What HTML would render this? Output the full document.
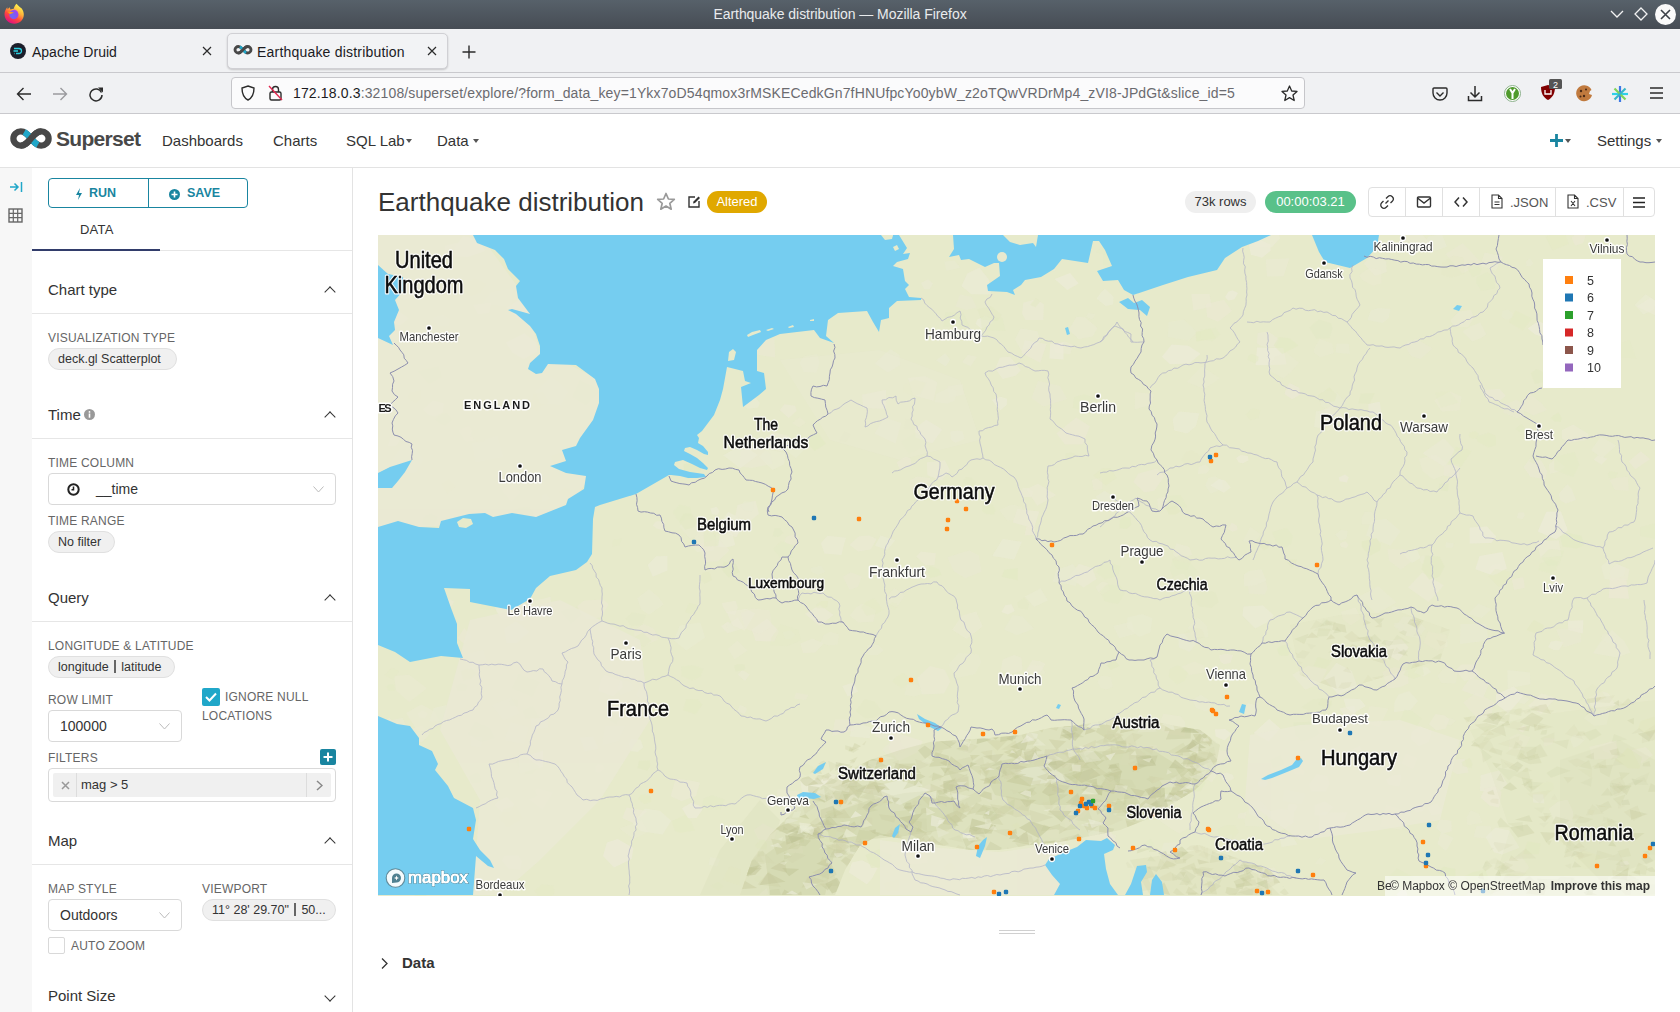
<!DOCTYPE html>
<html><head><meta charset="utf-8"><title>Earthquake distribution</title>
<style>
*{box-sizing:border-box;margin:0;padding:0}
html,body{width:1680px;height:1012px;overflow:hidden;background:#fff;font-family:"Liberation Sans",sans-serif;color:#333}
.abs{position:absolute}
#titlebar{position:absolute;left:0;top:0;width:1680px;height:29px;background:linear-gradient(#57616a,#464c54)}
#titlebar .t{position:absolute;left:0;width:1680px;top:6px;text-align:center;color:#e9ebed;font-size:14px;letter-spacing:-0.05px}
#tabbar{position:absolute;left:0;top:29px;width:1680px;height:44px;background:#f0f1f3;border-bottom:1px solid #c9c9cd}
#acttab{position:absolute;left:227px;top:4px;width:221px;height:36px;background:#f2f3f5;border:1px solid #d0d0d4;border-radius:5px;box-shadow:0 1px 2px rgba(0,0,0,0.18)}
.tabt{position:absolute;top:15px;font-size:14px;color:#1b1b1f;white-space:nowrap}
#navbar{position:absolute;left:0;top:73px;width:1680px;height:41px;background:#f0f1f3;border-bottom:1px solid #c9c9cd}
#urlbox{position:absolute;left:231px;top:4px;width:1074px;height:32px;background:#fbfbfc;border:1px solid #c6c6ca;border-radius:4px}
#urlbox .url{position:absolute;left:61px;top:7px;font-size:14px;color:#6b6b70;white-space:nowrap;letter-spacing:0.145px}
#header{position:absolute;left:0;top:114px;width:1680px;height:54px;background:#fff;border-bottom:1px solid #e3e3e3}
.logo-t{left:56px;top:13px;font-size:21px;font-weight:bold;color:#484848;letter-spacing:-0.7px}
.navi{top:18px;font-size:15px;color:#333}
.caret{width:0;height:0;border-left:3.5px solid transparent;border-right:3.5px solid transparent;border-top:4px solid #555}
#leftrail{position:absolute;left:0;top:168px;width:32px;height:844px;background:#f7f7f7}
#panel{position:absolute;left:32px;top:168px;width:321px;height:844px;background:#fff;border-right:1px solid #e3e3e3}
.btngrp{width:200px;height:30px;border:1px solid #1985a0;border-radius:4px;display:flex;overflow:hidden}
.bseg{position:relative;height:28px;color:#1985a0;font-size:12.5px;font-weight:bold}
.tabdata{font-size:13px;color:#333;letter-spacing:0.2px}
.sect{left:16px;font-size:15px;color:#333}
.chev{left:294px;width:10px;height:10px}
.chev.up{border-left:1.5px solid #333;border-top:1.5px solid #333;transform:rotate(45deg);width:8px;height:8px}
.chev.down{border-right:1.5px solid #333;border-bottom:1.5px solid #333;transform:rotate(45deg);width:8px;height:8px}
.hr{left:0;width:320px;height:1px;background:#e6e6e6}
.lbl{left:16px;font-size:12px;color:#666;letter-spacing:0.2px;white-space:nowrap}
.pill{height:22px;background:#f0f0f0;border:1px solid #e0e0e0;border-radius:11px;font-size:12.5px;color:#333;padding-left:9px;line-height:20px;white-space:nowrap}
.sel{background:#fff;border:1px solid #d9d9d9;border-radius:4px}
#main{position:absolute;left:353px;top:168px;width:1327px;height:844px;background:#fff}
.title{left:25px;top:19px;font-size:26px;color:#333}
.badge{height:22px;border-radius:11px;font-size:13px;text-align:center;line-height:22px}
.btns{height:30px;border:1px solid #e0e0e0;border-radius:4px;display:flex;background:#fff}
.btns .b{position:relative;height:28px;border-right:1px solid #e0e0e0;text-align:center;font-size:14px;color:#333}
#map{position:absolute;left:378px;top:235px;width:1277px;height:661px;overflow:hidden}

</style></head>
<body>
<div id="titlebar">
  <svg class="abs" style="left:0;top:0" width="29" height="29" viewBox="0 0 29 29">
    <defs>
      <linearGradient id="ffo" x1="0.8" y1="0.1" x2="0.3" y2="0.95"><stop offset="0" stop-color="#fff44f"/><stop offset="0.35" stop-color="#ffb23a"/><stop offset="0.65" stop-color="#ff4a3c"/><stop offset="1" stop-color="#e2127e"/></linearGradient>
      <radialGradient id="ffp" cx="0.35" cy="0.65" r="0.8"><stop offset="0" stop-color="#6b6cf5"/><stop offset="0.6" stop-color="#8b4ff0"/><stop offset="1" stop-color="#b040f0"/></radialGradient>
    </defs>
    <path d="M16.5,3.8 C18.5,6 20,7.5 21.5,8.2 C23,10 23.8,12.5 23.8,14.5 C23.8,19.8 19.5,23.8 14.3,23.8 C9,23.8 4.5,19.8 4.5,14.3 C4.5,11.5 5.6,9 7.3,7.2 L7.6,9.2 L9.6,7.3 L10.5,9.5 C11.5,9 12.8,8.8 13.8,8.8 C14.2,6.8 15.2,5 16.5,3.8Z" fill="url(#ffo)"/>
    <circle cx="13.9" cy="14.6" r="4.6" fill="url(#ffp)"/>
    <path d="M7.3,11.8 C9,11.5 12,12 14,12.5 C12.5,13.2 11,13.6 10,14.2 C9.2,13 8.2,12.2 7.3,11.8Z" fill="#ffa10f"/>
    <path d="M13.5,9.5 C15,9.5 16.5,10.2 17,11 L15.5,11.5Z" fill="#b040f0" opacity="0.7"/>
  </svg>
  <div class="t">Earthquake distribution — Mozilla Firefox</div>
  <svg class="abs" style="left:1610px;top:8px" width="14" height="12" viewBox="0 0 14 12"><path d="M1,3 L7,9 L13,3" fill="none" stroke="#f2f2f2" stroke-width="1.3"/></svg>
  <svg class="abs" style="left:1634px;top:7px" width="14" height="14" viewBox="0 0 14 14"><path d="M7,1 L13,7 L7,13 L1,7Z" fill="none" stroke="#f2f2f2" stroke-width="1.3"/></svg>
  <svg class="abs" style="left:1655px;top:4px" width="21" height="21" viewBox="0 0 21 21"><circle cx="10.5" cy="10.5" r="10.5" fill="#fafafa"/><path d="M6,6 L15,15 M15,6 L6,15" stroke="#3b4047" stroke-width="1.6"/></svg>
</div>
<div id="tabbar">
  <svg class="abs" style="left:10px;top:14px" width="16" height="16" viewBox="0 0 16 16"><circle cx="8" cy="8" r="8" fill="#1c1e2a"/><path d="M4,5.5 H9 A2.5,2.5 0 0 1 9,10.5 H6 M3.5,8 H8 M5,10.5 H4.5" fill="none" stroke="#2ccfe0" stroke-width="1.3"/></svg>
  <div class="tabt" style="left:32px">Apache Druid</div>
  <svg class="abs" style="left:202px;top:17px" width="10" height="10" viewBox="0 0 10 10"><path d="M1,1 L9,9 M9,1 L1,9" stroke="#2b2b2b" stroke-width="1.2"/></svg>
  <div id="acttab"></div>
  <svg class="abs" style="left:233px;top:15px" width="20" height="12" viewBox="9 128 44 22"><path d="M31,138.5 C27,134 25,131.3 20.8,131.3 C16.8,131.3 13.4,134.5 13.4,138.5 C13.4,142.5 16.8,145.7 20.8,145.7 C25,145.7 27,143 31,138.5 C35,134 37,131.3 41.2,131.3 C45.2,131.3 48.6,134.5 48.6,138.5 C48.6,142.5 45.2,145.7 41.2,145.7 C37,145.7 35,143 31,138.5Z" fill="none" stroke="#484848" stroke-width="6.3"/><path d="M24.2,131.9 C27,133.5 28.5,135.5 31,138.5 C33.5,141.5 35,143.5 37.8,145.1" fill="none" stroke="#20a7c9" stroke-width="6.3"/><path d="M20.8,145.7 C25,145.7 27,143 31,138.5 C35,134 37,131.3 41.2,131.3" fill="none" stroke="#484848" stroke-width="6.3"/></svg>
  <div class="tabt" style="left:257px;letter-spacing:0.2px">Earthquake distribution</div>
  <svg class="abs" style="left:427px;top:17px" width="10" height="10" viewBox="0 0 10 10"><path d="M1,1 L9,9 M9,1 L1,9" stroke="#2b2b2b" stroke-width="1.2"/></svg>
  <svg class="abs" style="left:462px;top:16px" width="14" height="14" viewBox="0 0 14 14"><path d="M7,0.5 V13.5 M0.5,7 H13.5" stroke="#2b2b2b" stroke-width="1.4"/></svg>
</div>
<div id="navbar">
  <svg class="abs" style="left:16px;top:14px" width="16" height="14" viewBox="0 0 16 14"><path d="M15,7 H1.5 M7.5,1 L1.5,7 L7.5,13" fill="none" stroke="#2b2b2b" stroke-width="1.4"/></svg>
  <svg class="abs" style="left:52px;top:14px" width="16" height="14" viewBox="0 0 16 14"><path d="M1,7 H14.5 M8.5,1 L14.5,7 L8.5,13" fill="none" stroke="#9a9a9e" stroke-width="1.4"/></svg>
  <svg class="abs" style="left:88px;top:13px" width="16" height="16" viewBox="0 0 16 16"><path d="M13.5,6.5 A6,6 0 1 0 14,9" fill="none" stroke="#2b2b2b" stroke-width="1.5"/><path d="M10,1.5 L15,1.5 L15,6.5Z" fill="#2b2b2b"/></svg>
  <div id="urlbox">
    <svg class="abs" style="left:9px;top:7px" width="14" height="16" viewBox="0 0 14 16"><path d="M7,1 L13,3 C13,9 11,13 7,15 C3,13 1,9 1,3Z" fill="none" stroke="#2b2b2b" stroke-width="1.4"/></svg>
    <svg class="abs" style="left:36px;top:7px" width="15" height="16" viewBox="0 0 15 16"><rect x="2" y="7" width="11" height="8" rx="1.5" fill="none" stroke="#2b2b2b" stroke-width="1.4"/><path d="M4.5,7 V4.5 A3,3 0 0 1 10.5,4.5 V7" fill="none" stroke="#2b2b2b" stroke-width="1.4"/><path d="M1,1 L14,15" stroke="#e22850" stroke-width="1.4"/></svg>
    <div class="url"><span style="color:#1b1b1f">172.18.0.3</span>:32108/superset/explore/?form_data_key=1Ykx7oD54qmox3rMSKECedkGn7fHNUfpcYo0ybW_z2oTQwVRDrMp4_zVI8-JPdGt&amp;slice_id=5</div>
    <svg class="abs" style="left:1049px;top:7px" width="17" height="17" viewBox="0 0 17 17"><path d="M8.5,1 L10.7,6 L16,6.4 L12,10 L13.2,15.5 L8.5,12.6 L3.8,15.5 L5,10 L1,6.4 L6.3,6Z" fill="none" stroke="#2b2b2b" stroke-width="1.3" stroke-linejoin="round"/></svg>
  </div>
  <svg class="abs" style="left:1432px;top:13px" width="16" height="16" viewBox="0 0 16 16"><path d="M2,2 H14 A1,1 0 0 1 15,3 V7 A7,7 0 0 1 1,7 V3 A1,1 0 0 1 2,2Z" fill="none" stroke="#2b2b2b" stroke-width="1.4"/><path d="M4.5,6.5 L8,10 L11.5,6.5" fill="none" stroke="#2b2b2b" stroke-width="1.4"/></svg>
  <svg class="abs" style="left:1467px;top:12px" width="16" height="17" viewBox="0 0 16 17"><path d="M8,1 V12 M3.5,7.5 L8,12 L12.5,7.5 M1.5,11 V15.5 H14.5 V11" fill="none" stroke="#2b2b2b" stroke-width="1.5"/></svg>
  <svg class="abs" style="left:1504px;top:12px" width="17" height="17" viewBox="0 0 17 17"><circle cx="8.5" cy="8.5" r="8" fill="#fff" stroke="#8bb08a" stroke-width="1"/><circle cx="8.5" cy="8.5" r="6.5" fill="#4f9a2c"/><path d="M6,4 L8.5,8 L11,4 M8.5,8 V14" stroke="#fff" stroke-width="2" fill="none"/></svg>
  <svg class="abs" style="left:1540px;top:6px" width="22" height="24" viewBox="0 0 22 24"><path d="M1,8 L8,6 L15,8 C15,15 12,19 8,21 C4,19 1,15 1,8Z" fill="#800000"/><path d="M5,11 V15 H11 V11" fill="none" stroke="#fff" stroke-width="1.3"/><rect x="9" y="0" width="13" height="10" rx="1.5" fill="#555"/><text x="15.5" y="8.5" font-size="9" fill="#fff" text-anchor="middle" font-family="Liberation Sans">2</text></svg>
  <svg class="abs" style="left:1576px;top:12px" width="17" height="17" viewBox="0 0 17 17"><path d="M15.5,5 A8,8 0 1 0 16,10 L13,9 L14,6Z" fill="#c07a3e"/><circle cx="5" cy="6" r="1.2" fill="#4a2a16"/><circle cx="8" cy="11" r="1.2" fill="#4a2a16"/><circle cx="4.5" cy="11.5" r="1" fill="#4a2a16"/><circle cx="10" cy="4.5" r="1" fill="#4a2a16"/></svg>
  <svg class="abs" style="left:1611px;top:12px" width="18" height="18" viewBox="0 0 18 18"><path d="M9,1 V17" stroke="#3d7ae6" stroke-width="2.2"/><path d="M1,9 H17" stroke="#2fd0e8" stroke-width="2.2"/><path d="M3.5,3.5 L14.5,14.5" stroke="#7fd45a" stroke-width="2.2"/><path d="M14.5,3.5 L3.5,14.5" stroke="#37b6c8" stroke-width="2.2"/></svg>
  <svg class="abs" style="left:1650px;top:14px" width="13" height="12" viewBox="0 0 13 12"><path d="M0,1 H13 M0,6 H13 M0,11 H13" stroke="#2b2b2b" stroke-width="1.4"/></svg>
</div>

<div id="header">
  <svg class="abs" style="left:0;top:0" width="60" height="54" viewBox="0 114 60 54">
    <path d="M31,138.5 C27,134 25,131.3 20.8,131.3 C16.8,131.3 13.4,134.5 13.4,138.5 C13.4,142.5 16.8,145.7 20.8,145.7 C25,145.7 27,143 31,138.5 C35,134 37,131.3 41.2,131.3 C45.2,131.3 48.6,134.5 48.6,138.5 C48.6,142.5 45.2,145.7 41.2,145.7 C37,145.7 35,143 31,138.5Z" fill="none" stroke="#484848" stroke-width="6.3"/>
    <path d="M24.2,131.9 C27,133.5 28.5,135.5 31,138.5 C33.5,141.5 35,143.5 37.8,145.1" fill="none" stroke="#20a7c9" stroke-width="6.3"/>
    <path d="M20.8,145.7 C25,145.7 27,143 31,138.5 C35,134 37,131.3 41.2,131.3" fill="none" stroke="#484848" stroke-width="6.3"/>
  </svg>
  <div class="abs logo-t">Superset</div>
  <div class="abs navi" style="left:162px">Dashboards</div>
  <div class="abs navi" style="left:273px">Charts</div>
  <div class="abs navi" style="left:346px">SQL Lab</div>
  <div class="abs caret" style="left:406px;top:25px"></div>
  <div class="abs navi" style="left:437px">Data</div>
  <div class="abs caret" style="left:473px;top:25px"></div>
  <svg class="abs" style="left:1550px;top:20px" width="13" height="13" viewBox="0 0 13 13"><path d="M6.5,0 V13 M0,6.5 H13" stroke="#1985a0" stroke-width="2.8"/></svg>
  <div class="abs caret" style="left:1565px;top:25px"></div>
  <div class="abs navi" style="left:1597px">Settings</div>
  <div class="abs caret" style="left:1656px;top:25px"></div>
</div>
<div id="leftrail">
  <svg class="abs" style="left:9px;top:13px" width="14" height="12" viewBox="0 0 14 12"><path d="M1,6 H9 M5.5,2.5 L9,6 L5.5,9.5 M12.5,1 V11" fill="none" stroke="#20a7c9" stroke-width="1.5"/></svg>
  <svg class="abs" style="left:8px;top:40px" width="15" height="15" viewBox="0 0 15 15"><rect x="1" y="1" width="13" height="13" fill="none" stroke="#666" stroke-width="1.4"/><path d="M5.3,1 V14 M9.7,1 V14 M1,5.3 H14 M1,9.7 H14" stroke="#666" stroke-width="1.2"/></svg>
</div>
<div id="panel">
  <div class="abs btngrp" style="left:16px;top:10px">
    <div class="bseg" style="width:100px">
      <svg style="position:absolute;left:26px;top:9px" width="8" height="12" viewBox="0 0 8 12"><path d="M5,0 L1,7 H4 L3,12 L7,5 H4Z" fill="#1985a0"/></svg>
      <span style="position:absolute;left:40px;top:7px">RUN</span>
    </div>
    <div class="bseg" style="width:100px;border-left:1px solid #1985a0">
      <svg style="position:absolute;left:20px;top:10px" width="11" height="11" viewBox="0 0 11 11"><circle cx="5.5" cy="5.5" r="5.5" fill="#1985a0"/><path d="M5.5,2.5 V8.5 M2.5,5.5 H8.5" stroke="#fff" stroke-width="1.6"/></svg>
      <span style="position:absolute;left:38px;top:7px">SAVE</span>
    </div>
  </div>
  <div class="abs" style="left:0;top:82px;width:320px;height:1px;background:#e6e6e6"></div>
  <div class="abs" style="left:0;top:81px;width:128px;height:2px;background:#323d6b"></div>
  <div class="abs tabdata" style="left:48px;top:54px">DATA</div>

  <div class="abs sect" style="top:113px">Chart type</div><div class="abs chev up" style="top:120px"></div>
  <div class="abs hr" style="top:145px"></div>
  <div class="abs lbl" style="top:163px">VISUALIZATION TYPE</div>
  <div class="abs pill" style="left:16px;top:180px;width:129px">deck.gl Scatterplot</div>

  <div class="abs sect" style="top:238px">Time</div>
  <svg class="abs" style="left:52px;top:241px" width="11" height="11" viewBox="0 0 11 11"><circle cx="5.5" cy="5.5" r="5.5" fill="#999"/><rect x="4.7" y="4.5" width="1.6" height="4.2" fill="#fff"/><circle cx="5.5" cy="2.9" r="0.9" fill="#fff"/></svg>
  <div class="abs chev up" style="top:245px"></div>
  <div class="abs hr" style="top:270px"></div>
  <div class="abs lbl" style="top:288px">TIME COLUMN</div>
  <div class="abs sel" style="left:16px;top:305px;width:288px;height:32px">
    <svg style="position:absolute;left:18px;top:9px" width="13" height="13" viewBox="0 0 13 13"><circle cx="6.5" cy="6.5" r="5.2" fill="none" stroke="#222" stroke-width="2"/><path d="M6.5,3.5 V6.8 H4.5" fill="none" stroke="#222" stroke-width="1.5"/></svg>
    <span style="position:absolute;left:47px;top:7px;font-size:14px;color:#333">__time</span>
    <svg style="position:absolute;right:11px;top:12px" width="11" height="7" viewBox="0 0 11 7"><path d="M0.5,0.5 L5.5,6 L10.5,0.5" fill="none" stroke="#bbb" stroke-width="1"/></svg>
  </div>
  <div class="abs lbl" style="top:346px">TIME RANGE</div>
  <div class="abs pill" style="left:16px;top:363px;width:67px">No filter</div>

  <div class="abs sect" style="top:421px">Query</div><div class="abs chev up" style="top:428px"></div>
  <div class="abs hr" style="top:453px"></div>
  <div class="abs lbl" style="top:471px">LONGITUDE &amp; LATITUDE</div>
  <div class="abs pill" style="left:16px;top:488px;width:127px">longitude <span style="display:inline-block;width:1.5px;height:13px;background:#666;vertical-align:-2px;margin:0 2px"></span> latitude</div>
  <div class="abs lbl" style="top:525px">ROW LIMIT</div>
  <div class="abs sel" style="left:16px;top:542px;width:134px;height:32px">
    <span style="position:absolute;left:11px;top:7px;font-size:14px;color:#333">100000</span>
    <svg style="position:absolute;right:11px;top:12px" width="11" height="7" viewBox="0 0 11 7"><path d="M0.5,0.5 L5.5,6 L10.5,0.5" fill="none" stroke="#bbb" stroke-width="1"/></svg>
  </div>
  <div class="abs" style="left:170px;top:520px;width:18px;height:18px;background:#20a7c9;border-radius:2px">
    <svg style="position:absolute;left:3px;top:4px" width="12" height="10" viewBox="0 0 12 10"><path d="M1,5 L4.5,8.5 L11,1.5" fill="none" stroke="#fff" stroke-width="2"/></svg>
  </div>
  <div class="abs lbl" style="left:193px;top:522px">IGNORE NULL</div>
  <div class="abs lbl" style="left:170px;top:541px">LOCATIONS</div>
  <div class="abs lbl" style="top:583px">FILTERS</div>
  <div class="abs" style="left:288px;top:581px;width:16px;height:16px;background:#1985a0;border-radius:2px">
    <svg style="position:absolute;left:3px;top:3px" width="10" height="10" viewBox="0 0 10 10"><path d="M5,0.5 V9.5 M0.5,5 H9.5" stroke="#fff" stroke-width="2"/></svg>
  </div>
  <div class="abs sel" style="left:16px;top:600px;width:288px;height:34px">
    <div style="position:absolute;left:4px;top:4px;width:278px;height:24px;background:#f0f0f0;border-radius:2px">
      <svg style="position:absolute;left:8px;top:8px" width="9" height="9" viewBox="0 0 9 9"><path d="M1,1 L8,8 M8,1 L1,8" stroke="#999" stroke-width="1.5"/></svg>
      <div style="position:absolute;left:23px;top:0;width:1px;height:24px;background:#ddd"></div>
      <span style="position:absolute;left:28px;top:4px;font-size:13px;color:#333">mag &gt; 5</span>
      <div style="position:absolute;left:253px;top:0;width:1px;height:24px;background:#ddd"></div>
      <svg style="position:absolute;left:263px;top:7px" width="7" height="11" viewBox="0 0 7 11"><path d="M1,1 L6,5.5 L1,10" fill="none" stroke="#888" stroke-width="1.5"/></svg>
    </div>
  </div>

  <div class="abs sect" style="top:664px">Map</div><div class="abs chev up" style="top:671px"></div>
  <div class="abs hr" style="top:696px"></div>
  <div class="abs lbl" style="top:714px">MAP STYLE</div>
  <div class="abs lbl" style="left:170px;top:714px">VIEWPORT</div>
  <div class="abs sel" style="left:16px;top:731px;width:134px;height:32px">
    <span style="position:absolute;left:11px;top:7px;font-size:14px;color:#333">Outdoors</span>
    <svg style="position:absolute;right:11px;top:12px" width="11" height="7" viewBox="0 0 11 7"><path d="M0.5,0.5 L5.5,6 L10.5,0.5" fill="none" stroke="#bbb" stroke-width="1"/></svg>
  </div>
  <div class="abs pill" style="left:170px;top:731px;width:134px">11° 28' 29.70" <span style="display:inline-block;width:1.5px;height:13px;background:#666;vertical-align:-2px;margin:0 2px"></span> 50...</div>
  <div class="abs" style="left:16px;top:769px;width:17px;height:17px;border:1px solid #d9d9d9;border-radius:2px;background:#fff"></div>
  <div class="abs lbl" style="left:39px;top:771px">AUTO ZOOM</div>
  <div class="abs sect" style="top:819px">Point Size</div><div class="abs chev down" style="top:824px"></div>
</div>
<div id="main">
  <div class="abs title">Earthquake distribution</div>
  <svg class="abs" style="left:303px;top:24px" width="20" height="19" viewBox="0 0 20 19"><path d="M10,1.5 L12.4,7 L18.3,7.4 L13.8,11.3 L15.2,17.2 L10,14 L4.8,17.2 L6.2,11.3 L1.7,7.4 L7.6,7Z" fill="none" stroke="#999" stroke-width="1.7" stroke-linejoin="round"/></svg>
  <svg class="abs" style="left:334px;top:27px" width="14" height="14" viewBox="0 0 14 14"><path d="M8,2 H2 V12 H12 V6" fill="none" stroke="#333" stroke-width="1.4"/><path d="M6,8.5 L6.5,6.5 L11.5,1.5 L13,3 L8,8Z" fill="#333"/></svg>
  <div class="abs badge" style="left:354px;top:23px;width:60px;background:#e0a800;color:#fff">Altered</div>
  <div class="abs badge" style="left:832px;top:23px;width:71px;background:#efefef;color:#333">73k rows</div>
  <div class="abs badge" style="left:912px;top:23px;width:91px;background:#59c189;color:#fff">00:00:03.21</div>
  <div class="abs btns" style="left:1015px;top:19px">
    <div class="b" style="width:37px"><svg width="16" height="16" viewBox="0 0 16 16" style="margin-top:6px"><path d="M6.5,9.5 L9.5,6.5 M7,4.5 L8.8,2.7 A2.5,2.5 0 0 1 13.3,7.2 L11.5,9 M9,11.5 L7.2,13.3 A2.5,2.5 0 0 1 2.7,8.8 L4.5,7" fill="none" stroke="#333" stroke-width="1.3"/></svg></div>
    <div class="b" style="width:37px"><svg width="16" height="14" viewBox="0 0 16 14" style="margin-top:7px"><rect x="1.5" y="2" width="13" height="10" rx="1" fill="none" stroke="#333" stroke-width="1.4"/><path d="M1.5,3 L8,8 L14.5,3" fill="none" stroke="#333" stroke-width="1.4"/></svg></div>
    <div class="b" style="width:37px"><svg width="14" height="12" viewBox="0 0 14 12" style="margin-top:8px"><path d="M5,1.5 L1,6 L5,10.5 M9,1.5 L13,6 L9,10.5" fill="none" stroke="#333" stroke-width="1.5"/></svg></div>
    <div class="b" style="width:76px"><svg width="12" height="15" viewBox="0 0 12 15" style="position:absolute;left:11px;top:6px"><path d="M1,1 H7.5 L11,4.5 V14 H1Z M7.5,1 V4.5 H11 M3.5,8 H8.5 M3.5,10.5 H8.5" fill="none" stroke="#333" stroke-width="1.1"/></svg><span style="position:absolute;left:30px;top:7px;font-size:13px;color:#555">.JSON</span></div>
    <div class="b" style="width:68px"><svg width="12" height="15" viewBox="0 0 12 15" style="position:absolute;left:11px;top:6px"><path d="M1,1 H7.5 L11,4.5 V14 H1Z M7.5,1 V4.5 H11 M4,7 L8,12 M8,7 L4,12" fill="none" stroke="#333" stroke-width="1.1"/></svg><span style="position:absolute;left:30px;top:7px;font-size:13px;color:#555">.CSV</span></div>
    <div class="b" style="width:30px;border-right:none"><svg width="12" height="11" viewBox="0 0 12 11" style="margin-top:9px"><path d="M0,1 H12 M0,5.5 H12 M0,10 H12" stroke="#222" stroke-width="1.6"/></svg></div>
  </div>
  <div class="abs" style="left:646px;top:762px;width:36px;height:1px;background:#d0d0d0"></div>
  <div class="abs" style="left:646px;top:765px;width:36px;height:1px;background:#d0d0d0"></div>
  <svg class="abs" style="left:27px;top:789px" width="9" height="13" viewBox="0 0 9 13"><path d="M2,1.5 L7,6.5 L2,11.5" fill="none" stroke="#333" stroke-width="1.3"/></svg>
  <div class="abs" style="left:49px;top:786px;font-size:15px;font-weight:bold;color:#333">Data</div>
</div>

<div id="map"><svg width="1277" height="661" viewBox="378 235 1277 661" style="display:block;font-family:'Liberation Sans',sans-serif">
<rect x="378" y="235" width="1277" height="661" fill="#e7eacb"/>
<defs><clipPath id="cpA"><polygon points="740,895 752,860 770,835 790,815 815,790 840,775 870,760 900,750 930,742 960,740 990,738 1020,735 1050,728 1080,725 1110,720 1140,718 1170,725 1200,730 1220,745 1215,770 1195,790 1170,805 1150,818 1120,830 1090,836 1060,842 1030,845 1000,850 970,850 940,845 910,840 880,835 860,845 845,870 835,895"/></clipPath><clipPath id="cpC"><polygon points="1450,720 1540,705 1655,690 1655,895 1470,895 1500,830 1480,770"/></clipPath><clipPath id="cpS"><polygon points="1290,625 1340,615 1400,612 1450,630 1440,660 1400,672 1340,690 1300,675"/></clipPath><clipPath id="cpD"><polygon points="1120,850 1200,845 1270,870 1290,895 1140,895"/></clipPath><clipPath id="cpJ"><polygon points="800,780 840,745 870,735 850,770 815,800"/></clipPath></defs><g><polygon points="1163.6,713.7 1180.8,716.6 1185.0,721.8 1184.8,736.2 1169.2,734.3 1157.2,728.6" fill="#ebe9d4" opacity="0.51"/><polygon points="1551.4,744.7 1543.8,746.6 1543.7,738.1 1555.6,738.6" fill="#ebe9d4" opacity="0.53"/><polygon points="647.3,810.9 633.6,823.2 622.4,817.9 626.4,807.4" fill="#ebe9d4" opacity="0.73"/><polygon points="1119.1,638.2 1113.3,626.1 1131.7,621.4 1134.8,634.1" fill="#e9ead2" opacity="0.54"/><polygon points="886.6,596.7 894.1,588.0 905.2,595.1 896.7,607.7 888.1,603.6" fill="#e9ead2" opacity="0.50"/><polygon points="976.2,611.5 982.6,626.2 966.8,639.0 952.2,629.8 962.1,615.6" fill="#ebe9d4" opacity="0.52"/><polygon points="1408.6,647.4 1398.7,660.7 1388.8,655.7 1385.2,641.3 1401.5,638.9" fill="#ecebd8" opacity="0.79"/><polygon points="1199.5,772.2 1185.0,770.1 1185.8,761.0 1199.2,757.9" fill="#ebe9d4" opacity="0.46"/><polygon points="1548.0,646.9 1550.8,641.7 1556.4,640.6 1563.5,642.6 1559.2,650.2 1553.9,650.1" fill="#ecebd8" opacity="0.60"/><polygon points="1040.6,588.2 1047.9,600.5 1034.1,607.1 1024.8,596.5" fill="#e9ead2" opacity="0.69"/><polygon points="1593.5,459.8 1598.1,454.9 1607.5,458.8 1601.5,464.7" fill="#ebe9d4" opacity="0.70"/><polygon points="1422.4,470.8 1418.8,458.8 1436.0,454.8 1449.4,465.2 1450.6,472.6 1433.0,479.4" fill="#e9ead2" opacity="0.61"/><polygon points="1569.7,442.4 1561.9,438.5 1561.8,430.3 1573.0,424.5 1588.5,433.9 1586.6,440.0" fill="#ecebd8" opacity="0.53"/><polygon points="607.1,365.3 604.1,362.1 609.5,358.9 616.0,362.6 612.1,367.0" fill="#e9ead2" opacity="0.55"/><polygon points="419.0,639.1 421.6,637.2 427.3,636.3 429.9,641.0 427.5,644.2 421.2,644.0" fill="#ecebd8" opacity="0.64"/><polygon points="823.1,828.5 821.0,823.9 828.7,822.4 829.8,828.2" fill="#ebe9d4" opacity="0.79"/><polygon points="851.9,862.4 861.9,860.3 877.6,868.0 872.0,878.4 866.9,884.2 848.8,872.4" fill="#ecebd8" opacity="0.71"/><polygon points="1434.3,250.9 1421.1,247.6 1428.5,236.6 1441.8,234.1 1447.0,246.8" fill="#e9ead2" opacity="0.76"/><polygon points="395.2,324.6 390.8,318.3 395.6,311.7 400.6,312.6 408.8,318.2 401.0,324.9" fill="#ecebd8" opacity="0.57"/><polygon points="1402.7,616.6 1414.9,617.3 1425.6,628.5 1418.6,638.0 1406.3,636.1 1395.1,627.6" fill="#e9ead2" opacity="0.71"/><polygon points="1551.1,325.7 1551.6,332.0 1546.2,338.1 1535.2,334.5 1527.6,328.4 1538.0,321.2" fill="#ecebd8" opacity="0.80"/><polygon points="1265.8,259.4 1289.3,258.3 1283.6,276.3 1266.9,276.4" fill="#ecebd8" opacity="0.43"/><polygon points="663.7,604.2 649.0,614.8 641.4,609.6 637.1,598.5 648.9,589.3 658.3,597.1" fill="#e9ead2" opacity="0.52"/><polygon points="1097.6,682.4 1100.6,675.7 1111.0,676.7 1113.0,687.0 1106.1,689.4 1100.4,687.4" fill="#ebe9d4" opacity="0.43"/><polygon points="1225.1,297.0 1228.3,291.7 1232.6,290.2 1238.0,293.1 1234.2,299.5 1228.1,300.6" fill="#ecebd8" opacity="0.79"/><polygon points="1222.4,780.0 1221.0,774.5 1226.8,772.5 1232.2,774.5 1234.2,778.2 1227.2,782.3" fill="#ecebd8" opacity="0.64"/><polygon points="1118.4,724.5 1107.3,733.6 1101.4,721.9 1111.7,717.3" fill="#e9ead2" opacity="0.77"/><polygon points="794.9,544.7 786.9,544.0 784.5,541.3 786.3,536.6 793.0,534.8 799.1,538.0" fill="#ebe9d4" opacity="0.53"/><polygon points="459.6,255.1 444.3,255.7 445.4,245.7 457.3,242.8" fill="#ecebd8" opacity="0.65"/><polygon points="1528.0,706.1 1541.4,693.2 1556.0,698.0 1541.3,713.7" fill="#ebe9d4" opacity="0.69"/><polygon points="716.4,546.8 716.1,534.3 722.6,533.6 732.3,532.9 735.2,545.1 726.5,547.4" fill="#ecebd8" opacity="0.60"/><polygon points="1375.1,276.1 1363.7,263.4 1372.1,255.3 1386.3,261.3 1386.6,271.9" fill="#e9ead2" opacity="0.79"/><polygon points="598.7,286.3 589.6,294.7 574.6,294.4 572.8,281.2 577.7,272.9 589.9,276.7" fill="#ebe9d4" opacity="0.59"/><polygon points="1381.3,412.9 1368.8,415.6 1368.3,403.9 1379.7,401.7" fill="#ecebd8" opacity="0.68"/><polygon points="1379.9,826.8 1386.0,804.6 1411.5,812.7 1401.6,829.7" fill="#e9ead2" opacity="0.66"/><polygon points="1606.6,724.8 1594.2,725.9 1583.7,718.2 1593.3,708.4 1610.3,709.6" fill="#ecebd8" opacity="0.41"/><polygon points="450.5,319.4 448.1,326.4 439.1,325.9 432.4,318.0 443.6,315.1" fill="#e9ead2" opacity="0.64"/><polygon points="1183.9,319.6 1197.2,332.6 1188.6,340.7 1167.7,337.1 1168.5,321.9" fill="#e9ead2" opacity="0.40"/><polygon points="552.9,792.6 542.5,810.0 528.6,799.1 536.9,788.3" fill="#e9ead2" opacity="0.61"/><polygon points="1359.8,746.0 1363.7,755.1 1352.0,760.0 1345.7,752.3" fill="#ecebd8" opacity="0.47"/><polygon points="511.0,697.7 520.1,713.0 503.5,720.5 492.0,705.3" fill="#e9ead2" opacity="0.63"/><polygon points="607.1,487.6 620.3,486.3 621.9,497.2 606.7,498.6" fill="#e9ead2" opacity="0.67"/><polygon points="1071.1,764.8 1067.0,767.9 1056.1,768.4 1052.5,759.8 1058.3,754.5 1067.4,754.3" fill="#ecebd8" opacity="0.43"/><polygon points="1336.5,662.8 1351.8,670.9 1357.4,686.5 1338.4,694.7 1324.0,678.5" fill="#ecebd8" opacity="0.67"/><polygon points="870.3,727.1 869.8,738.3 849.7,736.5 852.4,722.4" fill="#ecebd8" opacity="0.52"/><polygon points="1400.7,763.6 1393.0,766.0 1391.0,759.3 1399.0,758.1" fill="#ecebd8" opacity="0.57"/><polygon points="1059.0,837.4 1052.0,838.7 1044.5,834.6 1050.2,826.8 1057.9,828.9" fill="#e9ead2" opacity="0.53"/><polygon points="482.5,862.2 480.5,869.3 474.7,870.2 468.8,864.8 470.5,862.2 475.6,860.3" fill="#ecebd8" opacity="0.55"/><polygon points="1355.5,607.4 1361.1,618.6 1350.8,625.3 1343.0,619.7 1341.1,611.8" fill="#ebe9d4" opacity="0.47"/><polygon points="1504.2,894.0 1504.3,879.8 1528.0,879.9 1526.0,899.8" fill="#e9ead2" opacity="0.43"/><polygon points="1354.3,705.7 1356.0,712.9 1346.6,719.9 1339.5,708.3" fill="#ecebd8" opacity="0.63"/><polygon points="739.8,466.4 740.6,451.3 753.7,442.4 769.9,453.1 772.6,463.8 751.8,468.1" fill="#ebe9d4" opacity="0.54"/><polygon points="1414.7,226.4 1429.7,243.0 1422.1,251.0 1401.0,247.5 1399.8,233.8" fill="#ebe9d4" opacity="0.64"/><polygon points="1445.3,547.8 1446.1,541.9 1454.2,543.5 1452.8,547.7" fill="#e9ead2" opacity="0.57"/><polygon points="1507.6,783.9 1499.0,792.1 1479.9,790.9 1480.6,775.2 1499.1,770.3" fill="#ecebd8" opacity="0.59"/><polygon points="742.4,670.1 749.8,674.4 745.0,681.0 737.6,674.6" fill="#ebe9d4" opacity="0.64"/><polygon points="568.1,391.4 560.5,404.7 540.8,403.4 535.4,391.5 551.3,376.8 558.2,381.9" fill="#e9ead2" opacity="0.56"/><polygon points="777.1,830.6 773.2,841.7 758.4,839.2 753.7,830.1 763.0,823.6" fill="#ebe9d4" opacity="0.49"/><polygon points="1292.1,399.3 1284.4,394.0 1286.2,388.8 1289.5,383.0 1299.2,387.7 1300.6,394.5" fill="#ebe9d4" opacity="0.80"/><polygon points="751.9,338.3 774.5,339.2 775.2,357.4 751.6,353.8" fill="#ebe9d4" opacity="0.54"/><polygon points="1014.7,611.0 1007.9,614.6 1001.5,612.1 1005.3,605.3 1011.5,604.2" fill="#ecebd8" opacity="0.65"/><polygon points="867.6,645.1 878.0,644.7 883.8,650.5 877.1,655.3 867.6,655.2" fill="#e9ead2" opacity="0.60"/><polygon points="1480.3,266.1 1484.6,252.5 1503.0,256.7 1495.9,270.7" fill="#ecebd8" opacity="0.43"/><polygon points="978.8,654.4 981.2,662.6 974.8,674.3 957.6,677.9 948.3,664.9 958.6,653.1" fill="#e9ead2" opacity="0.49"/><polygon points="716.9,866.8 708.4,864.5 710.3,856.9 720.1,859.0" fill="#e9ead2" opacity="0.58"/><polygon points="1102.5,835.4 1109.6,833.3 1116.3,835.6 1113.9,841.6 1106.1,841.1" fill="#ebe9d4" opacity="0.54"/><polygon points="1524.6,417.4 1516.3,417.9 1503.1,412.5 1505.8,404.4 1516.5,399.6 1523.1,403.8" fill="#ebe9d4" opacity="0.44"/><polygon points="1470.7,810.3 1479.0,813.8 1482.6,822.7 1467.5,825.3 1466.4,817.7" fill="#ebe9d4" opacity="0.43"/><polygon points="927.6,863.1 911.8,864.3 905.6,861.9 905.8,851.7 915.1,844.3 927.2,852.8" fill="#ebe9d4" opacity="0.52"/><polygon points="963.0,776.1 961.0,780.0 954.2,781.4 953.2,779.0 955.3,773.5 959.2,773.4" fill="#e9ead2" opacity="0.65"/><polygon points="691.1,345.1 697.4,338.2 715.6,337.4 720.4,347.3 705.6,353.3" fill="#ecebd8" opacity="0.69"/><polygon points="690.6,544.7 698.3,531.7 712.0,531.6 716.0,539.3 713.7,550.5 697.0,552.1" fill="#e9ead2" opacity="0.77"/><polygon points="723.2,455.3 742.6,444.7 757.8,455.1 740.3,468.3" fill="#ecebd8" opacity="0.52"/><polygon points="1461.3,664.5 1473.6,664.6 1479.0,673.3 1473.7,678.5 1464.1,681.1 1455.7,670.1" fill="#ecebd8" opacity="0.49"/><polygon points="393.0,877.5 380.1,889.3 365.8,879.8 376.6,867.5" fill="#ecebd8" opacity="0.48"/><polygon points="663.1,286.8 666.6,269.5 689.5,269.2 691.6,282.6 683.9,294.4" fill="#ecebd8" opacity="0.57"/><polygon points="962.0,362.3 967.9,354.7 977.0,356.8 970.7,366.4" fill="#e9ead2" opacity="0.65"/><polygon points="1284.6,789.4 1305.5,793.8 1301.6,804.7 1282.5,800.7" fill="#ebe9d4" opacity="0.40"/><polygon points="915.5,437.8 915.0,428.7 926.1,419.8 942.2,429.6 932.3,443.3" fill="#ecebd8" opacity="0.68"/><polygon points="1489.7,682.6 1483.1,697.9 1461.2,690.2 1470.1,678.1" fill="#ebe9d4" opacity="0.63"/><polygon points="1297.7,806.3 1295.3,811.5 1289.6,812.0 1287.3,809.7 1288.7,803.7 1295.1,803.8" fill="#ebe9d4" opacity="0.78"/><polygon points="1422.6,453.2 1443.9,438.2 1457.5,452.4 1443.7,466.5" fill="#ebe9d4" opacity="0.64"/><polygon points="1072.9,344.4 1070.3,354.2 1055.3,352.4 1052.9,345.7 1064.2,341.3" fill="#ebe9d4" opacity="0.56"/><polygon points="777.5,789.3 798.7,791.2 802.3,806.3 793.0,812.1 775.1,803.4" fill="#ebe9d4" opacity="0.46"/><polygon points="727.0,530.4 731.7,528.8 736.2,528.4 739.3,531.6 736.5,537.2 729.3,534.9" fill="#ecebd8" opacity="0.58"/><polygon points="514.4,804.1 510.3,811.6 501.9,811.9 494.4,804.9 498.7,800.7 506.8,796.8" fill="#ebe9d4" opacity="0.66"/><polygon points="1171.0,504.8 1158.2,509.7 1157.0,499.0 1164.3,496.3" fill="#ebe9d4" opacity="0.42"/><polygon points="528.9,727.5 524.1,744.1 504.2,740.3 510.8,722.0" fill="#e9ead2" opacity="0.63"/><polygon points="887.3,550.1 874.9,545.8 880.6,535.4 895.4,540.2" fill="#ecebd8" opacity="0.56"/><polygon points="1474.2,889.5 1479.6,891.5 1478.3,896.9 1471.1,898.3 1465.1,896.5 1468.8,890.9" fill="#ebe9d4" opacity="0.41"/><polygon points="1427.7,667.5 1430.9,672.1 1423.6,676.4 1414.0,672.4 1418.4,666.7" fill="#ecebd8" opacity="0.51"/><polygon points="1050.3,259.2 1055.6,263.4 1055.0,271.5 1045.2,269.1 1043.9,263.7" fill="#e9ead2" opacity="0.63"/><polygon points="1559.5,471.6 1549.8,473.9 1548.9,464.7 1555.2,458.4 1565.3,467.1" fill="#e9ead2" opacity="0.70"/><polygon points="1583.6,388.6 1572.1,377.8 1582.1,370.0 1598.9,380.9" fill="#ebe9d4" opacity="0.40"/><polygon points="1254.8,246.5 1251.4,227.7 1263.8,225.5 1277.5,224.6 1280.0,238.4 1271.5,247.5" fill="#ecebd8" opacity="0.55"/><polygon points="1203.9,389.0 1186.9,381.9 1201.6,366.6 1220.2,378.2" fill="#e9ead2" opacity="0.50"/><polygon points="1150.3,632.4 1139.2,637.0 1126.9,627.5 1127.3,617.4 1142.4,614.1 1152.5,618.3" fill="#e9ead2" opacity="0.64"/><polygon points="816.5,372.8 803.9,371.9 799.6,362.8 804.0,356.3 817.1,354.1 819.5,362.6" fill="#e9ead2" opacity="0.45"/><polygon points="674.0,640.6 679.7,625.4 700.3,622.4 705.2,637.4 686.3,650.5" fill="#e9ead2" opacity="0.64"/><polygon points="630.9,739.0 640.7,739.7 643.4,747.6 637.5,751.9 631.1,751.2 628.8,744.2" fill="#ecebd8" opacity="0.57"/><polygon points="982.9,797.8 986.9,793.0 995.3,794.2 995.8,798.4 989.2,802.6" fill="#e9ead2" opacity="0.72"/><polygon points="1470.7,326.3 1480.2,322.5 1486.4,334.3 1481.5,337.7 1472.3,341.5 1462.5,331.5" fill="#e9ead2" opacity="0.65"/><polygon points="1463.1,702.5 1476.3,692.4 1494.3,702.1 1490.9,716.9 1476.8,718.1" fill="#ebe9d4" opacity="0.49"/><polygon points="1236.9,525.5 1237.6,530.0 1232.9,531.8 1227.8,529.1 1231.6,522.7" fill="#ebe9d4" opacity="0.71"/><polygon points="1653.8,309.7 1643.3,314.6 1634.6,305.1 1645.6,294.2 1656.5,301.4" fill="#ecebd8" opacity="0.42"/><polygon points="1523.5,512.3 1525.0,515.3 1522.2,519.3 1516.8,518.0 1518.4,512.6" fill="#e9ead2" opacity="0.75"/><polygon points="713.8,530.5 728.3,512.0 747.9,522.3 737.6,534.2" fill="#ecebd8" opacity="0.66"/><polygon points="1023.1,487.7 1028.0,488.3 1033.0,491.4 1031.7,497.0 1023.4,497.0 1019.0,492.9" fill="#ecebd8" opacity="0.49"/><polygon points="1007.0,398.8 1006.8,404.7 1000.5,410.3 995.9,405.2 992.0,400.0 1000.4,396.7" fill="#ecebd8" opacity="0.67"/><polygon points="1361.5,518.1 1364.9,511.7 1371.7,512.1 1377.0,517.3 1373.5,524.4 1361.9,524.5" fill="#e9ead2" opacity="0.50"/><polygon points="1030.5,665.3 1041.5,665.8 1045.3,673.2 1035.3,677.3 1024.7,672.2" fill="#e9ead2" opacity="0.47"/><polygon points="1297.6,844.5 1281.5,846.9 1279.6,836.7 1292.2,835.9" fill="#ecebd8" opacity="0.56"/><polygon points="1093.7,490.2 1091.7,479.9 1102.2,477.2 1102.3,489.1" fill="#ebe9d4" opacity="0.53"/><polygon points="482.7,576.3 471.5,558.9 495.7,547.6 508.1,568.2" fill="#e9ead2" opacity="0.65"/><polygon points="1140.2,765.2 1120.4,765.1 1119.5,748.1 1143.3,748.6" fill="#e9ead2" opacity="0.54"/><polygon points="917.0,678.0 929.8,666.0 944.6,669.6 950.4,681.5 944.1,693.4 922.1,694.6" fill="#ebe9d4" opacity="0.69"/><polygon points="784.2,404.2 795.0,405.7 796.7,410.9 788.6,417.9 779.9,410.2" fill="#ebe9d4" opacity="0.79"/><polygon points="1007.0,520.3 999.2,510.1 1011.9,504.5 1022.3,507.1 1018.8,520.4" fill="#e9ead2" opacity="0.43"/><polygon points="737.4,640.4 747.5,650.6 734.7,659.2 727.9,648.9" fill="#e9ead2" opacity="0.61"/><polygon points="643.5,623.9 654.0,628.5 658.4,639.6 643.9,646.0 634.2,641.8 634.4,630.2" fill="#ebe9d4" opacity="0.45"/><polygon points="411.8,728.5 422.1,725.8 430.3,733.6 421.8,742.5 413.6,739.8" fill="#e9ead2" opacity="0.70"/><polygon points="1248.9,245.1 1256.7,238.3 1270.3,244.4 1270.6,250.7 1262.0,257.7 1250.9,254.7" fill="#ecebd8" opacity="0.76"/><polygon points="1556.1,539.2 1537.7,531.6 1546.4,511.7 1561.0,511.4 1567.8,530.2" fill="#ecebd8" opacity="0.75"/><polygon points="790.0,326.4 778.2,324.1 782.5,309.9 798.9,313.4" fill="#e9ead2" opacity="0.75"/><polygon points="604.8,768.5 599.0,773.0 595.0,771.2 595.5,765.6 598.5,764.1 602.7,765.1" fill="#ebe9d4" opacity="0.45"/><polygon points="1353.4,713.2 1346.0,707.6 1343.5,698.6 1360.0,698.9 1365.8,706.1" fill="#ecebd8" opacity="0.67"/><polygon points="735.6,629.8 727.5,633.5 721.1,626.2 728.0,621.5" fill="#ebe9d4" opacity="0.79"/><polygon points="825.0,796.8 821.0,783.8 829.2,773.0 855.6,780.3 857.4,795.7 840.3,804.2" fill="#ecebd8" opacity="0.45"/><polygon points="547.4,717.6 548.2,727.4 531.4,730.2 530.5,718.4" fill="#ebe9d4" opacity="0.74"/><polygon points="1220.3,661.6 1219.3,655.2 1225.9,653.7 1233.1,654.9 1230.4,663.1 1223.8,664.2" fill="#ebe9d4" opacity="0.72"/><polygon points="981.5,571.8 965.2,578.2 953.5,571.1 947.3,557.2 969.1,550.3 978.8,555.6" fill="#ebe9d4" opacity="0.48"/><polygon points="1617.6,748.7 1613.0,754.8 1602.8,750.7 1602.3,745.0 1611.6,740.5 1615.4,743.2" fill="#ebe9d4" opacity="0.57"/><polygon points="1405.2,650.6 1399.4,656.0 1393.5,653.5 1398.7,647.5" fill="#ecebd8" opacity="0.51"/><polygon points="821.1,565.6 825.4,571.8 818.2,575.0 811.5,572.0 810.8,568.0" fill="#e9ead2" opacity="0.48"/><polygon points="947.6,797.2 939.5,795.7 928.8,786.3 942.8,776.7 954.2,787.4" fill="#e9ead2" opacity="0.50"/><polygon points="1171.6,344.4 1188.4,345.8 1200.6,353.7 1189.3,363.5 1170.0,364.3 1161.9,356.8" fill="#ecebd8" opacity="0.74"/><polygon points="1624.4,641.2 1630.4,652.5 1617.1,657.6 1592.9,653.3 1600.4,642.3 1612.0,630.0" fill="#e9ead2" opacity="0.77"/><polygon points="635.0,688.8 620.7,695.3 616.9,688.7 620.6,679.8 629.5,681.8" fill="#e9ead2" opacity="0.69"/><polygon points="925.3,565.3 916.3,556.4 920.8,551.6 935.9,553.2 934.5,565.0" fill="#ebe9d4" opacity="0.65"/><polygon points="859.0,536.2 869.2,535.4 876.6,538.9 870.7,549.6 858.1,551.5 849.5,544.8" fill="#ebe9d4" opacity="0.66"/><polygon points="934.8,789.6 931.8,795.2 924.7,794.7 921.9,788.1 929.2,784.0" fill="#ebe9d4" opacity="0.75"/><polygon points="388.0,445.8 390.6,438.1 396.0,436.8 399.6,441.3 395.5,445.9" fill="#ecebd8" opacity="0.68"/><polygon points="1017.4,508.9 1039.4,511.4 1034.0,528.5 1012.7,522.6" fill="#ebe9d4" opacity="0.74"/><polygon points="1037.2,505.7 1026.3,489.0 1038.1,483.7 1056.2,494.9" fill="#ebe9d4" opacity="0.61"/><polygon points="737.7,617.5 744.1,627.9 730.1,632.8 726.5,626.0" fill="#e9ead2" opacity="0.73"/><polygon points="630.8,338.8 621.6,329.9 630.1,317.8 644.6,315.0 647.4,327.4 645.8,333.3" fill="#ecebd8" opacity="0.50"/><polygon points="1187.7,628.0 1197.5,617.2 1207.2,625.9 1208.2,637.2 1192.6,636.7" fill="#e9ead2" opacity="0.49"/><polygon points="800.5,838.5 803.4,853.2 787.8,853.2 785.3,840.9" fill="#e9ead2" opacity="0.75"/><polygon points="1379.3,727.6 1363.8,721.5 1369.9,705.9 1388.4,708.5" fill="#ebe9d4" opacity="0.47"/><polygon points="1196.0,708.1 1192.1,699.9 1200.8,694.7 1208.5,699.7 1211.4,708.0 1205.6,711.2" fill="#e9ead2" opacity="0.62"/><polygon points="1262.7,820.6 1249.4,814.1 1247.7,802.6 1259.4,800.1 1269.9,811.0" fill="#ebe9d4" opacity="0.63"/><polygon points="444.7,842.2 434.4,832.2 444.5,820.7 460.0,821.5 463.1,836.8" fill="#ebe9d4" opacity="0.70"/><polygon points="412.9,283.0 416.4,294.4 404.6,300.0 393.1,292.1 400.9,276.4" fill="#ecebd8" opacity="0.77"/><polygon points="828.8,645.4 820.2,642.5 823.8,635.1 830.2,631.8 838.9,634.4 837.7,644.4" fill="#e9ead2" opacity="0.51"/><polygon points="778.9,631.1 774.2,641.5 755.7,641.1 751.7,629.8 766.9,618.7" fill="#ebe9d4" opacity="0.72"/><polygon points="1255.0,578.1 1265.5,579.6 1267.7,588.7 1264.7,594.8 1248.9,593.4 1247.6,582.6" fill="#ebe9d4" opacity="0.48"/><polygon points="562.8,336.5 555.7,321.7 576.6,314.7 583.2,333.9" fill="#ecebd8" opacity="0.61"/><polygon points="1092.2,568.1 1096.5,579.0 1083.6,587.5 1068.3,577.2 1079.0,563.8" fill="#ebe9d4" opacity="0.74"/><polygon points="1414.1,808.7 1416.3,803.9 1422.6,803.1 1425.4,807.2 1422.6,811.2 1415.5,813.1" fill="#ecebd8" opacity="0.48"/><polygon points="584.9,751.6 579.7,737.6 593.1,736.4 598.6,748.8" fill="#ebe9d4" opacity="0.79"/><polygon points="960.3,729.6 970.4,731.7 971.0,735.8 967.3,740.9 958.2,739.0 957.4,733.7" fill="#e9ead2" opacity="0.66"/><polygon points="1582.8,633.4 1568.2,629.9 1567.8,620.7 1583.4,620.2" fill="#ecebd8" opacity="0.69"/><polygon points="529.1,606.3 523.4,621.0 500.6,618.6 494.4,607.3 512.6,593.9" fill="#ecebd8" opacity="0.77"/><polygon points="1105.8,305.9 1096.6,298.6 1101.4,292.0 1105.3,288.8 1113.5,296.8 1113.1,304.4" fill="#ecebd8" opacity="0.52"/><polygon points="468.3,670.4 468.3,653.8 483.1,649.9 487.1,663.7" fill="#e9ead2" opacity="0.79"/><polygon points="905.7,281.4 901.5,287.0 890.9,281.3 893.1,273.6 903.5,273.2" fill="#ecebd8" opacity="0.41"/><polygon points="962.3,745.9 969.1,744.4 974.1,745.1 970.2,752.3 964.8,752.7" fill="#ebe9d4" opacity="0.75"/><polygon points="640.9,698.5 635.6,694.9 639.8,687.3 645.1,689.5 649.0,697.0" fill="#e9ead2" opacity="0.52"/><polygon points="458.6,430.5 468.6,425.8 478.1,439.7 465.7,441.7" fill="#ebe9d4" opacity="0.62"/><polygon points="518.4,855.1 522.2,861.5 520.3,869.9 507.9,868.6 501.7,860.5 504.2,855.7" fill="#e9ead2" opacity="0.78"/><polygon points="821.0,543.2 827.3,535.7 846.0,537.7 843.7,545.8 841.4,555.1 824.4,553.6" fill="#ecebd8" opacity="0.55"/><polygon points="1530.0,393.8 1541.6,403.2 1547.0,410.1 1533.3,415.6 1519.8,408.6 1522.6,402.0" fill="#ebe9d4" opacity="0.49"/><polygon points="625.2,725.7 618.7,741.2 602.0,745.5 604.6,725.2" fill="#e9ead2" opacity="0.46"/><polygon points="500.8,251.1 508.7,248.8 515.5,257.0 502.9,259.2" fill="#e9ead2" opacity="0.58"/><polygon points="688.0,255.5 702.1,259.0 707.6,267.1 698.1,278.7 683.7,270.6" fill="#ecebd8" opacity="0.59"/><polygon points="886.5,721.1 897.6,728.6 895.5,734.9 881.2,739.1 874.9,736.2 878.4,724.9" fill="#e9ead2" opacity="0.70"/><polygon points="529.5,631.8 516.7,643.2 506.5,643.3 504.1,628.6 515.7,621.1" fill="#ecebd8" opacity="0.58"/><polygon points="1268.6,741.5 1253.7,733.1 1269.3,718.8 1280.2,728.4" fill="#ecebd8" opacity="0.76"/><polygon points="1492.9,564.7 1499.6,564.1 1502.1,570.6 1497.0,574.4 1490.7,572.7 1488.7,568.6" fill="#ebe9d4" opacity="0.60"/><polygon points="1386.1,779.2 1392.4,775.5 1400.9,774.5 1400.9,780.1 1399.1,786.4 1388.3,784.5" fill="#ecebd8" opacity="0.69"/><polygon points="454.5,601.4 445.8,615.8 427.4,608.5 437.2,593.8" fill="#ebe9d4" opacity="0.69"/><polygon points="1071.9,785.7 1060.5,791.7 1043.8,784.9 1047.6,771.3 1070.3,773.5" fill="#ecebd8" opacity="0.67"/><polygon points="1420.8,557.9 1412.0,563.0 1403.5,554.7 1415.9,547.7" fill="#ecebd8" opacity="0.47"/><polygon points="1608.6,560.0 1625.6,568.0 1624.2,575.7 1611.8,580.1 1604.7,578.9 1601.1,566.6" fill="#ecebd8" opacity="0.41"/><polygon points="1408.5,683.5 1400.1,687.2 1387.3,688.5 1382.3,671.8 1394.6,666.9 1407.8,670.5" fill="#ebe9d4" opacity="0.58"/><polygon points="1016.7,266.8 1017.5,244.0 1043.4,247.9 1041.4,268.8" fill="#e9ead2" opacity="0.75"/><polygon points="1401.3,890.1 1405.9,890.4 1407.5,895.6 1400.9,897.8 1396.3,894.8" fill="#ecebd8" opacity="0.79"/><polygon points="828.2,795.4 802.7,797.0 800.0,779.1 827.2,779.2" fill="#ecebd8" opacity="0.60"/><polygon points="641.5,820.6 648.2,832.1 633.4,839.0 619.6,828.5" fill="#ebe9d4" opacity="0.43"/><polygon points="1446.6,635.0 1447.7,646.7 1437.7,650.7 1423.5,642.9 1428.1,631.6" fill="#ebe9d4" opacity="0.41"/><polygon points="1394.5,702.0 1398.4,694.6 1409.1,691.1 1418.0,701.1 1410.6,710.1 1393.9,712.2" fill="#e9ead2" opacity="0.78"/><polygon points="1501.6,316.6 1502.4,311.0 1507.7,309.2 1512.4,313.2 1513.3,317.9 1505.7,320.1" fill="#e9ead2" opacity="0.48"/><polygon points="873.6,621.8 858.5,622.6 849.5,615.7 855.7,608.1 862.0,603.5 875.7,609.9" fill="#e9ead2" opacity="0.61"/><polygon points="1404.0,344.2 1416.0,338.6 1432.5,348.4 1420.4,358.9 1410.9,355.9" fill="#ebe9d4" opacity="0.48"/><polygon points="1616.6,740.6 1617.5,758.3 1592.2,760.0 1589.3,746.8" fill="#ebe9d4" opacity="0.61"/><polygon points="1286.6,364.6 1255.5,365.2 1257.0,347.4 1283.3,347.9" fill="#ecebd8" opacity="0.70"/><polygon points="872.3,263.5 860.4,253.5 875.0,246.3 885.2,255.0" fill="#ecebd8" opacity="0.73"/><polygon points="1553.9,819.9 1548.8,808.7 1558.2,801.5 1567.5,799.5 1573.2,811.5 1572.6,821.0" fill="#ecebd8" opacity="0.55"/><polygon points="1524.2,704.3 1518.2,702.6 1517.5,697.2 1521.8,695.0 1529.5,699.0" fill="#e9ead2" opacity="0.63"/><polygon points="1320.2,357.3 1313.3,352.1 1315.6,346.1 1319.8,338.7 1332.2,343.5 1333.8,353.0" fill="#e9ead2" opacity="0.43"/><polygon points="1067.3,290.0 1054.6,279.0 1070.1,273.0 1078.7,283.4" fill="#ecebd8" opacity="0.76"/><polygon points="1507.7,688.8 1507.3,670.0 1530.0,672.4 1530.4,684.2" fill="#ecebd8" opacity="0.41"/><polygon points="1206.2,473.5 1197.8,474.1 1198.7,467.0 1205.6,464.5 1210.0,469.2" fill="#ecebd8" opacity="0.45"/><polygon points="625.9,362.9 621.0,360.8 623.1,354.8 632.3,357.5" fill="#ecebd8" opacity="0.40"/><polygon points="425.2,718.5 419.3,717.4 417.5,713.6 422.4,710.0 428.0,713.1" fill="#ecebd8" opacity="0.46"/><polygon points="501.1,489.8 512.3,482.7 520.7,492.2 511.2,501.7" fill="#e9ead2" opacity="0.73"/><polygon points="979.3,267.6 988.5,278.9 991.3,294.5 971.3,294.3 961.5,285.9 967.3,273.4" fill="#ecebd8" opacity="0.64"/><polygon points="1446.0,666.1 1458.1,672.3 1455.6,683.7 1441.4,683.0 1437.2,675.7" fill="#e9ead2" opacity="0.50"/><polygon points="1492.3,838.7 1473.6,837.2 1476.6,825.9 1490.8,826.2" fill="#e9ead2" opacity="0.56"/><polygon points="401.2,594.2 392.2,596.8 384.8,591.4 388.0,587.8 398.1,587.5" fill="#ebe9d4" opacity="0.54"/><polygon points="1280.5,877.2 1266.5,883.9 1257.3,876.0 1265.4,867.9 1274.4,867.6" fill="#e9ead2" opacity="0.65"/><polygon points="1244.0,813.1 1254.9,805.2 1273.0,811.8 1264.4,826.7 1245.2,826.0" fill="#e9ead2" opacity="0.45"/><polygon points="537.3,351.4 523.6,359.2 512.5,352.7 505.8,342.6 524.5,333.2 536.1,342.7" fill="#ecebd8" opacity="0.70"/><polygon points="1081.3,753.9 1081.0,748.2 1081.5,745.2 1088.9,742.8 1093.9,747.6 1088.7,753.3" fill="#ecebd8" opacity="0.49"/><polygon points="1369.4,267.7 1381.2,270.1 1381.7,283.3 1373.6,285.8 1363.0,280.6 1358.9,275.2" fill="#ebe9d4" opacity="0.41"/><polygon points="1107.5,583.0 1109.9,589.5 1102.4,594.4 1098.2,591.7 1095.7,587.1 1102.4,581.6" fill="#ebe9d4" opacity="0.51"/><polygon points="922.8,740.9 917.2,752.6 898.7,761.2 888.4,748.2 894.5,732.2" fill="#ebe9d4" opacity="0.72"/><polygon points="1451.4,820.4 1451.8,831.3 1442.4,833.5 1436.1,828.0 1439.9,819.6" fill="#ecebd8" opacity="0.48"/><polygon points="1301.4,768.0 1305.1,772.3 1303.1,775.3 1294.8,774.0 1292.6,770.7 1296.1,766.0" fill="#e9ead2" opacity="0.77"/><polygon points="1167.8,587.2 1174.1,576.7 1183.0,573.3 1186.7,578.3 1190.3,585.9 1180.5,591.8" fill="#e9ead2" opacity="0.79"/><polygon points="518.0,767.6 525.8,767.3 524.7,774.4 517.9,772.7" fill="#e9ead2" opacity="0.75"/><polygon points="1046.6,343.9 1040.3,362.7 1021.4,353.1 1024.8,340.2" fill="#ebe9d4" opacity="0.76"/><polygon points="1337.2,392.7 1346.4,404.0 1333.0,409.0 1321.7,406.9 1318.7,397.1 1323.6,389.7" fill="#e9ead2" opacity="0.48"/><polygon points="481.0,747.6 470.8,745.8 470.0,735.7 482.8,737.5" fill="#e9ead2" opacity="0.60"/><polygon points="379.2,733.8 388.6,720.6 402.4,717.7 408.0,729.3 393.8,740.2" fill="#e9ead2" opacity="0.67"/><polygon points="1408.1,587.4 1422.2,572.5 1443.8,585.3 1428.7,602.1" fill="#ebe9d4" opacity="0.70"/><polygon points="1575.1,245.7 1571.5,237.4 1579.7,231.1 1586.0,234.6 1583.0,243.1" fill="#ebe9d4" opacity="0.71"/><polygon points="483.8,582.4 474.9,581.1 476.0,573.0 485.9,573.3 488.3,578.8" fill="#ebe9d4" opacity="0.48"/><polygon points="1314.7,805.0 1324.8,801.5 1333.2,806.9 1326.0,815.6 1314.4,815.6" fill="#ecebd8" opacity="0.67"/><polygon points="1176.6,543.3 1189.3,547.1 1192.4,554.8 1177.7,560.1 1172.8,553.5" fill="#ebe9d4" opacity="0.56"/><polygon points="1437.4,843.8 1441.1,831.7 1453.6,838.0 1446.0,851.1" fill="#e9ead2" opacity="0.73"/><polygon points="688.9,780.3 700.0,782.5 696.0,796.0 681.4,801.2 670.7,796.2 675.7,778.4" fill="#ebe9d4" opacity="0.61"/><polygon points="463.5,522.3 480.4,516.9 494.3,527.0 485.6,538.1 478.5,546.6 462.1,541.3" fill="#e9ead2" opacity="0.59"/><polygon points="1099.8,505.3 1095.8,496.6 1104.5,490.8 1116.9,498.7 1111.3,504.2" fill="#e9ead2" opacity="0.72"/><polygon points="1293.6,822.4 1280.6,831.6 1267.7,825.9 1267.5,811.6 1281.2,808.9 1294.2,811.0" fill="#e9ead2" opacity="0.79"/><polygon points="1079.7,816.3 1076.8,825.8 1065.0,827.2 1064.3,820.9 1074.2,810.9" fill="#e9ead2" opacity="0.56"/><polygon points="1421.5,555.6 1428.9,556.1 1433.4,559.8 1430.2,564.0 1424.6,564.9 1419.5,561.3" fill="#e9ead2" opacity="0.43"/><polygon points="1398.6,622.5 1403.4,624.1 1403.7,628.0 1400.9,629.1 1394.0,627.1 1394.2,623.0" fill="#e9ead2" opacity="0.71"/><polygon points="1475.3,569.3 1479.5,556.0 1502.3,551.9 1506.9,568.5 1493.0,575.6" fill="#ecebd8" opacity="0.75"/><polygon points="1330.4,408.3 1335.0,418.0 1322.9,428.4 1314.1,426.9 1315.9,411.4" fill="#ecebd8" opacity="0.46"/><polygon points="1023.3,302.8 1035.9,299.1 1043.8,304.3 1043.4,319.9 1025.5,320.1 1022.0,313.6" fill="#ebe9d4" opacity="0.70"/><polygon points="947.8,386.6 962.8,384.1 963.8,394.3 948.9,397.8" fill="#ebe9d4" opacity="0.51"/><polygon points="773.3,432.0 789.3,436.1 781.8,451.5 770.3,448.9 758.3,442.8" fill="#ebe9d4" opacity="0.70"/><polygon points="1134.7,409.3 1135.2,392.1 1153.9,394.2 1151.1,404.9" fill="#ebe9d4" opacity="0.47"/><polygon points="1451.1,718.1 1456.0,720.6 1450.6,725.7 1443.7,723.2 1445.8,718.3" fill="#e9ead2" opacity="0.50"/><polygon points="393.3,823.0 395.1,834.5 378.5,836.5 372.1,828.8 379.4,819.4" fill="#e9ead2" opacity="0.70"/><polygon points="1639.4,765.0 1631.8,750.1 1645.8,747.0 1653.2,755.1" fill="#ecebd8" opacity="0.58"/><polygon points="1215.0,476.2 1222.3,480.4 1222.8,488.5 1210.8,493.7 1205.4,485.7 1208.2,478.0" fill="#e9ead2" opacity="0.54"/><polygon points="1144.5,492.4 1133.2,481.9 1138.2,473.4 1157.1,468.4 1164.7,476.1 1154.2,490.8" fill="#ebe9d4" opacity="0.57"/><polygon points="569.1,303.4 566.7,315.0 558.0,316.8 558.6,305.7" fill="#ecebd8" opacity="0.77"/><polygon points="1263.0,779.9 1268.0,780.9 1267.4,785.4 1264.6,787.1 1258.3,786.6 1257.6,781.2" fill="#ebe9d4" opacity="0.76"/><polygon points="1075.8,586.3 1067.6,584.1 1052.6,581.8 1056.0,570.2 1072.9,564.1 1079.3,572.4" fill="#e9ead2" opacity="0.71"/><polygon points="799.8,416.9 805.9,422.7 799.1,427.3 791.9,423.2" fill="#ebe9d4" opacity="0.41"/><polygon points="1580.3,628.1 1581.2,641.9 1563.8,647.4 1555.9,628.9" fill="#ebe9d4" opacity="0.44"/><polygon points="1155.7,752.4 1150.2,751.3 1150.0,744.5 1156.8,745.2" fill="#ecebd8" opacity="0.49"/><polygon points="542.3,501.7 541.5,494.9 546.3,494.1 549.8,499.1" fill="#e9ead2" opacity="0.68"/><polygon points="1523.9,725.0 1527.1,727.8 1522.3,732.7 1517.0,728.9" fill="#ebe9d4" opacity="0.77"/><polygon points="1591.1,450.3 1600.9,436.5 1616.2,445.6 1602.4,458.1" fill="#e9ead2" opacity="0.77"/><polygon points="1147.5,283.6 1137.2,280.9 1139.6,266.7 1153.9,264.7 1159.9,273.8" fill="#ebe9d4" opacity="0.71"/><polygon points="1608.7,597.9 1609.9,578.1 1626.2,578.8 1629.1,598.7" fill="#ebe9d4" opacity="0.77"/><polygon points="1187.2,433.6 1174.3,430.4 1172.6,419.1 1178.7,411.5 1199.4,413.3 1195.8,426.2" fill="#ecebd8" opacity="0.52"/><polygon points="1513.1,890.7 1508.0,903.1 1491.1,898.2 1496.8,884.4" fill="#e9ead2" opacity="0.75"/><polygon points="643.2,408.1 648.5,392.2 668.9,394.8 664.0,410.2" fill="#ecebd8" opacity="0.76"/><polygon points="1536.3,541.2 1558.8,540.2 1561.5,556.0 1540.6,558.0" fill="#ebe9d4" opacity="0.70"/><polygon points="835.0,719.6 849.4,719.5 854.6,730.5 832.3,736.0" fill="#ebe9d4" opacity="0.58"/><polygon points="1348.6,544.9 1346.5,548.0 1341.2,547.1 1339.7,544.1 1341.8,542.2 1345.5,541.2" fill="#ebe9d4" opacity="0.65"/><polygon points="506.9,533.3 514.6,522.9 530.8,534.6 533.3,543.5 508.6,543.4" fill="#e9ead2" opacity="0.64"/><polygon points="1526.4,266.0 1526.0,261.4 1529.7,258.6 1533.8,263.3 1530.1,266.5" fill="#e9ead2" opacity="0.52"/><polygon points="1261.1,534.6 1253.0,543.9 1242.9,541.0 1250.3,526.4" fill="#e9ead2" opacity="0.50"/><polygon points="1256.4,713.0 1253.0,716.2 1246.2,714.9 1242.4,708.5 1247.9,703.3 1254.3,704.8" fill="#ecebd8" opacity="0.47"/><polygon points="1274.5,357.3 1286.4,352.2 1299.2,362.4 1290.7,372.3 1283.4,378.4 1267.3,369.6" fill="#e9ead2" opacity="0.46"/><polygon points="959.8,294.4 971.5,296.7 976.9,307.5 966.2,310.1 955.6,306.4" fill="#ebe9d4" opacity="0.48"/><polygon points="815.2,652.4 802.9,653.1 800.4,643.6 812.4,638.5 823.6,643.5" fill="#ebe9d4" opacity="0.60"/><polygon points="1459.5,463.6 1459.6,477.9 1443.6,475.7 1444.0,465.4" fill="#ebe9d4" opacity="0.63"/><polygon points="891.8,274.1 883.2,274.2 880.2,264.6 887.8,260.0 898.1,267.4" fill="#ebe9d4" opacity="0.50"/><polygon points="1347.1,719.2 1361.6,718.5 1366.5,722.0 1357.5,733.6 1345.1,736.2 1343.0,730.5" fill="#e9ead2" opacity="0.41"/><polygon points="808.4,694.9 805.8,699.9 794.2,698.6 795.9,692.5" fill="#ebe9d4" opacity="0.49"/><polygon points="722.0,603.0 735.6,600.8 737.8,607.5 734.8,614.9 726.7,613.0 723.0,607.1" fill="#ebe9d4" opacity="0.66"/><polygon points="1327.3,776.0 1330.0,783.6 1325.9,791.6 1311.2,791.4 1309.0,784.3 1316.6,773.9" fill="#ebe9d4" opacity="0.57"/><polygon points="1571.6,488.8 1576.2,500.0 1565.8,503.5 1560.4,500.5 1558.7,493.8 1567.2,484.3" fill="#e9ead2" opacity="0.79"/><polygon points="1209.4,758.5 1214.7,749.2 1229.5,751.7 1221.6,762.3" fill="#ebe9d4" opacity="0.45"/><polygon points="1376.8,613.5 1358.3,597.1 1378.2,586.3 1396.5,602.6" fill="#e9ead2" opacity="0.60"/><polygon points="737.5,504.8 755.6,500.7 759.0,513.9 750.7,520.4 735.0,516.7" fill="#ebe9d4" opacity="0.74"/><polygon points="652.7,525.4 655.6,521.6 663.2,520.8 665.3,524.1 663.0,530.4 656.6,528.6" fill="#ebe9d4" opacity="0.70"/><polygon points="533.4,297.6 537.6,309.7 533.5,317.0 519.9,319.7 506.3,307.8 523.1,297.3" fill="#ecebd8" opacity="0.72"/><polygon points="674.5,390.7 667.0,401.6 652.1,395.0 652.7,381.1 667.5,377.0" fill="#ecebd8" opacity="0.74"/><polygon points="463.0,236.0 478.0,239.6 485.0,250.9 468.3,257.0 453.5,256.7 455.9,245.5" fill="#ecebd8" opacity="0.73"/><polygon points="874.6,433.5 884.2,417.5 901.2,423.0 895.5,443.4" fill="#ecebd8" opacity="0.43"/><polygon points="922.7,497.2 910.7,492.3 909.4,480.8 917.1,476.4 929.9,478.1 933.1,489.1" fill="#ebe9d4" opacity="0.53"/><polygon points="1314.9,863.4 1320.1,857.3 1326.2,860.3 1321.8,865.1" fill="#e9ead2" opacity="0.49"/><polygon points="1469.6,543.6 1469.7,527.6 1486.9,526.6 1496.3,536.4 1491.3,543.0" fill="#ecebd8" opacity="0.79"/><polygon points="975.6,323.9 977.3,319.4 985.2,316.1 992.7,318.7 992.5,323.3 981.8,328.8" fill="#ecebd8" opacity="0.67"/><polygon points="553.0,242.3 557.7,246.4 555.4,250.6 547.6,248.1 547.4,244.1" fill="#ecebd8" opacity="0.64"/><polygon points="1341.9,827.8 1318.6,831.2 1319.5,812.5 1347.6,811.9" fill="#ecebd8" opacity="0.42"/><polygon points="755.2,613.3 744.7,630.8 732.7,625.5 726.5,612.0 746.4,608.7" fill="#ecebd8" opacity="0.49"/><polygon points="948.4,387.7 957.0,391.1 954.5,400.9 947.0,403.6 934.9,402.3 936.1,394.2" fill="#e9ead2" opacity="0.45"/><polygon points="667.4,556.1 667.4,570.5 652.8,576.8 647.7,564.9 656.1,556.2" fill="#ecebd8" opacity="0.66"/><polygon points="434.5,711.4 441.2,724.1 427.0,731.4 417.3,731.0 406.2,712.9 421.4,704.5" fill="#e9ead2" opacity="0.75"/><polygon points="409.0,674.8 426.9,688.2 409.3,702.1 396.1,690.6 394.0,675.7" fill="#ebe9d4" opacity="0.50"/><polygon points="425.8,783.3 433.2,782.5 439.5,789.7 434.8,794.7 424.2,795.4 421.8,788.8" fill="#ebe9d4" opacity="0.42"/><polygon points="1308.2,665.8 1327.3,669.6 1319.9,683.7 1305.3,689.8 1292.1,674.7" fill="#ecebd8" opacity="0.48"/><polygon points="1193.5,310.8 1191.3,294.0 1209.6,293.9 1211.7,306.5" fill="#ebe9d4" opacity="0.69"/><polygon points="550.8,596.8 551.0,614.9 526.9,618.8 525.9,602.8" fill="#ecebd8" opacity="0.49"/><polygon points="519.7,773.6 518.7,758.0 543.2,750.6 543.0,766.8" fill="#ecebd8" opacity="0.80"/><polygon points="1013.8,655.1 1021.4,657.5 1022.5,670.5 1011.3,673.9 1000.9,669.7 1002.7,659.6" fill="#ebe9d4" opacity="0.56"/><polygon points="1016.7,635.2 1003.7,629.5 1012.7,615.1 1022.3,616.3 1034.2,628.7" fill="#e9ead2" opacity="0.57"/><polygon points="606.9,842.5 617.6,838.9 633.5,848.1 631.6,859.1 614.0,867.5 603.0,856.1" fill="#ecebd8" opacity="0.73"/><polygon points="1509.3,830.6 1519.6,847.7 1502.2,854.5 1494.0,852.2 1485.7,836.9 1495.5,827.6" fill="#ecebd8" opacity="0.62"/><polygon points="1486.3,399.6 1484.7,389.7 1499.8,389.1 1505.8,395.9 1498.7,401.4" fill="#ebe9d4" opacity="0.73"/><polygon points="1451.4,770.7 1455.1,759.3 1464.4,758.7 1468.7,772.6 1457.2,774.2" fill="#ebe9d4" opacity="0.59"/><polygon points="1515.5,856.6 1522.2,856.5 1529.2,867.6 1524.0,873.7 1508.0,871.8 1503.1,862.3" fill="#e9ead2" opacity="0.65"/><polygon points="740.7,612.8 752.4,608.5 769.7,610.3 771.8,626.4 759.5,633.8 745.1,628.8" fill="#ebe9d4" opacity="0.45"/><polygon points="744.0,501.3 753.6,501.7 753.3,508.2 751.9,511.6 745.1,511.3 740.4,506.7" fill="#e9ead2" opacity="0.57"/><polygon points="1225.4,729.1 1231.3,733.8 1224.7,740.6 1215.7,736.4 1214.9,729.4" fill="#ecebd8" opacity="0.79"/><polygon points="890.6,757.2 881.8,750.0 897.1,735.2 905.7,750.0" fill="#ebe9d4" opacity="0.48"/><polygon points="547.8,519.7 547.5,527.9 534.5,531.4 527.7,528.1 525.6,516.0 533.3,513.8" fill="#ecebd8" opacity="0.74"/><polygon points="511.3,307.2 482.0,303.4 491.4,292.0 513.0,288.1" fill="#e9ead2" opacity="0.48"/><polygon points="1237.4,818.4 1238.5,813.6 1246.3,812.2 1244.9,818.7" fill="#ebe9d4" opacity="0.58"/><polygon points="610.8,242.6 599.6,240.1 600.2,234.7 603.1,228.4 613.4,230.9 614.4,236.9" fill="#ecebd8" opacity="0.48"/><polygon points="786.6,450.6 787.8,446.3 799.5,444.7 804.3,449.7 795.9,458.3" fill="#e9ead2" opacity="0.64"/><polygon points="1349.7,720.5 1355.0,721.2 1356.3,724.6 1352.5,728.4 1347.9,727.6 1345.8,724.5" fill="#e9ead2" opacity="0.46"/><polygon points="950.0,470.6 941.5,480.4 927.3,475.3 927.0,462.2 944.9,460.2" fill="#ebe9d4" opacity="0.75"/><polygon points="1614.9,490.0 1608.8,478.4 1627.9,476.7 1628.8,490.7" fill="#ebe9d4" opacity="0.53"/><polygon points="1486.2,624.0 1488.7,640.5 1459.9,644.1 1460.4,623.9" fill="#e9ead2" opacity="0.67"/><polygon points="1231.2,834.3 1234.7,841.0 1229.2,843.4 1221.5,840.9 1226.8,835.8" fill="#e9ead2" opacity="0.46"/><polygon points="1067.1,398.9 1043.4,406.6 1031.3,397.9 1038.1,380.7 1060.1,386.1" fill="#ebe9d4" opacity="0.48"/><polygon points="1230.8,487.5 1223.9,492.7 1210.4,485.4 1219.1,479.0 1225.2,480.4" fill="#ecebd8" opacity="0.62"/><polygon points="1050.2,343.4 1063.4,342.6 1063.6,359.6 1049.4,358.4" fill="#ecebd8" opacity="0.75"/><polygon points="1238.8,462.5 1236.0,458.1 1240.7,455.0 1247.9,456.0 1248.6,460.2 1243.0,463.2" fill="#ecebd8" opacity="0.71"/><polygon points="969.7,866.4 981.9,865.6 981.9,872.8 973.3,875.8" fill="#e9ead2" opacity="0.60"/><polygon points="1218.2,321.8 1207.2,317.2 1205.8,304.0 1223.8,299.8 1231.9,311.1" fill="#ebe9d4" opacity="0.62"/><polygon points="717.4,515.2 711.9,513.9 710.4,508.6 716.6,506.7 719.5,511.1" fill="#ecebd8" opacity="0.60"/><polygon points="833.7,614.9 819.2,625.7 804.9,613.8 819.9,605.1" fill="#ebe9d4" opacity="0.78"/><polygon points="1243.5,606.6 1262.9,605.4 1273.9,615.5 1266.7,622.5 1255.3,628.4 1242.4,615.8" fill="#ecebd8" opacity="0.62"/><polygon points="784.3,464.2 772.4,470.0 758.7,456.5 766.1,449.1 785.4,452.8" fill="#e9ead2" opacity="0.69"/><polygon points="1399.0,607.8 1398.5,613.9 1391.6,611.5 1392.4,606.0" fill="#e9ead2" opacity="0.67"/><polygon points="1575.0,823.2 1571.8,828.1 1561.3,831.5 1557.8,825.0 1564.9,817.8" fill="#e9ead2" opacity="0.72"/><polygon points="1068.8,330.0 1076.6,316.8 1084.9,317.3 1097.6,328.1 1092.6,336.6 1078.6,338.9" fill="#ebe9d4" opacity="0.52"/><polygon points="960.7,267.7 946.4,270.9 944.2,261.5 954.5,260.4" fill="#e9ead2" opacity="0.57"/><polygon points="1040.2,661.2 1045.5,663.8 1040.2,672.9 1031.0,673.1 1025.8,670.5 1032.4,660.0" fill="#ecebd8" opacity="0.43"/><polygon points="1350.1,353.9 1335.6,352.8 1336.4,343.8 1348.9,343.7" fill="#e9ead2" opacity="0.57"/><polygon points="1617.1,563.9 1629.5,569.3 1627.6,579.9 1610.6,580.9 1609.6,570.5" fill="#ebe9d4" opacity="0.65"/><polygon points="1614.3,643.5 1606.5,642.9 1601.0,638.7 1603.3,633.6 1610.5,634.0 1616.5,637.2" fill="#e9ead2" opacity="0.55"/><polygon points="1056.4,433.2 1076.2,417.5 1090.0,426.2 1082.7,444.6 1064.9,444.5" fill="#ebe9d4" opacity="0.57"/><polygon points="1439.9,814.2 1431.6,815.3 1427.4,807.4 1436.4,803.4 1441.8,809.3" fill="#ebe9d4" opacity="0.70"/><polygon points="1002.7,539.1 1021.9,541.8 1014.2,559.6 992.2,555.9" fill="#ecebd8" opacity="0.52"/><polygon points="1370.7,310.4 1378.2,307.9 1390.8,308.7 1388.5,318.5 1382.4,323.0 1367.4,319.9" fill="#e9ead2" opacity="0.63"/><polygon points="1628.8,461.5 1640.7,451.2 1650.1,459.2 1635.2,469.2" fill="#ebe9d4" opacity="0.76"/><polygon points="1530.7,476.9 1523.6,467.3 1530.1,458.4 1541.2,460.4 1547.2,471.3 1545.2,478.9" fill="#ebe9d4" opacity="0.68"/><polygon points="771.6,439.5 773.8,445.4 769.0,446.7 764.1,443.3 767.8,440.0" fill="#ecebd8" opacity="0.50"/><polygon points="1204.1,665.8 1204.8,672.6 1189.7,674.9 1181.8,666.8 1194.5,661.2" fill="#ebe9d4" opacity="0.41"/><polygon points="473.2,304.9 491.2,302.5 489.2,312.7 478.1,314.2" fill="#ecebd8" opacity="0.62"/><polygon points="1524.9,587.8 1514.2,590.0 1511.8,579.4 1523.3,577.1" fill="#ebe9d4" opacity="0.71"/><polygon points="1405.9,753.4 1417.5,758.0 1413.1,769.2 1401.5,763.4" fill="#ebe9d4" opacity="0.47"/><polygon points="1550.5,579.5 1559.5,577.1 1560.2,582.9 1554.9,586.1" fill="#ebe9d4" opacity="0.45"/><polygon points="1327.3,431.2 1318.1,412.0 1333.0,405.0 1347.0,421.1" fill="#ebe9d4" opacity="0.60"/><polygon points="1658.0,316.6 1636.6,306.5 1650.7,297.4 1662.8,306.4" fill="#ecebd8" opacity="0.54"/><polygon points="603.5,599.4 608.7,604.5 600.6,617.4 587.4,619.5 576.4,607.1 584.2,600.5" fill="#ebe9d4" opacity="0.62"/><polygon points="1588.9,697.3 1602.5,691.6 1608.2,693.0 1615.8,705.2 1602.3,710.7 1590.8,705.7" fill="#ebe9d4" opacity="0.60"/><polygon points="1339.6,481.3 1338.7,477.6 1345.1,474.4 1348.8,477.3 1346.8,482.6" fill="#ecebd8" opacity="0.73"/><polygon points="1501.6,792.1 1499.2,807.5 1489.4,805.5 1480.5,797.6 1484.7,788.9 1495.6,786.2" fill="#ebe9d4" opacity="0.77"/><polygon points="907.0,684.7 917.5,683.9 923.7,693.6 914.3,696.4 904.4,695.0" fill="#e9ead2" opacity="0.49"/><polygon points="858.0,586.8 849.8,590.1 842.9,576.7 850.8,572.2 861.9,576.4" fill="#ebe9d4" opacity="0.49"/><polygon points="1478.1,603.7 1491.5,609.0 1481.7,618.1 1468.0,614.0" fill="#e9ead2" opacity="0.58"/><polygon points="886.3,408.8 863.4,408.0 861.9,394.7 886.1,389.8" fill="#ebe9d4" opacity="0.74"/><polygon points="735.0,242.3 746.4,236.0 750.5,242.1 739.7,250.0" fill="#ecebd8" opacity="0.54"/><polygon points="1579.1,745.5 1573.4,748.0 1570.0,739.0 1573.7,734.8 1581.0,735.6 1585.1,739.6" fill="#ecebd8" opacity="0.42"/><polygon points="463.8,643.8 457.4,637.9 464.3,628.1 471.8,636.5" fill="#ebe9d4" opacity="0.57"/><polygon points="858.1,691.5 847.8,696.4 842.2,686.0 853.6,682.4" fill="#ecebd8" opacity="0.64"/><polygon points="1000.0,357.5 1010.1,356.8 1020.9,370.2 1015.4,375.8 1002.7,379.0 995.3,368.4" fill="#ecebd8" opacity="0.59"/><polygon points="405.7,519.0 406.7,545.7 386.0,545.9 384.9,526.3" fill="#ebe9d4" opacity="0.53"/><polygon points="905.0,456.9 910.4,458.0 911.6,465.7 899.7,468.7 896.6,462.2" fill="#ebe9d4" opacity="0.67"/><polygon points="691.1,802.8 699.8,805.7 702.9,809.0 696.6,817.9 688.0,818.2 682.0,808.2" fill="#ecebd8" opacity="0.75"/><polygon points="1086.0,316.7 1088.2,313.1 1095.4,314.2 1092.3,319.4" fill="#e9ead2" opacity="0.51"/><polygon points="1627.1,860.6 1629.9,864.2 1620.9,867.3 1619.4,862.4" fill="#ecebd8" opacity="0.70"/><polygon points="390.3,463.4 402.6,444.6 413.6,446.4 423.4,459.7 415.6,472.3 400.6,474.0" fill="#e9ead2" opacity="0.58"/><polygon points="925.0,376.3 937.2,382.3 933.4,400.8 912.9,394.9 908.1,378.1" fill="#ebe9d4" opacity="0.66"/><polygon points="703.9,561.9 699.6,543.8 718.1,538.9 729.5,550.2 717.9,561.6" fill="#ebe9d4" opacity="0.54"/><polygon points="935.9,360.3 945.3,353.2 950.2,359.8 945.8,366.6" fill="#e9ead2" opacity="0.72"/><polygon points="831.2,791.0 854.5,790.8 861.4,800.9 839.8,814.7 824.5,808.3" fill="#ebe9d4" opacity="0.44"/><polygon points="1461.6,396.5 1459.4,410.3 1441.9,411.5 1434.0,400.2 1449.7,391.5" fill="#ebe9d4" opacity="0.55"/><polygon points="472.1,443.2 497.3,436.1 503.2,456.9 475.7,462.2" fill="#e9ead2" opacity="0.68"/><polygon points="1428.7,741.9 1418.9,746.0 1410.9,739.0 1411.9,732.0 1420.1,726.3 1431.9,731.1" fill="#ecebd8" opacity="0.71"/><polygon points="1266.4,580.4 1255.4,585.2 1244.1,586.6 1243.9,574.4 1249.6,570.7 1261.4,569.3" fill="#e9ead2" opacity="0.77"/><polygon points="747.7,400.5 755.7,397.3 760.1,403.6 757.7,407.8 747.6,408.8 743.2,405.6" fill="#ecebd8" opacity="0.46"/><polygon points="1445.5,253.9 1462.7,243.3 1482.4,263.8 1462.2,273.4" fill="#ebe9d4" opacity="0.49"/><polygon points="1115.6,840.0 1103.4,849.5 1090.0,850.1 1086.5,837.7 1099.2,829.7 1109.8,829.1" fill="#ebe9d4" opacity="0.50"/><polygon points="1275.2,347.6 1261.3,346.3 1256.9,343.3 1257.6,333.1 1268.5,331.4 1279.3,339.3" fill="#ebe9d4" opacity="0.63"/><polygon points="1073.5,819.4 1061.0,814.6 1070.0,800.8 1082.1,801.1 1088.2,811.8 1083.6,817.5" fill="#ebe9d4" opacity="0.59"/><polygon points="707.8,533.9 689.8,538.3 679.3,527.1 685.9,516.0 701.2,517.4" fill="#e9ead2" opacity="0.46"/><polygon points="1513.7,686.6 1523.9,695.3 1516.2,704.4 1508.3,713.3 1496.0,704.0 1495.9,694.6" fill="#ecebd8" opacity="0.74"/><polygon points="1576.4,305.9 1575.1,301.6 1580.2,298.6 1584.2,299.3 1584.9,304.5 1581.8,306.7" fill="#ebe9d4" opacity="0.70"/><polygon points="1530.4,737.0 1524.0,750.1 1509.0,750.1 1509.7,737.2 1517.7,733.5" fill="#ebe9d4" opacity="0.55"/><polygon points="1159.9,820.7 1172.8,810.6 1187.7,811.0 1195.5,824.2 1179.3,833.4 1171.9,829.1" fill="#ebe9d4" opacity="0.47"/><polygon points="1040.9,341.0 1036.9,345.5 1021.3,350.8 1015.0,339.6 1020.5,328.5 1037.2,331.2" fill="#ecebd8" opacity="0.45"/><polygon points="1066.0,844.7 1059.3,844.0 1057.4,841.4 1059.5,838.0 1064.4,838.0 1066.4,841.4" fill="#ebe9d4" opacity="0.60"/><polygon points="1026.5,526.2 1034.8,526.6 1035.0,534.8 1024.5,535.6" fill="#ebe9d4" opacity="0.67"/><polygon points="1335.3,534.5 1341.1,529.8 1347.7,530.9 1346.5,538.5 1340.5,540.8" fill="#e9ead2" opacity="0.54"/><polygon points="659.9,810.8 671.1,820.7 662.7,834.4 641.2,831.3 632.8,823.8 645.0,808.6" fill="#ecebd8" opacity="0.56"/><polygon points="950.4,431.6 957.6,430.5 962.6,431.3 964.5,439.1 955.7,442.7 950.8,439.8" fill="#e9ead2" opacity="0.69"/><polygon points="1390.4,545.8 1381.9,542.2 1366.0,535.6 1371.1,520.3 1386.3,518.9 1400.6,531.2" fill="#e9ead2" opacity="0.67"/><polygon points="1178.8,245.0 1193.8,246.3 1199.7,253.6 1186.5,263.7 1176.7,263.7 1170.4,250.4" fill="#ecebd8" opacity="0.67"/><polygon points="432.8,400.4 444.0,403.3 442.8,412.6 434.9,416.6 428.1,414.8 423.1,409.6" fill="#ecebd8" opacity="0.52"/><polygon points="613.1,696.5 598.3,691.0 600.7,680.0 604.5,674.8 622.2,681.1 622.8,687.3" fill="#ecebd8" opacity="0.65"/><polygon points="1533.1,802.6 1532.8,794.2 1543.3,794.3 1544.4,803.6" fill="#ecebd8" opacity="0.72"/><polygon points="1159.0,857.3 1163.8,842.8 1176.1,842.2 1181.0,854.1 1179.0,859.5 1166.9,862.8" fill="#e9ead2" opacity="0.67"/><polygon points="899.6,355.1 900.2,365.1 887.9,372.4 874.8,363.5 890.3,349.0" fill="#e9ead2" opacity="0.71"/><polygon points="746.8,709.7 744.4,713.9 737.4,711.6 738.4,708.3 739.9,705.0 746.2,707.4" fill="#ecebd8" opacity="0.45"/><polygon points="446.7,705.1 446.3,720.9 428.9,721.7 433.8,707.9" fill="#e9ead2" opacity="0.76"/><polygon points="1411.4,561.4 1400.8,569.8 1389.2,560.8 1387.4,549.3 1405.9,549.4" fill="#ebe9d4" opacity="0.49"/><polygon points="790.6,639.4 785.0,638.5 782.8,632.3 791.1,630.6 795.1,634.7" fill="#e9ead2" opacity="0.62"/><polygon points="380.2,724.8 389.2,717.8 394.6,722.4 392.0,729.0" fill="#ebe9d4" opacity="0.69"/><polygon points="929.8,289.3 924.2,289.3 921.0,282.9 927.9,279.3 933.1,283.5" fill="#e9ead2" opacity="0.74"/><polygon points="1028.2,762.2 1034.4,751.4 1053.3,748.9 1062.1,756.9 1060.6,768.2 1047.7,771.5" fill="#e9ead2" opacity="0.62"/><polygon points="521.1,303.7 524.7,308.5 520.2,313.8 513.9,311.6 514.7,306.5" fill="#ecebd8" opacity="0.68"/><polygon points="1445.8,728.5 1436.7,730.6 1428.9,724.5 1435.3,713.9 1445.0,715.6 1449.4,719.4" fill="#ebe9d4" opacity="0.61"/><polygon points="1201.6,776.2 1211.9,769.8 1219.0,772.0 1211.8,782.5" fill="#ebe9d4" opacity="0.52"/><polygon points="705.2,352.5 712.3,353.1 713.5,361.0 702.0,358.6" fill="#ebe9d4" opacity="0.43"/><polygon points="1450.5,320.5 1458.9,311.4 1471.0,310.1 1473.8,317.3 1468.3,327.2 1453.8,326.4" fill="#ebe9d4" opacity="0.52"/><polygon points="1177.9,634.3 1193.9,632.0 1198.6,640.8 1189.7,651.9 1178.9,647.4" fill="#e9ead2" opacity="0.80"/></g><g><polygon points="976.6,482.0 973.5,485.5 966.5,484.8 962.5,481.9 965.9,477.0 971.1,477.8" fill="#e2e9c2" opacity="0.34"/><polygon points="1487.6,892.0 1485.4,889.2 1490.8,885.9 1493.9,886.9 1496.0,890.6 1491.3,893.7" fill="#e2e9c2" opacity="0.56"/><polygon points="447.3,494.3 440.9,484.3 448.6,479.0 456.6,486.3" fill="#e2e9c2" opacity="0.34"/><polygon points="1558.2,562.0 1556.5,569.9 1549.2,572.9 1538.4,570.3 1539.7,563.7 1550.6,559.3" fill="#e4eac5" opacity="0.52"/><polygon points="1125.0,252.6 1122.2,263.7 1103.4,265.8 1103.4,253.8 1111.3,245.3" fill="#e4eac5" opacity="0.44"/><polygon points="885.6,890.8 884.1,882.9 899.0,879.3 898.7,891.5" fill="#e2e9c2" opacity="0.31"/><polygon points="1376.6,762.9 1382.4,767.2 1381.3,774.6 1370.7,775.9 1367.8,772.5 1367.2,762.2" fill="#e2e9c2" opacity="0.32"/><polygon points="1613.3,346.0 1629.6,339.9 1636.1,358.4 1617.2,356.8" fill="#e4eac5" opacity="0.34"/><polygon points="479.7,608.7 484.7,593.4 500.4,599.3 495.8,610.2" fill="#e4eac5" opacity="0.40"/><polygon points="1558.5,412.6 1562.0,418.5 1560.6,422.1 1554.8,421.4 1550.6,418.3 1553.7,415.2" fill="#e2e9c2" opacity="0.47"/><polygon points="1120.0,520.8 1123.8,516.8 1130.5,517.5 1131.2,524.8 1126.7,529.0 1119.7,527.9" fill="#e2e9c2" opacity="0.50"/><polygon points="420.8,389.6 421.9,398.1 416.4,403.8 407.1,398.6 408.5,393.0" fill="#e2e9c2" opacity="0.33"/><polygon points="424.9,650.2 416.0,653.9 405.8,649.5 410.2,639.1 421.2,642.8" fill="#e4eac5" opacity="0.50"/><polygon points="969.9,326.7 943.6,326.4 945.3,312.3 963.1,312.5" fill="#e2e9c2" opacity="0.37"/><polygon points="704.7,583.8 699.2,578.7 703.0,572.4 709.4,571.8 712.1,579.7" fill="#e2e9c2" opacity="0.39"/><polygon points="1414.6,877.3 1404.4,886.9 1395.8,887.8 1388.0,877.4 1396.9,868.6" fill="#e4eac5" opacity="0.43"/><polygon points="470.3,436.2 471.8,431.0 479.3,428.3 486.1,430.9 484.4,441.6 478.4,443.1" fill="#e4eac5" opacity="0.36"/><polygon points="1065.7,459.4 1065.7,453.7 1070.2,452.8 1074.3,453.3 1074.0,457.9 1068.6,460.1" fill="#e2e9c2" opacity="0.34"/><polygon points="576.8,289.2 592.6,291.7 597.3,302.4 588.2,307.6 576.6,301.7" fill="#e2e9c2" opacity="0.47"/><polygon points="385.5,686.2 390.5,684.1 394.2,684.9 394.6,690.7 389.0,690.4" fill="#e4eac5" opacity="0.52"/><polygon points="445.0,426.0 440.3,424.0 434.7,419.5 441.8,413.7 446.9,412.8 452.4,419.7" fill="#e2e9c2" opacity="0.58"/><polygon points="1296.3,559.7 1295.9,564.2 1291.8,567.5 1287.2,562.4 1289.1,559.4" fill="#e2e9c2" opacity="0.53"/><polygon points="399.2,671.0 393.0,679.4 384.6,675.2 391.5,667.7" fill="#e4eac5" opacity="0.42"/><polygon points="480.8,776.0 480.6,782.6 471.6,783.6 468.7,775.9 477.9,772.0" fill="#e2e9c2" opacity="0.55"/><polygon points="413.3,897.2 418.6,891.7 425.8,893.2 426.3,897.3 417.7,899.5" fill="#e2e9c2" opacity="0.60"/><polygon points="1325.7,668.6 1313.5,665.7 1317.5,656.9 1331.9,660.7" fill="#e4eac5" opacity="0.58"/><polygon points="827.8,606.3 825.4,608.0 817.1,608.3 816.2,604.4 821.6,601.0 827.9,601.1" fill="#e2e9c2" opacity="0.32"/><polygon points="1102.5,561.1 1120.5,566.1 1117.9,575.7 1105.0,579.5 1096.5,572.1" fill="#e4eac5" opacity="0.52"/><polygon points="503.7,809.3 516.7,805.3 523.2,818.3 514.8,824.1 507.2,827.9 498.1,818.5" fill="#e4eac5" opacity="0.43"/><polygon points="885.2,866.8 871.2,867.9 865.5,855.2 878.6,849.2 892.7,855.1" fill="#e2e9c2" opacity="0.59"/><polygon points="467.0,585.2 464.5,578.8 474.0,575.6 481.8,579.9 480.2,585.5 474.3,587.8" fill="#e4eac5" opacity="0.55"/><polygon points="494.2,738.1 480.3,741.7 468.0,734.2 475.2,722.1 489.3,728.1" fill="#e4eac5" opacity="0.43"/><polygon points="1122.3,797.3 1133.4,803.5 1128.7,810.5 1115.7,808.4 1115.9,799.8" fill="#e4eac5" opacity="0.51"/><polygon points="793.7,545.8 792.7,557.6 781.9,560.1 773.0,548.7 781.5,541.2" fill="#e4eac5" opacity="0.44"/><polygon points="417.5,370.9 438.9,366.2 442.0,377.3 428.9,384.5" fill="#e2e9c2" opacity="0.55"/><polygon points="718.3,890.5 710.6,885.7 718.8,881.7 723.6,886.6" fill="#e4eac5" opacity="0.44"/><polygon points="891.2,289.1 899.1,292.9 894.2,299.4 886.1,293.1" fill="#e4eac5" opacity="0.34"/><polygon points="814.4,771.2 807.2,775.7 800.8,773.6 799.8,764.0 807.6,763.8 813.1,767.1" fill="#e2e9c2" opacity="0.39"/><polygon points="651.6,641.1 643.0,647.0 632.8,637.7 642.7,632.8" fill="#e4eac5" opacity="0.48"/><polygon points="982.1,510.9 983.2,504.6 992.0,503.9 995.6,509.3 994.1,514.5 986.1,513.9" fill="#e4eac5" opacity="0.58"/><polygon points="732.5,338.1 740.3,344.2 730.9,348.3 722.8,342.3" fill="#e2e9c2" opacity="0.39"/><polygon points="1479.2,434.3 1476.2,438.2 1472.0,439.1 1468.3,435.5 1470.2,432.6 1474.9,431.0" fill="#e4eac5" opacity="0.53"/><polygon points="713.1,268.5 712.8,279.9 702.2,277.9 700.4,269.5" fill="#e4eac5" opacity="0.51"/><polygon points="541.8,884.3 553.2,885.8 554.8,892.8 546.4,900.4 539.8,897.9 534.6,890.9" fill="#e4eac5" opacity="0.41"/><polygon points="619.1,545.4 612.5,546.3 612.7,539.9 621.8,538.4" fill="#e4eac5" opacity="0.37"/><polygon points="1191.2,791.7 1188.7,779.7 1199.3,774.2 1205.8,782.4 1200.6,790.9" fill="#e2e9c2" opacity="0.52"/><polygon points="619.8,716.1 616.6,724.4 604.0,716.5 608.7,710.3" fill="#e4eac5" opacity="0.33"/><polygon points="1155.3,845.8 1149.6,852.1 1142.0,844.9 1150.3,838.6" fill="#e4eac5" opacity="0.40"/><polygon points="1602.7,245.7 1596.3,249.4 1588.5,247.0 1595.6,240.9" fill="#e4eac5" opacity="0.57"/><polygon points="698.3,605.2 695.2,615.3 685.2,612.2 689.1,603.0" fill="#e4eac5" opacity="0.46"/><polygon points="606.6,281.5 598.3,271.2 612.6,264.0 622.0,270.9 616.6,284.8" fill="#e2e9c2" opacity="0.39"/><polygon points="1011.2,825.7 1017.0,822.6 1020.9,827.4 1017.4,829.4" fill="#e4eac5" opacity="0.53"/><polygon points="1462.8,766.1 1461.8,762.0 1469.5,757.9 1472.6,763.8 1471.4,768.3" fill="#e2e9c2" opacity="0.53"/><polygon points="1654.2,716.7 1660.4,727.7 1649.2,735.9 1637.9,729.3 1640.6,720.9" fill="#e2e9c2" opacity="0.49"/><polygon points="517.7,706.7 509.7,705.2 509.5,699.6 517.9,699.9" fill="#e2e9c2" opacity="0.37"/><polygon points="602.0,361.3 598.3,364.6 594.0,364.3 589.7,362.1 593.5,357.0 599.5,357.1" fill="#e2e9c2" opacity="0.49"/><polygon points="527.8,479.6 534.4,483.7 529.9,489.4 522.7,483.5" fill="#e4eac5" opacity="0.59"/><polygon points="1535.0,383.7 1530.8,373.5 1536.3,369.1 1546.4,373.7 1547.4,381.3" fill="#e2e9c2" opacity="0.44"/><polygon points="1017.7,568.1 1017.8,580.3 1001.4,576.8 1004.5,569.7" fill="#e2e9c2" opacity="0.55"/><polygon points="1030.1,304.9 1035.7,298.1 1040.2,301.5 1035.5,307.2" fill="#e2e9c2" opacity="0.45"/><polygon points="1191.9,559.9 1187.3,570.0 1176.1,568.8 1171.9,559.3 1181.4,554.6" fill="#e2e9c2" opacity="0.34"/><polygon points="1053.3,855.7 1055.4,859.9 1049.8,862.7 1045.0,862.9 1044.6,857.4 1048.5,854.6" fill="#e4eac5" opacity="0.37"/><polygon points="1119.9,665.8 1111.0,670.0 1106.8,665.2 1113.2,659.7" fill="#e2e9c2" opacity="0.59"/><polygon points="1540.4,793.0 1538.4,786.2 1546.9,781.5 1553.0,783.2 1553.4,789.9 1546.0,794.6" fill="#e4eac5" opacity="0.40"/><polygon points="1444.5,566.4 1439.2,576.7 1429.0,579.4 1421.7,569.0 1425.2,555.7 1439.5,556.6" fill="#e2e9c2" opacity="0.58"/><polygon points="723.4,253.7 729.3,251.0 736.3,254.9 737.0,259.8 731.9,267.9 720.0,261.0" fill="#e2e9c2" opacity="0.34"/><polygon points="681.3,666.6 693.7,665.0 703.5,668.9 700.4,677.1 692.0,680.5 681.5,676.1" fill="#e4eac5" opacity="0.43"/><polygon points="1192.3,627.8 1201.9,629.2 1204.8,636.6 1191.4,642.8 1183.9,633.3" fill="#e4eac5" opacity="0.31"/><polygon points="796.4,303.1 811.2,311.5 808.3,320.1 789.8,319.9 789.1,310.7" fill="#e2e9c2" opacity="0.40"/><polygon points="736.5,247.1 726.6,247.7 720.1,237.4 737.8,235.9" fill="#e2e9c2" opacity="0.49"/><polygon points="1606.0,697.9 1596.0,702.1 1579.9,699.9 1584.6,690.8 1593.0,684.0 1601.4,690.2" fill="#e4eac5" opacity="0.31"/><polygon points="690.4,507.3 692.5,519.2 678.4,521.0 672.7,512.3 679.5,504.6" fill="#e4eac5" opacity="0.43"/><polygon points="1422.1,665.1 1423.9,674.8 1413.7,678.9 1403.6,675.0 1408.8,664.0" fill="#e2e9c2" opacity="0.41"/><polygon points="581.0,614.4 571.2,623.5 560.9,611.3 577.5,606.5" fill="#e2e9c2" opacity="0.31"/><polygon points="1110.9,743.2 1126.8,743.1 1121.7,759.0 1106.0,760.0" fill="#e2e9c2" opacity="0.39"/><polygon points="1442.3,262.2 1453.2,255.8 1463.4,257.5 1464.5,273.7 1450.8,277.8 1441.4,274.3" fill="#e4eac5" opacity="0.31"/><polygon points="533.8,789.2 537.3,795.3 532.7,798.3 527.8,799.5 521.0,792.1 526.1,788.6" fill="#e4eac5" opacity="0.34"/><polygon points="1376.3,538.0 1380.9,544.4 1379.9,550.6 1370.1,555.8 1361.8,547.0 1361.8,541.6" fill="#e2e9c2" opacity="0.59"/><polygon points="1628.3,768.2 1615.5,760.2 1627.6,747.8 1641.8,757.0 1639.5,768.7" fill="#e2e9c2" opacity="0.47"/><polygon points="561.5,452.2 568.0,456.2 563.0,465.4 554.3,464.8 549.6,455.6" fill="#e4eac5" opacity="0.43"/><polygon points="1260.2,546.8 1259.9,541.2 1264.4,540.2 1269.5,542.8 1268.7,547.4 1264.1,550.3" fill="#e2e9c2" opacity="0.57"/><polygon points="694.7,830.4 679.9,832.9 675.1,830.8 671.5,821.2 685.2,814.8 691.5,822.2" fill="#e4eac5" opacity="0.56"/><polygon points="1104.9,601.2 1099.7,591.6 1106.3,584.8 1120.0,585.3 1125.0,593.7 1117.9,604.2" fill="#e4eac5" opacity="0.52"/><polygon points="1196.3,341.4 1195.6,332.1 1211.0,328.8 1215.9,338.3" fill="#e2e9c2" opacity="0.60"/><polygon points="777.5,250.6 766.7,253.4 761.5,246.0 763.7,242.0 772.9,237.4 778.8,240.4" fill="#e2e9c2" opacity="0.57"/><polygon points="1582.0,868.6 1573.1,857.3 1583.0,850.6 1600.1,855.4 1599.5,862.0 1587.7,868.8" fill="#e4eac5" opacity="0.46"/><polygon points="1116.7,478.1 1105.8,485.6 1093.2,475.6 1102.2,468.5 1110.4,468.1" fill="#e2e9c2" opacity="0.32"/><polygon points="1488.3,432.8 1495.8,435.8 1495.8,445.2 1488.1,447.5 1477.3,441.5 1476.4,436.8" fill="#e4eac5" opacity="0.51"/><polygon points="601.5,390.1 585.8,405.4 572.1,397.1 579.5,380.1" fill="#e2e9c2" opacity="0.51"/><polygon points="729.7,866.3 740.8,869.4 739.1,885.3 722.7,879.8" fill="#e4eac5" opacity="0.34"/><polygon points="631.7,626.3 625.4,618.7 632.3,612.3 646.0,615.1 642.1,624.8" fill="#e4eac5" opacity="0.36"/><polygon points="415.1,799.5 404.5,790.4 411.0,777.8 429.2,789.4" fill="#e2e9c2" opacity="0.51"/><polygon points="823.9,316.6 824.3,308.5 826.7,304.1 837.7,305.9 838.5,313.0 833.0,316.0" fill="#e4eac5" opacity="0.52"/><polygon points="780.8,624.2 798.4,629.9 801.2,640.4 786.5,646.2 769.9,644.9 771.6,637.6" fill="#e4eac5" opacity="0.37"/><polygon points="1273.7,345.5 1278.7,337.1 1289.5,338.2 1298.6,345.4 1282.2,353.9" fill="#e2e9c2" opacity="0.56"/><polygon points="1059.2,799.0 1047.0,807.4 1039.2,795.8 1043.1,785.7 1059.2,791.9" fill="#e4eac5" opacity="0.35"/><polygon points="697.4,699.0 702.5,704.5 695.5,714.5 682.9,709.9 686.2,699.2" fill="#e4eac5" opacity="0.51"/><polygon points="1577.1,548.5 1562.7,546.8 1560.0,536.7 1567.9,532.9 1581.5,535.8 1584.1,544.9" fill="#e2e9c2" opacity="0.55"/><polygon points="831.4,842.7 817.8,840.1 817.7,831.1 823.7,824.6 834.7,828.0 836.0,833.8" fill="#e2e9c2" opacity="0.58"/><polygon points="1156.9,793.5 1161.3,780.3 1179.7,784.4 1176.5,798.3" fill="#e2e9c2" opacity="0.50"/><polygon points="1404.5,709.7 1412.0,710.9 1421.6,718.6 1416.4,726.8 1407.5,730.4 1399.2,723.2" fill="#e2e9c2" opacity="0.37"/><polygon points="735.8,671.2 734.0,666.1 737.7,664.0 744.5,664.6 745.2,668.1 743.4,670.5" fill="#e2e9c2" opacity="0.44"/><polygon points="952.0,863.2 955.1,868.6 950.5,870.9 947.2,870.7 943.6,866.7 949.1,863.2" fill="#e4eac5" opacity="0.60"/><polygon points="1284.8,547.9 1276.1,541.9 1272.0,532.1 1286.9,528.0 1292.7,535.8 1291.7,543.6" fill="#e4eac5" opacity="0.47"/><polygon points="1488.5,576.5 1495.2,569.0 1511.5,572.1 1507.8,581.4 1498.7,586.7" fill="#e2e9c2" opacity="0.32"/><polygon points="814.6,450.9 804.5,440.9 817.4,432.0 826.0,443.8" fill="#e2e9c2" opacity="0.52"/><polygon points="698.5,476.0 688.0,478.6 684.3,472.4 683.5,464.0 695.5,462.9 701.9,466.5" fill="#e2e9c2" opacity="0.59"/><polygon points="565.6,487.2 572.5,490.6 568.1,497.1 563.2,496.7 558.8,491.9" fill="#e4eac5" opacity="0.58"/><polygon points="1526.3,429.2 1520.4,432.1 1515.2,429.0 1521.4,424.1" fill="#e2e9c2" opacity="0.38"/><polygon points="481.1,535.7 483.4,533.4 488.3,531.7 490.9,534.6 490.7,539.1 484.9,540.3" fill="#e2e9c2" opacity="0.56"/><polygon points="989.5,742.7 1001.6,733.9 1013.4,737.6 1018.2,748.9 1012.9,755.6 995.6,754.5" fill="#e2e9c2" opacity="0.32"/><polygon points="1184.8,680.8 1176.9,684.5 1168.7,676.7 1170.0,669.0 1177.8,665.1 1187.9,672.7" fill="#e4eac5" opacity="0.45"/><polygon points="436.7,488.7 443.9,495.9 438.5,501.7 429.6,495.4" fill="#e4eac5" opacity="0.35"/><polygon points="1535.3,633.3 1526.8,629.9 1531.2,623.4 1533.9,620.0 1543.6,624.9 1543.0,632.3" fill="#e2e9c2" opacity="0.57"/><polygon points="755.3,880.8 754.3,878.2 757.5,875.9 762.5,876.9 763.5,880.5 760.2,882.6" fill="#e2e9c2" opacity="0.40"/><polygon points="560.5,300.4 568.6,296.7 575.2,302.5 567.2,310.0" fill="#e2e9c2" opacity="0.42"/><polygon points="529.2,283.6 525.6,296.3 513.4,292.1 518.8,279.3" fill="#e4eac5" opacity="0.32"/><polygon points="733.9,319.7 731.7,314.6 733.5,311.6 738.7,312.8 739.5,319.9" fill="#e4eac5" opacity="0.48"/><polygon points="912.5,490.3 920.8,488.9 928.9,495.4 925.5,500.8 913.8,501.0" fill="#e2e9c2" opacity="0.38"/><polygon points="876.8,613.7 866.4,615.8 860.9,606.8 865.6,602.0 874.0,598.1 883.3,610.1" fill="#e4eac5" opacity="0.30"/><polygon points="913.4,395.5 903.1,392.2 903.3,384.9 914.8,379.5 926.4,382.7 920.6,394.3" fill="#e4eac5" opacity="0.34"/><polygon points="1089.4,872.9 1078.0,875.3 1076.3,861.9 1090.1,858.4" fill="#e4eac5" opacity="0.57"/><polygon points="1523.2,854.1 1527.4,841.3 1540.7,843.6 1538.7,854.2" fill="#e2e9c2" opacity="0.43"/><polygon points="1201.2,456.0 1198.5,464.0 1185.8,465.7 1181.2,459.6 1185.5,452.3 1191.7,450.3" fill="#e4eac5" opacity="0.31"/><polygon points="1312.7,721.8 1320.1,733.4 1311.5,738.8 1301.3,742.0 1294.8,734.5 1293.5,722.5" fill="#e2e9c2" opacity="0.40"/><polygon points="757.8,848.8 755.0,845.3 759.5,840.9 764.0,839.6 767.1,844.0 766.3,849.2" fill="#e2e9c2" opacity="0.42"/><polygon points="650.2,766.2 647.3,770.7 637.5,768.0 639.0,760.7 649.8,760.5" fill="#e2e9c2" opacity="0.58"/><polygon points="1001.7,315.0 997.4,320.9 981.4,319.5 977.2,309.3 991.4,306.3" fill="#e2e9c2" opacity="0.39"/><polygon points="752.0,316.4 749.3,305.9 760.5,301.1 766.1,303.2 770.0,312.3 760.6,320.3" fill="#e4eac5" opacity="0.47"/><polygon points="743.0,335.6 729.8,334.0 727.3,323.3 740.2,321.7" fill="#e4eac5" opacity="0.49"/><polygon points="1172.5,559.7 1191.0,563.4 1198.3,571.9 1186.3,582.9 1175.0,582.8 1170.0,569.6" fill="#e4eac5" opacity="0.44"/><polygon points="1169.9,791.1 1176.9,786.8 1180.8,788.7 1180.8,793.2 1178.4,795.1 1172.9,795.3" fill="#e2e9c2" opacity="0.59"/><polygon points="1017.0,603.1 1024.4,597.4 1029.0,604.3 1027.6,609.8 1018.8,608.1" fill="#e2e9c2" opacity="0.35"/><polygon points="718.8,308.0 701.9,300.5 716.1,287.6 730.5,295.4" fill="#e2e9c2" opacity="0.55"/><polygon points="1607.6,474.0 1610.7,471.2 1617.8,472.8 1615.9,478.0 1610.3,479.9" fill="#e4eac5" opacity="0.52"/><polygon points="611.4,486.2 616.4,487.6 622.5,494.9 617.8,500.4 607.3,500.4 606.0,490.8" fill="#e2e9c2" opacity="0.59"/><polygon points="539.3,682.1 532.4,696.7 512.4,688.3 518.6,674.1" fill="#e4eac5" opacity="0.53"/><polygon points="1567.5,842.5 1563.0,844.5 1558.9,841.2 1559.9,837.2 1568.0,837.6" fill="#e4eac5" opacity="0.44"/><polygon points="926.8,571.2 930.4,566.1 938.9,569.3 941.6,575.1 930.3,578.2" fill="#e2e9c2" opacity="0.55"/><polygon points="718.9,335.2 727.6,337.2 733.2,340.8 728.3,347.4 720.4,350.0 713.1,343.6" fill="#e2e9c2" opacity="0.52"/><polygon points="1455.3,868.9 1455.6,876.6 1447.1,881.0 1437.5,871.7 1443.4,866.7" fill="#e2e9c2" opacity="0.52"/><polygon points="1217.2,829.3 1225.2,825.5 1234.7,825.0 1238.9,832.1 1231.5,840.1 1221.7,841.0" fill="#e4eac5" opacity="0.41"/><polygon points="1096.1,252.0 1104.5,244.5 1116.5,249.4 1110.8,257.2" fill="#e4eac5" opacity="0.33"/><polygon points="1272.6,768.5 1270.2,760.0 1280.7,754.6 1284.5,764.5" fill="#e2e9c2" opacity="0.55"/><polygon points="1198.5,605.9 1192.5,595.9 1206.1,590.3 1215.6,592.5 1218.5,601.9 1211.6,608.0" fill="#e2e9c2" opacity="0.31"/><polygon points="1164.8,509.0 1168.8,496.0 1180.4,495.0 1187.3,507.1" fill="#e4eac5" opacity="0.59"/><polygon points="1427.8,782.6 1418.0,782.6 1418.8,768.5 1430.8,768.9 1434.4,778.9" fill="#e4eac5" opacity="0.31"/><polygon points="1547.9,565.7 1541.2,557.1 1548.5,549.5 1552.8,549.0 1564.0,551.1 1559.0,565.3" fill="#e2e9c2" opacity="0.37"/><polygon points="1529.2,461.6 1533.9,456.0 1539.0,459.5 1534.0,463.7" fill="#e2e9c2" opacity="0.41"/><polygon points="1166.2,508.5 1176.3,505.6 1180.7,511.4 1175.3,514.6 1169.0,514.5" fill="#e2e9c2" opacity="0.49"/><polygon points="465.4,690.9 457.7,691.1 456.1,686.0 460.6,683.2 467.5,685.5" fill="#e4eac5" opacity="0.49"/><polygon points="542.8,391.4 549.0,401.8 536.3,410.9 528.7,407.8 533.2,394.3" fill="#e4eac5" opacity="0.39"/><polygon points="631.7,375.5 636.7,379.1 639.6,392.5 629.3,395.4 617.1,388.5 617.3,381.7" fill="#e2e9c2" opacity="0.42"/><polygon points="895.6,677.6 903.1,673.1 910.8,679.2 908.3,683.5 901.3,688.4 892.3,681.4" fill="#e4eac5" opacity="0.39"/><polygon points="1654.0,523.5 1663.7,531.1 1654.2,538.6 1640.3,535.9 1640.4,527.3" fill="#e2e9c2" opacity="0.38"/><polygon points="1316.4,338.8 1309.0,327.6 1318.7,319.6 1331.2,323.6 1332.4,328.9 1329.4,338.3" fill="#e2e9c2" opacity="0.40"/><polygon points="1588.7,828.6 1589.0,836.4 1582.8,837.4 1580.1,831.9" fill="#e2e9c2" opacity="0.46"/><polygon points="712.0,795.2 724.7,799.4 720.2,809.5 702.0,809.7 703.3,798.7" fill="#e4eac5" opacity="0.47"/><polygon points="1564.5,231.6 1568.8,244.1 1552.4,250.4 1545.4,236.4" fill="#e2e9c2" opacity="0.32"/><polygon points="525.4,718.8 522.9,710.7 532.6,705.9 539.3,717.9" fill="#e4eac5" opacity="0.36"/><polygon points="1360.8,393.8 1374.8,393.1 1369.8,403.7 1358.4,403.2" fill="#e2e9c2" opacity="0.44"/><polygon points="1005.3,330.8 982.0,330.3 980.4,316.3 1002.6,318.0" fill="#e2e9c2" opacity="0.33"/><polygon points="1072.7,407.7 1074.2,397.2 1084.1,394.2 1099.0,399.7 1086.9,411.6" fill="#e4eac5" opacity="0.48"/><polygon points="785.5,310.4 787.5,303.8 797.1,304.2 796.7,311.4 789.0,313.9" fill="#e2e9c2" opacity="0.35"/><polygon points="735.6,564.1 739.6,572.2 728.3,577.4 721.8,569.4 723.8,561.8" fill="#e2e9c2" opacity="0.54"/><polygon points="1487.4,271.9 1494.5,278.1 1495.0,288.6 1481.3,291.0 1476.5,283.2 1476.5,277.6" fill="#e2e9c2" opacity="0.37"/><polygon points="905.3,418.4 915.4,419.0 915.8,430.1 903.5,429.5" fill="#e2e9c2" opacity="0.35"/><polygon points="1573.2,477.1 1554.3,469.9 1554.3,457.2 1574.4,452.0 1579.2,464.7" fill="#e4eac5" opacity="0.54"/><polygon points="480.7,292.5 470.0,297.1 463.1,291.3 467.3,283.5 474.8,278.2 486.9,283.8" fill="#e4eac5" opacity="0.46"/><polygon points="1250.7,420.2 1245.6,414.4 1252.5,408.1 1260.4,410.6 1258.5,418.1" fill="#e4eac5" opacity="0.41"/><polygon points="1329.4,387.6 1336.8,394.5 1334.4,401.6 1319.5,401.3 1318.1,395.2" fill="#e2e9c2" opacity="0.49"/><polygon points="1515.6,310.4 1532.2,318.7 1522.7,330.4 1509.1,322.2" fill="#e4eac5" opacity="0.56"/><polygon points="536.5,520.2 523.6,526.5 513.0,528.5 507.7,515.9 519.2,507.4 529.6,507.2" fill="#e2e9c2" opacity="0.50"/><polygon points="673.1,445.0 679.8,454.4 672.8,459.3 662.1,452.1" fill="#e4eac5" opacity="0.40"/><polygon points="650.7,796.5 651.4,802.1 644.1,804.1 638.0,798.5 641.7,793.9" fill="#e4eac5" opacity="0.53"/><polygon points="524.3,756.3 539.3,766.5 532.4,774.5 519.1,773.8 516.5,761.6" fill="#e2e9c2" opacity="0.40"/><polygon points="783.3,533.1 778.8,536.9 772.6,536.2 774.7,528.2 780.0,528.3" fill="#e2e9c2" opacity="0.40"/><polygon points="1480.1,274.4 1472.4,277.3 1469.4,272.1 1467.4,267.4 1473.1,264.2 1481.4,269.0" fill="#e4eac5" opacity="0.47"/><polygon points="1212.3,341.3 1201.1,339.1 1200.4,329.4 1215.6,327.8 1220.4,334.6" fill="#e4eac5" opacity="0.43"/><polygon points="1321.9,698.0 1332.0,700.9 1328.6,709.7 1318.0,704.3" fill="#e2e9c2" opacity="0.49"/><polygon points="855.8,710.8 864.7,699.3 874.4,701.4 883.8,712.9 873.4,717.4 865.0,718.4" fill="#e2e9c2" opacity="0.31"/><polygon points="1276.9,649.3 1280.6,645.5 1288.2,644.9 1291.3,649.1 1287.9,655.9 1279.5,655.5" fill="#e2e9c2" opacity="0.51"/><polygon points="976.1,237.3 968.3,245.3 957.0,237.5 966.6,230.0" fill="#e2e9c2" opacity="0.31"/><polygon points="815.1,825.1 807.4,827.8 797.3,821.9 797.8,817.6 813.5,813.5 817.4,820.7" fill="#e4eac5" opacity="0.37"/><polygon points="409.1,539.5 408.9,532.0 421.4,529.4 424.8,533.1 421.3,541.1 413.4,542.7" fill="#e2e9c2" opacity="0.58"/><polygon points="423.1,517.4 430.4,513.4 437.6,516.9 433.7,526.0 422.9,523.7" fill="#e4eac5" opacity="0.36"/><polygon points="1582.6,366.1 1589.2,372.5 1581.5,375.7 1576.4,370.3" fill="#e4eac5" opacity="0.52"/><polygon points="720.0,533.9 718.1,546.0 703.9,546.4 703.8,531.3" fill="#e4eac5" opacity="0.48"/><polygon points="698.3,520.7 693.6,527.6 685.1,529.7 679.0,521.7 683.3,513.7 690.8,513.2" fill="#e2e9c2" opacity="0.44"/><polygon points="1449.1,483.5 1447.9,491.3 1438.3,490.1 1439.3,483.7" fill="#e2e9c2" opacity="0.44"/><polygon points="471.4,667.7 476.0,673.7 471.0,679.1 463.2,680.6 460.9,671.1" fill="#e2e9c2" opacity="0.60"/><polygon points="891.7,602.4 896.3,603.6 898.1,607.0 894.2,610.3 889.1,606.1" fill="#e4eac5" opacity="0.35"/><polygon points="1258.0,360.8 1254.6,363.2 1247.5,359.6 1248.5,355.7 1251.5,353.8 1258.6,356.7" fill="#e2e9c2" opacity="0.46"/><polygon points="843.8,431.6 851.0,433.9 846.1,442.0 838.9,441.0" fill="#e2e9c2" opacity="0.40"/><polygon points="1471.5,451.0 1460.6,467.4 1448.6,462.5 1456.0,446.8" fill="#e4eac5" opacity="0.58"/><polygon points="908.6,454.4 900.8,441.6 915.6,432.3 928.4,444.2" fill="#e4eac5" opacity="0.40"/><polygon points="1458.5,402.4 1441.0,407.5 1435.0,392.6 1449.2,391.0" fill="#e4eac5" opacity="0.35"/><polygon points="1321.8,718.0 1309.4,711.8 1301.4,707.3 1312.4,699.5 1326.4,697.9 1332.6,704.3" fill="#e2e9c2" opacity="0.30"/><polygon points="1382.0,652.7 1382.2,656.8 1375.0,660.0 1369.2,657.3 1369.8,651.6 1374.7,647.5" fill="#e2e9c2" opacity="0.44"/><polygon points="1485.2,869.5 1488.7,878.4 1484.2,888.0 1472.8,885.2 1464.2,876.4 1472.6,872.2" fill="#e2e9c2" opacity="0.56"/></g><g fill="#ebe9d6" opacity="0.75">
<path d="M378,235 L480,235 L520,290 L540,350 L600,380 L595,470 L560,520 L450,525 L378,530 Z"/>
<path d="M470,620 L560,600 L640,640 L650,720 L600,800 L540,860 L500,895 L473,895 L480,800 L440,730 Z"/>
<path d="M880,840 L940,848 L1000,852 L1050,845 L1080,850 L1060,895 L880,895 Z"/>
<path d="M1250,735 L1300,725 L1400,720 L1460,740 L1440,820 L1380,830 L1300,840 L1245,800 Z"/>
<path d="M780,360 L880,350 L960,380 L980,440 L900,460 L830,440 Z" opacity="0.5"/>
</g>
<g fill="#d3d6ad" opacity="0.4">
<path d="M740,895 L752,860 L770,835 L790,815 L815,790 L840,775 L870,760 L900,750 L930,742 L960,740 L990,738 L1020,735 L1050,728 L1080,725 L1110,720 L1140,718 L1170,725 L1200,730 L1220,745 L1215,770 L1195,790 L1170,805 L1150,818 L1120,830 L1090,836 L1060,842 L1030,845 L1000,850 L970,850 L940,845 L910,840 L880,835 L860,845 L845,870 L835,895 Z"/>
<path d="M1130,860 L1200,850 L1260,875 L1280,895 L1150,895 Z" opacity="0.6"/>
<path d="M1290,625 L1340,615 L1400,612 L1450,630 L1440,660 L1400,672 L1340,690 L1300,675 Z" opacity="0.25"/>
<path d="M1470,730 L1540,715 L1655,700 L1655,895 L1490,895 L1510,830 L1490,770 Z" opacity="0.3"/>
<path d="M700,895 L720,850 L760,800 L780,820 L760,895 Z" opacity="0.5"/>
</g>
<g fill="#c9cda0" opacity="0.35">
<path d="M825,815 L870,800 L905,793 L940,790 L965,810 L955,828 L905,836 L860,840 L830,842 Z"/>
<path d="M980,765 L1030,755 L1090,752 L1150,748 L1185,770 L1150,795 L1090,805 L1040,805 L995,795 Z"/>
<path d="M765,855 L800,830 L835,850 L825,895 L770,895 Z"/>
<path d="M1560,760 L1620,740 L1655,760 L1655,860 L1600,880 L1560,840 Z" opacity="0.3"/>
</g>
<g fill="#fff" opacity="0.25">
<path d="M860,790 L900,780 L930,790 L900,805 Z"/>
<path d="M1010,770 L1050,765 L1070,780 L1030,785 Z"/>
</g>
<g clip-path="url(#cpA)"><polygon points="955.2,823.8 943.8,815.9 957.0,810.3 967.4,816.1" fill="#c6c99c" opacity="0.46"/><polygon points="929.1,805.7 920.8,797.5 932.3,793.3 940.5,801.2" fill="#cdd0a5" opacity="0.43"/><polygon points="1049.7,813.5 1041.4,803.1 1055.9,800.3" fill="#d3d5ae" opacity="0.26"/><polygon points="1012.4,741.4 1006.3,738.6 1014.1,734.4" fill="#bfc395" opacity="0.40"/><polygon points="1020.7,760.5 1003.6,752.0 1014.5,748.2" fill="#c6c99c" opacity="0.41"/><polygon points="972.2,842.5 967.5,839.0 975.5,836.2 981.9,840.4" fill="#d3d5ae" opacity="0.60"/><polygon points="749.4,763.1 737.4,750.5 755.9,744.3 759.6,752.2" fill="#c6c99c" opacity="0.32"/><polygon points="1039.9,724.5 1039.7,715.4 1051.5,719.2" fill="#cdd0a5" opacity="0.54"/><polygon points="848.8,751.9 862.5,746.5 867.5,754.2" fill="#d3d5ae" opacity="0.33"/><polygon points="1073.1,773.2 1074.8,757.9 1091.8,761.4" fill="#c6c99c" opacity="0.35"/><polygon points="1183.1,755.4 1175.6,755.3 1182.7,752.4" fill="#cdd0a5" opacity="0.56"/><polygon points="1205.8,842.9 1203.2,829.8 1217.9,832.3" fill="#c6c99c" opacity="0.42"/><polygon points="1100.6,775.3 1081.4,783.1 1071.8,775.2 1091.8,768.0" fill="#bfc395" opacity="0.57"/><polygon points="1148.7,798.1 1153.9,787.3 1164.6,787.9 1165.1,796.6" fill="#bfc395" opacity="0.50"/><polygon points="932.5,854.7 917.1,851.8 924.7,842.9 936.8,847.9" fill="#bfc395" opacity="0.34"/><polygon points="752.2,776.0 734.2,771.8 744.4,764.7" fill="#d3d5ae" opacity="0.32"/><polygon points="932.5,866.8 946.0,854.3 961.4,866.3" fill="#c6c99c" opacity="0.50"/><polygon points="1194.6,771.8 1189.7,765.9 1202.3,764.6" fill="#bfc395" opacity="0.36"/><polygon points="1132.4,772.0 1136.0,762.9 1147.8,765.6" fill="#c6c99c" opacity="0.52"/><polygon points="854.4,856.7 876.3,848.2 870.8,864.5" fill="#cdd0a5" opacity="0.54"/><polygon points="864.4,850.7 851.0,840.3 874.9,841.3" fill="#cdd0a5" opacity="0.39"/><polygon points="1114.9,879.4 1117.0,874.4 1124.9,876.3 1120.6,881.9" fill="#d3d5ae" opacity="0.41"/><polygon points="1044.1,755.5 1045.0,749.4 1059.0,749.2 1055.5,763.5" fill="#d3d5ae" opacity="0.57"/><polygon points="1151.9,782.6 1146.3,779.3 1151.4,776.4 1155.6,777.8" fill="#cdd0a5" opacity="0.41"/><polygon points="1212.2,881.1 1219.0,873.0 1229.7,876.2" fill="#d3d5ae" opacity="0.54"/><polygon points="1001.4,749.5 1015.5,740.4 1019.9,750.8" fill="#d3d5ae" opacity="0.45"/><polygon points="834.1,816.8 832.8,807.1 843.5,813.7" fill="#c6c99c" opacity="0.49"/><polygon points="763.5,815.0 772.4,808.1 776.0,819.7" fill="#bfc395" opacity="0.43"/><polygon points="793.9,794.1 789.9,794.4 789.6,790.0 795.7,789.6" fill="#c6c99c" opacity="0.42"/><polygon points="1012.8,873.7 1011.0,865.3 1024.9,864.8 1030.0,872.0" fill="#cdd0a5" opacity="0.44"/><polygon points="1156.5,831.7 1142.2,834.0 1143.4,820.7 1157.1,822.5" fill="#c6c99c" opacity="0.30"/><polygon points="862.7,848.3 850.5,850.7 855.0,843.3" fill="#d3d5ae" opacity="0.57"/><polygon points="1193.8,741.0 1200.1,733.2 1209.6,732.0 1212.4,744.4" fill="#bfc395" opacity="0.30"/><polygon points="820.0,756.1 832.6,746.7 839.8,755.4 829.3,762.2" fill="#bfc395" opacity="0.32"/><polygon points="924.1,832.3 915.5,831.4 918.3,827.0" fill="#c6c99c" opacity="0.36"/><polygon points="770.5,868.5 784.3,860.0 787.1,872.8" fill="#c6c99c" opacity="0.51"/><polygon points="1103.3,863.3 1112.5,857.1 1119.6,861.6 1117.1,867.0" fill="#c6c99c" opacity="0.56"/><polygon points="1218.8,879.5 1212.5,879.6 1210.9,876.1 1218.7,876.0" fill="#c6c99c" opacity="0.52"/><polygon points="1203.5,727.2 1209.4,714.7 1219.3,721.1" fill="#d3d5ae" opacity="0.57"/><polygon points="998.6,818.0 990.2,804.2 1013.8,807.3" fill="#cdd0a5" opacity="0.39"/><polygon points="1199.8,874.1 1198.6,864.5 1213.8,867.7" fill="#d3d5ae" opacity="0.45"/><polygon points="884.4,845.4 872.0,849.6 871.1,842.0" fill="#bfc395" opacity="0.27"/><polygon points="1210.1,885.5 1216.2,883.0 1220.7,886.9" fill="#bfc395" opacity="0.30"/><polygon points="1210.0,762.1 1197.0,768.4 1193.9,755.9" fill="#bfc395" opacity="0.41"/><polygon points="859.8,822.9 860.8,818.4 872.5,817.4 872.5,824.7" fill="#d3d5ae" opacity="0.35"/><polygon points="1039.1,850.4 1020.6,852.1 1038.4,838.1" fill="#c6c99c" opacity="0.47"/><polygon points="748.1,764.3 742.8,767.3 742.6,760.7" fill="#d3d5ae" opacity="0.42"/><polygon points="917.2,781.4 899.1,780.5 911.0,772.2" fill="#d3d5ae" opacity="0.39"/><polygon points="807.3,754.0 807.5,738.2 821.2,743.3" fill="#d3d5ae" opacity="0.28"/><polygon points="775.1,820.5 772.9,811.7 790.4,818.8" fill="#bfc395" opacity="0.50"/><polygon points="1077.4,772.2 1068.2,770.1 1070.3,763.5 1078.1,767.1" fill="#d3d5ae" opacity="0.41"/><polygon points="846.8,896.0 836.4,886.2 854.1,886.2" fill="#d3d5ae" opacity="0.53"/><polygon points="1005.2,870.2 992.9,871.0 1000.2,859.4" fill="#c6c99c" opacity="0.48"/><polygon points="1120.1,733.2 1122.2,724.4 1137.2,729.4" fill="#c6c99c" opacity="0.51"/><polygon points="1047.2,764.6 1045.2,758.0 1054.9,758.9 1057.2,765.3" fill="#c6c99c" opacity="0.50"/><polygon points="1168.4,797.7 1175.7,780.5 1192.0,791.6" fill="#c6c99c" opacity="0.53"/><polygon points="939.4,794.8 937.3,790.6 946.9,788.2 947.3,793.8" fill="#c6c99c" opacity="0.36"/><polygon points="801.5,887.8 808.8,875.7 825.6,880.9" fill="#cdd0a5" opacity="0.46"/><polygon points="957.7,811.7 966.9,802.2 971.6,812.6" fill="#d3d5ae" opacity="0.42"/><polygon points="926.5,890.9 925.6,879.5 941.9,890.6" fill="#d3d5ae" opacity="0.53"/><polygon points="757.7,884.5 768.9,871.2 781.0,887.0" fill="#cdd0a5" opacity="0.34"/><polygon points="1149.6,809.4 1161.8,804.8 1167.1,815.5" fill="#cdd0a5" opacity="0.54"/><polygon points="787.1,768.1 769.3,769.7 777.9,760.9" fill="#cdd0a5" opacity="0.40"/><polygon points="1190.6,738.5 1165.9,739.6 1169.6,730.5 1191.0,726.0" fill="#c6c99c" opacity="0.38"/><polygon points="1069.8,740.3 1060.5,734.9 1075.7,732.5" fill="#bfc395" opacity="0.52"/><polygon points="1141.4,870.6 1153.4,861.3 1159.8,871.4" fill="#c6c99c" opacity="0.34"/><polygon points="827.4,848.5 834.4,843.0 843.6,844.9 839.9,852.3" fill="#cdd0a5" opacity="0.31"/><polygon points="946.9,865.3 924.6,871.8 928.5,858.7" fill="#cdd0a5" opacity="0.48"/><polygon points="1112.2,868.9 1100.6,862.9 1112.9,860.1" fill="#c6c99c" opacity="0.34"/><polygon points="828.6,778.9 825.1,767.3 839.3,768.5" fill="#d3d5ae" opacity="0.44"/><polygon points="903.1,808.7 905.9,803.1 911.2,802.5 912.2,808.8" fill="#bfc395" opacity="0.45"/><polygon points="1076.3,784.5 1063.7,774.4 1083.4,769.3" fill="#c6c99c" opacity="0.45"/><polygon points="854.8,887.7 853.6,873.3 879.9,872.3 873.9,884.3" fill="#c6c99c" opacity="0.41"/><polygon points="918.5,858.0 941.9,850.5 940.9,865.8" fill="#c6c99c" opacity="0.31"/><polygon points="947.7,724.5 931.1,728.8 934.7,717.4" fill="#c6c99c" opacity="0.50"/><polygon points="1128.0,791.0 1108.6,793.2 1118.0,783.4" fill="#bfc395" opacity="0.54"/><polygon points="1149.8,796.1 1144.4,789.8 1154.4,786.2 1158.6,792.0" fill="#bfc395" opacity="0.46"/><polygon points="1108.6,774.5 1089.0,776.3 1098.4,767.4" fill="#cdd0a5" opacity="0.44"/><polygon points="1041.6,881.1 1058.9,876.9 1065.8,886.0 1052.6,892.9" fill="#c6c99c" opacity="0.28"/><polygon points="1109.4,742.1 1120.2,735.0 1126.7,744.4" fill="#bfc395" opacity="0.30"/><polygon points="1074.5,763.5 1064.7,754.6 1077.1,756.4" fill="#d3d5ae" opacity="0.55"/><polygon points="1066.6,732.4 1074.3,723.5 1077.6,730.8" fill="#c6c99c" opacity="0.48"/><polygon points="892.4,868.4 868.8,863.1 889.8,856.7" fill="#cdd0a5" opacity="0.55"/><polygon points="791.5,844.1 791.1,837.5 804.5,837.7 803.6,842.2" fill="#cdd0a5" opacity="0.48"/><polygon points="869.0,830.6 875.6,829.6 875.7,834.4" fill="#bfc395" opacity="0.53"/><polygon points="786.6,772.7 772.6,768.7 788.8,761.6" fill="#bfc395" opacity="0.25"/><polygon points="1164.4,731.2 1165.5,726.2 1172.8,730.8" fill="#cdd0a5" opacity="0.46"/><polygon points="1102.9,742.7 1104.8,734.7 1113.8,733.9 1117.6,741.0" fill="#c6c99c" opacity="0.32"/><polygon points="1201.0,729.6 1207.2,721.9 1212.1,730.1" fill="#c6c99c" opacity="0.28"/><polygon points="1169.5,821.0 1173.4,811.7 1184.8,823.1" fill="#d3d5ae" opacity="0.52"/><polygon points="985.8,838.5 968.6,830.2 982.0,827.6" fill="#d3d5ae" opacity="0.49"/><polygon points="1073.5,888.5 1072.8,884.4 1079.9,884.6 1079.8,890.0" fill="#bfc395" opacity="0.44"/><polygon points="955.1,890.9 955.4,881.1 973.2,877.6 982.2,889.4" fill="#d3d5ae" opacity="0.36"/><polygon points="1198.2,883.2 1191.4,885.9 1189.2,878.1 1199.2,878.5" fill="#bfc395" opacity="0.58"/><polygon points="845.0,788.0 838.2,785.0 845.1,782.3" fill="#d3d5ae" opacity="0.42"/><polygon points="975.9,831.8 969.4,828.5 974.3,826.2 980.6,827.9" fill="#bfc395" opacity="0.45"/><polygon points="1056.3,758.2 1049.2,760.3 1048.3,755.3 1051.9,753.2" fill="#c6c99c" opacity="0.55"/><polygon points="918.3,769.5 915.2,759.3 932.1,763.8" fill="#d3d5ae" opacity="0.39"/><polygon points="966.2,847.2 962.5,839.0 979.3,837.2" fill="#bfc395" opacity="0.30"/><polygon points="990.5,783.0 983.6,783.7 985.7,776.9 993.1,780.9" fill="#c6c99c" opacity="0.57"/><polygon points="832.3,842.6 844.4,833.3 849.2,843.6" fill="#bfc395" opacity="0.58"/><polygon points="871.4,843.3 878.9,839.2 882.1,844.3" fill="#bfc395" opacity="0.53"/><polygon points="972.3,769.3 953.5,760.9 972.7,756.3" fill="#d3d5ae" opacity="0.41"/><polygon points="898.0,765.3 892.3,762.4 899.0,760.0" fill="#d3d5ae" opacity="0.26"/><polygon points="1084.7,756.6 1079.7,760.5 1074.9,754.9 1081.3,754.2" fill="#cdd0a5" opacity="0.49"/><polygon points="878.5,804.8 869.4,810.3 861.9,807.6 870.8,800.8" fill="#bfc395" opacity="0.55"/><polygon points="1096.0,731.9 1099.9,723.2 1120.0,727.5 1110.3,740.7" fill="#cdd0a5" opacity="0.54"/><polygon points="815.4,833.4 810.3,823.5 825.0,826.9" fill="#cdd0a5" opacity="0.57"/><polygon points="1080.8,880.6 1085.5,864.9 1103.1,865.5 1102.5,880.4" fill="#d3d5ae" opacity="0.34"/><polygon points="978.4,864.0 977.4,853.6 992.5,858.5" fill="#cdd0a5" opacity="0.45"/><polygon points="935.2,847.7 943.0,837.6 948.9,844.3" fill="#cdd0a5" opacity="0.34"/><polygon points="869.9,767.5 861.9,763.6 863.8,758.1 884.8,761.0" fill="#c6c99c" opacity="0.39"/><polygon points="1188.7,869.1 1163.4,867.0 1173.3,856.7" fill="#cdd0a5" opacity="0.59"/><polygon points="917.3,845.6 926.1,832.9 934.1,844.8" fill="#cdd0a5" opacity="0.36"/><polygon points="748.1,820.9 744.3,815.7 754.0,817.9" fill="#c6c99c" opacity="0.56"/><polygon points="886.4,735.5 882.6,731.5 894.4,729.7" fill="#cdd0a5" opacity="0.44"/><polygon points="1048.3,827.4 1060.1,823.8 1059.5,830.1" fill="#cdd0a5" opacity="0.44"/><polygon points="1063.3,768.1 1058.1,764.1 1067.7,763.8" fill="#cdd0a5" opacity="0.53"/><polygon points="1080.9,790.1 1095.9,781.6 1102.2,794.9" fill="#c6c99c" opacity="0.45"/><polygon points="844.6,790.9 845.2,783.9 857.9,787.3" fill="#d3d5ae" opacity="0.37"/><polygon points="1096.9,762.1 1085.2,756.3 1095.1,750.4 1104.3,755.7" fill="#c6c99c" opacity="0.36"/><polygon points="992.4,889.5 999.1,882.9 1004.8,889.9" fill="#bfc395" opacity="0.39"/><polygon points="1072.2,753.1 1076.6,746.7 1086.9,750.6" fill="#c6c99c" opacity="0.32"/><polygon points="1024.1,882.5 1020.8,874.2 1042.8,868.7 1050.6,878.8" fill="#cdd0a5" opacity="0.38"/><polygon points="999.1,734.6 986.2,718.6 1009.9,720.1" fill="#d3d5ae" opacity="0.51"/><polygon points="892.1,859.6 879.0,849.1 905.3,843.4" fill="#cdd0a5" opacity="0.54"/><polygon points="1134.0,811.3 1111.4,813.4 1117.8,797.9" fill="#cdd0a5" opacity="0.42"/><polygon points="1201.2,762.8 1197.8,759.4 1208.6,758.3" fill="#c6c99c" opacity="0.53"/><polygon points="817.0,784.1 810.4,785.8 811.6,780.4" fill="#bfc395" opacity="0.57"/><polygon points="769.5,896.0 770.2,890.1 779.2,889.1 781.3,896.3" fill="#cdd0a5" opacity="0.49"/><polygon points="829.4,746.4 814.9,738.4 832.2,737.3" fill="#c6c99c" opacity="0.49"/><polygon points="1097.3,785.1 1085.1,781.1 1096.6,778.7" fill="#c6c99c" opacity="0.58"/><polygon points="906.7,848.1 904.1,839.7 911.9,842.0" fill="#bfc395" opacity="0.39"/><polygon points="1106.4,824.8 1091.0,827.6 1095.6,820.7" fill="#cdd0a5" opacity="0.26"/><polygon points="927.2,831.8 907.4,819.2 926.3,818.5" fill="#cdd0a5" opacity="0.28"/><polygon points="903.2,789.6 911.7,776.3 922.6,782.9" fill="#cdd0a5" opacity="0.41"/><polygon points="882.3,834.9 899.2,831.1 897.9,844.7" fill="#c6c99c" opacity="0.60"/><polygon points="1057.2,865.6 1042.5,859.7 1057.4,851.9 1069.7,855.9" fill="#d3d5ae" opacity="0.48"/><polygon points="1214.8,810.4 1192.4,795.3 1210.8,795.1" fill="#c6c99c" opacity="0.52"/><polygon points="792.6,894.4 779.3,898.9 784.5,889.5" fill="#bfc395" opacity="0.41"/><polygon points="1219.0,823.9 1210.6,823.5 1216.3,818.2" fill="#bfc395" opacity="0.47"/><polygon points="1197.6,847.5 1203.5,840.0 1208.4,845.0" fill="#c6c99c" opacity="0.39"/><polygon points="971.0,883.5 972.4,873.7 985.5,881.9" fill="#bfc395" opacity="0.32"/><polygon points="1211.5,817.6 1219.9,814.6 1220.4,820.0" fill="#bfc395" opacity="0.38"/><polygon points="1056.3,779.3 1046.7,778.9 1048.2,775.2 1055.4,775.0" fill="#bfc395" opacity="0.58"/><polygon points="989.7,816.2 974.9,814.3 983.4,804.4 998.5,808.2" fill="#c6c99c" opacity="0.36"/><polygon points="991.6,808.9 966.3,815.1 976.3,802.7" fill="#c6c99c" opacity="0.35"/><polygon points="1059.6,738.5 1063.0,725.8 1084.2,737.1" fill="#bfc395" opacity="0.27"/><polygon points="1032.1,824.0 1029.3,809.8 1053.2,817.2" fill="#d3d5ae" opacity="0.49"/><polygon points="1208.6,881.6 1212.4,876.4 1216.6,882.1" fill="#c6c99c" opacity="0.54"/><polygon points="1195.2,787.5 1192.3,773.9 1207.9,777.5 1210.0,785.6" fill="#c6c99c" opacity="0.30"/><polygon points="854.4,791.0 876.0,781.1 883.3,796.8" fill="#c6c99c" opacity="0.44"/><polygon points="1157.5,855.6 1143.9,858.6 1146.2,850.3" fill="#bfc395" opacity="0.38"/><polygon points="1028.3,811.3 1009.7,808.2 1005.9,796.0 1031.6,800.9" fill="#cdd0a5" opacity="0.50"/><polygon points="937.7,828.0 944.3,820.2 955.9,825.2 946.3,831.6" fill="#d3d5ae" opacity="0.45"/><polygon points="1000.2,776.7 1007.6,774.3 1009.8,779.4" fill="#d3d5ae" opacity="0.29"/><polygon points="1097.9,823.4 1107.0,811.0 1123.4,819.5 1105.7,827.2" fill="#d3d5ae" opacity="0.26"/><polygon points="1002.4,764.8 990.5,766.2 1001.3,759.9" fill="#bfc395" opacity="0.31"/><polygon points="1154.3,877.0 1141.8,867.2 1154.9,863.7 1165.2,869.9" fill="#cdd0a5" opacity="0.42"/><polygon points="1066.5,782.6 1062.8,775.4 1077.6,777.0" fill="#c6c99c" opacity="0.36"/><polygon points="757.0,888.1 730.3,890.1 738.8,877.4" fill="#cdd0a5" opacity="0.59"/><polygon points="1068.6,878.0 1055.4,867.2 1083.6,865.8" fill="#c6c99c" opacity="0.40"/><polygon points="975.0,739.3 965.5,732.0 973.2,727.4 984.8,733.5" fill="#cdd0a5" opacity="0.55"/><polygon points="1184.8,728.7 1181.4,720.9 1192.3,717.6 1194.5,724.1" fill="#d3d5ae" opacity="0.55"/><polygon points="1193.8,724.0 1197.6,718.9 1202.5,720.0 1200.1,724.8" fill="#bfc395" opacity="0.54"/><polygon points="944.2,776.6 931.6,781.1 933.1,772.7" fill="#cdd0a5" opacity="0.58"/><polygon points="938.4,757.3 931.4,752.8 943.3,750.2" fill="#d3d5ae" opacity="0.45"/><polygon points="749.5,776.7 745.3,772.1 748.8,769.2 755.1,772.5" fill="#bfc395" opacity="0.44"/><polygon points="810.5,838.5 802.8,838.3 806.7,833.8" fill="#d3d5ae" opacity="0.45"/><polygon points="1180.6,732.3 1191.3,718.8 1203.2,733.4" fill="#bfc395" opacity="0.59"/><polygon points="1196.2,780.3 1183.5,788.0 1170.6,776.1 1197.6,771.6" fill="#d3d5ae" opacity="0.38"/><polygon points="811.9,770.1 792.4,773.2 795.0,759.2" fill="#bfc395" opacity="0.52"/><polygon points="996.6,889.6 986.6,885.6 992.3,881.1" fill="#c6c99c" opacity="0.35"/><polygon points="1118.4,894.5 1116.2,883.1 1129.6,886.4" fill="#bfc395" opacity="0.44"/><polygon points="870.4,730.2 878.3,720.6 881.1,726.6" fill="#d3d5ae" opacity="0.26"/><polygon points="883.0,728.6 883.4,722.2 893.0,723.3" fill="#bfc395" opacity="0.40"/><polygon points="1016.3,773.6 1011.3,761.5 1021.3,751.9 1032.4,762.1" fill="#d3d5ae" opacity="0.33"/><polygon points="1025.2,750.8 1010.0,747.0 1029.1,737.1" fill="#bfc395" opacity="0.49"/><polygon points="1052.0,791.1 1053.7,783.7 1069.9,786.1 1063.7,793.5" fill="#c6c99c" opacity="0.35"/><polygon points="772.0,823.6 759.2,825.9 764.0,815.9" fill="#bfc395" opacity="0.30"/><polygon points="881.1,839.1 891.8,827.9 902.4,836.5 891.6,842.7" fill="#d3d5ae" opacity="0.53"/><polygon points="828.2,867.0 816.5,863.8 827.3,858.0" fill="#c6c99c" opacity="0.59"/><polygon points="821.5,768.4 807.4,761.6 820.8,761.5" fill="#c6c99c" opacity="0.40"/><polygon points="947.9,790.7 930.1,793.8 930.8,783.7" fill="#cdd0a5" opacity="0.42"/><polygon points="1218.8,761.1 1204.5,762.9 1209.6,751.3" fill="#c6c99c" opacity="0.37"/><polygon points="1178.0,880.7 1182.3,876.3 1194.4,877.0 1187.7,882.4" fill="#c6c99c" opacity="0.42"/><polygon points="1096.2,766.0 1090.4,758.9 1105.0,760.0" fill="#bfc395" opacity="0.33"/><polygon points="1196.6,859.6 1169.9,862.7 1178.8,846.9" fill="#d3d5ae" opacity="0.46"/><polygon points="944.9,721.9 934.8,720.6 942.3,715.7" fill="#d3d5ae" opacity="0.52"/><polygon points="1049.8,847.5 1039.3,842.1 1055.6,840.5" fill="#bfc395" opacity="0.49"/><polygon points="949.8,747.3 939.0,740.5 951.1,736.7 957.1,741.9" fill="#bfc395" opacity="0.39"/><polygon points="914.1,856.3 916.0,843.5 938.9,846.7" fill="#c6c99c" opacity="0.37"/><polygon points="748.2,874.9 736.6,865.4 755.0,859.4 761.7,866.8" fill="#bfc395" opacity="0.40"/><polygon points="837.0,729.7 836.9,714.7 857.6,719.7" fill="#bfc395" opacity="0.56"/><polygon points="772.6,762.5 768.6,756.8 776.9,753.0 784.6,760.2" fill="#d3d5ae" opacity="0.45"/><polygon points="928.8,870.7 917.3,865.2 933.5,861.2" fill="#c6c99c" opacity="0.42"/><polygon points="774.0,758.4 763.7,762.9 752.4,756.0 765.9,750.8" fill="#c6c99c" opacity="0.30"/><polygon points="1104.2,775.2 1121.7,770.6 1119.4,783.8" fill="#bfc395" opacity="0.48"/><polygon points="887.4,861.2 874.7,865.3 871.2,860.3 881.2,857.1" fill="#c6c99c" opacity="0.36"/><polygon points="1080.3,846.8 1059.2,838.9 1078.8,834.0" fill="#d3d5ae" opacity="0.47"/><polygon points="1145.1,826.7 1138.9,828.9 1135.4,823.1" fill="#d3d5ae" opacity="0.55"/><polygon points="844.5,850.4 827.7,845.8 848.2,838.1" fill="#d3d5ae" opacity="0.33"/><polygon points="839.1,827.1 847.7,824.6 850.8,831.6" fill="#bfc395" opacity="0.37"/><polygon points="1070.5,758.6 1080.8,747.1 1088.4,764.0" fill="#c6c99c" opacity="0.28"/><polygon points="761.6,787.0 746.8,776.1 772.0,777.1" fill="#cdd0a5" opacity="0.49"/><polygon points="894.8,803.9 891.5,797.2 899.9,797.9" fill="#bfc395" opacity="0.46"/><polygon points="873.5,745.8 853.2,735.9 870.7,730.3 879.6,738.5" fill="#bfc395" opacity="0.38"/><polygon points="858.7,797.6 872.2,790.1 875.3,800.5" fill="#cdd0a5" opacity="0.38"/><polygon points="1189.1,820.9 1173.3,817.2 1191.0,811.4" fill="#cdd0a5" opacity="0.28"/><polygon points="861.3,895.0 846.8,886.3 865.2,887.8" fill="#cdd0a5" opacity="0.53"/><polygon points="1073.8,850.7 1084.5,844.5 1091.4,855.0" fill="#cdd0a5" opacity="0.49"/><polygon points="845.9,803.7 836.9,802.8 842.2,790.5 850.7,793.5" fill="#cdd0a5" opacity="0.59"/><polygon points="1015.2,738.9 1000.1,741.9 1001.1,729.1 1018.4,731.2" fill="#bfc395" opacity="0.48"/><polygon points="1201.5,866.3 1213.1,854.6 1224.4,862.7" fill="#d3d5ae" opacity="0.39"/><polygon points="1065.1,790.9 1049.0,796.3 1041.9,792.3 1050.2,783.0" fill="#c6c99c" opacity="0.59"/><polygon points="1059.2,833.9 1059.6,825.3 1067.8,829.0" fill="#d3d5ae" opacity="0.59"/><polygon points="918.0,780.3 911.2,775.1 919.9,773.4 925.4,776.6" fill="#c6c99c" opacity="0.44"/><polygon points="1207.9,745.5 1191.4,741.8 1199.3,734.7" fill="#cdd0a5" opacity="0.35"/><polygon points="1034.6,879.7 1033.0,872.1 1040.0,877.5" fill="#c6c99c" opacity="0.33"/><polygon points="833.4,797.6 824.3,802.7 817.0,798.0 828.3,792.6" fill="#bfc395" opacity="0.36"/><polygon points="1200.9,722.1 1217.1,715.1 1217.5,728.5" fill="#bfc395" opacity="0.53"/><polygon points="1161.6,884.6 1160.6,877.6 1170.5,882.2" fill="#cdd0a5" opacity="0.47"/><polygon points="1152.0,783.7 1148.9,775.8 1164.4,778.6" fill="#d3d5ae" opacity="0.60"/><polygon points="1152.0,836.8 1128.4,837.6 1141.0,824.9" fill="#cdd0a5" opacity="0.36"/><polygon points="1024.6,755.0 1032.9,747.5 1035.9,755.4" fill="#d3d5ae" opacity="0.51"/><polygon points="786.5,844.7 785.2,835.2 805.5,837.8" fill="#bfc395" opacity="0.55"/><polygon points="1190.3,798.3 1180.7,791.3 1196.5,789.8" fill="#cdd0a5" opacity="0.29"/><polygon points="1018.7,841.0 1023.5,832.5 1031.8,836.3 1034.0,842.8" fill="#d3d5ae" opacity="0.49"/><polygon points="1010.3,871.9 1002.6,875.1 997.7,867.1 1004.4,865.8" fill="#d3d5ae" opacity="0.57"/><polygon points="920.7,839.4 908.0,833.6 915.1,827.3 927.1,832.4" fill="#c6c99c" opacity="0.40"/><polygon points="1159.1,804.2 1135.5,807.6 1154.7,793.9" fill="#d3d5ae" opacity="0.28"/><polygon points="1025.2,792.9 1031.1,788.2 1037.1,793.2 1033.2,795.6" fill="#cdd0a5" opacity="0.41"/><polygon points="1019.2,736.6 1009.1,737.9 1004.3,735.0 1015.4,732.4" fill="#cdd0a5" opacity="0.29"/><polygon points="1170.9,850.8 1153.0,854.4 1159.7,843.1" fill="#c6c99c" opacity="0.29"/><polygon points="746.0,833.8 757.4,827.6 765.2,836.4" fill="#c6c99c" opacity="0.40"/><polygon points="822.3,801.4 813.3,802.9 811.6,795.6" fill="#d3d5ae" opacity="0.34"/><polygon points="1001.3,777.2 1004.0,769.6 1009.6,774.8" fill="#c6c99c" opacity="0.33"/><polygon points="858.4,798.8 847.8,786.0 866.4,785.6" fill="#bfc395" opacity="0.39"/><polygon points="1056.2,788.6 1044.3,785.9 1049.4,780.2 1059.3,780.9" fill="#c6c99c" opacity="0.34"/><polygon points="878.0,737.3 898.3,726.5 900.6,742.0" fill="#d3d5ae" opacity="0.52"/><polygon points="969.7,737.6 974.2,731.8 979.4,735.0" fill="#d3d5ae" opacity="0.42"/><polygon points="743.6,795.3 742.5,789.9 747.8,789.2 751.5,795.1" fill="#d3d5ae" opacity="0.47"/><polygon points="1107.9,841.7 1100.3,841.1 1100.8,836.6 1109.6,838.7" fill="#d3d5ae" opacity="0.58"/><polygon points="1098.7,837.3 1099.4,825.8 1114.2,828.7 1110.3,838.1" fill="#bfc395" opacity="0.28"/><polygon points="805.3,727.6 810.5,722.2 813.2,730.0" fill="#c6c99c" opacity="0.55"/><polygon points="1134.2,717.9 1116.5,721.6 1124.8,712.3" fill="#cdd0a5" opacity="0.40"/><polygon points="760.8,734.4 753.9,727.7 765.8,722.4 767.1,728.8" fill="#bfc395" opacity="0.31"/><polygon points="1114.1,867.1 1092.9,863.2 1098.5,852.6" fill="#d3d5ae" opacity="0.28"/><polygon points="885.6,872.7 867.1,866.2 886.7,863.2" fill="#cdd0a5" opacity="0.30"/><polygon points="989.2,824.3 984.0,814.3 1000.9,814.1" fill="#cdd0a5" opacity="0.27"/><polygon points="1078.8,828.6 1062.4,831.1 1071.2,824.0" fill="#cdd0a5" opacity="0.38"/><polygon points="978.3,734.2 957.2,738.3 963.4,723.8" fill="#d3d5ae" opacity="0.59"/><polygon points="1202.0,750.8 1174.5,753.2 1193.1,741.3" fill="#bfc395" opacity="0.55"/><polygon points="988.4,729.5 977.7,726.3 987.0,722.8" fill="#d3d5ae" opacity="0.40"/><polygon points="985.8,858.7 975.0,856.3 983.0,851.3" fill="#bfc395" opacity="0.53"/><polygon points="782.9,830.0 783.7,826.2 788.2,829.7" fill="#bfc395" opacity="0.44"/><polygon points="811.3,794.6 815.3,787.0 828.2,790.3 820.0,798.3" fill="#d3d5ae" opacity="0.41"/><polygon points="984.6,822.7 995.9,814.1 1003.4,825.1" fill="#cdd0a5" opacity="0.38"/><polygon points="1206.2,748.1 1186.0,749.2 1192.6,739.3" fill="#bfc395" opacity="0.56"/><polygon points="1108.1,768.7 1110.3,764.9 1115.8,764.3 1118.5,768.1" fill="#bfc395" opacity="0.58"/><polygon points="797.6,801.0 796.0,792.7 805.8,795.8" fill="#c6c99c" opacity="0.58"/><polygon points="1178.7,868.6 1167.9,865.3 1176.2,859.9" fill="#cdd0a5" opacity="0.28"/><polygon points="849.9,846.2 835.5,856.9 836.2,840.1" fill="#d3d5ae" opacity="0.59"/><polygon points="1070.4,806.5 1075.8,794.9 1091.8,798.8 1096.4,807.5" fill="#cdd0a5" opacity="0.33"/><polygon points="1187.1,888.3 1189.2,879.6 1217.3,883.8 1208.3,890.1" fill="#bfc395" opacity="0.27"/><polygon points="1029.2,844.9 1011.9,841.4 1026.9,831.1" fill="#bfc395" opacity="0.41"/><polygon points="840.3,807.2 831.1,790.5 850.2,792.1" fill="#cdd0a5" opacity="0.49"/><polygon points="746.5,875.9 743.5,867.1 761.7,868.0 755.3,874.8" fill="#bfc395" opacity="0.46"/><polygon points="1114.7,886.3 1133.2,882.7 1131.1,894.7" fill="#c6c99c" opacity="0.25"/><polygon points="1129.4,838.9 1126.0,820.6 1147.9,826.7" fill="#d3d5ae" opacity="0.57"/><polygon points="777.9,820.3 764.5,821.0 766.9,814.7" fill="#c6c99c" opacity="0.37"/><polygon points="1216.1,756.5 1200.4,753.6 1213.9,746.7" fill="#d3d5ae" opacity="0.27"/><polygon points="898.7,770.3 898.8,763.7 914.7,763.5 921.0,773.2" fill="#cdd0a5" opacity="0.54"/><polygon points="794.8,800.2 784.8,792.8 795.5,789.5" fill="#d3d5ae" opacity="0.28"/><polygon points="810.7,799.0 820.8,793.7 828.2,797.5 824.4,802.0" fill="#c6c99c" opacity="0.43"/><polygon points="1071.7,766.8 1064.6,751.3 1078.2,756.1" fill="#d3d5ae" opacity="0.26"/><polygon points="1003.1,882.5 985.4,889.2 981.1,881.3 1000.8,874.7" fill="#d3d5ae" opacity="0.37"/><polygon points="1118.8,784.0 1107.5,785.4 1106.9,780.9" fill="#d3d5ae" opacity="0.47"/><polygon points="1201.7,773.2 1192.3,771.6 1200.5,765.0" fill="#d3d5ae" opacity="0.54"/><polygon points="995.7,739.8 989.9,735.7 998.9,733.2 999.5,736.5" fill="#bfc395" opacity="0.57"/><polygon points="1186.4,815.8 1176.8,814.8 1185.1,811.7" fill="#d3d5ae" opacity="0.27"/><polygon points="1201.8,764.1 1180.6,764.0 1195.0,750.4" fill="#cdd0a5" opacity="0.45"/><polygon points="1138.3,772.9 1127.6,763.5 1139.4,759.3" fill="#d3d5ae" opacity="0.33"/><polygon points="1206.7,812.6 1212.8,801.9 1223.7,804.8 1220.4,812.6" fill="#cdd0a5" opacity="0.60"/><polygon points="847.2,804.8 853.9,797.2 863.0,802.1" fill="#cdd0a5" opacity="0.45"/><polygon points="950.4,795.0 949.2,782.5 968.5,790.0" fill="#cdd0a5" opacity="0.36"/><polygon points="839.8,801.9 826.9,792.4 846.8,793.3" fill="#d3d5ae" opacity="0.36"/><polygon points="1005.7,901.5 991.9,893.9 1003.3,885.0 1018.5,897.3" fill="#bfc395" opacity="0.41"/><polygon points="945.3,735.4 946.0,723.1 964.8,725.2" fill="#c6c99c" opacity="0.30"/><polygon points="1130.2,835.5 1125.1,818.5 1150.0,823.5" fill="#c6c99c" opacity="0.32"/><polygon points="947.0,874.5 933.9,860.7 960.3,865.5" fill="#cdd0a5" opacity="0.26"/><polygon points="764.8,863.5 746.5,865.7 758.3,853.0" fill="#d3d5ae" opacity="0.34"/><polygon points="848.7,854.8 827.7,854.5 826.9,844.7 837.7,844.4" fill="#cdd0a5" opacity="0.33"/><polygon points="784.0,859.6 784.0,852.1 792.4,856.8" fill="#cdd0a5" opacity="0.47"/><polygon points="1014.9,779.3 1010.1,772.3 1026.3,774.6" fill="#c6c99c" opacity="0.40"/><polygon points="1146.6,819.6 1137.5,811.4 1148.0,808.5 1153.4,815.6" fill="#d3d5ae" opacity="0.26"/><polygon points="923.5,884.2 928.0,877.6 936.5,880.5 931.2,886.6" fill="#bfc395" opacity="0.41"/><polygon points="804.8,814.0 801.7,802.2 818.3,804.8" fill="#d3d5ae" opacity="0.36"/><polygon points="1097.4,814.8 1092.3,798.3 1118.0,803.2" fill="#c6c99c" opacity="0.29"/><polygon points="897.8,858.4 877.7,851.7 893.6,841.3" fill="#d3d5ae" opacity="0.28"/><polygon points="1055.8,842.0 1067.9,838.4 1069.7,844.9" fill="#cdd0a5" opacity="0.31"/><polygon points="984.0,895.5 989.8,892.1 993.2,897.9" fill="#d3d5ae" opacity="0.38"/><polygon points="867.2,860.0 876.3,851.7 888.6,859.5 879.2,863.6" fill="#c6c99c" opacity="0.57"/><polygon points="856.2,784.5 846.8,776.9 861.9,775.6" fill="#cdd0a5" opacity="0.33"/><polygon points="1211.9,819.4 1200.9,816.7 1204.3,811.1 1215.8,813.0" fill="#bfc395" opacity="0.45"/><polygon points="982.5,817.2 986.4,809.2 1003.8,816.1 988.4,822.4" fill="#bfc395" opacity="0.29"/><polygon points="958.1,892.8 960.6,882.9 969.3,890.1" fill="#c6c99c" opacity="0.49"/><polygon points="862.3,785.4 846.6,788.5 851.7,778.1" fill="#c6c99c" opacity="0.46"/><polygon points="774.5,779.1 756.5,780.2 762.6,769.8" fill="#bfc395" opacity="0.32"/><polygon points="1033.1,764.2 1042.7,753.1 1044.8,770.0" fill="#d3d5ae" opacity="0.30"/><polygon points="1071.2,901.3 1055.4,895.6 1059.2,887.2 1073.8,894.6" fill="#cdd0a5" opacity="0.31"/><polygon points="1007.5,776.6 995.6,768.2 1006.4,762.0 1027.1,767.3" fill="#bfc395" opacity="0.36"/><polygon points="985.5,783.2 992.7,775.9 1001.9,783.7" fill="#c6c99c" opacity="0.34"/><polygon points="1028.4,799.4 1017.6,792.6 1035.7,786.9" fill="#bfc395" opacity="0.28"/><polygon points="911.8,825.8 899.1,817.7 922.9,813.3" fill="#bfc395" opacity="0.48"/><polygon points="764.5,856.0 757.4,856.7 758.0,851.2 763.6,851.5" fill="#cdd0a5" opacity="0.35"/><polygon points="1114.1,810.0 1111.5,801.9 1126.2,800.1 1126.4,809.7" fill="#cdd0a5" opacity="0.45"/><polygon points="782.1,772.3 766.6,773.1 774.8,760.4" fill="#d3d5ae" opacity="0.41"/><polygon points="970.7,730.6 988.2,721.9 990.7,733.8" fill="#d3d5ae" opacity="0.36"/><polygon points="1139.5,799.6 1130.2,787.7 1145.2,790.9" fill="#c6c99c" opacity="0.53"/><polygon points="888.6,722.2 864.3,727.9 875.0,710.9" fill="#c6c99c" opacity="0.51"/><polygon points="841.7,784.7 846.2,769.1 860.6,777.9" fill="#bfc395" opacity="0.58"/><polygon points="1093.5,822.6 1075.0,820.0 1087.4,807.6" fill="#d3d5ae" opacity="0.41"/><polygon points="829.5,857.2 834.0,849.2 848.0,850.3 840.9,858.1" fill="#bfc395" opacity="0.26"/><polygon points="985.1,850.4 990.3,841.5 1002.0,847.9 996.5,853.0" fill="#bfc395" opacity="0.31"/><polygon points="1094.8,749.3 1081.8,746.3 1096.0,740.0" fill="#d3d5ae" opacity="0.50"/><polygon points="931.3,896.5 939.0,882.7 957.2,888.8" fill="#d3d5ae" opacity="0.39"/><polygon points="903.3,894.0 912.4,885.0 919.3,892.0" fill="#cdd0a5" opacity="0.39"/><polygon points="1202.9,800.4 1190.6,797.7 1202.7,795.2" fill="#d3d5ae" opacity="0.47"/><polygon points="1108.4,867.8 1109.0,859.0 1121.3,860.3 1123.5,868.4" fill="#cdd0a5" opacity="0.49"/><polygon points="1178.0,810.6 1177.8,798.2 1189.3,803.5" fill="#c6c99c" opacity="0.39"/><polygon points="1134.4,741.9 1132.4,733.0 1143.1,734.9" fill="#d3d5ae" opacity="0.46"/><polygon points="970.3,753.0 956.2,749.4 966.7,742.6 978.1,746.1" fill="#d3d5ae" opacity="0.37"/><polygon points="969.1,791.6 951.7,781.2 968.4,776.3" fill="#bfc395" opacity="0.28"/><polygon points="1164.0,801.7 1169.9,792.1 1180.3,800.9" fill="#bfc395" opacity="0.59"/><polygon points="1109.8,782.2 1102.9,775.6 1109.4,771.4 1120.5,777.1" fill="#c6c99c" opacity="0.43"/><polygon points="1062.5,732.0 1064.3,724.7 1085.3,728.8 1075.2,740.9" fill="#bfc395" opacity="0.48"/><polygon points="827.8,890.4 819.5,883.8 833.2,883.4" fill="#c6c99c" opacity="0.48"/><polygon points="860.9,891.9 852.2,882.9 865.1,883.6" fill="#c6c99c" opacity="0.51"/><polygon points="1038.6,743.6 1025.9,745.4 1021.6,735.0 1030.2,731.8" fill="#cdd0a5" opacity="0.34"/><polygon points="1103.8,872.3 1106.5,866.5 1113.2,873.5" fill="#cdd0a5" opacity="0.38"/><polygon points="845.2,800.4 843.0,794.3 853.3,793.6" fill="#bfc395" opacity="0.43"/><polygon points="1203.1,806.2 1200.6,794.7 1216.8,800.8" fill="#c6c99c" opacity="0.35"/><polygon points="953.4,882.1 961.6,875.6 970.8,879.9 965.8,890.0" fill="#c6c99c" opacity="0.36"/><polygon points="752.0,861.2 762.2,850.5 775.4,863.4" fill="#d3d5ae" opacity="0.41"/><polygon points="757.3,728.0 756.8,721.7 764.6,716.2 772.5,725.2" fill="#bfc395" opacity="0.45"/><polygon points="1068.6,774.9 1056.4,771.1 1056.6,761.2 1071.4,763.9" fill="#d3d5ae" opacity="0.38"/><polygon points="874.0,832.0 862.0,830.0 869.8,825.3" fill="#d3d5ae" opacity="0.36"/><polygon points="772.4,743.2 754.5,738.1 775.8,729.6" fill="#d3d5ae" opacity="0.42"/><polygon points="1056.6,730.8 1038.1,724.9 1040.4,715.7 1062.5,720.1" fill="#d3d5ae" opacity="0.52"/><polygon points="980.1,863.4 975.3,852.7 995.0,855.5" fill="#bfc395" opacity="0.52"/><polygon points="805.6,741.0 791.1,745.6 784.4,728.8 801.5,728.2" fill="#c6c99c" opacity="0.28"/><polygon points="1042.3,732.6 1033.7,726.7 1046.4,722.8" fill="#cdd0a5" opacity="0.42"/><polygon points="1113.6,794.1 1098.3,789.5 1106.2,777.5 1124.8,785.3" fill="#c6c99c" opacity="0.47"/><polygon points="820.1,826.9 827.6,819.9 832.6,828.4" fill="#cdd0a5" opacity="0.55"/><polygon points="1130.5,873.0 1120.7,873.3 1122.7,866.1 1131.1,866.8" fill="#bfc395" opacity="0.28"/><polygon points="1154.9,887.9 1160.0,884.7 1168.3,888.3 1161.3,890.3" fill="#bfc395" opacity="0.36"/><polygon points="1084.1,801.4 1096.0,798.0 1093.9,804.4" fill="#cdd0a5" opacity="0.53"/><polygon points="945.0,773.8 940.5,767.6 950.4,768.3" fill="#bfc395" opacity="0.44"/><polygon points="1193.1,774.8 1186.8,769.3 1197.5,767.6" fill="#bfc395" opacity="0.49"/><polygon points="954.4,738.1 971.1,733.5 970.0,743.0" fill="#bfc395" opacity="0.34"/><polygon points="1138.1,806.3 1154.1,792.0 1159.8,810.1" fill="#cdd0a5" opacity="0.50"/><polygon points="1036.3,877.2 1011.7,880.0 1015.1,866.1" fill="#cdd0a5" opacity="0.59"/><polygon points="774.7,828.4 787.3,822.7 797.8,828.9 787.0,834.0" fill="#bfc395" opacity="0.49"/><polygon points="1121.1,742.4 1132.6,732.8 1136.6,745.4" fill="#d3d5ae" opacity="0.30"/><polygon points="1166.2,812.4 1173.0,803.4 1186.4,809.3" fill="#cdd0a5" opacity="0.28"/><polygon points="905.6,840.6 889.8,845.0 890.3,829.2" fill="#cdd0a5" opacity="0.43"/><polygon points="1066.5,751.9 1075.7,745.9 1083.5,755.0" fill="#d3d5ae" opacity="0.48"/><polygon points="947.8,821.4 937.0,820.3 942.6,817.2" fill="#c6c99c" opacity="0.27"/><polygon points="1165.2,813.8 1170.1,804.5 1178.5,813.1" fill="#cdd0a5" opacity="0.37"/><polygon points="978.0,835.3 960.3,834.6 969.8,825.0" fill="#d3d5ae" opacity="0.29"/><polygon points="756.9,726.6 743.3,723.6 760.7,718.7" fill="#cdd0a5" opacity="0.26"/><polygon points="749.2,819.0 736.9,821.3 740.8,813.9" fill="#cdd0a5" opacity="0.25"/><polygon points="1013.5,794.0 1010.1,789.1 1019.7,791.6" fill="#d3d5ae" opacity="0.27"/><polygon points="1200.5,828.2 1192.0,812.9 1211.8,819.7" fill="#c6c99c" opacity="0.46"/><polygon points="747.5,761.8 754.5,745.3 769.8,747.6 764.4,759.9" fill="#c6c99c" opacity="0.39"/><polygon points="1152.1,754.2 1141.5,748.3 1153.3,746.1" fill="#d3d5ae" opacity="0.52"/><polygon points="1149.7,878.1 1156.2,869.8 1168.3,874.7 1160.2,882.1" fill="#c6c99c" opacity="0.53"/><polygon points="866.0,900.5 862.9,889.8 875.2,894.0" fill="#bfc395" opacity="0.49"/><polygon points="913.8,785.6 914.2,780.7 922.4,780.5 920.2,787.2" fill="#c6c99c" opacity="0.29"/><polygon points="952.0,791.1 939.2,786.0 955.9,777.4" fill="#cdd0a5" opacity="0.55"/><polygon points="1222.1,847.3 1200.0,850.2 1200.3,839.9" fill="#c6c99c" opacity="0.44"/><polygon points="903.7,890.6 888.7,884.4 906.5,881.1" fill="#d3d5ae" opacity="0.57"/><polygon points="777.9,764.4 751.2,759.4 769.1,753.7" fill="#d3d5ae" opacity="0.49"/><polygon points="865.5,850.5 851.6,847.4 860.8,838.5" fill="#d3d5ae" opacity="0.54"/><polygon points="1017.9,896.3 1003.1,901.9 991.3,887.5 1009.5,886.5" fill="#bfc395" opacity="0.58"/><polygon points="1056.2,829.2 1040.9,831.3 1043.9,824.4" fill="#c6c99c" opacity="0.32"/><polygon points="792.2,790.6 776.3,782.5 789.1,774.4 797.2,783.6" fill="#d3d5ae" opacity="0.26"/><polygon points="986.5,892.1 983.2,883.1 1000.9,881.3 995.5,890.6" fill="#bfc395" opacity="0.29"/><polygon points="977.0,901.3 968.8,891.7 993.9,886.5 990.9,895.7" fill="#bfc395" opacity="0.28"/><polygon points="999.4,725.4 994.8,726.8 994.0,722.7 1002.2,720.7" fill="#d3d5ae" opacity="0.28"/><polygon points="1004.1,778.7 1004.4,774.6 1013.4,774.9 1013.4,777.5" fill="#d3d5ae" opacity="0.42"/><polygon points="1185.6,854.5 1184.9,849.5 1195.8,850.9" fill="#cdd0a5" opacity="0.33"/><polygon points="1042.0,859.3 1059.3,851.1 1061.8,862.1" fill="#bfc395" opacity="0.51"/><polygon points="1127.0,813.3 1135.9,801.7 1146.0,813.0" fill="#d3d5ae" opacity="0.31"/><polygon points="824.8,838.0 808.2,839.6 814.4,828.0" fill="#c6c99c" opacity="0.41"/><polygon points="950.9,765.3 929.2,766.8 935.5,752.3 948.5,755.7" fill="#c6c99c" opacity="0.45"/><polygon points="972.5,867.3 963.8,861.4 974.8,858.4" fill="#c6c99c" opacity="0.55"/><polygon points="850.2,851.5 849.7,844.7 859.9,845.3 863.4,853.7" fill="#bfc395" opacity="0.54"/><polygon points="1070.4,755.2 1059.2,753.3 1067.1,748.7" fill="#cdd0a5" opacity="0.55"/><polygon points="831.3,818.2 844.2,809.2 850.6,818.1" fill="#cdd0a5" opacity="0.55"/><polygon points="991.3,739.7 976.6,744.0 977.4,736.5" fill="#bfc395" opacity="0.54"/><polygon points="1190.9,807.2 1181.0,810.9 1181.9,801.6" fill="#d3d5ae" opacity="0.43"/><polygon points="797.4,849.3 788.0,848.7 792.5,843.9 800.7,845.7" fill="#cdd0a5" opacity="0.48"/><polygon points="1026.6,890.2 1012.1,886.4 1019.3,879.7 1029.6,883.4" fill="#bfc395" opacity="0.46"/><polygon points="986.5,774.7 979.8,767.2 990.2,767.2" fill="#cdd0a5" opacity="0.52"/><polygon points="1160.2,811.0 1141.4,807.1 1159.7,800.6" fill="#bfc395" opacity="0.27"/><polygon points="1106.1,738.4 1107.8,730.6 1122.1,735.2" fill="#d3d5ae" opacity="0.47"/><polygon points="1053.4,855.9 1044.4,853.3 1050.0,846.9 1059.8,851.6" fill="#bfc395" opacity="0.37"/><polygon points="827.5,831.7 817.9,823.1 827.8,819.5 834.5,825.4" fill="#bfc395" opacity="0.28"/><polygon points="948.0,839.0 959.5,835.3 963.2,842.3" fill="#d3d5ae" opacity="0.31"/><polygon points="976.6,868.9 953.9,867.4 964.7,856.3" fill="#d3d5ae" opacity="0.33"/><polygon points="1128.9,831.2 1136.6,824.5 1151.1,833.9" fill="#bfc395" opacity="0.32"/><polygon points="748.5,876.7 741.3,872.7 748.6,869.5" fill="#c6c99c" opacity="0.38"/><polygon points="1135.0,883.1 1133.3,877.5 1139.5,876.5 1143.7,881.6" fill="#c6c99c" opacity="0.58"/><polygon points="752.8,770.2 742.6,763.6 763.5,763.1" fill="#d3d5ae" opacity="0.52"/><polygon points="948.3,847.9 931.2,849.1 933.3,838.2" fill="#d3d5ae" opacity="0.58"/><polygon points="1176.2,794.9 1177.7,790.4 1185.5,793.4" fill="#c6c99c" opacity="0.52"/><polygon points="1208.4,768.8 1205.2,761.8 1216.9,761.0" fill="#cdd0a5" opacity="0.36"/><polygon points="745.3,741.3 744.1,735.0 755.4,734.3 754.8,739.6" fill="#bfc395" opacity="0.49"/><polygon points="1007.0,755.8 1022.7,748.2 1020.0,759.7" fill="#c6c99c" opacity="0.56"/><polygon points="761.0,725.3 764.6,714.8 782.7,718.5 773.7,729.4" fill="#d3d5ae" opacity="0.52"/><polygon points="978.3,771.1 985.7,768.3 989.9,771.0 986.0,777.2" fill="#cdd0a5" opacity="0.34"/><polygon points="1167.6,821.0 1156.5,813.4 1172.0,809.9" fill="#d3d5ae" opacity="0.52"/><polygon points="866.7,844.4 855.3,841.7 859.1,829.8 880.1,832.6" fill="#c6c99c" opacity="0.33"/><polygon points="1125.4,752.7 1128.7,746.8 1134.5,751.1" fill="#c6c99c" opacity="0.45"/><polygon points="1147.3,807.7 1164.4,793.6 1169.3,810.7" fill="#bfc395" opacity="0.43"/><polygon points="1066.5,762.8 1054.3,770.5 1046.2,763.1 1053.3,758.2" fill="#bfc395" opacity="0.56"/><polygon points="1117.1,748.3 1115.3,741.6 1126.2,740.6 1126.6,749.1" fill="#c6c99c" opacity="0.50"/><polygon points="738.4,887.0 735.2,880.3 747.4,882.6" fill="#d3d5ae" opacity="0.39"/><polygon points="805.7,837.9 812.0,828.2 822.0,833.2" fill="#cdd0a5" opacity="0.57"/><polygon points="899.4,826.1 901.9,823.2 908.4,825.8 907.1,830.1" fill="#bfc395" opacity="0.51"/><polygon points="1101.9,795.5 1085.8,791.2 1085.6,783.6 1102.9,786.0" fill="#bfc395" opacity="0.59"/><polygon points="765.3,838.7 753.9,834.5 764.4,826.5 779.3,827.8" fill="#c6c99c" opacity="0.34"/><polygon points="1115.1,785.2 1101.7,780.7 1113.5,774.2" fill="#d3d5ae" opacity="0.40"/><polygon points="846.8,865.1 840.5,860.8 845.3,856.5 853.8,861.7" fill="#cdd0a5" opacity="0.43"/><polygon points="1110.8,807.3 1105.9,802.9 1111.6,800.6 1116.4,803.6" fill="#d3d5ae" opacity="0.50"/><polygon points="1180.3,853.7 1169.2,862.1 1151.7,857.3 1175.7,844.5" fill="#cdd0a5" opacity="0.43"/><polygon points="807.4,834.2 788.0,831.6 797.9,825.9" fill="#bfc395" opacity="0.55"/><polygon points="928.4,777.2 934.3,772.3 941.9,775.5 940.7,780.6" fill="#d3d5ae" opacity="0.29"/><polygon points="872.9,808.2 857.0,810.2 858.8,801.7" fill="#d3d5ae" opacity="0.47"/><polygon points="1104.0,876.0 1091.4,879.2 1090.1,868.0 1103.5,867.4" fill="#d3d5ae" opacity="0.38"/><polygon points="814.9,835.6 808.2,829.5 818.3,826.8 823.2,833.1" fill="#bfc395" opacity="0.41"/><polygon points="1195.6,781.8 1186.5,770.7 1195.9,768.0 1207.1,777.9" fill="#c6c99c" opacity="0.28"/><polygon points="895.6,779.2 890.2,776.6 897.8,774.0" fill="#bfc395" opacity="0.41"/><polygon points="907.8,807.3 914.1,799.7 921.4,805.1" fill="#d3d5ae" opacity="0.45"/><polygon points="1120.8,881.2 1114.9,880.9 1117.6,877.2" fill="#d3d5ae" opacity="0.50"/><polygon points="1168.4,807.1 1161.6,810.9 1161.3,804.9" fill="#d3d5ae" opacity="0.42"/><polygon points="1127.4,753.1 1111.4,755.1 1110.3,744.1" fill="#cdd0a5" opacity="0.50"/><polygon points="1156.5,892.5 1157.8,885.8 1176.1,883.7 1171.0,898.2" fill="#cdd0a5" opacity="0.35"/><polygon points="1192.0,757.2 1167.6,752.1 1183.3,742.7" fill="#cdd0a5" opacity="0.30"/><polygon points="1065.9,802.8 1077.9,792.9 1082.7,807.2" fill="#c6c99c" opacity="0.46"/><polygon points="956.9,798.8 936.9,805.3 938.0,795.4" fill="#cdd0a5" opacity="0.56"/><polygon points="1093.0,790.0 1100.8,785.2 1103.5,790.9" fill="#cdd0a5" opacity="0.26"/><polygon points="836.8,874.4 828.1,879.3 812.2,872.6 830.8,862.6" fill="#c6c99c" opacity="0.27"/><polygon points="920.7,813.4 921.4,808.8 926.9,807.8 931.3,812.5" fill="#c6c99c" opacity="0.39"/><polygon points="755.2,778.9 761.0,768.3 769.5,775.4" fill="#bfc395" opacity="0.30"/><polygon points="1019.1,827.8 1030.4,821.3 1050.5,827.6 1038.5,837.9" fill="#bfc395" opacity="0.48"/><polygon points="762.4,791.0 749.7,790.0 753.1,786.1 763.4,787.8" fill="#bfc395" opacity="0.49"/><polygon points="793.2,754.5 780.3,747.4 801.9,747.5" fill="#d3d5ae" opacity="0.55"/><polygon points="1154.8,890.7 1142.0,892.8 1138.1,887.0 1150.9,885.7" fill="#c6c99c" opacity="0.38"/><polygon points="958.8,826.0 936.9,823.2 948.2,814.3" fill="#c6c99c" opacity="0.43"/><polygon points="1183.1,796.8 1184.2,790.5 1193.0,793.6" fill="#bfc395" opacity="0.37"/><polygon points="856.6,728.6 839.9,724.2 856.7,717.8" fill="#c6c99c" opacity="0.26"/><polygon points="885.1,867.3 870.0,871.7 873.3,863.2 879.4,861.1" fill="#c6c99c" opacity="0.59"/><polygon points="805.7,835.9 791.7,843.2 787.6,835.3 797.1,831.0" fill="#bfc395" opacity="0.48"/><polygon points="1040.3,896.0 1040.3,883.7 1059.8,893.9" fill="#cdd0a5" opacity="0.41"/><polygon points="845.7,724.8 833.0,719.0 846.4,718.8" fill="#cdd0a5" opacity="0.31"/><polygon points="955.2,810.1 962.9,801.9 966.0,808.6" fill="#cdd0a5" opacity="0.37"/><polygon points="815.6,784.2 803.6,776.0 819.0,774.4" fill="#d3d5ae" opacity="0.57"/><polygon points="1092.8,871.9 1084.2,867.1 1096.2,865.1" fill="#bfc395" opacity="0.56"/><polygon points="857.7,827.7 848.4,825.8 854.3,821.3" fill="#bfc395" opacity="0.34"/><polygon points="879.9,806.4 863.0,797.5 875.2,788.4 894.4,796.4" fill="#d3d5ae" opacity="0.39"/><polygon points="832.0,872.7 821.9,878.2 822.0,868.0" fill="#cdd0a5" opacity="0.30"/><polygon points="1212.9,802.1 1198.6,804.7 1207.1,793.5" fill="#cdd0a5" opacity="0.27"/><polygon points="1188.1,795.8 1176.9,800.5 1169.1,793.5 1182.4,790.6" fill="#c6c99c" opacity="0.60"/><polygon points="819.8,862.9 822.5,856.6 827.0,865.1" fill="#cdd0a5" opacity="0.51"/><polygon points="980.8,775.5 969.1,766.5 981.6,765.5" fill="#cdd0a5" opacity="0.34"/><polygon points="908.8,811.5 903.3,807.0 916.1,804.4" fill="#bfc395" opacity="0.36"/><polygon points="1134.4,809.0 1128.0,810.9 1127.0,806.3 1132.2,803.6" fill="#cdd0a5" opacity="0.58"/><polygon points="1183.6,788.8 1175.9,784.8 1183.2,776.1 1194.2,782.2" fill="#c6c99c" opacity="0.38"/><polygon points="1101.6,788.1 1106.8,780.9 1115.9,783.2 1118.0,789.6" fill="#d3d5ae" opacity="0.36"/><polygon points="894.1,822.6 881.4,819.2 879.3,814.2 895.7,816.2" fill="#c6c99c" opacity="0.25"/><polygon points="1187.7,834.3 1182.4,818.4 1204.3,824.2" fill="#cdd0a5" opacity="0.37"/><polygon points="921.3,831.4 907.0,824.3 911.4,819.2 921.7,821.9" fill="#c6c99c" opacity="0.34"/><polygon points="847.3,866.9 841.4,860.4 851.2,853.1 862.5,863.0" fill="#cdd0a5" opacity="0.36"/><polygon points="748.9,782.3 735.8,783.1 738.0,776.9" fill="#bfc395" opacity="0.39"/><polygon points="1068.7,770.9 1079.7,758.1 1092.0,769.9" fill="#cdd0a5" opacity="0.57"/><polygon points="930.5,834.4 924.7,835.5 923.2,832.2 933.2,831.1" fill="#cdd0a5" opacity="0.38"/><polygon points="756.8,795.4 741.0,796.1 752.5,789.5" fill="#bfc395" opacity="0.40"/><polygon points="1221.4,874.3 1213.3,870.2 1217.0,868.8 1223.8,869.3" fill="#d3d5ae" opacity="0.49"/><polygon points="1061.6,822.1 1048.5,810.7 1071.5,811.1" fill="#bfc395" opacity="0.47"/><polygon points="1026.2,807.5 1020.3,799.2 1036.3,800.0" fill="#c6c99c" opacity="0.54"/><polygon points="1084.3,761.5 1076.0,762.2 1079.1,759.1" fill="#bfc395" opacity="0.38"/><polygon points="969.7,767.6 970.7,762.3 977.2,763.5" fill="#bfc395" opacity="0.59"/><polygon points="1011.6,864.5 1017.1,852.5 1031.7,861.1" fill="#c6c99c" opacity="0.42"/><polygon points="891.4,855.7 882.0,858.8 876.9,853.3 884.4,848.1" fill="#c6c99c" opacity="0.33"/><polygon points="1009.0,839.1 1013.1,831.1 1019.5,838.4" fill="#bfc395" opacity="0.43"/><polygon points="969.1,770.6 943.6,776.1 950.9,756.3" fill="#c6c99c" opacity="0.44"/><polygon points="865.9,769.5 867.3,762.2 879.0,767.8" fill="#cdd0a5" opacity="0.49"/><polygon points="775.1,767.4 769.0,767.2 767.8,764.3 775.2,763.7" fill="#bfc395" opacity="0.44"/><polygon points="1081.7,768.0 1090.1,757.2 1100.1,769.1" fill="#c6c99c" opacity="0.43"/><polygon points="1187.7,791.6 1200.6,785.0 1200.3,793.8" fill="#c6c99c" opacity="0.32"/><polygon points="886.6,765.8 866.6,769.2 864.5,753.7" fill="#c6c99c" opacity="0.35"/><polygon points="1006.2,781.6 1017.4,774.7 1033.4,777.9 1030.4,786.5" fill="#c6c99c" opacity="0.56"/><polygon points="792.3,750.8 773.2,748.8 788.2,738.8" fill="#c6c99c" opacity="0.37"/><polygon points="845.9,757.5 855.8,742.5 865.3,751.2" fill="#bfc395" opacity="0.56"/><polygon points="1200.8,834.0 1207.9,829.9 1212.0,835.1" fill="#bfc395" opacity="0.57"/><polygon points="1111.8,771.2 1108.4,764.8 1118.9,763.1 1119.8,769.9" fill="#bfc395" opacity="0.30"/><polygon points="1030.8,815.0 1015.5,817.3 1007.2,813.2 1025.8,804.0" fill="#d3d5ae" opacity="0.51"/><polygon points="968.3,834.7 971.9,818.4 996.0,825.5 991.2,833.3" fill="#bfc395" opacity="0.52"/><polygon points="1094.4,742.2 1105.7,737.7 1110.7,747.0" fill="#d3d5ae" opacity="0.47"/><polygon points="1069.6,821.9 1066.6,815.6 1079.7,815.1" fill="#c6c99c" opacity="0.38"/><polygon points="1064.5,870.1 1057.4,863.8 1068.9,864.2" fill="#bfc395" opacity="0.45"/><polygon points="1138.6,767.1 1135.4,755.2 1150.3,755.3 1156.2,765.4" fill="#bfc395" opacity="0.56"/><polygon points="1146.7,754.7 1129.0,759.7 1128.7,742.6" fill="#d3d5ae" opacity="0.51"/><polygon points="760.5,826.6 749.5,828.3 752.9,821.0 761.4,820.4" fill="#d3d5ae" opacity="0.28"/><polygon points="1199.5,763.0 1182.9,765.7 1183.6,758.7" fill="#bfc395" opacity="0.28"/><polygon points="1165.2,853.1 1176.0,846.1 1181.0,852.7" fill="#bfc395" opacity="0.26"/><polygon points="792.1,863.1 786.5,858.5 795.4,852.8 805.8,855.2" fill="#d3d5ae" opacity="0.47"/><polygon points="1118.6,786.7 1117.8,778.7 1131.9,780.1 1136.1,787.8" fill="#cdd0a5" opacity="0.26"/><polygon points="820.9,818.2 820.6,809.7 833.6,805.4 836.8,817.8" fill="#bfc395" opacity="0.33"/><polygon points="763.4,826.2 759.3,820.5 769.8,818.8 771.4,824.2" fill="#d3d5ae" opacity="0.54"/><polygon points="854.9,878.8 845.4,873.2 854.1,867.2 867.8,873.2" fill="#cdd0a5" opacity="0.26"/><polygon points="1021.0,895.2 1008.5,903.9 998.3,897.3 1015.5,889.1" fill="#d3d5ae" opacity="0.56"/><polygon points="844.9,786.7 846.6,782.2 850.4,784.7" fill="#d3d5ae" opacity="0.50"/><polygon points="1209.3,836.1 1210.2,823.6 1228.8,831.1" fill="#cdd0a5" opacity="0.45"/><polygon points="811.1,740.9 800.5,735.7 814.2,727.1 820.1,733.3" fill="#bfc395" opacity="0.28"/><polygon points="1143.8,760.4 1131.3,763.5 1136.9,757.3" fill="#d3d5ae" opacity="0.26"/><polygon points="1111.2,864.2 1109.4,850.9 1124.2,855.3" fill="#cdd0a5" opacity="0.56"/><polygon points="1218.8,879.6 1209.9,875.8 1212.3,870.9 1221.7,872.7" fill="#c6c99c" opacity="0.59"/><polygon points="755.7,830.4 729.2,821.0 746.9,812.6" fill="#cdd0a5" opacity="0.44"/><polygon points="954.1,783.4 947.1,769.8 965.7,775.5" fill="#cdd0a5" opacity="0.49"/><polygon points="996.9,818.5 997.9,809.6 1006.8,814.8" fill="#d3d5ae" opacity="0.47"/><polygon points="891.7,856.3 879.6,859.7 886.3,849.7" fill="#d3d5ae" opacity="0.40"/><polygon points="818.1,725.4 825.5,720.8 835.4,729.4" fill="#d3d5ae" opacity="0.31"/><polygon points="867.0,864.7 871.3,858.1 878.4,864.4" fill="#bfc395" opacity="0.42"/><polygon points="902.0,740.0 908.9,733.2 914.9,743.0" fill="#d3d5ae" opacity="0.56"/><polygon points="750.7,874.9 739.0,869.9 759.7,865.1" fill="#bfc395" opacity="0.44"/><polygon points="997.6,750.5 985.3,739.8 1007.1,740.7" fill="#cdd0a5" opacity="0.39"/><polygon points="1055.9,853.7 1041.2,854.5 1045.5,839.9 1057.3,842.7" fill="#d3d5ae" opacity="0.31"/><polygon points="914.6,890.4 902.2,890.6 904.6,884.8 911.8,882.8" fill="#d3d5ae" opacity="0.52"/><polygon points="1041.2,770.0 1047.9,766.6 1052.0,771.0" fill="#c6c99c" opacity="0.58"/><polygon points="1046.4,781.0 1036.5,776.8 1048.8,772.8" fill="#c6c99c" opacity="0.35"/><polygon points="803.6,792.1 800.5,779.2 820.5,785.6" fill="#cdd0a5" opacity="0.31"/><polygon points="739.6,868.0 739.0,862.1 742.8,861.5 745.9,866.7" fill="#cdd0a5" opacity="0.37"/><polygon points="755.4,743.0 740.2,745.2 754.9,733.9" fill="#cdd0a5" opacity="0.56"/><polygon points="838.1,824.9 814.7,824.9 829.6,816.0" fill="#bfc395" opacity="0.39"/><polygon points="1177.0,892.5 1177.6,883.7 1187.9,887.0" fill="#cdd0a5" opacity="0.32"/><polygon points="1221.9,824.8 1204.5,821.0 1212.6,813.0" fill="#bfc395" opacity="0.59"/><polygon points="1039.3,785.8 1025.6,782.0 1041.1,780.0" fill="#d3d5ae" opacity="0.45"/><polygon points="1087.9,892.9 1080.2,890.4 1085.9,888.2" fill="#d3d5ae" opacity="0.51"/><polygon points="920.9,897.9 908.0,889.9 924.3,888.1" fill="#c6c99c" opacity="0.46"/><polygon points="878.4,847.4 876.1,832.3 889.3,835.7" fill="#bfc395" opacity="0.32"/><polygon points="839.9,885.9 816.0,886.3 833.7,875.0" fill="#d3d5ae" opacity="0.50"/><polygon points="1134.5,821.7 1121.7,810.3 1145.9,809.3" fill="#bfc395" opacity="0.30"/><polygon points="979.6,892.6 990.5,886.5 998.0,894.5" fill="#cdd0a5" opacity="0.29"/><polygon points="1210.0,746.5 1202.3,739.2 1212.1,739.8" fill="#cdd0a5" opacity="0.59"/><polygon points="1065.4,816.2 1047.0,814.4 1058.1,805.6" fill="#d3d5ae" opacity="0.47"/><polygon points="989.1,725.1 996.3,713.7 1007.7,724.6" fill="#bfc395" opacity="0.55"/><polygon points="1030.1,751.5 1035.2,746.1 1042.1,750.9" fill="#c6c99c" opacity="0.40"/><polygon points="1095.0,806.8 1099.9,803.1 1109.2,806.8" fill="#c6c99c" opacity="0.44"/><polygon points="1059.7,874.9 1064.6,868.6 1074.5,871.7 1067.6,876.8" fill="#bfc395" opacity="0.54"/><polygon points="979.4,795.9 984.1,791.2 991.4,792.9 991.9,800.3" fill="#c6c99c" opacity="0.58"/><polygon points="1095.9,891.6 1092.7,883.7 1108.0,885.2" fill="#c6c99c" opacity="0.57"/><polygon points="1037.4,758.0 1025.7,761.7 1023.8,752.2 1036.1,749.4" fill="#c6c99c" opacity="0.59"/><polygon points="912.4,842.5 924.3,837.2 925.6,845.2" fill="#c6c99c" opacity="0.27"/><polygon points="1177.7,815.3 1176.9,805.8 1185.3,809.0" fill="#cdd0a5" opacity="0.47"/><polygon points="782.3,730.1 787.5,723.2 800.5,734.3" fill="#cdd0a5" opacity="0.30"/><polygon points="936.1,722.7 928.6,714.4 948.9,714.7" fill="#d3d5ae" opacity="0.58"/><polygon points="943.6,793.6 943.3,781.3 955.0,779.4 961.7,788.6" fill="#bfc395" opacity="0.50"/><polygon points="798.8,845.5 800.0,838.6 810.9,840.6 805.6,846.2" fill="#c6c99c" opacity="0.45"/><polygon points="991.6,759.8 980.6,751.9 992.3,750.0" fill="#d3d5ae" opacity="0.50"/><polygon points="1183.3,883.4 1181.8,876.6 1190.5,878.6" fill="#bfc395" opacity="0.25"/><polygon points="789.1,876.2 782.2,868.1 799.2,869.1" fill="#bfc395" opacity="0.47"/><polygon points="873.2,727.1 866.8,721.3 876.1,719.9 883.0,723.8" fill="#c6c99c" opacity="0.28"/><polygon points="946.1,885.5 928.1,881.5 947.3,877.2" fill="#cdd0a5" opacity="0.35"/><polygon points="1029.3,887.6 1036.6,875.5 1045.2,886.6" fill="#d3d5ae" opacity="0.45"/><polygon points="805.6,827.0 817.9,816.4 824.1,833.1" fill="#d3d5ae" opacity="0.32"/><polygon points="844.3,730.2 852.9,721.8 860.2,730.9" fill="#bfc395" opacity="0.51"/><polygon points="881.6,769.1 880.1,764.6 887.2,766.0" fill="#d3d5ae" opacity="0.30"/><polygon points="964.4,855.0 966.0,846.7 981.4,852.2" fill="#bfc395" opacity="0.34"/><polygon points="995.4,784.0 979.5,779.7 997.5,775.4" fill="#c6c99c" opacity="0.42"/><polygon points="850.9,834.2 836.6,831.1 842.6,820.4 858.2,827.3" fill="#d3d5ae" opacity="0.50"/><polygon points="759.2,885.2 767.8,872.5 785.5,881.7" fill="#bfc395" opacity="0.41"/><polygon points="1046.2,874.5 1044.8,869.0 1056.3,867.9 1058.7,877.2" fill="#cdd0a5" opacity="0.41"/><polygon points="1221.7,795.7 1214.4,791.8 1215.8,786.5 1225.1,787.7" fill="#c6c99c" opacity="0.48"/><polygon points="1028.7,755.9 1023.5,752.3 1027.2,748.7 1035.6,750.1" fill="#d3d5ae" opacity="0.55"/><polygon points="780.7,824.4 761.4,813.5 780.3,809.3" fill="#cdd0a5" opacity="0.37"/><polygon points="1199.0,732.3 1180.5,730.5 1186.4,722.9 1199.5,725.9" fill="#bfc395" opacity="0.34"/><polygon points="1174.0,862.4 1171.5,857.4 1179.7,856.7 1180.3,861.1" fill="#c6c99c" opacity="0.29"/><polygon points="1006.2,734.5 987.2,738.2 984.1,724.7" fill="#bfc395" opacity="0.51"/><polygon points="786.1,783.0 768.2,781.5 775.4,774.0" fill="#d3d5ae" opacity="0.33"/><polygon points="1006.5,779.9 1006.6,767.7 1022.2,771.2" fill="#d3d5ae" opacity="0.51"/><polygon points="946.8,806.7 940.2,803.0 946.1,798.6" fill="#d3d5ae" opacity="0.60"/><polygon points="1048.4,775.2 1040.5,768.7 1054.0,768.3" fill="#d3d5ae" opacity="0.29"/><polygon points="850.1,881.5 853.2,874.5 864.1,878.4 862.0,883.3" fill="#c6c99c" opacity="0.56"/><polygon points="1123.3,804.8 1124.9,792.9 1137.2,798.3 1140.2,803.5" fill="#c6c99c" opacity="0.36"/><polygon points="819.2,839.7 805.5,833.3 823.4,831.7" fill="#bfc395" opacity="0.47"/><polygon points="1194.8,762.5 1183.8,758.9 1197.3,753.7" fill="#bfc395" opacity="0.60"/><polygon points="1217.8,736.2 1196.7,732.0 1207.5,721.4" fill="#bfc395" opacity="0.46"/><polygon points="1192.2,783.1 1183.0,783.7 1182.5,779.1 1190.4,777.0" fill="#cdd0a5" opacity="0.32"/><polygon points="799.0,816.7 805.5,814.2 809.4,818.9" fill="#c6c99c" opacity="0.54"/><polygon points="1184.7,875.7 1175.4,873.9 1179.5,865.2 1190.4,867.7" fill="#d3d5ae" opacity="0.45"/><polygon points="1154.8,764.6 1139.3,756.6 1157.6,755.6" fill="#bfc395" opacity="0.35"/><polygon points="992.0,833.9 980.1,831.6 983.1,827.0 992.4,826.2" fill="#d3d5ae" opacity="0.44"/><polygon points="845.3,762.9 834.7,761.4 833.6,750.8 845.0,753.5" fill="#cdd0a5" opacity="0.31"/><polygon points="763.6,749.8 775.9,743.4 782.6,745.4 775.1,752.9" fill="#cdd0a5" opacity="0.40"/><polygon points="996.0,762.8 982.9,756.0 1004.0,753.8" fill="#bfc395" opacity="0.36"/><polygon points="913.9,884.1 925.8,875.2 930.0,884.3" fill="#d3d5ae" opacity="0.53"/><polygon points="1068.1,897.0 1062.6,890.9 1072.0,887.0 1073.1,892.2" fill="#c6c99c" opacity="0.46"/><polygon points="957.4,863.2 949.5,866.5 946.4,862.1 953.6,858.7" fill="#d3d5ae" opacity="0.39"/><polygon points="1215.9,754.0 1196.0,765.3 1195.1,749.7" fill="#cdd0a5" opacity="0.42"/><polygon points="1097.3,899.3 1075.5,897.7 1095.9,887.0" fill="#bfc395" opacity="0.31"/><polygon points="859.4,797.3 830.4,787.3 855.9,781.9" fill="#cdd0a5" opacity="0.29"/><polygon points="1198.8,744.2 1192.9,734.2 1209.8,733.7" fill="#c6c99c" opacity="0.50"/><polygon points="1071.0,725.8 1072.8,719.7 1085.1,721.7 1082.2,726.6" fill="#bfc395" opacity="0.43"/><polygon points="776.8,854.7 771.1,838.7 800.8,844.2" fill="#c6c99c" opacity="0.34"/><polygon points="862.7,808.0 865.0,803.8 877.8,810.2 867.5,812.4" fill="#cdd0a5" opacity="0.47"/><polygon points="1006.7,855.5 1007.2,847.7 1026.3,849.8 1023.8,856.6" fill="#d3d5ae" opacity="0.32"/><polygon points="1185.9,768.6 1169.0,768.1 1175.1,759.6" fill="#bfc395" opacity="0.55"/><polygon points="1017.0,834.1 1010.5,832.0 1016.1,828.4" fill="#c6c99c" opacity="0.47"/><polygon points="835.1,792.9 818.5,800.1 822.0,783.5" fill="#c6c99c" opacity="0.36"/><polygon points="1093.9,782.4 1075.3,786.8 1077.0,777.0" fill="#cdd0a5" opacity="0.33"/><polygon points="967.7,786.3 947.7,784.0 967.3,773.7" fill="#d3d5ae" opacity="0.56"/><polygon points="864.4,792.4 866.4,784.0 877.5,790.2" fill="#d3d5ae" opacity="0.53"/><polygon points="861.0,729.1 852.4,732.5 844.3,727.3 854.1,720.5" fill="#d3d5ae" opacity="0.29"/><polygon points="1165.3,808.7 1178.4,800.7 1190.5,809.7 1180.4,813.7" fill="#bfc395" opacity="0.51"/><polygon points="759.9,833.3 744.9,833.4 752.4,822.6" fill="#c6c99c" opacity="0.51"/><polygon points="767.6,806.1 760.8,806.4 766.0,802.1" fill="#cdd0a5" opacity="0.34"/><polygon points="926.0,892.2 923.5,885.8 932.7,886.4" fill="#d3d5ae" opacity="0.54"/><polygon points="1017.2,866.2 1028.5,859.1 1036.2,869.1" fill="#bfc395" opacity="0.40"/><polygon points="779.5,728.5 781.8,713.7 799.3,721.2" fill="#d3d5ae" opacity="0.45"/><polygon points="993.0,862.9 1004.1,855.1 1010.4,868.3" fill="#d3d5ae" opacity="0.55"/><polygon points="1063.8,897.8 1059.0,888.9 1070.1,890.4" fill="#bfc395" opacity="0.58"/><polygon points="779.7,831.9 774.9,820.8 803.2,825.5" fill="#cdd0a5" opacity="0.39"/><polygon points="1114.7,756.4 1106.0,760.4 1102.0,752.4 1111.3,747.6" fill="#cdd0a5" opacity="0.42"/><polygon points="1013.7,728.8 1005.7,723.6 1015.1,722.2" fill="#bfc395" opacity="0.49"/><polygon points="832.1,893.6 825.3,883.7 837.0,877.8 843.9,888.9" fill="#bfc395" opacity="0.52"/><polygon points="1181.5,777.5 1174.9,767.5 1191.7,768.6" fill="#c6c99c" opacity="0.49"/><polygon points="1157.9,824.8 1161.8,818.0 1167.3,822.9" fill="#c6c99c" opacity="0.54"/><polygon points="970.0,764.6 982.7,756.4 984.6,765.4" fill="#d3d5ae" opacity="0.36"/><polygon points="1115.5,860.3 1096.8,865.4 1100.7,851.8" fill="#bfc395" opacity="0.53"/><polygon points="763.5,810.4 761.8,801.8 773.4,800.0 771.9,809.7" fill="#bfc395" opacity="0.43"/><polygon points="1161.4,860.5 1154.0,860.3 1155.5,855.9 1162.8,856.4" fill="#c6c99c" opacity="0.46"/><polygon points="822.4,776.0 811.3,778.6 815.0,769.4" fill="#c6c99c" opacity="0.30"/><polygon points="1206.2,892.3 1212.0,881.1 1223.0,889.5" fill="#d3d5ae" opacity="0.35"/><polygon points="949.8,802.3 951.7,796.4 956.8,798.7" fill="#c6c99c" opacity="0.56"/><polygon points="807.6,799.0 796.3,789.6 815.1,791.3" fill="#bfc395" opacity="0.52"/><polygon points="1096.3,731.0 1084.8,734.8 1087.2,726.8" fill="#c6c99c" opacity="0.55"/><polygon points="985.3,834.1 981.9,826.8 993.4,828.5" fill="#c6c99c" opacity="0.52"/><polygon points="929.9,752.9 937.6,738.5 952.1,747.8" fill="#cdd0a5" opacity="0.44"/><polygon points="954.1,816.9 952.3,800.8 975.2,807.9" fill="#cdd0a5" opacity="0.39"/><polygon points="1193.6,840.9 1191.5,836.3 1200.6,835.0 1200.9,843.0" fill="#d3d5ae" opacity="0.43"/><polygon points="1203.8,765.3 1185.8,766.7 1192.4,753.3 1206.2,758.9" fill="#bfc395" opacity="0.27"/><polygon points="848.6,794.3 850.2,786.2 862.9,794.2" fill="#cdd0a5" opacity="0.59"/><polygon points="1102.9,839.4 1103.9,833.3 1112.6,835.3 1113.3,839.7" fill="#c6c99c" opacity="0.46"/><polygon points="878.1,793.0 874.1,785.3 885.7,787.1" fill="#bfc395" opacity="0.58"/><polygon points="1078.6,763.3 1064.6,762.7 1076.1,755.5" fill="#bfc395" opacity="0.52"/><polygon points="909.3,880.4 901.7,877.2 908.3,874.5" fill="#bfc395" opacity="0.48"/><polygon points="1185.5,800.8 1173.3,791.6 1187.0,791.2" fill="#d3d5ae" opacity="0.43"/><polygon points="968.2,750.8 956.3,748.7 968.2,743.6" fill="#bfc395" opacity="0.25"/><polygon points="954.5,849.8 958.2,845.2 964.2,847.4 961.5,850.3" fill="#d3d5ae" opacity="0.28"/><polygon points="850.8,849.0 870.8,838.3 878.4,847.8 867.5,855.0" fill="#cdd0a5" opacity="0.59"/><polygon points="1056.7,749.9 1048.6,739.3 1066.1,741.3" fill="#cdd0a5" opacity="0.52"/><polygon points="1086.6,839.9 1070.1,839.0 1077.9,833.4" fill="#c6c99c" opacity="0.28"/><polygon points="1117.8,739.4 1112.7,736.2 1117.7,732.6 1123.5,735.1" fill="#cdd0a5" opacity="0.31"/><polygon points="882.5,803.0 886.3,798.4 892.9,803.1" fill="#cdd0a5" opacity="0.39"/><polygon points="963.3,809.5 958.6,800.4 979.4,790.4 981.5,801.0" fill="#cdd0a5" opacity="0.28"/><polygon points="1019.9,848.5 1015.3,843.2 1028.7,843.0" fill="#cdd0a5" opacity="0.32"/><polygon points="838.4,812.8 830.7,816.8 825.6,812.2 834.5,808.9" fill="#cdd0a5" opacity="0.58"/><polygon points="1088.7,833.5 1083.0,824.1 1100.5,824.0" fill="#cdd0a5" opacity="0.50"/><polygon points="972.3,760.4 970.0,754.9 979.9,754.9" fill="#c6c99c" opacity="0.41"/><polygon points="1155.5,854.7 1133.6,855.0 1143.1,844.4" fill="#d3d5ae" opacity="0.44"/><polygon points="1013.2,814.7 992.1,812.4 1014.8,798.9" fill="#cdd0a5" opacity="0.41"/><polygon points="1161.9,798.2 1149.4,798.4 1147.2,790.0 1160.0,786.8" fill="#c6c99c" opacity="0.38"/><polygon points="925.5,842.5 932.1,835.6 939.1,842.8" fill="#c6c99c" opacity="0.27"/><polygon points="1206.4,874.8 1201.8,867.2 1212.9,869.2" fill="#cdd0a5" opacity="0.32"/><polygon points="848.4,777.5 852.0,772.0 862.0,778.4" fill="#c6c99c" opacity="0.57"/><polygon points="1129.4,816.0 1115.6,816.2 1120.1,808.0 1132.0,809.7" fill="#d3d5ae" opacity="0.37"/><polygon points="904.2,860.0 893.9,847.6 907.8,847.7 917.3,856.2" fill="#cdd0a5" opacity="0.42"/><polygon points="993.4,770.0 981.1,765.4 988.2,761.7" fill="#d3d5ae" opacity="0.32"/><polygon points="910.2,723.4 916.2,719.2 920.8,723.2" fill="#d3d5ae" opacity="0.37"/><polygon points="865.9,788.8 869.7,781.3 883.5,783.4 889.9,790.1" fill="#c6c99c" opacity="0.41"/><polygon points="1007.3,836.7 992.1,830.3 1009.3,828.9" fill="#d3d5ae" opacity="0.38"/><polygon points="1210.1,835.8 1212.4,828.4 1223.9,825.1 1224.0,835.0" fill="#bfc395" opacity="0.34"/><polygon points="856.9,746.4 842.8,744.1 856.9,737.2" fill="#cdd0a5" opacity="0.57"/><polygon points="1138.4,886.8 1141.1,877.8 1153.6,881.7" fill="#bfc395" opacity="0.36"/><polygon points="798.1,728.8 796.7,724.2 805.6,723.7 808.2,728.3" fill="#c6c99c" opacity="0.26"/><polygon points="963.3,821.5 954.4,822.4 949.2,818.4 955.7,814.3" fill="#c6c99c" opacity="0.42"/><polygon points="1081.2,756.3 1073.5,750.6 1084.9,751.4" fill="#cdd0a5" opacity="0.35"/><polygon points="939.4,763.1 947.5,759.2 946.6,766.0" fill="#bfc395" opacity="0.38"/><polygon points="904.1,782.0 891.0,775.5 895.9,762.9 911.3,767.0" fill="#c6c99c" opacity="0.44"/><polygon points="792.7,897.3 801.2,891.2 802.4,898.7" fill="#c6c99c" opacity="0.48"/><polygon points="1050.7,805.5 1048.5,794.0 1068.5,794.5" fill="#c6c99c" opacity="0.36"/><polygon points="1197.1,869.4 1190.5,872.1 1190.0,862.7" fill="#d3d5ae" opacity="0.49"/><polygon points="1095.0,799.8 1081.9,802.3 1085.6,794.3" fill="#d3d5ae" opacity="0.59"/><polygon points="1203.7,722.8 1197.7,718.0 1202.3,715.8 1206.8,718.2" fill="#d3d5ae" opacity="0.53"/><polygon points="1116.0,777.5 1107.7,774.3 1118.5,767.6 1122.5,772.1" fill="#c6c99c" opacity="0.42"/><polygon points="925.1,758.8 918.0,750.5 924.8,745.5 934.0,752.3" fill="#c6c99c" opacity="0.44"/></g><g clip-path="url(#cpA)"><polygon points="757.9,745.6 746.4,736.3 768.1,740.0" fill="#eceed8" opacity="0.36"/><polygon points="1091.7,827.9 1088.2,818.8 1105.1,823.4" fill="#f0f0e2" opacity="0.50"/><polygon points="972.9,838.3 962.9,837.6 962.4,833.0 970.6,832.6" fill="#f0f0e2" opacity="0.59"/><polygon points="1047.5,811.6 1043.3,810.3 1051.0,808.8" fill="#eceed8" opacity="0.57"/><polygon points="1080.2,751.0 1079.4,745.8 1085.3,747.6" fill="#eceed8" opacity="0.59"/><polygon points="826.1,801.4 810.7,794.1 824.0,788.5" fill="#e6e8cf" opacity="0.54"/><polygon points="1049.2,885.1 1029.4,882.9 1033.8,875.2" fill="#f0f0e2" opacity="0.35"/><polygon points="1030.2,763.8 1012.2,762.1 1019.8,755.8" fill="#f0f0e2" opacity="0.47"/><polygon points="1088.6,826.8 1080.4,825.1 1088.0,822.8" fill="#f0f0e2" opacity="0.40"/><polygon points="1060.0,893.7 1062.4,888.6 1068.5,894.8" fill="#eceed8" opacity="0.51"/><polygon points="1162.7,811.7 1153.1,807.2 1165.0,806.5" fill="#f0f0e2" opacity="0.50"/><polygon points="1033.1,869.6 1026.6,868.9 1031.2,865.6" fill="#f0f0e2" opacity="0.36"/><polygon points="951.7,742.2 956.4,736.9 960.0,738.8 960.0,743.1" fill="#e6e8cf" opacity="0.35"/><polygon points="874.6,769.5 867.9,765.4 868.9,760.6 877.3,760.5" fill="#eceed8" opacity="0.38"/><polygon points="1185.2,893.3 1189.0,883.5 1202.3,889.1" fill="#e6e8cf" opacity="0.40"/><polygon points="806.3,889.5 802.4,882.3 817.4,884.1" fill="#eceed8" opacity="0.50"/><polygon points="1170.2,778.8 1175.9,776.4 1176.4,780.3" fill="#e6e8cf" opacity="0.31"/><polygon points="964.9,894.2 956.0,885.1 969.4,881.8" fill="#e6e8cf" opacity="0.32"/><polygon points="1152.3,891.3 1158.5,886.5 1160.3,891.6" fill="#f0f0e2" opacity="0.35"/><polygon points="764.5,783.7 757.5,782.9 768.2,777.7" fill="#f0f0e2" opacity="0.31"/><polygon points="1010.0,752.4 1012.0,749.9 1016.2,753.5" fill="#f0f0e2" opacity="0.44"/><polygon points="1217.2,728.0 1207.0,730.3 1212.3,722.0" fill="#f0f0e2" opacity="0.35"/><polygon points="1216.2,893.9 1207.8,890.5 1217.9,889.6" fill="#f0f0e2" opacity="0.59"/><polygon points="833.1,862.2 826.2,863.2 825.9,860.8 829.1,858.9" fill="#e6e8cf" opacity="0.38"/><polygon points="880.1,725.7 882.8,719.1 892.4,721.5" fill="#eceed8" opacity="0.35"/><polygon points="1151.7,875.7 1160.4,869.3 1165.2,875.1" fill="#eceed8" opacity="0.52"/><polygon points="888.4,848.6 901.3,842.2 906.7,852.1" fill="#f0f0e2" opacity="0.48"/><polygon points="768.6,894.7 758.6,895.1 766.7,887.7" fill="#e6e8cf" opacity="0.33"/><polygon points="1202.6,781.1 1189.6,777.1 1207.1,770.1" fill="#e6e8cf" opacity="0.51"/><polygon points="842.2,837.9 846.4,828.6 857.3,836.1" fill="#eceed8" opacity="0.60"/><polygon points="892.8,738.1 898.3,735.0 901.6,739.7" fill="#eceed8" opacity="0.45"/><polygon points="1068.6,893.7 1066.0,898.7 1056.1,893.2 1062.2,890.9" fill="#e6e8cf" opacity="0.53"/><polygon points="756.2,804.1 755.8,797.2 767.6,803.8" fill="#eceed8" opacity="0.39"/><polygon points="814.6,791.7 821.6,783.4 836.1,789.0 830.8,796.4" fill="#e6e8cf" opacity="0.37"/><polygon points="1120.0,850.8 1115.8,839.7 1125.6,842.6" fill="#e6e8cf" opacity="0.43"/><polygon points="993.3,858.6 980.5,858.5 985.0,848.6" fill="#e6e8cf" opacity="0.47"/><polygon points="784.6,865.2 779.0,862.7 787.7,861.6" fill="#e6e8cf" opacity="0.49"/><polygon points="910.4,734.0 903.4,734.1 905.7,728.7" fill="#eceed8" opacity="0.42"/><polygon points="866.7,850.3 876.8,843.1 880.7,850.6" fill="#e6e8cf" opacity="0.34"/><polygon points="1098.2,794.3 1081.2,794.2 1090.9,783.7" fill="#eceed8" opacity="0.60"/><polygon points="757.0,727.9 760.7,722.1 766.1,727.4" fill="#f0f0e2" opacity="0.50"/><polygon points="1213.8,878.3 1204.7,884.9 1196.4,875.1 1210.5,870.2" fill="#f0f0e2" opacity="0.34"/><polygon points="1067.0,890.0 1071.7,887.3 1077.2,890.9" fill="#e6e8cf" opacity="0.59"/><polygon points="858.2,755.0 842.2,754.8 852.7,749.7" fill="#eceed8" opacity="0.58"/><polygon points="874.2,862.3 864.0,862.4 865.1,856.5 873.9,855.0" fill="#eceed8" opacity="0.31"/><polygon points="1100.4,728.3 1086.2,727.0 1096.2,719.2" fill="#eceed8" opacity="0.55"/><polygon points="988.7,829.5 973.8,826.5 991.8,822.8" fill="#eceed8" opacity="0.60"/><polygon points="1210.0,741.2 1203.4,741.7 1203.4,738.2 1207.9,738.3" fill="#eceed8" opacity="0.43"/><polygon points="1136.9,732.8 1147.2,719.1 1156.9,731.4" fill="#e6e8cf" opacity="0.39"/><polygon points="958.8,877.5 966.9,873.2 964.5,879.6" fill="#e6e8cf" opacity="0.41"/><polygon points="1206.6,740.2 1199.6,742.1 1202.0,736.8" fill="#eceed8" opacity="0.33"/><polygon points="921.1,761.8 927.2,757.5 934.3,761.4 928.6,764.6" fill="#e6e8cf" opacity="0.37"/><polygon points="1050.9,784.3 1050.9,780.9 1056.8,777.2 1059.3,780.8" fill="#e6e8cf" opacity="0.55"/><polygon points="952.7,892.3 943.3,891.1 948.4,884.6" fill="#eceed8" opacity="0.52"/><polygon points="1181.9,841.5 1173.5,839.7 1171.1,833.9 1187.5,832.9" fill="#f0f0e2" opacity="0.54"/><polygon points="971.3,741.4 968.7,746.9 960.5,742.6 966.6,739.0" fill="#eceed8" opacity="0.44"/><polygon points="974.8,880.4 963.2,888.8 957.4,883.1 967.2,877.3" fill="#f0f0e2" opacity="0.39"/><polygon points="780.3,791.0 765.6,796.3 767.9,787.4" fill="#e6e8cf" opacity="0.54"/><polygon points="1072.5,771.1 1071.6,764.3 1080.8,765.0 1080.4,771.8" fill="#eceed8" opacity="0.52"/><polygon points="1071.8,733.5 1061.1,727.4 1072.7,726.2" fill="#e6e8cf" opacity="0.58"/><polygon points="1030.8,797.2 1019.9,793.5 1025.3,790.3 1031.1,791.4" fill="#f0f0e2" opacity="0.49"/><polygon points="915.6,813.7 913.1,815.6 908.7,812.1 912.5,809.9" fill="#eceed8" opacity="0.47"/><polygon points="1217.9,896.2 1204.6,895.0 1209.5,885.8" fill="#e6e8cf" opacity="0.59"/><polygon points="1024.2,875.0 1012.9,869.3 1018.3,863.0 1027.4,866.9" fill="#eceed8" opacity="0.49"/><polygon points="984.8,824.2 985.1,818.8 990.2,818.8 991.7,823.0" fill="#e6e8cf" opacity="0.47"/><polygon points="1136.7,755.6 1130.8,754.7 1135.2,750.4" fill="#eceed8" opacity="0.48"/><polygon points="1047.3,765.2 1044.2,758.0 1053.0,759.8" fill="#f0f0e2" opacity="0.52"/><polygon points="781.4,841.2 778.1,838.7 783.2,837.1" fill="#eceed8" opacity="0.42"/><polygon points="1164.4,787.4 1159.6,780.2 1172.5,779.7 1175.9,787.2" fill="#e6e8cf" opacity="0.46"/><polygon points="750.7,774.8 741.7,769.3 744.2,762.2 755.4,767.2" fill="#eceed8" opacity="0.36"/><polygon points="940.6,808.2 928.8,806.7 929.8,800.2" fill="#f0f0e2" opacity="0.47"/><polygon points="801.0,833.0 799.3,822.6 811.2,823.9" fill="#eceed8" opacity="0.60"/><polygon points="1188.1,792.5 1182.7,794.1 1183.4,790.8" fill="#f0f0e2" opacity="0.38"/><polygon points="911.5,881.1 904.1,879.9 912.6,876.1" fill="#eceed8" opacity="0.33"/><polygon points="852.2,854.6 845.1,850.4 854.8,845.6 861.0,849.5" fill="#e6e8cf" opacity="0.36"/><polygon points="1154.6,812.3 1147.2,809.1 1155.2,806.0" fill="#eceed8" opacity="0.44"/><polygon points="1096.3,724.3 1099.2,719.8 1106.2,721.0 1106.0,724.9" fill="#e6e8cf" opacity="0.58"/><polygon points="1030.6,888.2 1021.3,885.4 1030.4,880.8" fill="#eceed8" opacity="0.41"/><polygon points="1037.0,738.3 1026.5,741.1 1026.3,731.7 1037.9,733.9" fill="#f0f0e2" opacity="0.38"/><polygon points="745.6,736.6 740.1,733.4 747.2,732.3" fill="#eceed8" opacity="0.52"/><polygon points="882.5,760.4 881.8,755.3 895.0,758.2" fill="#eceed8" opacity="0.35"/><polygon points="935.9,798.7 918.9,795.5 936.7,790.5" fill="#eceed8" opacity="0.54"/><polygon points="748.7,757.6 740.2,757.4 739.4,752.9 747.0,752.0" fill="#e6e8cf" opacity="0.34"/><polygon points="784.3,824.4 787.1,817.4 798.5,820.6" fill="#e6e8cf" opacity="0.53"/><polygon points="1131.0,884.3 1140.3,880.1 1140.3,888.1" fill="#e6e8cf" opacity="0.37"/><polygon points="912.7,852.2 912.2,848.0 919.0,849.7" fill="#f0f0e2" opacity="0.48"/><polygon points="1008.0,888.6 1003.4,881.8 1016.3,880.8" fill="#f0f0e2" opacity="0.58"/><polygon points="1070.2,873.9 1071.1,866.1 1077.7,870.2" fill="#e6e8cf" opacity="0.49"/><polygon points="937.3,824.3 939.3,819.8 944.6,820.2 942.4,824.0" fill="#eceed8" opacity="0.55"/><polygon points="853.9,861.1 856.0,859.4 861.5,860.7 858.9,864.2" fill="#f0f0e2" opacity="0.47"/><polygon points="797.9,812.7 790.5,803.9 805.3,806.1" fill="#e6e8cf" opacity="0.32"/><polygon points="802.3,764.4 800.4,759.1 816.5,760.3" fill="#f0f0e2" opacity="0.34"/><polygon points="968.9,840.9 966.1,836.2 974.4,834.9 977.2,839.9" fill="#f0f0e2" opacity="0.43"/><polygon points="1031.3,760.0 1034.8,752.0 1039.0,758.4" fill="#f0f0e2" opacity="0.53"/><polygon points="1131.4,721.8 1138.4,717.4 1144.0,721.2" fill="#e6e8cf" opacity="0.56"/><polygon points="1176.7,804.0 1169.0,798.6 1175.3,794.5 1183.2,798.9" fill="#f0f0e2" opacity="0.38"/><polygon points="855.7,747.8 854.8,741.1 863.7,740.4" fill="#eceed8" opacity="0.43"/><polygon points="797.0,834.4 800.5,825.1 817.5,827.4" fill="#eceed8" opacity="0.41"/><polygon points="844.0,855.0 836.9,857.8 833.7,853.4 841.0,853.1" fill="#f0f0e2" opacity="0.44"/><polygon points="1110.2,760.6 1105.5,755.6 1115.7,752.4" fill="#f0f0e2" opacity="0.55"/><polygon points="1125.9,791.5 1113.5,791.8 1115.7,785.1 1127.8,785.7" fill="#f0f0e2" opacity="0.35"/><polygon points="790.5,805.6 791.3,802.4 795.4,805.1" fill="#f0f0e2" opacity="0.47"/><polygon points="798.6,894.6 785.4,894.2 792.0,890.4" fill="#f0f0e2" opacity="0.51"/><polygon points="1020.5,743.6 1026.8,734.9 1035.2,740.2" fill="#f0f0e2" opacity="0.50"/><polygon points="1128.7,849.7 1130.8,840.9 1145.5,845.3" fill="#e6e8cf" opacity="0.57"/><polygon points="1179.3,790.8 1191.6,780.2 1192.8,787.7" fill="#f0f0e2" opacity="0.47"/><polygon points="1201.8,735.0 1192.2,727.8 1200.7,721.1 1214.2,725.3" fill="#eceed8" opacity="0.45"/><polygon points="1027.0,720.9 1018.6,726.2 1010.7,721.3 1021.6,715.9" fill="#f0f0e2" opacity="0.42"/><polygon points="1152.4,836.5 1148.7,824.3 1162.4,828.9" fill="#f0f0e2" opacity="0.39"/><polygon points="1150.3,810.6 1139.8,808.6 1145.8,803.1 1156.1,806.9" fill="#eceed8" opacity="0.43"/><polygon points="938.4,837.7 935.7,826.5 949.6,832.7" fill="#e6e8cf" opacity="0.56"/><polygon points="860.4,889.5 848.6,888.3 853.3,882.1" fill="#e6e8cf" opacity="0.53"/><polygon points="1128.1,839.3 1132.7,836.0 1138.1,840.8" fill="#e6e8cf" opacity="0.54"/><polygon points="868.1,738.6 856.1,734.6 862.2,730.3 874.5,735.1" fill="#f0f0e2" opacity="0.47"/><polygon points="1217.1,743.7 1210.1,738.0 1221.6,734.4 1226.1,741.3" fill="#f0f0e2" opacity="0.40"/><polygon points="1224.5,827.9 1216.5,830.3 1218.5,824.0" fill="#e6e8cf" opacity="0.56"/><polygon points="791.9,817.7 794.2,812.1 801.1,811.2 799.2,817.6" fill="#eceed8" opacity="0.38"/><polygon points="849.1,732.5 854.4,725.9 863.1,727.8 863.8,734.5" fill="#eceed8" opacity="0.50"/><polygon points="1212.5,728.1 1205.7,722.4 1211.5,719.8 1218.8,723.7" fill="#e6e8cf" opacity="0.56"/><polygon points="846.7,767.6 835.4,755.3 858.7,758.1" fill="#eceed8" opacity="0.49"/><polygon points="1068.9,847.1 1064.4,844.6 1072.9,839.5 1076.9,844.6" fill="#eceed8" opacity="0.46"/><polygon points="1207.3,839.2 1225.2,832.0 1222.7,841.3" fill="#f0f0e2" opacity="0.56"/><polygon points="944.6,870.6 953.7,867.3 958.4,870.5 951.4,876.0" fill="#e6e8cf" opacity="0.37"/><polygon points="928.7,877.2 920.1,875.2 923.6,869.1 932.4,871.9" fill="#f0f0e2" opacity="0.31"/><polygon points="918.9,873.2 914.6,876.2 910.4,872.8 916.4,871.6" fill="#e6e8cf" opacity="0.32"/><polygon points="1167.2,721.0 1144.6,720.6 1158.3,710.7" fill="#eceed8" opacity="0.57"/><polygon points="1113.4,843.9 1116.4,836.9 1124.9,843.5" fill="#f0f0e2" opacity="0.46"/><polygon points="1068.8,757.8 1066.9,748.0 1079.0,754.0" fill="#eceed8" opacity="0.49"/><polygon points="1032.8,745.8 1037.8,738.4 1046.0,745.6" fill="#eceed8" opacity="0.45"/><polygon points="1064.9,866.6 1064.0,859.4 1075.0,859.0 1076.4,866.8" fill="#eceed8" opacity="0.48"/><polygon points="892.7,811.4 885.6,805.7 900.1,800.0 906.1,810.2" fill="#e6e8cf" opacity="0.32"/><polygon points="995.0,769.6 984.9,770.6 989.2,767.4" fill="#f0f0e2" opacity="0.50"/><polygon points="1132.2,850.8 1126.0,838.6 1145.3,845.7" fill="#f0f0e2" opacity="0.33"/><polygon points="1217.8,868.1 1207.9,874.3 1199.8,868.0 1209.9,862.7" fill="#f0f0e2" opacity="0.45"/><polygon points="1146.5,845.4 1151.3,841.8 1153.9,845.9" fill="#f0f0e2" opacity="0.56"/><polygon points="1084.7,885.1 1074.0,885.9 1078.1,879.5" fill="#eceed8" opacity="0.46"/><polygon points="1073.9,864.3 1064.0,864.3 1070.9,858.7" fill="#e6e8cf" opacity="0.38"/><polygon points="1137.4,861.9 1138.8,857.6 1143.5,859.7" fill="#e6e8cf" opacity="0.35"/><polygon points="783.2,854.8 788.0,852.4 791.4,856.1" fill="#e6e8cf" opacity="0.58"/><polygon points="852.4,804.5 850.4,800.3 859.0,802.1" fill="#eceed8" opacity="0.53"/><polygon points="1085.1,762.7 1078.4,752.7 1093.1,750.8 1101.5,760.6" fill="#e6e8cf" opacity="0.50"/><polygon points="818.5,849.5 824.6,844.0 826.8,847.6" fill="#e6e8cf" opacity="0.54"/><polygon points="1118.9,860.5 1127.2,857.0 1128.0,863.9" fill="#f0f0e2" opacity="0.39"/><polygon points="1102.1,809.5 1095.9,802.4 1107.1,801.5" fill="#e6e8cf" opacity="0.43"/><polygon points="1202.4,892.5 1203.8,886.5 1211.2,888.8 1205.9,892.9" fill="#f0f0e2" opacity="0.53"/><polygon points="1090.2,843.2 1087.6,829.7 1108.2,833.3" fill="#e6e8cf" opacity="0.58"/><polygon points="743.0,792.0 733.4,782.8 744.5,779.1 754.9,787.9" fill="#eceed8" opacity="0.54"/><polygon points="757.4,743.7 759.6,737.9 771.1,737.5 770.0,745.2" fill="#e6e8cf" opacity="0.37"/><polygon points="1171.9,772.5 1166.4,774.7 1167.6,768.9" fill="#e6e8cf" opacity="0.56"/><polygon points="989.0,815.0 984.2,813.2 989.7,810.2" fill="#f0f0e2" opacity="0.57"/><polygon points="847.6,826.2 839.4,822.4 850.3,821.0" fill="#eceed8" opacity="0.58"/><polygon points="960.9,787.1 956.5,782.4 967.4,781.6" fill="#e6e8cf" opacity="0.53"/><polygon points="937.5,827.0 930.7,825.4 931.5,815.1 945.4,819.4" fill="#f0f0e2" opacity="0.53"/><polygon points="743.9,833.8 747.8,829.3 753.1,834.8" fill="#e6e8cf" opacity="0.45"/><polygon points="1024.6,855.0 1010.9,851.8 1023.6,846.6" fill="#e6e8cf" opacity="0.38"/><polygon points="1067.4,851.3 1059.8,850.6 1062.8,845.9" fill="#e6e8cf" opacity="0.59"/><polygon points="887.4,856.3 889.3,850.6 897.4,853.7" fill="#e6e8cf" opacity="0.44"/><polygon points="915.0,786.0 918.7,781.1 922.8,786.2" fill="#eceed8" opacity="0.55"/><polygon points="814.0,760.7 814.6,757.3 820.6,760.0" fill="#eceed8" opacity="0.40"/><polygon points="926.5,815.6 925.9,807.3 935.3,812.8" fill="#eceed8" opacity="0.54"/><polygon points="754.4,816.8 739.9,817.1 739.4,811.0" fill="#eceed8" opacity="0.57"/><polygon points="1198.3,753.7 1189.1,749.8 1198.8,743.8" fill="#eceed8" opacity="0.53"/><polygon points="812.3,835.6 802.2,828.9 811.8,825.8 814.4,829.2" fill="#eceed8" opacity="0.51"/><polygon points="850.3,818.3 855.3,810.9 862.0,815.8" fill="#f0f0e2" opacity="0.58"/><polygon points="997.2,830.0 988.7,829.6 993.6,825.3" fill="#e6e8cf" opacity="0.56"/><polygon points="1197.3,770.7 1192.4,764.9 1210.6,759.3 1216.2,769.6" fill="#e6e8cf" opacity="0.58"/><polygon points="756.0,794.2 751.7,788.0 766.6,788.5 763.8,796.3" fill="#e6e8cf" opacity="0.51"/><polygon points="782.5,847.9 770.0,845.9 778.1,842.8" fill="#f0f0e2" opacity="0.42"/><polygon points="1186.7,889.1 1173.9,893.3 1179.6,881.3" fill="#eceed8" opacity="0.53"/><polygon points="767.0,733.6 755.4,727.1 771.0,725.3" fill="#f0f0e2" opacity="0.34"/><polygon points="955.4,803.2 950.9,792.4 970.8,796.5" fill="#eceed8" opacity="0.34"/><polygon points="1011.4,726.5 1005.6,723.6 1013.7,722.8" fill="#eceed8" opacity="0.35"/><polygon points="1149.3,762.6 1142.1,759.6 1152.0,757.8" fill="#eceed8" opacity="0.53"/><polygon points="872.5,825.6 862.1,827.9 866.1,819.6" fill="#eceed8" opacity="0.48"/><polygon points="1161.5,724.3 1171.6,719.6 1174.8,730.7" fill="#eceed8" opacity="0.46"/><polygon points="1170.9,800.0 1164.6,799.3 1164.7,794.1 1172.9,795.0" fill="#f0f0e2" opacity="0.31"/><polygon points="782.9,797.7 774.2,798.0 781.5,793.8" fill="#e6e8cf" opacity="0.45"/><polygon points="819.3,774.8 806.6,780.1 805.9,770.8" fill="#f0f0e2" opacity="0.41"/><polygon points="1194.6,783.8 1198.6,781.2 1206.0,782.5 1202.7,788.6" fill="#e6e8cf" opacity="0.50"/><polygon points="1045.4,762.9 1050.8,752.4 1063.1,759.8" fill="#e6e8cf" opacity="0.48"/></g><g clip-path="url(#cpC)"><polygon points="1499.9,716.4 1493.1,721.4 1486.7,715.4 1498.4,711.9" fill="#bfc395" opacity="0.25"/><polygon points="1570.7,770.8 1550.9,777.8 1546.5,772.9 1557.0,766.6" fill="#bfc395" opacity="0.14"/><polygon points="1502.6,768.8 1500.5,758.5 1515.5,764.6" fill="#d3d5ae" opacity="0.17"/><polygon points="1563.4,844.9 1562.2,839.8 1570.3,839.7 1571.0,845.9" fill="#d3d5ae" opacity="0.18"/><polygon points="1617.3,821.5 1608.3,825.2 1606.5,817.3" fill="#bfc395" opacity="0.12"/><polygon points="1514.2,775.6 1527.4,767.4 1531.3,782.4" fill="#cdd0a5" opacity="0.20"/><polygon points="1586.8,762.6 1576.2,767.0 1567.8,760.8 1577.3,758.6" fill="#cdd0a5" opacity="0.17"/><polygon points="1523.5,831.7 1507.7,823.5 1522.5,822.1" fill="#bfc395" opacity="0.12"/><polygon points="1626.5,866.3 1615.7,864.7 1621.3,859.4" fill="#c6c99c" opacity="0.24"/><polygon points="1649.9,855.2 1643.5,851.7 1648.8,850.4" fill="#cdd0a5" opacity="0.27"/><polygon points="1615.9,871.2 1616.9,865.3 1629.4,864.3 1629.3,870.5" fill="#c6c99c" opacity="0.16"/><polygon points="1514.9,819.7 1529.2,815.3 1532.5,821.9" fill="#bfc395" opacity="0.23"/><polygon points="1445.6,699.6 1458.4,690.9 1462.2,701.7" fill="#bfc395" opacity="0.12"/><polygon points="1484.4,788.0 1472.0,788.9 1473.8,780.7 1481.1,780.7" fill="#d3d5ae" opacity="0.12"/><polygon points="1608.4,889.6 1615.1,880.5 1627.1,887.9" fill="#cdd0a5" opacity="0.23"/><polygon points="1543.9,827.5 1539.0,823.4 1548.7,822.3" fill="#d3d5ae" opacity="0.14"/><polygon points="1517.5,715.2 1513.2,711.8 1518.8,707.7 1524.8,710.9" fill="#cdd0a5" opacity="0.15"/><polygon points="1614.3,788.9 1610.7,780.9 1620.8,776.7 1625.6,784.8" fill="#c6c99c" opacity="0.11"/><polygon points="1656.6,872.0 1650.0,871.7 1645.4,869.0 1652.3,867.0" fill="#bfc395" opacity="0.20"/><polygon points="1561.4,826.7 1552.0,823.3 1555.7,816.6 1569.7,820.2" fill="#bfc395" opacity="0.22"/><polygon points="1531.0,712.4 1525.0,713.7 1523.4,710.5 1529.5,708.8" fill="#cdd0a5" opacity="0.12"/><polygon points="1575.3,856.6 1581.1,852.2 1584.5,855.2 1582.3,858.3" fill="#cdd0a5" opacity="0.14"/><polygon points="1633.7,724.4 1627.1,720.4 1633.9,717.9" fill="#bfc395" opacity="0.22"/><polygon points="1626.6,795.1 1616.4,786.7 1631.7,784.5" fill="#c6c99c" opacity="0.26"/><polygon points="1644.2,895.3 1643.4,885.3 1659.5,883.9 1657.6,893.3" fill="#d3d5ae" opacity="0.15"/><polygon points="1482.0,715.2 1483.6,709.3 1493.7,711.3 1490.2,715.7" fill="#cdd0a5" opacity="0.25"/><polygon points="1475.7,887.0 1476.1,882.7 1483.9,883.9" fill="#cdd0a5" opacity="0.21"/><polygon points="1580.3,782.7 1592.2,777.4 1590.9,786.5" fill="#d3d5ae" opacity="0.24"/><polygon points="1519.4,722.3 1532.0,712.5 1543.5,718.2 1534.8,727.4" fill="#c6c99c" opacity="0.29"/><polygon points="1610.5,796.5 1609.9,782.4 1631.9,786.5" fill="#bfc395" opacity="0.15"/><polygon points="1486.6,717.9 1487.7,708.6 1505.5,719.5" fill="#bfc395" opacity="0.15"/><polygon points="1543.0,889.8 1537.1,878.7 1559.6,879.7" fill="#bfc395" opacity="0.17"/><polygon points="1639.1,879.8 1628.1,885.5 1616.7,882.3 1625.9,873.3" fill="#d3d5ae" opacity="0.14"/><polygon points="1568.3,886.5 1551.3,885.0 1560.9,876.8 1574.8,877.7" fill="#bfc395" opacity="0.14"/><polygon points="1530.6,709.6 1545.2,702.3 1550.9,713.9" fill="#c6c99c" opacity="0.27"/><polygon points="1546.2,842.2 1540.2,831.9 1558.8,833.0" fill="#c6c99c" opacity="0.29"/><polygon points="1619.1,705.9 1613.3,703.2 1618.8,699.9" fill="#bfc395" opacity="0.26"/><polygon points="1589.1,831.7 1579.0,831.3 1587.1,827.7" fill="#d3d5ae" opacity="0.27"/><polygon points="1554.2,742.4 1544.0,742.6 1540.5,738.2 1554.2,732.4" fill="#cdd0a5" opacity="0.17"/><polygon points="1611.7,742.1 1614.1,733.9 1627.6,739.4" fill="#bfc395" opacity="0.10"/><polygon points="1466.9,877.1 1454.7,881.2 1452.8,873.7 1459.9,871.6" fill="#bfc395" opacity="0.30"/><polygon points="1620.3,805.9 1612.9,798.7 1625.6,794.4" fill="#cdd0a5" opacity="0.25"/><polygon points="1519.5,883.7 1529.3,876.1 1538.8,885.2" fill="#bfc395" opacity="0.18"/><polygon points="1473.0,877.9 1469.6,872.1 1478.2,870.4" fill="#bfc395" opacity="0.23"/><polygon points="1607.5,767.3 1593.6,769.0 1597.6,762.6" fill="#cdd0a5" opacity="0.21"/><polygon points="1484.5,854.2 1477.0,846.4 1494.1,847.9" fill="#d3d5ae" opacity="0.21"/><polygon points="1464.6,837.9 1470.9,833.3 1477.1,841.0 1469.9,842.7" fill="#cdd0a5" opacity="0.19"/><polygon points="1590.6,900.2 1583.7,892.4 1594.3,886.7" fill="#bfc395" opacity="0.26"/><polygon points="1489.6,865.7 1482.6,867.8 1476.7,864.7 1484.4,860.7" fill="#d3d5ae" opacity="0.15"/><polygon points="1532.4,789.1 1521.7,784.5 1532.3,779.2" fill="#cdd0a5" opacity="0.28"/><polygon points="1585.7,735.6 1575.7,736.1 1578.9,731.6 1584.4,731.4" fill="#d3d5ae" opacity="0.28"/><polygon points="1474.6,805.5 1461.0,804.1 1466.7,796.3" fill="#cdd0a5" opacity="0.20"/><polygon points="1520.1,878.1 1505.4,877.5 1510.2,870.1 1526.8,872.9" fill="#cdd0a5" opacity="0.11"/><polygon points="1522.4,758.2 1505.7,753.7 1513.0,747.6 1525.1,751.2" fill="#cdd0a5" opacity="0.11"/><polygon points="1506.2,736.4 1491.0,730.4 1503.3,723.7" fill="#cdd0a5" opacity="0.29"/><polygon points="1466.9,788.0 1471.6,781.2 1479.8,781.8 1479.3,787.8" fill="#cdd0a5" opacity="0.12"/><polygon points="1616.4,846.4 1608.3,845.8 1611.8,840.6" fill="#bfc395" opacity="0.29"/><polygon points="1468.4,721.7 1458.9,714.5 1460.3,704.9 1474.2,712.5" fill="#cdd0a5" opacity="0.22"/><polygon points="1551.0,799.6 1554.4,793.9 1557.7,799.9" fill="#d3d5ae" opacity="0.11"/><polygon points="1570.7,857.4 1574.1,850.9 1582.1,852.6" fill="#bfc395" opacity="0.18"/><polygon points="1650.4,766.6 1642.6,766.2 1643.3,763.2 1649.4,761.1" fill="#c6c99c" opacity="0.22"/><polygon points="1526.0,893.3 1531.6,887.4 1546.1,888.7 1543.8,895.7" fill="#cdd0a5" opacity="0.29"/><polygon points="1585.5,838.2 1572.7,835.9 1583.4,833.3" fill="#cdd0a5" opacity="0.22"/><polygon points="1648.3,785.1 1626.5,784.5 1644.2,777.1" fill="#d3d5ae" opacity="0.24"/><polygon points="1585.6,815.6 1592.2,804.5 1603.8,813.4" fill="#c6c99c" opacity="0.11"/><polygon points="1493.3,827.3 1500.7,817.5 1510.2,827.3" fill="#c6c99c" opacity="0.23"/><polygon points="1522.0,772.0 1525.9,767.3 1532.5,771.1" fill="#c6c99c" opacity="0.14"/><polygon points="1630.1,804.8 1621.9,805.1 1621.6,800.4 1628.2,799.5" fill="#bfc395" opacity="0.21"/><polygon points="1519.1,730.6 1504.3,726.4 1514.0,721.0 1523.2,723.8" fill="#d3d5ae" opacity="0.12"/><polygon points="1482.3,721.4 1494.9,712.9 1502.2,717.2 1497.5,724.8" fill="#bfc395" opacity="0.26"/><polygon points="1583.8,739.7 1565.1,734.0 1574.1,724.3" fill="#c6c99c" opacity="0.11"/><polygon points="1578.9,859.4 1575.9,851.7 1592.4,854.7" fill="#d3d5ae" opacity="0.28"/><polygon points="1629.8,899.2 1616.6,885.6 1631.4,885.5" fill="#d3d5ae" opacity="0.26"/><polygon points="1566.8,748.7 1552.7,741.8 1569.0,739.4" fill="#cdd0a5" opacity="0.23"/><polygon points="1579.5,848.0 1564.4,853.5 1567.8,839.7" fill="#bfc395" opacity="0.14"/><polygon points="1508.8,780.6 1496.2,767.2 1518.6,771.8" fill="#bfc395" opacity="0.10"/><polygon points="1457.9,891.1 1453.3,889.7 1460.3,886.6 1463.2,889.6" fill="#bfc395" opacity="0.18"/><polygon points="1607.3,882.1 1597.7,879.0 1608.2,877.8" fill="#cdd0a5" opacity="0.14"/><polygon points="1531.5,791.0 1525.8,781.2 1543.3,782.7" fill="#bfc395" opacity="0.14"/><polygon points="1480.2,735.3 1487.5,729.0 1494.3,734.8" fill="#c6c99c" opacity="0.15"/><polygon points="1606.4,768.4 1591.4,767.1 1605.6,759.5" fill="#c6c99c" opacity="0.15"/><polygon points="1563.7,857.4 1567.3,848.5 1575.9,854.9" fill="#c6c99c" opacity="0.18"/><polygon points="1502.7,872.1 1494.1,868.9 1497.3,859.8 1510.0,867.3" fill="#d3d5ae" opacity="0.22"/><polygon points="1524.4,787.1 1521.5,777.3 1532.0,779.2" fill="#bfc395" opacity="0.19"/><polygon points="1480.5,746.6 1470.9,745.9 1474.8,741.7" fill="#bfc395" opacity="0.27"/><polygon points="1517.6,759.6 1521.0,752.6 1529.0,758.7" fill="#c6c99c" opacity="0.24"/><polygon points="1621.0,857.4 1617.6,851.3 1628.4,848.1 1631.0,856.0" fill="#cdd0a5" opacity="0.22"/><polygon points="1620.2,705.4 1628.2,698.2 1634.0,704.3" fill="#d3d5ae" opacity="0.29"/><polygon points="1509.0,723.1 1489.7,718.7 1509.7,714.3" fill="#c6c99c" opacity="0.17"/><polygon points="1482.1,742.0 1490.4,729.4 1501.3,735.0" fill="#c6c99c" opacity="0.13"/><polygon points="1521.4,746.3 1515.8,744.4 1520.0,740.0 1522.9,741.7" fill="#d3d5ae" opacity="0.16"/><polygon points="1528.6,731.2 1515.5,729.0 1530.2,725.6" fill="#bfc395" opacity="0.25"/><polygon points="1620.0,755.6 1611.7,754.8 1609.6,750.4 1618.0,748.3" fill="#c6c99c" opacity="0.26"/><polygon points="1581.1,852.6 1577.8,847.3 1587.6,849.0" fill="#d3d5ae" opacity="0.14"/><polygon points="1497.0,726.0 1485.1,731.9 1474.7,724.7 1486.4,722.9" fill="#cdd0a5" opacity="0.25"/><polygon points="1517.4,748.7 1497.8,744.1 1519.7,735.7" fill="#cdd0a5" opacity="0.11"/><polygon points="1498.9,720.4 1494.7,711.4 1506.9,712.4" fill="#cdd0a5" opacity="0.25"/><polygon points="1661.0,735.5 1652.4,740.4 1644.6,731.6 1656.0,724.1" fill="#cdd0a5" opacity="0.11"/><polygon points="1631.1,734.0 1639.1,727.9 1643.8,731.8" fill="#c6c99c" opacity="0.12"/><polygon points="1598.1,701.9 1586.5,703.4 1587.4,695.8 1602.3,695.8" fill="#c6c99c" opacity="0.24"/><polygon points="1472.5,800.7 1466.3,798.0 1468.1,793.8 1472.6,794.4" fill="#c6c99c" opacity="0.25"/><polygon points="1492.4,866.0 1485.5,871.2 1476.7,862.2 1487.2,860.6" fill="#c6c99c" opacity="0.17"/><polygon points="1488.0,803.9 1473.6,803.0 1482.5,797.2" fill="#c6c99c" opacity="0.18"/><polygon points="1596.1,701.6 1591.7,689.7 1604.9,687.5 1606.2,697.3" fill="#c6c99c" opacity="0.15"/><polygon points="1611.9,807.7 1598.4,806.3 1608.2,801.0" fill="#c6c99c" opacity="0.21"/><polygon points="1621.4,780.1 1619.1,772.2 1629.8,772.9" fill="#c6c99c" opacity="0.19"/><polygon points="1552.8,888.6 1536.8,891.4 1539.6,881.6" fill="#cdd0a5" opacity="0.29"/><polygon points="1515.3,871.2 1498.1,874.6 1502.5,864.3" fill="#cdd0a5" opacity="0.23"/><polygon points="1473.4,746.0 1489.7,739.7 1497.1,753.4" fill="#cdd0a5" opacity="0.14"/><polygon points="1600.3,772.5 1599.1,765.5 1612.9,764.8 1609.3,777.2" fill="#c6c99c" opacity="0.21"/><polygon points="1605.6,839.0 1599.1,843.9 1598.8,836.4" fill="#cdd0a5" opacity="0.14"/><polygon points="1496.2,767.9 1492.1,762.6 1501.4,764.3" fill="#bfc395" opacity="0.23"/><polygon points="1618.3,808.9 1617.4,801.6 1625.2,806.1" fill="#d3d5ae" opacity="0.16"/><polygon points="1466.4,722.5 1461.7,713.6 1473.9,714.2 1477.4,720.1" fill="#c6c99c" opacity="0.13"/><polygon points="1589.9,740.8 1583.0,733.2 1595.8,728.8 1601.7,734.8" fill="#c6c99c" opacity="0.17"/><polygon points="1597.0,895.1 1585.3,897.6 1588.4,890.6" fill="#c6c99c" opacity="0.28"/><polygon points="1460.6,875.2 1446.9,877.1 1449.6,865.8" fill="#c6c99c" opacity="0.27"/><polygon points="1615.1,856.1 1595.2,860.1 1597.3,850.3" fill="#c6c99c" opacity="0.15"/><polygon points="1609.6,702.9 1598.2,702.2 1601.4,694.1 1614.8,694.9" fill="#d3d5ae" opacity="0.16"/><polygon points="1571.0,869.3 1564.5,865.4 1571.2,863.6" fill="#c6c99c" opacity="0.10"/><polygon points="1522.3,706.0 1518.0,701.9 1528.3,703.2" fill="#bfc395" opacity="0.18"/><polygon points="1633.4,873.3 1638.6,862.8 1647.6,866.7 1645.7,874.7" fill="#cdd0a5" opacity="0.24"/><polygon points="1549.3,845.2 1545.3,841.5 1551.8,840.5" fill="#cdd0a5" opacity="0.26"/><polygon points="1476.3,802.3 1483.7,798.2 1489.7,808.1" fill="#d3d5ae" opacity="0.18"/><polygon points="1546.3,820.0 1543.2,812.8 1550.5,813.6" fill="#bfc395" opacity="0.13"/><polygon points="1468.0,816.1 1475.3,812.1 1476.5,818.8" fill="#d3d5ae" opacity="0.20"/><polygon points="1602.7,821.3 1603.5,816.4 1613.7,822.1" fill="#cdd0a5" opacity="0.12"/><polygon points="1618.9,793.4 1609.2,785.5 1626.2,786.1" fill="#c6c99c" opacity="0.21"/><polygon points="1517.3,772.0 1509.0,767.4 1517.6,761.6 1523.1,765.6" fill="#bfc395" opacity="0.26"/><polygon points="1449.6,892.3 1445.5,884.6 1456.0,882.7 1463.7,888.3" fill="#c6c99c" opacity="0.28"/><polygon points="1592.2,815.7 1587.6,813.4 1587.9,809.1 1594.7,810.7" fill="#cdd0a5" opacity="0.13"/><polygon points="1457.7,786.1 1463.9,778.0 1473.0,785.2" fill="#d3d5ae" opacity="0.21"/><polygon points="1541.6,812.9 1534.0,807.7 1544.6,807.5" fill="#d3d5ae" opacity="0.15"/><polygon points="1459.2,832.5 1457.3,825.9 1466.8,828.0" fill="#c6c99c" opacity="0.13"/><polygon points="1591.8,778.6 1578.1,768.9 1592.1,769.6" fill="#cdd0a5" opacity="0.11"/><polygon points="1482.6,897.0 1487.7,887.1 1500.4,890.6" fill="#c6c99c" opacity="0.11"/><polygon points="1608.2,834.9 1597.5,826.7 1611.8,819.0 1620.8,829.3" fill="#cdd0a5" opacity="0.15"/><polygon points="1610.8,759.7 1618.3,750.9 1625.8,755.7" fill="#cdd0a5" opacity="0.12"/><polygon points="1582.2,837.5 1567.1,830.8 1583.7,827.7" fill="#cdd0a5" opacity="0.21"/><polygon points="1545.1,822.0 1538.5,816.8 1551.3,815.4" fill="#c6c99c" opacity="0.27"/><polygon points="1626.2,705.3 1611.6,709.1 1618.5,700.9" fill="#d3d5ae" opacity="0.16"/><polygon points="1508.8,860.8 1511.1,855.3 1518.8,860.9" fill="#c6c99c" opacity="0.20"/><polygon points="1547.5,755.9 1528.3,760.7 1526.4,752.5 1540.4,743.9" fill="#cdd0a5" opacity="0.28"/><polygon points="1456.8,868.2 1461.7,862.5 1469.8,868.6" fill="#d3d5ae" opacity="0.29"/><polygon points="1448.0,760.0 1466.9,753.5 1467.8,764.6" fill="#d3d5ae" opacity="0.24"/><polygon points="1530.7,793.1 1524.4,786.8 1540.0,785.2" fill="#bfc395" opacity="0.12"/><polygon points="1485.0,834.3 1468.9,827.4 1487.0,821.2" fill="#c6c99c" opacity="0.11"/><polygon points="1581.4,866.9 1571.9,867.5 1574.7,861.3" fill="#c6c99c" opacity="0.24"/><polygon points="1595.7,710.9 1586.4,714.4 1590.0,706.8" fill="#d3d5ae" opacity="0.30"/><polygon points="1504.3,782.1 1496.4,780.1 1500.5,773.1" fill="#c6c99c" opacity="0.21"/><polygon points="1511.6,697.1 1519.5,693.3 1518.2,700.0" fill="#bfc395" opacity="0.30"/><polygon points="1557.3,700.0 1546.0,697.1 1553.5,687.0 1569.7,695.5" fill="#c6c99c" opacity="0.22"/><polygon points="1511.3,884.8 1503.1,880.4 1505.9,873.2 1521.4,876.3" fill="#d3d5ae" opacity="0.20"/><polygon points="1570.5,696.2 1574.7,690.6 1579.0,693.1" fill="#c6c99c" opacity="0.22"/><polygon points="1530.0,764.2 1518.6,759.4 1537.7,753.7 1541.7,763.0" fill="#bfc395" opacity="0.19"/><polygon points="1475.7,876.3 1456.5,872.3 1472.1,867.4" fill="#c6c99c" opacity="0.15"/><polygon points="1506.3,870.0 1496.7,867.8 1505.5,862.3 1513.2,865.1" fill="#c6c99c" opacity="0.15"/><polygon points="1481.9,749.8 1471.1,742.0 1481.2,735.6 1490.3,739.1" fill="#d3d5ae" opacity="0.22"/><polygon points="1498.5,852.0 1492.2,841.8 1513.7,844.8" fill="#cdd0a5" opacity="0.17"/><polygon points="1649.5,854.6 1650.6,847.5 1658.2,848.7 1655.5,854.5" fill="#d3d5ae" opacity="0.15"/><polygon points="1585.4,822.8 1574.6,822.8 1579.9,816.4 1593.3,819.0" fill="#cdd0a5" opacity="0.23"/><polygon points="1492.5,690.3 1509.4,684.5 1516.6,693.3 1507.1,699.8" fill="#c6c99c" opacity="0.29"/><polygon points="1512.8,859.1 1525.8,848.4 1536.1,858.3" fill="#bfc395" opacity="0.11"/><polygon points="1534.8,757.6 1516.2,758.8 1521.4,746.7 1536.7,746.8" fill="#cdd0a5" opacity="0.23"/><polygon points="1484.0,848.8 1472.2,849.9 1476.1,841.0" fill="#c6c99c" opacity="0.27"/><polygon points="1572.0,818.7 1575.2,814.2 1584.6,817.8" fill="#d3d5ae" opacity="0.23"/><polygon points="1523.4,747.9 1513.1,748.4 1515.7,741.1" fill="#bfc395" opacity="0.14"/><polygon points="1537.4,730.5 1538.9,722.8 1553.4,726.9" fill="#d3d5ae" opacity="0.27"/><polygon points="1476.0,892.4 1471.7,887.1 1477.2,884.5 1483.6,891.1" fill="#cdd0a5" opacity="0.11"/><polygon points="1488.8,751.6 1491.8,747.6 1502.4,750.8 1501.4,755.4" fill="#cdd0a5" opacity="0.27"/><polygon points="1550.4,713.2 1544.8,708.9 1554.1,710.6" fill="#d3d5ae" opacity="0.23"/><polygon points="1612.5,766.1 1615.7,757.9 1623.7,764.2" fill="#c6c99c" opacity="0.12"/><polygon points="1448.1,828.8 1438.6,817.9 1460.0,819.3" fill="#cdd0a5" opacity="0.18"/><polygon points="1510.8,770.5 1503.8,762.1 1522.6,768.2" fill="#d3d5ae" opacity="0.17"/><polygon points="1539.7,709.5 1526.9,712.0 1534.4,704.0" fill="#bfc395" opacity="0.12"/><polygon points="1633.6,841.6 1619.9,833.3 1644.5,833.1" fill="#c6c99c" opacity="0.30"/><polygon points="1539.7,803.2 1526.7,793.4 1550.9,790.3" fill="#cdd0a5" opacity="0.11"/><polygon points="1517.2,788.6 1511.2,790.7 1502.9,787.7 1510.0,782.2" fill="#bfc395" opacity="0.29"/><polygon points="1498.5,804.1 1488.1,802.0 1492.9,798.4 1498.4,799.1" fill="#d3d5ae" opacity="0.21"/><polygon points="1440.7,868.1 1456.3,864.7 1460.4,872.5" fill="#cdd0a5" opacity="0.29"/><polygon points="1486.6,711.4 1482.7,704.4 1490.6,703.3 1492.7,708.6" fill="#c6c99c" opacity="0.12"/><polygon points="1510.2,725.0 1500.1,726.5 1507.7,720.5" fill="#c6c99c" opacity="0.29"/><polygon points="1464.5,823.3 1464.9,813.9 1472.6,820.6" fill="#bfc395" opacity="0.20"/><polygon points="1484.2,879.7 1474.6,876.8 1482.6,872.6" fill="#cdd0a5" opacity="0.26"/><polygon points="1501.0,876.3 1495.1,875.3 1499.2,869.0" fill="#bfc395" opacity="0.29"/><polygon points="1624.8,874.7 1613.2,878.0 1612.3,869.4" fill="#cdd0a5" opacity="0.19"/><polygon points="1605.9,859.7 1618.9,852.7 1624.0,861.3" fill="#c6c99c" opacity="0.12"/><polygon points="1627.3,838.8 1617.2,830.2 1635.0,829.4" fill="#bfc395" opacity="0.26"/><polygon points="1594.1,759.7 1585.2,756.9 1593.8,752.6" fill="#cdd0a5" opacity="0.27"/><polygon points="1570.0,833.4 1558.7,829.1 1569.3,825.7" fill="#bfc395" opacity="0.19"/><polygon points="1483.1,762.6 1481.3,748.6 1492.3,757.0" fill="#cdd0a5" opacity="0.21"/><polygon points="1636.2,877.9 1626.8,881.6 1629.3,874.5" fill="#cdd0a5" opacity="0.20"/><polygon points="1585.0,847.4 1573.5,847.7 1579.2,842.0" fill="#bfc395" opacity="0.16"/><polygon points="1633.8,820.7 1623.8,812.0 1637.4,805.5 1641.9,815.9" fill="#c6c99c" opacity="0.16"/><polygon points="1484.3,793.6 1493.1,789.8 1494.6,795.1" fill="#bfc395" opacity="0.24"/><polygon points="1646.1,864.2 1641.3,858.6 1647.2,854.8 1653.7,861.0" fill="#bfc395" opacity="0.21"/><polygon points="1546.2,734.5 1540.4,734.4 1542.0,730.4 1547.3,729.8" fill="#c6c99c" opacity="0.21"/><polygon points="1592.1,769.6 1578.9,766.5 1588.9,759.9" fill="#cdd0a5" opacity="0.26"/><polygon points="1635.1,785.4 1631.4,778.5 1643.1,780.7" fill="#bfc395" opacity="0.21"/><polygon points="1601.0,795.5 1607.6,787.8 1612.6,795.2" fill="#cdd0a5" opacity="0.28"/><polygon points="1649.1,741.5 1637.8,733.8 1656.7,729.2" fill="#bfc395" opacity="0.28"/><polygon points="1648.1,791.9 1650.8,783.2 1665.5,791.2" fill="#c6c99c" opacity="0.21"/><polygon points="1641.6,882.8 1622.9,888.4 1626.9,879.2" fill="#d3d5ae" opacity="0.26"/><polygon points="1601.6,812.7 1595.8,804.4 1609.7,807.8" fill="#c6c99c" opacity="0.18"/><polygon points="1627.2,880.3 1610.9,878.5 1628.5,867.6" fill="#bfc395" opacity="0.30"/><polygon points="1455.0,761.1 1447.9,758.9 1447.4,752.9 1460.9,753.4" fill="#d3d5ae" opacity="0.25"/><polygon points="1521.3,715.9 1501.1,711.9 1508.0,704.2 1521.7,703.5" fill="#d3d5ae" opacity="0.22"/><polygon points="1627.8,791.5 1614.6,796.4 1612.2,786.3 1619.9,782.0" fill="#d3d5ae" opacity="0.18"/><polygon points="1645.9,782.4 1635.6,778.6 1649.4,772.4" fill="#cdd0a5" opacity="0.12"/><polygon points="1504.6,864.1 1483.5,863.4 1495.1,857.8" fill="#d3d5ae" opacity="0.11"/><polygon points="1631.2,820.1 1629.9,809.5 1647.5,814.1" fill="#bfc395" opacity="0.27"/><polygon points="1640.1,875.4 1631.4,872.0 1639.8,869.9" fill="#c6c99c" opacity="0.26"/><polygon points="1472.8,715.0 1473.9,706.4 1487.8,708.9" fill="#d3d5ae" opacity="0.13"/><polygon points="1583.3,885.1 1569.8,887.2 1571.7,878.0" fill="#cdd0a5" opacity="0.21"/><polygon points="1534.8,731.0 1533.8,724.2 1546.8,726.6" fill="#c6c99c" opacity="0.25"/><polygon points="1464.1,777.2 1449.4,777.8 1455.0,771.6" fill="#bfc395" opacity="0.18"/><polygon points="1567.9,783.3 1563.5,776.9 1573.8,777.5" fill="#c6c99c" opacity="0.16"/><polygon points="1534.6,832.9 1518.0,837.4 1509.9,827.3 1527.2,824.5" fill="#bfc395" opacity="0.27"/><polygon points="1476.7,700.0 1468.5,701.2 1471.4,693.2" fill="#cdd0a5" opacity="0.28"/><polygon points="1641.8,743.3 1642.5,733.6 1656.7,730.8 1655.6,739.8" fill="#cdd0a5" opacity="0.16"/></g><g clip-path="url(#cpS)"><polygon points="1440.4,632.9 1441.8,626.4 1453.1,629.1" fill="#cdd0a5" opacity="0.12"/><polygon points="1419.6,668.9 1410.9,668.9 1413.0,664.1 1419.4,663.3" fill="#cdd0a5" opacity="0.22"/><polygon points="1316.4,636.4 1318.8,628.2 1330.8,629.1 1327.5,635.9" fill="#cdd0a5" opacity="0.22"/><polygon points="1452.9,621.1 1443.3,626.9 1444.5,618.0" fill="#cdd0a5" opacity="0.14"/><polygon points="1387.2,695.1 1376.5,688.4 1391.6,683.9" fill="#bfc395" opacity="0.11"/><polygon points="1380.5,680.2 1371.6,677.7 1383.5,675.4" fill="#c6c99c" opacity="0.13"/><polygon points="1346.5,632.8 1332.2,629.8 1333.7,622.5 1345.1,624.9" fill="#bfc395" opacity="0.23"/><polygon points="1354.7,651.1 1347.4,649.6 1352.2,644.2 1361.1,647.4" fill="#c6c99c" opacity="0.28"/><polygon points="1361.2,685.7 1368.0,674.7 1376.8,685.1" fill="#d3d5ae" opacity="0.17"/><polygon points="1389.8,645.1 1397.1,635.0 1410.0,643.1" fill="#cdd0a5" opacity="0.18"/><polygon points="1393.3,680.6 1402.0,675.7 1412.1,682.8" fill="#c6c99c" opacity="0.13"/><polygon points="1397.4,652.8 1403.9,648.9 1408.1,656.5" fill="#cdd0a5" opacity="0.21"/><polygon points="1379.2,624.5 1372.5,618.4 1384.2,618.5" fill="#bfc395" opacity="0.21"/><polygon points="1422.6,679.5 1420.5,673.4 1428.7,677.9" fill="#bfc395" opacity="0.11"/><polygon points="1351.5,673.2 1342.9,670.9 1347.5,666.9" fill="#c6c99c" opacity="0.15"/><polygon points="1371.1,622.7 1363.4,625.6 1364.4,619.3" fill="#bfc395" opacity="0.24"/><polygon points="1443.5,678.7 1447.8,670.7 1455.6,680.5" fill="#c6c99c" opacity="0.12"/><polygon points="1333.0,633.5 1336.9,626.7 1341.4,632.0" fill="#bfc395" opacity="0.18"/><polygon points="1435.2,690.1 1430.4,683.5 1437.4,683.2" fill="#bfc395" opacity="0.16"/><polygon points="1294.4,667.5 1289.6,659.0 1302.6,662.4" fill="#cdd0a5" opacity="0.10"/><polygon points="1433.5,667.4 1415.8,670.5 1413.7,659.4" fill="#d3d5ae" opacity="0.23"/><polygon points="1285.6,656.5 1290.6,648.3 1298.4,654.3" fill="#d3d5ae" opacity="0.27"/><polygon points="1306.4,638.0 1311.9,632.2 1318.5,637.4" fill="#c6c99c" opacity="0.27"/><polygon points="1372.2,642.2 1356.3,637.9 1368.3,636.2" fill="#bfc395" opacity="0.28"/><polygon points="1362.4,640.4 1351.5,642.2 1344.0,636.7 1351.8,631.1" fill="#d3d5ae" opacity="0.28"/><polygon points="1407.4,623.6 1410.7,619.0 1421.3,621.3 1416.6,628.1" fill="#bfc395" opacity="0.27"/><polygon points="1381.2,643.4 1384.2,639.9 1393.4,641.6 1389.4,646.6" fill="#c6c99c" opacity="0.22"/><polygon points="1397.8,653.1 1403.6,650.2 1408.1,650.8 1404.1,655.7" fill="#bfc395" opacity="0.18"/><polygon points="1411.7,620.9 1413.5,613.5 1420.1,615.7 1423.1,620.8" fill="#c6c99c" opacity="0.24"/><polygon points="1413.3,636.0 1417.4,630.2 1421.7,635.6" fill="#d3d5ae" opacity="0.11"/><polygon points="1335.3,638.3 1326.2,639.7 1331.0,633.9" fill="#c6c99c" opacity="0.27"/><polygon points="1369.2,659.1 1376.4,651.3 1386.4,654.5 1385.1,663.9" fill="#c6c99c" opacity="0.18"/><polygon points="1395.6,681.8 1386.6,677.2 1401.7,673.7 1406.9,680.4" fill="#c6c99c" opacity="0.16"/><polygon points="1351.0,656.8 1340.7,658.6 1343.6,651.3" fill="#bfc395" opacity="0.25"/><polygon points="1382.1,681.5 1376.4,683.9 1374.4,678.9 1382.5,677.4" fill="#bfc395" opacity="0.11"/><polygon points="1374.6,627.0 1381.7,622.7 1381.7,627.2" fill="#bfc395" opacity="0.16"/><polygon points="1370.5,645.5 1378.3,642.1 1380.0,649.6" fill="#cdd0a5" opacity="0.16"/><polygon points="1373.0,642.4 1365.3,641.5 1366.2,635.6 1372.3,636.8" fill="#cdd0a5" opacity="0.26"/><polygon points="1305.5,676.5 1296.6,676.6 1302.1,671.8" fill="#d3d5ae" opacity="0.13"/><polygon points="1440.5,646.4 1436.2,639.6 1446.8,642.3" fill="#cdd0a5" opacity="0.12"/><polygon points="1431.9,658.6 1440.8,653.3 1451.2,660.4" fill="#cdd0a5" opacity="0.26"/><polygon points="1403.4,653.6 1392.5,654.3 1396.7,647.3" fill="#cdd0a5" opacity="0.12"/><polygon points="1390.0,660.0 1379.2,652.0 1394.4,648.5" fill="#bfc395" opacity="0.20"/><polygon points="1338.3,687.8 1341.8,682.8 1351.8,682.1 1348.1,689.7" fill="#d3d5ae" opacity="0.23"/><polygon points="1336.7,689.1 1318.0,683.0 1334.3,676.1" fill="#c6c99c" opacity="0.20"/><polygon points="1446.2,680.6 1435.3,680.2 1446.5,675.9" fill="#cdd0a5" opacity="0.26"/><polygon points="1304.2,644.0 1294.4,638.9 1308.7,633.7" fill="#cdd0a5" opacity="0.25"/><polygon points="1304.5,658.4 1294.6,657.4 1302.2,650.3 1309.9,651.9" fill="#c6c99c" opacity="0.11"/><polygon points="1377.6,687.6 1367.0,690.7 1371.3,683.7" fill="#cdd0a5" opacity="0.13"/><polygon points="1441.0,668.6 1444.4,664.7 1447.1,670.5" fill="#cdd0a5" opacity="0.17"/><polygon points="1417.2,629.8 1410.5,623.6 1424.3,619.9" fill="#cdd0a5" opacity="0.22"/><polygon points="1310.2,629.6 1316.0,620.2 1324.5,625.1" fill="#cdd0a5" opacity="0.14"/><polygon points="1405.1,635.7 1399.0,632.6 1403.1,630.2 1406.9,631.8" fill="#bfc395" opacity="0.17"/><polygon points="1364.7,643.1 1374.7,633.9 1382.1,641.3" fill="#bfc395" opacity="0.18"/><polygon points="1319.3,626.8 1326.8,619.3 1332.8,624.4" fill="#bfc395" opacity="0.15"/><polygon points="1311.0,649.4 1306.6,643.3 1316.2,645.4" fill="#d3d5ae" opacity="0.11"/><polygon points="1303.1,684.6 1302.5,674.1 1312.7,682.7" fill="#c6c99c" opacity="0.22"/><polygon points="1313.8,631.0 1323.5,619.3 1332.4,621.2 1331.9,631.1" fill="#d3d5ae" opacity="0.13"/><polygon points="1328.1,653.0 1336.4,643.4 1341.0,650.5" fill="#d3d5ae" opacity="0.24"/><polygon points="1325.1,624.6 1325.6,621.1 1336.2,622.0 1333.5,626.0" fill="#d3d5ae" opacity="0.27"/></g><g clip-path="url(#cpD)"><polygon points="1295.1,863.0 1284.5,863.2 1282.5,853.4 1293.7,853.5" fill="#cdd0a5" opacity="0.33"/><polygon points="1254.1,856.7 1251.8,852.2 1261.3,852.9" fill="#bfc395" opacity="0.33"/><polygon points="1221.0,885.9 1211.1,893.3 1207.4,886.1 1216.2,882.8" fill="#bfc395" opacity="0.22"/><polygon points="1183.7,877.0 1179.8,872.2 1185.9,872.0" fill="#c6c99c" opacity="0.36"/><polygon points="1254.3,897.2 1237.9,892.3 1246.2,886.9 1258.4,893.1" fill="#d3d5ae" opacity="0.33"/><polygon points="1180.7,897.6 1173.0,892.5 1176.6,887.9 1184.7,895.2" fill="#c6c99c" opacity="0.21"/><polygon points="1183.3,862.2 1181.7,851.6 1194.1,855.3" fill="#bfc395" opacity="0.17"/><polygon points="1236.8,875.7 1231.8,862.9 1246.1,869.2" fill="#bfc395" opacity="0.20"/><polygon points="1268.9,881.6 1257.7,887.5 1257.1,877.5" fill="#c6c99c" opacity="0.19"/><polygon points="1254.1,892.2 1258.3,888.1 1262.3,888.1 1261.4,893.4" fill="#c6c99c" opacity="0.21"/><polygon points="1268.5,860.8 1257.7,866.1 1253.6,855.7 1262.9,851.1" fill="#bfc395" opacity="0.25"/><polygon points="1164.5,866.8 1160.3,854.9 1178.7,854.4 1174.2,867.5" fill="#cdd0a5" opacity="0.19"/><polygon points="1266.8,888.5 1255.0,892.6 1247.3,889.4 1262.3,884.8" fill="#d3d5ae" opacity="0.21"/><polygon points="1202.9,893.7 1214.8,883.8 1217.0,894.3" fill="#cdd0a5" opacity="0.33"/><polygon points="1196.9,870.1 1178.7,869.2 1194.1,862.7" fill="#cdd0a5" opacity="0.33"/><polygon points="1207.7,859.3 1198.3,854.9 1208.3,846.1" fill="#d3d5ae" opacity="0.17"/><polygon points="1199.1,864.5 1197.3,859.3 1209.6,862.2" fill="#c6c99c" opacity="0.37"/><polygon points="1246.9,874.9 1242.6,861.7 1259.3,865.8" fill="#bfc395" opacity="0.26"/><polygon points="1268.7,889.4 1255.8,883.3 1266.8,879.5" fill="#bfc395" opacity="0.37"/><polygon points="1238.2,867.4 1234.2,857.5 1249.7,854.7 1249.8,863.1" fill="#d3d5ae" opacity="0.16"/><polygon points="1177.1,864.9 1159.3,870.3 1166.7,860.2" fill="#c6c99c" opacity="0.30"/><polygon points="1132.8,867.7 1118.0,867.9 1127.9,861.8" fill="#d3d5ae" opacity="0.19"/><polygon points="1269.5,879.3 1250.5,866.9 1267.2,862.7" fill="#d3d5ae" opacity="0.23"/><polygon points="1183.4,878.9 1172.5,880.7 1172.0,873.0" fill="#c6c99c" opacity="0.17"/><polygon points="1294.3,885.5 1282.7,887.1 1287.4,880.7" fill="#bfc395" opacity="0.22"/><polygon points="1190.1,889.4 1195.6,883.0 1197.1,888.0" fill="#cdd0a5" opacity="0.21"/><polygon points="1168.8,858.4 1158.1,853.5 1165.9,851.0" fill="#c6c99c" opacity="0.33"/><polygon points="1195.9,853.2 1192.5,846.9 1206.0,842.2 1204.5,850.3" fill="#d3d5ae" opacity="0.21"/><polygon points="1263.2,852.2 1254.8,846.4 1262.6,843.0" fill="#c6c99c" opacity="0.22"/><polygon points="1156.6,872.0 1144.5,866.5 1161.1,866.4" fill="#bfc395" opacity="0.20"/><polygon points="1244.6,874.3 1240.7,864.9 1256.5,865.1" fill="#bfc395" opacity="0.17"/><polygon points="1178.0,859.8 1170.9,850.2 1189.2,852.2" fill="#c6c99c" opacity="0.28"/><polygon points="1192.4,870.6 1201.5,866.9 1213.5,868.4 1202.6,877.0" fill="#cdd0a5" opacity="0.22"/><polygon points="1156.0,861.6 1147.2,861.0 1150.7,855.5" fill="#cdd0a5" opacity="0.20"/><polygon points="1261.3,873.0 1251.3,864.8 1265.4,861.0" fill="#cdd0a5" opacity="0.28"/><polygon points="1179.9,857.9 1171.7,852.6 1181.9,846.6 1188.1,852.3" fill="#bfc395" opacity="0.34"/><polygon points="1246.4,883.3 1241.2,878.2 1249.3,875.1 1251.7,881.1" fill="#d3d5ae" opacity="0.35"/><polygon points="1261.8,878.2 1265.6,867.1 1278.3,875.5" fill="#c6c99c" opacity="0.38"/><polygon points="1274.0,883.4 1273.0,875.0 1281.1,874.6 1285.9,882.2" fill="#c6c99c" opacity="0.37"/><polygon points="1265.5,890.1 1263.7,877.2 1283.3,880.3" fill="#d3d5ae" opacity="0.32"/><polygon points="1268.9,877.3 1283.3,868.2 1287.1,878.8" fill="#bfc395" opacity="0.24"/><polygon points="1293.3,890.9 1284.9,895.6 1279.7,892.2 1284.2,888.5" fill="#cdd0a5" opacity="0.25"/><polygon points="1156.6,868.8 1160.4,858.4 1169.7,869.1" fill="#d3d5ae" opacity="0.36"/><polygon points="1193.8,897.1 1188.7,898.0 1187.7,892.5 1197.2,892.8" fill="#bfc395" opacity="0.30"/><polygon points="1155.1,876.7 1138.4,880.7 1136.7,870.9 1149.9,866.6" fill="#bfc395" opacity="0.21"/><polygon points="1242.5,889.3 1236.1,888.4 1235.4,884.6 1244.7,882.8" fill="#c6c99c" opacity="0.35"/><polygon points="1257.0,885.3 1243.2,886.0 1243.5,879.4 1255.2,879.7" fill="#d3d5ae" opacity="0.37"/><polygon points="1186.3,886.1 1183.0,881.3 1191.8,881.5" fill="#cdd0a5" opacity="0.20"/><polygon points="1188.3,883.3 1174.4,877.5 1183.2,868.6 1196.0,876.2" fill="#d3d5ae" opacity="0.40"/><polygon points="1179.1,885.1 1186.3,874.1 1192.6,884.6" fill="#cdd0a5" opacity="0.21"/><polygon points="1209.7,863.0 1212.2,850.9 1231.0,859.3" fill="#d3d5ae" opacity="0.38"/><polygon points="1199.8,894.8 1185.7,893.3 1188.6,886.4" fill="#cdd0a5" opacity="0.37"/><polygon points="1219.4,884.8 1209.7,875.6 1223.2,875.4" fill="#c6c99c" opacity="0.17"/><polygon points="1259.2,869.4 1253.2,864.6 1264.5,861.9 1265.2,866.9" fill="#c6c99c" opacity="0.23"/><polygon points="1162.7,891.1 1154.1,888.4 1162.6,886.0" fill="#c6c99c" opacity="0.34"/><polygon points="1202.3,885.3 1210.6,881.1 1214.6,885.4" fill="#cdd0a5" opacity="0.37"/><polygon points="1142.1,891.0 1140.5,881.8 1147.6,877.5 1152.9,889.4" fill="#d3d5ae" opacity="0.25"/><polygon points="1237.1,887.6 1233.6,881.3 1243.0,877.2 1252.9,885.2" fill="#bfc395" opacity="0.27"/><polygon points="1239.9,857.7 1229.5,859.6 1227.6,853.3 1237.5,852.2" fill="#cdd0a5" opacity="0.36"/><polygon points="1289.8,864.7 1276.8,857.2 1290.0,849.8" fill="#cdd0a5" opacity="0.17"/><polygon points="1136.9,853.6 1139.6,839.2 1153.7,847.7" fill="#c6c99c" opacity="0.24"/><polygon points="1165.7,881.0 1158.0,878.2 1170.6,871.7 1177.6,879.8" fill="#d3d5ae" opacity="0.28"/><polygon points="1211.0,878.0 1197.0,875.5 1194.6,868.3 1209.5,869.8" fill="#d3d5ae" opacity="0.30"/><polygon points="1243.2,881.5 1237.8,876.0 1249.8,872.0 1254.3,877.3" fill="#bfc395" opacity="0.29"/><polygon points="1268.7,877.4 1261.2,877.3 1259.8,874.3 1270.6,873.2" fill="#cdd0a5" opacity="0.39"/><polygon points="1225.5,893.1 1226.7,887.0 1239.9,889.3 1233.8,897.1" fill="#c6c99c" opacity="0.28"/><polygon points="1281.0,881.9 1284.1,877.4 1293.2,879.4 1292.2,884.5" fill="#cdd0a5" opacity="0.38"/><polygon points="1194.4,874.3 1190.6,866.3 1207.8,872.5" fill="#cdd0a5" opacity="0.29"/><polygon points="1246.6,870.1 1238.5,867.5 1242.3,862.9 1249.4,865.6" fill="#bfc395" opacity="0.21"/><polygon points="1185.7,849.5 1197.0,840.2 1199.0,851.1" fill="#d3d5ae" opacity="0.25"/><polygon points="1272.5,897.2 1262.7,897.1 1263.3,891.6 1271.5,889.8" fill="#d3d5ae" opacity="0.39"/><polygon points="1155.1,891.8 1164.2,882.3 1170.2,894.9" fill="#c6c99c" opacity="0.39"/><polygon points="1231.8,856.9 1216.2,859.2 1224.6,849.3" fill="#d3d5ae" opacity="0.25"/><polygon points="1231.7,894.0 1253.5,888.4 1252.4,897.4" fill="#cdd0a5" opacity="0.30"/><polygon points="1155.6,852.0 1148.8,851.7 1152.0,847.0 1158.6,849.2" fill="#cdd0a5" opacity="0.20"/><polygon points="1185.9,862.9 1176.2,864.1 1173.5,859.3 1186.3,858.9" fill="#cdd0a5" opacity="0.30"/><polygon points="1208.6,886.4 1206.7,880.8 1213.2,882.1" fill="#d3d5ae" opacity="0.24"/><polygon points="1130.7,889.6 1117.5,876.2 1138.0,879.2" fill="#d3d5ae" opacity="0.19"/><polygon points="1224.7,847.0 1240.8,844.9 1240.9,853.7" fill="#cdd0a5" opacity="0.35"/><polygon points="1206.1,857.3 1200.2,846.0 1218.7,851.0" fill="#cdd0a5" opacity="0.15"/></g><g clip-path="url(#cpJ)"><polygon points="856.3,766.5 864.3,757.9 868.3,768.5" fill="#c6c99c" opacity="0.24"/><polygon points="824.6,784.6 830.9,777.9 842.5,782.7" fill="#c6c99c" opacity="0.31"/><polygon points="850.5,751.8 854.6,743.1 860.9,746.2" fill="#c6c99c" opacity="0.34"/><polygon points="845.2,749.3 845.2,745.3 859.2,749.1 853.3,752.7" fill="#cdd0a5" opacity="0.30"/><polygon points="830.1,743.0 822.5,746.5 813.5,743.3 824.3,739.0" fill="#c6c99c" opacity="0.36"/><polygon points="827.8,778.7 820.9,776.4 828.4,772.7 831.6,775.6" fill="#c6c99c" opacity="0.29"/><polygon points="814.6,750.8 821.9,744.0 826.0,751.2" fill="#cdd0a5" opacity="0.24"/><polygon points="828.1,793.2 823.3,786.0 835.9,785.5 835.2,790.2" fill="#d3d5ae" opacity="0.22"/><polygon points="834.0,798.1 834.4,791.2 840.8,796.3" fill="#c6c99c" opacity="0.25"/><polygon points="822.2,766.3 817.7,763.1 823.8,760.6 826.6,763.5" fill="#cdd0a5" opacity="0.25"/><polygon points="848.1,793.5 854.8,787.4 864.4,794.3" fill="#cdd0a5" opacity="0.36"/><polygon points="815.7,751.3 824.5,744.8 828.1,750.9 825.1,756.3" fill="#c6c99c" opacity="0.26"/><polygon points="806.3,786.2 795.5,779.9 808.4,776.2 818.3,783.4" fill="#c6c99c" opacity="0.40"/><polygon points="814.9,778.5 818.0,775.0 824.8,775.0 820.6,781.6" fill="#d3d5ae" opacity="0.39"/><polygon points="797.9,792.1 804.0,787.5 806.8,792.9" fill="#bfc395" opacity="0.39"/><polygon points="810.4,772.2 818.2,765.9 822.1,774.1" fill="#bfc395" opacity="0.25"/><polygon points="823.4,780.9 821.5,776.9 828.7,775.3 829.6,779.4" fill="#d3d5ae" opacity="0.32"/><polygon points="848.3,767.0 854.6,765.0 857.8,770.4" fill="#bfc395" opacity="0.35"/><polygon points="803.8,738.6 816.7,734.7 816.3,741.2" fill="#c6c99c" opacity="0.26"/><polygon points="853.0,800.9 847.7,798.0 850.9,794.4 857.7,794.7" fill="#bfc395" opacity="0.36"/><polygon points="815.9,793.6 808.0,792.7 808.2,785.6 819.4,787.3" fill="#bfc395" opacity="0.31"/><polygon points="821.8,748.3 824.1,745.2 828.4,746.6" fill="#d3d5ae" opacity="0.28"/><polygon points="814.5,758.1 804.6,755.5 813.8,749.8" fill="#cdd0a5" opacity="0.31"/><polygon points="852.4,739.9 849.1,734.1 866.7,734.9" fill="#d3d5ae" opacity="0.22"/><polygon points="849.0,760.7 859.4,755.9 858.6,763.2" fill="#c6c99c" opacity="0.26"/><polygon points="853.6,794.2 854.1,789.5 861.1,791.9" fill="#c6c99c" opacity="0.38"/><polygon points="837.2,738.8 828.3,740.6 830.2,735.3" fill="#cdd0a5" opacity="0.36"/><polygon points="847.7,795.4 840.0,796.2 842.3,791.1" fill="#d3d5ae" opacity="0.25"/><polygon points="830.3,772.0 828.1,760.7 837.5,765.1" fill="#d3d5ae" opacity="0.29"/><polygon points="818.2,799.2 819.0,796.5 823.6,796.3 824.3,800.2" fill="#cdd0a5" opacity="0.28"/><polygon points="809.7,742.2 809.2,735.3 818.6,736.1" fill="#bfc395" opacity="0.32"/><polygon points="801.9,763.4 800.0,758.6 809.4,754.5 815.6,765.5" fill="#cdd0a5" opacity="0.20"/><polygon points="859.4,763.4 849.7,763.3 852.3,759.7" fill="#d3d5ae" opacity="0.35"/><polygon points="848.6,751.5 849.9,746.9 853.7,750.0" fill="#c6c99c" opacity="0.35"/><polygon points="835.8,766.5 839.4,762.8 845.4,766.2" fill="#c6c99c" opacity="0.28"/><polygon points="835.2,770.7 835.9,762.1 851.2,765.1" fill="#bfc395" opacity="0.26"/><polygon points="823.7,784.2 807.7,785.1 817.7,777.5" fill="#bfc395" opacity="0.33"/><polygon points="866.6,746.3 862.2,744.5 865.9,740.9 870.0,744.0" fill="#d3d5ae" opacity="0.32"/><polygon points="847.6,790.4 844.7,786.3 854.7,786.5" fill="#d3d5ae" opacity="0.29"/><polygon points="835.0,777.7 839.4,771.5 847.3,774.0" fill="#cdd0a5" opacity="0.20"/></g>
<path fill="#75cdf0" d="M473,235 L885,235 L891,239 L893,235 L899,235 L907,248 L903,254 L910,253 L908,259 L897,262 L893,266 L903,269 L905,281 L909,285 L905,289 L909,297 L921,298 L921,300 L897,301 L889,308 L889,318 L881,320 L879,332 L873,322 L867,311 L838,313 L828,320 L826,336 L834,343 L820,338 L814,330 L780,334 L766,340 L757,350 L757,371 L764,373 L766,389 L759,395 L743,407 L741,387 L751,383 L745,381 L743,371 L735,369 L727,367 L723,389 L720,400 L714,415 L702,431 L697,435 L699,438 L698,443 L703,446 L708,452 L708,455 L704,454 L697,450 L690,447 L685,448 L684,451 L690,454 L697,458 L703,463 L708,468 L707,470 L700,468 L692,464 L683,460 L675,462 L674,465 L679,469 L690,472 L697,473 L704,474 L706,477 L697,478 L688,478 L680,476 L671,475 L669,475 L636,494 L600,505 L595,507 L593,519 L592,554 L587,562 L576,570 L550,576 L536,588 L530,599 L511,610 L470,602 L470,589 L444,588 L451,608 L457,624 L457,643 L463,658 L441,656 L410,662 L395,652 L378,645 L378,527 L398,521 L419,527 L439,528 L441,521 L469,514 L485,513 L493,517 L512,513 L536,517 L566,505 L568,499 L584,489 L586,476 L566,473 L550,466 L566,461 L562,450 L576,446 L580,438 L593,420 L599,403 L599,389 L595,379 L576,365 L548,364 L542,373 L536,374 L528,369 L530,363 L540,354 L540,346 L536,334 L530,326 L516,314 L508,310 L512,309 L530,314 L518,298 L516,286 L520,281 L508,269 L504,259 L495,250 L477,243 Z"/>
<path fill="#75cdf0" d="M378,265 L388,274 L403,277 L404,290 L395,300 L399,310 L394,322 L395,330 L389,336 L393,345 L378,338 Z"/>
<path fill="#75cdf0" d="M378,473 L390,467 L412,460 L405,472 L398,481 L392,488 L378,488 Z"/>
<path fill="#75cdf0" d="M378,716 L397,724 L410,726 L419,738 L419,745 L432,751 L438,764 L435,770 L448,786 L454,798 L473,808 L476,820 L473,839 L480,850 L490,860 L494,868 L488,866 L476,856 L473,895 L378,895 Z"/>
<path fill="#75cdf0" d="M953,235 L1003,235 L1010,242 L1020,245 L1033,243 L1036,247 L1038,235 L1271,235 L1258,241 L1242,247 L1225,258 L1217,270 L1188,277 L1163,285 L1133,295 L1124,290 L1118,280 L1103,281 L1097,271 L1112,266 L1105,250 L1099,241 L1093,241 L1088,263 L1062,259 L1054,269 L1041,277 L1025,280 L1021,285 L1013,290 L1015,295 L1007,292 L988,291 L987,285 L1000,276 L999,263 L994,263 L985,267 L969,259 L961,260 L959,255 L949,257 L954,249 Z"/>
<path fill="#e8e9cf" d="M997,257 a5,5 0 1,0 10,0 a5,5 0 1,0 -10,0 Z"/>
<path fill="#75cdf0" d="M1312,235 L1319,252 L1325,262 L1350,268 L1367,258 L1377,247 L1379,235 Z"/>
<path fill="#75cdf0" d="M1119,302 L1128,298 L1134,303 L1142,300 L1150,307 L1147,316 L1140,310 L1128,309 Z"/>
<path fill="#75cdf0" d="M1054,895 L1060,884 L1052,875 L1045,865 L1049,859 L1067,851 L1077,847 L1086,840 L1101,841 L1107,838 L1115,845 L1113,850 L1104,854 L1106,869 L1110,884 L1118,895 Z"/>
<path fill="#75cdf0" d="M1125,895 L1131,884 L1137,866 L1146,865 L1147,872 L1141,882 L1143,895 Z"/>
<path fill="#75cdf0" d="M1150,895 L1152,880 L1156,874 L1162,882 L1164,895 Z"/>
<path fill="#75cdf0" d="M917,714 L925,719 L935,723 L942,728 L938,731 L928,726 L919,719 Z"/>
<path fill="#75cdf0" d="M797,795 L803,792 L815,793 L821,797 L814,799 L804,798 L798,800 Z"/>
<path fill="#75cdf0" d="M813,773 L818,766 L826,762 L823,769 L815,774 Z"/>
<path fill="#75cdf0" d="M976,856 L978,846 L983,840 L987,837 L985,846 L980,858 Z"/>
<path fill="#75cdf0" d="M892,836 L895,828 L900,824 L898,833 L894,838 Z"/>
<path fill="#75cdf0" d="M1056,708 L1058,704 L1061,705 L1059,709 Z"/>
<path fill="#75cdf0" d="M1261,779 L1268,775 L1281,770 L1292,765 L1296,760 L1301,758 L1303,761 L1299,767 L1287,772 L1272,778 L1265,780 Z"/>
<path fill="#75cdf0" d="M1239,712 L1242,704 L1246,705 L1244,714 Z"/>
<path fill="#75cdf0" d="M1453,309 L1457,305 L1462,306 L1459,311 Z"/>
<path fill="#75cdf0" d="M1065,328 L1068,327 L1070,334 L1067,335 Z"/>
<path fill="#e7eacb" d="M728,361 L729,352 L733,349 L736,352 L734,360 Z"/>
<path fill="#e7eacb" d="M747,335 L752,332 L760,330 L761,332 L753,335 L748,337 Z"/>
<path fill="#e7eacb" d="M766,330 L772,328 L774,329 L768,331 Z"/>
<path fill="#e7eacb" d="M788,327 L793,325 L794,327 L789,328 Z"/>
<path fill="#e7eacb" d="M810,320 L814,319 L814,321 L810,321 Z"/>
<path fill="#e7eacb" d="M457,522 L463,518 L471,519 L473,524 L466,528 L459,527 Z"/>
<path fill="#e7eacb" d="M881,235 L893,235 L892,239 L885,240 Z"/>
<path fill="#e7eacb" d="M893,247 L897,245 L899,249 L895,251 Z"/>

<g fill="none" stroke="#a9abc6" stroke-width="0.8" stroke-linejoin="round" opacity="0.85">
<path d="M460.0,659.0 L463.3,659.7 L466.5,660.4 L469.4,662.3 L472.9,662.3 L475.8,664.1 L479.0,665.0 L482.2,664.8 L485.4,664.2 L488.6,665.0 L491.8,664.2 L495.0,664.9 L498.2,664.2 L501.4,664.3 L504.6,664.9 L507.8,665.6 L511.0,665.0 L513.7,662.9 L517.0,662.0 L519.9,664.1 L521.8,667.2 L523.9,670.1 L527.0,672.0 L530.2,671.5 L533.4,670.6 L536.8,671.0 L539.6,668.8 L543.0,669.0 L544.3,671.8 L546.9,673.6 L548.9,675.8 L550.8,678.2 L552.0,681.0 L555.4,681.7 L558.5,683.5 L562.0,684.0 L562.3,680.7 L563.9,677.8 L564.8,674.6 L565.2,671.4 L566.4,668.3 L566.4,664.9 L568.0,662.0 L565.3,659.4 L563.6,656.3 L562.0,653.0 L565.3,651.9 L568.3,650.1 L571.5,648.5 L574.9,647.5 L578.0,646.0 L579.9,643.1 L581.7,640.1 L584.4,637.8 L586.3,634.9 L587.6,631.6 L590.0,629.0"/>
<path d="M479.0,665.0 L479.2,668.2 L479.6,671.4 L479.2,674.7 L479.8,677.8 L480.9,681.0 L479.9,684.3 L481.8,687.3 L481.5,690.6 L481.2,693.8 L482.0,697.0 L480.7,700.0 L478.4,702.2 L477.3,705.3 L474.6,707.2 L473.0,710.0 L469.9,710.8 L467.1,712.3 L464.0,713.1 L461.4,715.2 L458.2,715.8 L455.4,717.2 L452.5,718.5 L449.6,719.9 L446.5,720.5 L443.5,721.6 L440.9,723.6 L437.8,724.5 L435.0,726.0 L432.9,728.5 L429.6,729.3 L427.0,731.2 L424.1,732.5 L422.0,735.0"/>
<path d="M562.0,684.0 L560.9,687.2 L561.4,690.6 L560.7,693.8 L559.7,697.0 L560.3,700.4 L559.1,703.5 L559.1,706.8 L558.0,710.0 L556.0,712.3 L553.6,714.2 L550.4,714.9 L548.6,717.7 L546.0,719.3 L543.4,720.8 L540.5,721.9 L538.9,724.8 L536.0,726.0 L535.1,729.1 L533.9,732.2 L532.3,735.1 L531.5,738.3 L530.4,741.4 L530.4,744.8 L529.1,747.8 L528.2,751.0 L527.0,754.0 L523.7,754.2 L520.5,754.9 L517.7,757.2 L514.6,758.0 L511.4,758.8 L508.3,759.6 L505.0,760.0 L501.8,760.8 L498.6,761.4 L495.5,762.8 L492.4,764.1 L489.0,764.0 L490.0,767.1 L490.9,770.1 L491.3,773.3 L491.5,776.6 L492.8,779.5 L493.9,782.6 L494.5,785.7 L495.2,788.8 L497.1,791.6 L496.5,795.1 L498.0,798.0 L494.6,798.9 L491.3,800.2 L488.2,801.7 L485.3,803.8 L482.0,805.0 L479.1,806.7 L476.0,808.0"/>
<path d="M527.0,754.0 L530.4,755.4 L532.9,758.2 L536.0,760.0 L539.3,759.9 L542.5,760.6 L545.6,761.5 L548.8,762.1 L551.9,763.1 L555.0,764.0 L557.5,766.1 L559.4,768.6 L561.0,771.4 L562.9,773.9 L564.4,776.8 L566.7,779.0 L567.3,782.5 L569.5,784.8 L572.0,786.9 L573.7,789.6 L575.4,792.3 L577.0,795.0 L580.2,797.3 L583.0,800.0 L586.7,799.3 L590.3,800.6 L594.0,800.0 L597.3,800.4 L600.4,799.0 L603.5,798.6 L606.6,797.4 L609.8,797.0 L613.1,797.0 L616.2,796.4 L619.5,796.9 L622.6,795.3 L625.7,794.6 L629.0,795.0 L631.9,793.5 L633.9,790.9 L635.8,788.3 L638.7,786.7 L640.5,783.9 L643.5,782.5 L646.5,781.1 L648.8,778.8 L651.0,776.5 L652.9,773.8 L655.4,771.9 L658.0,770.0 L657.0,767.1 L657.7,763.9 L656.9,761.0 L656.9,757.9 L655.7,755.0 L655.1,752.1 L655.8,748.9 L655.7,745.9 L655.0,742.9 L654.5,739.9 L654.2,736.9 L653.6,733.9 L652.3,731.1 L652.4,728.0 L652.0,725.0 L651.2,722.0 L650.0,719.2 L649.5,716.2 L649.3,713.1 L648.7,710.1 L648.9,706.9 L648.8,703.8 L647.3,701.0 L647.6,697.9 L647.1,694.8 L646.5,691.8 L644.9,689.0 L644.1,686.1 L644.0,683.0"/>
<path d="M590.0,629.0 L592.7,626.6 L595.7,624.5 L598.7,622.6 L602.0,621.0 L604.9,622.0 L607.8,623.2 L610.8,623.9 L614.0,624.1 L616.9,625.1 L619.9,626.2 L623.2,625.7 L625.9,627.5 L628.8,628.7 L631.9,629.2 L634.9,629.9 L638.0,630.2 L641.1,630.5 L643.9,632.3 L647.1,632.3 L649.9,633.9 L652.8,635.0 L656.0,634.7 L659.0,635.5 L661.8,637.2 L664.9,637.6 L668.0,638.0 L669.4,641.2 L670.3,644.5 L671.1,647.8 L670.6,651.5 L671.6,654.8 L673.0,658.0 L672.6,661.6 L670.4,664.6 L669.2,668.0 L668.7,671.5 L668.0,675.0 L665.1,676.3 L662.0,676.9 L659.2,678.6 L656.3,679.8 L652.7,679.2 L649.9,680.7 L647.0,682.0 L644.0,683.0 L641.0,681.3 L637.5,681.1 L634.4,679.4 L631.0,679.0 L628.1,677.4 L624.6,677.5 L621.5,676.4 L618.4,675.4 L615.2,674.4 L612.3,672.9 L609.0,672.4 L606.0,671.0 L603.9,668.3 L601.5,665.7 L600.6,662.1 L597.8,659.8 L595.9,656.9 L594.0,654.0 L593.6,650.9 L593.7,647.6 L592.4,644.6 L592.7,641.4 L591.5,638.4 L591.1,635.2 L590.5,632.1 L590.0,629.0"/>
<path d="M590.0,563.0 L592.1,565.4 L592.8,568.5 L594.5,571.1 L596.1,573.7 L596.2,577.1 L598.5,579.4 L599.4,582.4 L600.3,585.4 L602.0,588.0 L601.9,591.0 L602.3,594.0 L602.0,597.0 L601.9,600.0 L601.5,603.0 L602.7,606.0 L601.9,609.0 L602.5,612.0 L602.4,615.0 L601.5,618.0 L602.0,621.0"/>
<path d="M700.0,575.0 L700.0,578.2 L699.9,581.4 L699.5,584.7 L699.3,587.9 L700.1,591.1 L699.8,594.3 L700.0,597.6 L700.0,600.8 L700.0,604.0 L698.1,606.4 L696.8,609.3 L695.1,611.8 L693.6,614.5 L691.2,616.7 L690.0,619.5 L688.1,622.0 L686.4,624.5 L685.8,627.8 L683.8,630.1 L681.6,632.3 L680.1,635.1 L679.0,638.0 L675.3,638.7 L671.7,638.7 L668.0,638.0"/>
<path d="M668.0,675.0 L670.8,676.6 L673.8,677.8 L676.4,679.7 L679.3,681.2 L681.4,683.8 L684.0,685.7 L687.0,687.0 L689.8,688.5 L693.2,688.0 L695.9,689.8 L698.9,690.6 L702.2,690.5 L704.8,692.6 L707.8,693.5 L711.1,693.1 L713.8,695.1 L717.0,695.0 L720.0,696.0 L722.3,698.2 L724.1,701.1 L726.6,703.1 L729.8,704.4 L731.8,707.0 L734.0,709.4 L736.5,711.3 L739.0,713.4 L741.0,716.0 L744.2,716.3 L747.2,717.6 L750.5,717.0 L753.5,718.6 L756.6,719.0 L759.9,718.9 L762.9,720.1 L766.0,721.0 L768.9,719.8 L771.7,718.2 L774.1,716.0 L777.7,716.1 L780.4,714.4 L783.4,713.3 L785.5,710.4 L788.5,709.3 L791.1,707.5 L794.6,707.3 L797.0,705.0 L800.0,704.0"/>
<path d="M658.0,770.0 L660.8,771.3 L662.9,773.5 L664.8,776.0 L667.3,777.7 L670.0,779.0 L673.5,779.4 L676.9,780.0 L680.0,782.1 L683.6,782.3 L687.0,783.0 L687.7,786.2 L689.7,789.0 L690.8,792.1 L690.7,795.6 L692.1,798.6 L693.7,801.5 L693.2,805.1 L695.0,808.0 L698.1,807.9 L701.2,807.9 L704.2,806.3 L707.4,807.4 L710.3,805.7 L713.5,806.8 L716.5,805.8 L719.6,805.3 L722.7,805.3 L725.8,805.7 L728.8,804.2 L731.9,803.6 L735.0,804.0 L737.4,802.2 L739.5,800.0 L741.8,798.0 L744.2,796.3 L747.0,795.0 L750.3,794.8 L753.4,795.7 L756.4,796.5 L759.6,797.2 L762.5,798.6 L765.8,798.4 L768.9,799.4 L772.0,800.0"/>
<path d="M629.0,795.0 L630.4,797.7 L630.9,800.7 L632.2,803.5 L632.6,806.5 L633.8,809.3 L633.4,812.5 L634.5,815.3 L635.9,818.1 L636.2,821.1 L637.0,824.0 L635.4,826.7 L636.1,830.0 L634.0,832.5 L633.9,835.6 L633.0,838.5 L631.6,841.2 L631.6,844.4 L630.6,847.2 L629.5,850.0 L629.0,853.0 L628.1,856.0 L629.3,859.0 L628.4,862.0 L628.6,865.0 L628.8,868.0 L629.2,871.0 L629.3,874.0 L629.8,877.0 L629.7,880.0 L629.8,883.0 L628.6,886.0 L629.4,889.0 L629.6,892.0 L629.0,895.0"/>
<path d="M921.0,298.0 L923.7,299.8 L924.7,303.0 L926.8,305.3 L929.2,307.4 L931.8,309.2 L933.9,311.5 L936.0,313.8 L937.9,316.4 L940.4,318.3 L942.0,321.0 L945.0,319.2 L947.8,317.3 L951.4,316.7 L954.4,315.1 L957.0,312.7 L960.0,311.0 L961.0,314.4 L960.2,318.1 L961.8,321.5 L962.0,325.0 L964.8,326.3 L967.9,327.4 L970.2,329.5 L972.9,331.2 L975.6,332.9 L978.6,334.0 L981.0,336.0 L984.2,336.5 L987.6,336.1 L990.8,337.1 L994.0,338.0 L996.9,339.8 L998.8,342.5 L1001.6,344.4 L1003.9,346.7 L1005.9,349.4 L1008.0,352.0 L1011.5,353.1 L1014.4,355.1 L1017.7,356.5 L1021.0,358.0 L1023.6,355.8 L1025.7,353.2 L1028.0,350.8 L1030.5,348.5 L1032.1,345.4 L1034.3,342.8 L1037.4,341.1 L1039.0,338.0 L1042.4,338.4 L1045.2,340.4 L1048.4,341.2 L1051.9,341.2 L1054.7,343.6 L1058.0,344.0 L1061.2,345.3 L1064.5,345.4 L1067.8,346.1 L1071.0,346.8 L1074.5,346.2 L1077.7,347.5 L1081.0,348.0 L1084.2,347.0 L1087.5,346.6 L1090.7,345.5 L1093.8,344.6 L1096.9,343.1 L1100.0,342.0 L1102.7,340.2 L1104.5,337.7 L1106.7,335.4 L1108.2,332.5 L1110.1,330.0 L1112.4,327.8 L1115.0,326.0 L1118.3,327.4 L1121.7,328.6 L1124.3,331.3 L1127.8,332.5 L1131.0,334.0 L1130.8,338.0 L1131.0,342.0 L1134.2,342.2 L1137.5,342.3 L1140.8,342.0 L1144.0,342.0"/>
<path d="M992.0,294.0 L990.3,297.3 L986.9,299.0 L985.0,302.0 L986.4,305.2 L988.6,308.0 L990.3,311.0 L992.0,314.1 L994.0,317.0 L992.9,319.9 L990.2,321.8 L989.1,324.8 L987.0,327.0 L985.6,330.4 L983.4,333.2 L981.0,336.0"/>
<path d="M828.0,414.0 L831.1,412.6 L833.5,410.0 L836.8,409.1 L839.9,407.7 L842.4,405.2 L845.1,403.3 L848.1,401.7 L851.0,400.0 L854.1,401.9 L857.2,403.6 L860.5,405.0 L863.7,406.6 L867.0,408.0 L867.4,411.2 L867.0,414.4 L866.4,417.5 L865.2,420.6 L865.7,423.9 L865.0,427.0 L867.9,425.9 L870.4,423.7 L873.3,422.5 L876.3,421.6 L879.5,421.0 L882.4,419.8 L885.3,418.5 L888.0,417.0 L886.6,414.3 L886.0,411.3 L884.9,408.5 L883.9,405.7 L882.4,403.1 L882.0,400.0 L885.7,399.7 L888.9,397.5 L892.7,397.8 L896.0,396.0 L896.2,400.2 L898.0,404.0 L900.5,402.2 L903.6,401.9 L906.7,401.5 L909.6,400.8 L912.1,398.9 L915.0,398.0 L914.8,401.1 L914.4,404.1 L912.5,406.8 L913.2,410.1 L912.0,413.0 L912.2,416.1 L911.0,419.0 L912.7,421.5 L913.8,424.5 L916.8,426.1 L917.5,429.3 L919.7,431.5 L920.9,434.4 L923.0,436.7 L925.0,439.0 L925.9,442.3 L925.1,445.9 L926.2,449.2 L927.4,452.5 L927.0,456.0 L930.6,456.7 L933.5,459.0 L936.8,460.4 L940.0,462.0 L940.0,465.0 L939.8,468.1 L939.1,471.0 L938.7,474.0 L938.0,477.0 L942.3,475.5 L946.0,473.0 L949.5,474.3 L952.0,477.0 L954.7,475.2 L957.2,473.2 L958.7,470.1 L962.0,469.1 L964.1,466.7 L966.7,464.8 L968.4,461.8 L971.0,460.0 L974.0,459.3 L977.0,458.8 L980.1,459.4 L983.0,458.0 L982.7,455.0 L981.9,452.0 L981.5,449.0 L980.8,446.1 L980.0,443.1 L979.6,440.1 L980.5,436.9 L979.1,434.1 L979.0,431.0 L982.4,430.7 L985.2,428.6 L988.4,427.6 L991.7,427.0 L994.7,425.5 L998.0,425.0 L997.6,421.9 L998.4,418.7 L998.1,415.7 L997.8,412.6 L997.2,409.5 L997.5,406.4 L997.4,403.2 L996.5,400.2 L996.6,397.1 L996.0,394.0 L993.7,391.4 L993.2,387.8 L991.2,385.0 L990.1,381.8 L988.4,378.9 L986.2,376.2 L985.0,373.0 L988.4,370.9 L992.6,371.1 L996.0,369.0 L999.1,367.5 L1002.6,367.2 L1005.8,366.2 L1009.1,365.2 L1012.5,365.1 L1015.9,364.7 L1019.0,363.0 L1022.4,364.2 L1025.3,366.5 L1028.8,367.5 L1031.8,369.5 L1035.0,371.0 L1038.2,370.8 L1041.5,370.4 L1044.8,370.4 L1048.0,371.0 L1048.8,374.2 L1047.8,377.6 L1048.9,380.9 L1049.6,384.1 L1048.7,387.5 L1048.8,390.8 L1050.0,394.0 L1050.1,397.1 L1050.6,400.2 L1050.6,403.4 L1050.7,406.5 L1050.3,409.6 L1050.7,412.8 L1050.5,415.9 L1050.0,419.0 L1052.6,420.7 L1054.5,423.1 L1056.4,425.5 L1058.8,427.3 L1061.5,428.9 L1063.8,430.9 L1066.0,433.0 L1069.2,434.0 L1072.4,434.8 L1075.6,435.7 L1078.9,436.2 L1082.0,437.6 L1085.0,439.0 L1085.0,442.6 L1087.3,445.6 L1087.4,449.2 L1088.0,452.7 L1089.0,456.0 L1085.5,455.3 L1082.0,456.5 L1078.5,456.4 L1075.0,456.0 L1072.2,457.5 L1069.1,458.4 L1066.0,459.4 L1062.7,459.7 L1059.8,461.0 L1056.8,462.0 L1054.3,464.6 L1051.3,465.7 L1048.0,466.0 L1047.6,469.1 L1047.3,472.2 L1048.0,475.3 L1047.8,478.4 L1048.9,481.5 L1048.2,484.5 L1047.2,487.6 L1047.4,490.7 L1047.4,493.8 L1047.1,496.9 L1048.0,500.0 L1047.5,503.1 L1046.8,506.2 L1045.8,509.2 L1044.3,512.0 L1043.1,514.9 L1041.7,517.8 L1041.2,520.9 L1040.4,523.9 L1039.2,526.9 L1038.8,530.0 L1037.8,533.0 L1037.7,536.2 L1036.0,539.0"/>
<path d="M983.0,458.0 L985.8,459.8 L989.2,460.2 L992.0,462.0 L994.3,464.5 L997.4,466.0 L1000.4,467.3 L1003.4,468.9 L1006.0,471.0 L1008.4,473.5 L1011.0,475.4 L1014.0,477.0 L1016.0,479.9 L1017.5,483.1 L1018.2,486.6 L1019.5,489.9 L1021.0,493.0 L1022.1,495.8 L1023.3,498.6 L1023.6,501.7 L1025.6,504.2 L1026.0,507.3 L1026.7,510.2 L1026.8,513.4 L1028.3,516.1 L1028.8,519.1 L1030.4,521.7 L1031.8,524.5 L1032.7,527.4 L1032.4,530.6 L1033.8,533.4 L1035.4,536.0 L1036.0,539.0"/>
<path d="M892.0,473.0 L894.5,471.0 L897.7,470.7 L900.6,469.8 L903.3,468.2 L906.0,466.8 L909.0,466.0 L912.1,464.6 L915.4,463.3 L917.8,460.6 L920.6,458.6 L923.9,457.4 L927.0,456.0"/>
<path d="M1100.0,473.0 L1103.2,472.2 L1106.6,472.1 L1109.6,470.6 L1113.1,471.0 L1116.3,470.3 L1119.5,469.3 L1122.6,468.1 L1126.0,468.0 L1129.3,468.2 L1132.2,466.4 L1135.5,466.7 L1138.4,465.0 L1141.5,464.4 L1144.8,464.7 L1147.8,463.3 L1151.0,463.0 L1154.4,462.2 L1157.0,460.0"/>
<path d="M1100.0,527.0 L1102.4,525.1 L1104.4,522.7 L1106.9,520.8 L1109.5,519.2 L1112.2,517.6 L1114.9,516.0 L1116.4,513.0 L1119.1,511.4 L1121.3,509.2 L1124.5,508.3 L1126.0,505.2 L1128.3,503.2 L1130.7,501.3 L1133.5,499.8 L1136.0,498.0 L1138.2,500.2 L1140.8,501.8 L1143.6,503.2 L1145.9,505.2 L1149.0,506.0 L1152.0,508.4 L1155.8,509.1 L1159.0,511.0"/>
<path d="M889.0,599.0 L891.6,597.0 L895.1,596.8 L897.9,595.1 L900.2,592.5 L903.6,592.0 L906.2,590.1 L909.1,588.7 L912.0,587.2 L915.0,586.0 L918.0,584.8 L921.1,584.0 L924.4,583.9 L927.5,583.5 L930.9,583.9 L933.7,581.9 L937.0,582.0 L938.8,584.7 L942.1,585.9 L944.3,588.2 L946.1,590.9 L948.5,593.1 L951.3,594.7 L954.2,596.3 L956.0,599.0 L956.7,602.0 L957.6,605.0 L957.3,608.2 L959.2,610.9 L959.6,613.9 L960.0,617.0 L961.0,620.1 L963.9,622.0 L964.9,625.1 L965.8,628.1 L967.4,630.8 L970.1,632.9 L971.0,636.0 L971.8,639.4 L971.8,642.8 L970.2,646.2 L971.4,649.6 L971.0,653.0 L968.5,655.2 L966.2,657.5 L964.8,660.7 L962.8,663.3 L959.7,665.0 L958.1,667.9 L956.5,670.8 L954.0,673.0 L954.4,676.5 L955.9,679.7 L956.8,683.1 L958.1,686.4 L958.0,690.0 L957.5,693.1 L957.3,696.3 L957.8,699.4 L957.2,702.6 L958.9,705.7 L958.5,708.9 L958.0,712.0 L955.4,713.8 L952.3,714.9 L949.7,716.7 L947.7,719.4 L945.0,721.0 L943.4,724.2 L941.0,727.0"/>
<path d="M876.0,636.0 L877.5,633.2 L879.2,630.5 L881.5,628.1 L882.0,624.7 L884.6,622.5 L886.1,619.7 L887.9,617.0 L889.0,614.0 L889.0,610.7 L888.2,607.6 L887.2,604.4 L886.7,601.3 L886.3,598.0 L886.5,594.7 L884.8,591.7 L884.5,588.5 L884.9,585.1 L884.0,582.0 L883.3,578.9 L882.6,575.8 L882.3,572.6 L883.0,569.4 L882.3,566.3 L883.1,563.1 L882.0,560.0 L883.7,557.4 L884.8,554.6 L884.6,551.3 L885.3,548.3 L886.3,545.5 L888.0,542.9 L889.0,540.0 L890.9,537.3 L892.1,534.2 L893.3,531.2 L895.2,528.5 L897.0,525.8 L898.7,523.0 L900.0,520.0 L902.3,518.0 L904.5,515.9 L906.2,513.4 L907.5,510.5 L910.5,509.1 L911.7,506.2 L914.1,504.2 L915.8,501.7 L918.3,499.9 L919.6,497.0 L921.7,494.8 L923.7,492.5 L925.5,490.2 L928.5,488.8 L930.1,486.1 L931.8,483.6 L933.9,481.4 L936.7,479.9 L938.0,477.0"/>
<path d="M797.0,601.0 L798.7,598.3 L799.9,595.4 L802.0,593.0 L805.0,593.6 L808.0,593.3 L811.0,593.9 L814.0,592.3 L817.0,593.0 L820.0,593.6 L823.0,593.0 L825.3,595.2 L827.9,597.0 L831.4,597.3 L833.9,599.4 L836.7,600.8 L839.0,603.0 L839.9,605.9 L838.8,609.1 L839.9,612.0 L839.6,615.1 L840.9,618.0 L841.0,621.0 L843.0,623.0"/>
<path d="M1243.0,248.0 L1242.6,251.2 L1243.6,254.3 L1244.2,257.4 L1243.6,260.6 L1243.5,263.7 L1245.3,266.7 L1244.7,269.9 L1244.9,273.1 L1245.9,276.2 L1245.9,279.3 L1246.6,282.4 L1246.7,285.6 L1246.9,288.7 L1246.6,291.9 L1247.0,295.0 L1246.1,298.3 L1246.2,301.8 L1245.9,305.2 L1244.6,308.4 L1243.4,311.6 L1243.0,315.0 L1241.2,317.6 L1238.9,319.6 L1236.9,321.9 L1234.0,323.3 L1232.1,325.8 L1230.0,328.0 L1232.6,330.3 L1234.6,333.2 L1236.2,336.3 L1237.9,339.3 L1240.0,342.0 L1237.4,344.1 L1235.6,347.1 L1233.1,349.3 L1230.0,350.9 L1228.0,353.5 L1225.7,356.0 L1223.0,358.0 L1219.9,359.1 L1216.4,358.8 L1213.5,360.7 L1210.2,361.1 L1207.0,362.0 L1204.0,362.6 L1201.0,362.9 L1197.9,362.5 L1194.9,362.6 L1192.0,364.1 L1189.1,364.8 L1185.9,364.2 L1183.0,365.0 L1180.3,366.7 L1177.6,368.3 L1174.1,368.1 L1171.6,370.1 L1168.4,370.7 L1165.8,372.7 L1162.6,373.1 L1160.0,375.0 L1158.1,377.6 L1156.5,380.6 L1154.7,383.3 L1151.9,385.3 L1150.0,388.0"/>
<path d="M1247.0,322.0 L1250.3,322.3 L1253.6,322.7 L1256.9,321.3 L1260.1,322.2 L1263.4,321.8 L1266.7,322.0 L1270.0,322.0 L1272.5,319.7 L1275.5,318.2 L1278.6,316.8 L1281.9,315.7 L1284.0,312.6 L1287.2,311.5 L1290.4,310.2 L1293.0,308.0 L1296.0,309.2 L1299.2,308.2 L1302.4,308.4 L1305.3,310.2 L1308.4,310.7 L1311.5,310.2 L1314.7,309.7 L1317.6,311.7 L1320.8,311.1 L1323.8,312.4 L1327.0,312.0 L1329.8,313.6 L1332.5,315.4 L1335.8,315.7 L1338.2,318.2 L1341.5,318.7 L1344.2,320.4 L1347.0,322.0 L1349.4,320.0 L1351.2,317.5 L1352.1,314.4 L1354.0,312.0 L1356.1,309.7 L1358.2,307.4 L1360.0,305.0 L1358.7,302.1 L1357.1,299.2 L1356.2,296.2 L1355.9,292.9 L1355.1,289.8 L1352.6,287.3 L1352.3,284.0 L1351.5,280.8 L1350.0,278.0 L1349.9,274.6 L1352.1,271.6 L1351.6,268.1 L1353.0,265.0"/>
<path d="M1347.0,322.0 L1348.9,324.4 L1350.9,326.7 L1352.8,329.1 L1355.3,331.0 L1357.1,333.4 L1358.9,335.9 L1361.1,338.0 L1362.8,340.6 L1365.1,342.6 L1367.0,345.0 L1370.0,345.2 L1373.1,344.7 L1376.0,346.0 L1379.0,346.1 L1382.0,345.9 L1385.0,347.1 L1388.0,347.4 L1391.0,347.1 L1394.1,346.9 L1397.0,347.7 L1400.0,348.0 L1402.7,346.2 L1405.6,345.0 L1408.8,344.4 L1411.5,342.6 L1414.7,342.0 L1417.7,341.0 L1420.3,339.0 L1423.6,338.8 L1426.2,336.7 L1429.6,336.6 L1432.5,335.5 L1435.3,333.9 L1437.9,332.0 L1441.2,331.5 L1444.0,330.1 L1447.4,329.9 L1450.0,328.0 L1452.5,326.1 L1455.8,325.9 L1458.6,324.8 L1461.2,323.0 L1464.0,321.8 L1466.3,319.5 L1469.6,319.4 L1472.0,317.3 L1475.1,316.7 L1477.8,315.3 L1480.0,312.8 L1483.0,312.0 L1485.3,309.6 L1487.4,307.1 L1488.0,303.5 L1490.3,301.2 L1492.8,298.9 L1493.8,295.6 L1496.8,293.7 L1497.8,290.4 L1500.0,288.0 L1499.1,284.9 L1496.6,282.6 L1495.7,279.4 L1495.0,276.2 L1492.4,273.9 L1491.0,271.0 L1490.0,268.0 L1493.3,266.0 L1496.5,263.7 L1500.0,262.0"/>
<path d="M1267.0,332.0 L1268.0,335.0 L1268.0,338.1 L1268.3,341.2 L1267.1,344.3 L1267.7,347.4 L1267.6,350.5 L1269.1,353.5 L1268.2,356.6 L1269.6,359.6 L1269.1,362.7 L1269.1,365.8 L1269.8,368.8 L1269.1,372.0 L1270.0,375.0 L1272.4,376.9 L1274.8,378.8 L1276.9,381.1 L1280.1,381.9 L1281.6,385.0 L1284.4,386.3 L1287.0,388.0 L1290.1,388.8 L1292.8,390.5 L1296.1,390.6 L1298.7,392.8 L1302.0,393.1 L1305.1,393.8 L1307.8,395.5 L1311.0,395.9 L1314.2,396.4 L1317.0,398.0 L1319.7,399.7 L1323.1,399.8 L1325.4,402.3 L1328.7,402.6 L1331.3,404.5 L1333.9,406.3 L1337.1,406.9 L1340.0,408.0 L1342.2,405.6 L1343.7,402.6 L1345.3,399.7 L1347.3,397.1 L1350.0,395.0 L1350.2,391.8 L1351.8,389.1 L1352.2,386.0 L1353.1,383.0 L1354.6,380.2 L1354.0,376.8 L1355.0,373.9 L1356.5,371.1 L1357.0,368.0 L1358.1,364.7 L1360.0,361.8 L1362.4,359.3 L1363.8,356.2 L1366.1,353.6 L1367.7,350.6 L1370.0,348.0"/>
<path d="M1450.0,328.0 L1450.5,331.4 L1451.0,334.8 L1452.3,338.1 L1452.2,341.6 L1453.0,345.0 L1455.0,347.3 L1457.5,349.2 L1458.4,352.4 L1461.3,353.9 L1463.5,356.1 L1465.5,358.3 L1466.8,361.3 L1468.5,363.8 L1470.6,366.0 L1473.0,368.0 L1474.6,370.6 L1476.2,373.2 L1478.0,375.7 L1478.4,378.9 L1479.9,381.6 L1481.6,384.1 L1482.6,387.0 L1484.3,389.6 L1484.9,392.7 L1487.0,395.0 L1489.5,396.9 L1492.7,397.7 L1494.8,400.3 L1498.3,400.5 L1500.6,402.8 L1503.4,404.1 L1506.3,405.4 L1509.2,406.7 L1511.3,409.3 L1514.7,409.7 L1517.0,412.0"/>
<path d="M1514.0,412.0 L1510.9,410.7 L1508.0,408.8 L1504.4,408.8 L1501.3,407.5 L1498.4,405.6 L1495.3,404.5 L1492.2,403.0 L1489.0,402.0 L1488.0,398.9 L1485.5,396.6 L1484.2,393.7 L1482.7,390.8 L1480.8,388.2 L1480.0,385.0"/>
<path d="M1460.0,434.0 L1459.7,437.3 L1460.3,440.5 L1460.8,443.6 L1462.5,446.7 L1462.0,450.0 L1458.9,451.8 L1456.2,454.2 L1453.8,456.8 L1451.0,459.0 L1451.6,462.3 L1453.1,465.4 L1454.5,468.5 L1455.7,471.6 L1456.0,475.0 L1456.8,478.1 L1457.5,481.2 L1457.3,484.5 L1456.9,487.7 L1457.3,490.9 L1457.4,494.1 L1458.0,497.2 L1459.1,500.3 L1458.9,503.5 L1459.4,506.7 L1459.2,509.9 L1460.0,513.0 L1458.0,515.3 L1456.3,517.8 L1453.8,519.7 L1451.4,521.6 L1450.4,524.8 L1447.5,526.3 L1446.7,529.6 L1444.3,531.6 L1442.4,533.9 L1439.7,535.6 L1437.4,537.6 L1435.7,540.1 L1434.2,542.9 L1432.0,545.0 L1428.9,545.2 L1426.3,546.9 L1423.4,547.9 L1420.2,547.6 L1417.4,548.9 L1414.5,549.6 L1411.6,550.4 L1408.5,550.7 L1405.8,552.4 L1402.7,552.6 L1400.0,554.0"/>
<path d="M1460.0,513.0 L1463.2,514.1 L1466.4,515.1 L1469.8,515.1 L1473.0,516.0 L1474.1,518.9 L1475.9,521.6 L1477.8,524.1 L1479.5,526.8 L1480.3,529.9 L1482.7,532.1 L1482.9,535.6 L1485.0,538.0 L1488.1,537.9 L1491.1,538.2 L1494.1,538.8 L1496.9,540.8 L1500.0,540.2 L1503.1,540.4 L1506.1,540.7 L1509.1,541.2 L1511.9,542.8 L1515.0,543.2 L1517.9,543.8 L1520.9,544.4 L1524.1,543.7 L1527.0,545.0 L1530.1,544.2 L1532.9,542.8 L1536.2,542.5 L1539.0,541.0"/>
<path d="M1432.0,545.0 L1431.4,548.1 L1431.3,551.2 L1432.8,554.3 L1431.3,557.4 L1431.3,560.5 L1431.2,563.6 L1432.7,566.7 L1432.5,569.8 L1432.7,572.9 L1432.0,576.0 L1433.6,578.9 L1432.9,582.4 L1433.7,585.5 L1434.8,588.6 L1435.2,591.8 L1436.3,594.8 L1437.6,597.8 L1438.0,601.0"/>
<path d="M1340.0,408.0 L1343.1,407.6 L1346.1,408.0 L1348.9,409.6 L1352.1,408.9 L1355.0,409.5 L1358.0,410.0 L1361.1,409.7 L1364.1,410.5 L1367.0,410.9 L1370.0,412.0 L1373.0,412.0 L1375.6,413.8 L1378.2,415.7 L1380.0,418.7 L1383.0,420.0 L1385.1,422.5 L1387.9,424.2 L1391.0,425.3 L1393.0,428.0 L1394.7,430.6 L1396.2,433.3 L1397.2,436.2 L1399.5,438.5 L1400.5,441.5 L1402.3,444.0 L1404.3,446.4 L1404.9,449.7 L1407.0,452.0 L1406.8,455.1 L1404.7,457.6 L1404.9,460.8 L1404.4,463.8 L1403.1,466.5 L1401.3,469.1 L1400.1,471.9 L1400.0,475.0 L1403.0,476.1 L1404.9,478.7 L1407.3,480.6 L1409.4,482.9 L1412.5,483.8 L1414.6,486.1 L1417.0,488.0 L1420.4,488.4 L1423.5,489.9 L1427.1,489.6 L1430.2,491.5 L1433.7,491.0 L1437.0,492.0 L1438.7,489.5 L1441.4,487.9 L1443.3,485.5 L1444.9,482.8 L1447.6,481.3 L1449.0,478.4 L1452.0,477.1 L1454.0,474.8 L1456.2,472.7 L1458.1,470.3 L1460.0,468.0"/>
<path d="M1340.0,408.0 L1338.0,410.5 L1335.8,412.8 L1333.6,415.1 L1330.8,416.9 L1329.7,420.2 L1327.0,422.0 L1324.7,424.3 L1324.4,427.8 L1322.4,430.3 L1320.7,432.9 L1318.1,435.0 L1317.0,438.0 L1316.5,441.0 L1316.2,444.0 L1314.8,446.9 L1315.5,450.1 L1314.6,453.0 L1313.9,456.0 L1313.0,458.9 L1313.0,462.0 L1310.6,464.2 L1308.8,466.8 L1307.2,469.7 L1305.2,472.2 L1303.5,474.9 L1300.5,476.6 L1298.8,479.3 L1297.0,482.0 L1293.4,483.6 L1290.6,486.5 L1287.0,488.0 L1285.8,485.2 L1285.2,482.0 L1283.8,479.3 L1281.9,476.7 L1281.4,473.6 L1281.0,470.4 L1278.8,467.9 L1277.6,465.1 L1277.0,462.0 L1274.0,461.3 L1271.4,459.7 L1268.6,458.4 L1265.4,458.6 L1262.5,457.6 L1259.7,456.4 L1257.0,455.0 L1253.9,454.4 L1251.0,453.2 L1247.8,453.0 L1244.9,451.8 L1241.8,451.2 L1239.2,448.9 L1236.1,448.5 L1233.0,448.0 L1229.5,447.7 L1226.6,445.2 L1223.0,445.0"/>
<path d="M1207.0,355.0 L1207.3,358.1 L1206.4,361.0 L1204.9,363.9 L1204.9,366.9 L1204.6,369.9 L1204.7,373.0 L1204.7,376.1 L1203.6,379.0 L1204.1,382.1 L1203.0,385.0 L1203.9,388.0 L1203.9,391.1 L1204.8,394.2 L1204.5,397.3 L1204.1,400.5 L1204.7,403.5 L1205.3,406.6 L1205.4,409.7 L1206.1,412.7 L1207.0,415.8 L1206.5,418.9 L1207.0,422.0 L1209.0,424.8 L1210.4,428.0 L1212.0,431.0 L1214.5,433.4 L1216.2,436.4 L1217.8,439.4 L1220.0,442.0 L1223.0,445.0"/>
<path d="M1287.0,488.0 L1284.8,490.4 L1282.7,493.0 L1279.7,494.7 L1277.2,496.8 L1275.0,499.3 L1273.0,502.0 L1271.7,504.9 L1270.6,507.8 L1270.0,510.9 L1269.1,513.9 L1268.5,517.0 L1267.9,520.1 L1266.4,522.9 L1266.4,526.2 L1265.0,529.0 L1263.4,531.9 L1263.0,535.0 L1261.4,538.0 L1260.3,541.2 L1259.7,544.5 L1258.1,547.6 L1256.8,550.7 L1255.3,553.7 L1254.4,556.9 L1253.0,560.0"/>
<path d="M1297.0,482.0 L1299.7,484.1 L1302.3,486.4 L1305.9,487.1 L1308.3,489.7 L1311.0,491.7 L1314.3,493.0 L1317.0,495.0 L1319.9,495.9 L1322.5,497.6 L1325.9,496.8 L1328.5,498.6 L1331.6,498.8 L1334.1,500.7 L1336.9,501.9 L1340.0,502.0 L1343.0,500.9 L1345.8,499.1 L1349.0,498.8 L1352.0,497.6 L1355.1,496.8 L1358.0,495.4 L1361.1,494.5 L1364.2,493.7 L1367.0,492.0 L1369.5,494.5 L1372.1,496.9 L1373.9,500.1 L1377.0,502.0 L1378.7,499.2 L1381.4,497.3 L1383.1,494.5 L1385.7,492.5 L1386.9,489.3 L1390.2,487.8 L1391.4,484.6 L1393.1,481.8 L1395.5,479.6 L1397.8,477.3 L1400.0,475.0"/>
<path d="M1317.0,495.0 L1318.1,497.9 L1317.7,501.0 L1318.0,504.0 L1317.7,507.0 L1318.6,510.0 L1319.1,513.0 L1319.4,516.0 L1318.7,519.0 L1318.7,522.1 L1319.7,525.0 L1320.0,528.0 L1320.8,531.2 L1320.1,534.5 L1321.1,537.6 L1321.7,540.8 L1322.2,543.9 L1321.3,547.2 L1321.5,550.5 L1322.2,553.6 L1322.8,556.8 L1323.0,560.0 L1321.6,563.5 L1321.0,567.2 L1318.5,570.2 L1318.0,574.0"/>
<path d="M1377.0,502.0 L1376.8,505.3 L1375.8,508.5 L1374.9,511.7 L1374.4,514.9 L1374.6,518.3 L1374.4,521.6 L1373.4,524.7 L1373.0,528.0 L1373.1,531.3 L1371.2,534.3 L1371.5,537.6 L1370.0,540.7 L1370.4,544.1 L1369.6,547.2 L1369.2,550.5 L1368.3,553.6 L1368.2,556.9 L1367.0,560.0 L1368.3,563.0 L1367.4,566.2 L1368.5,569.2 L1369.0,572.3 L1369.3,575.3 L1369.3,578.5 L1369.8,581.5 L1369.8,584.6 L1370.2,587.7 L1371.1,590.7 L1370.5,593.9 L1371.0,597.0 L1372.0,600.0"/>
<path d="M1157.0,475.0 L1159.9,472.5 L1163.8,472.0 L1167.1,470.4 L1170.0,468.0 L1173.1,467.9 L1175.9,466.2 L1179.1,466.8 L1182.0,465.8 L1184.8,464.1 L1187.8,463.5 L1191.2,464.6 L1194.1,463.5 L1196.9,462.2 L1200.0,462.0 L1201.4,458.8 L1203.5,456.0 L1205.6,453.3 L1208.4,451.1 L1210.0,448.0 L1213.2,447.0 L1216.4,445.9 L1219.9,446.5 L1223.0,445.0"/>
<path d="M1100.0,342.0 L1102.5,339.8 L1103.8,336.6 L1106.9,335.0 L1108.6,332.1 L1111.0,329.8 L1113.0,327.2 L1115.4,325.0 L1117.0,322.0 L1118.6,324.8 L1120.5,327.4 L1123.4,329.2 L1124.7,332.2 L1127.0,334.5 L1128.7,337.3 L1131.1,339.4 L1133.0,342.0"/>


<path d="M1574.0,681.0 L1574.9,684.0 L1577.0,686.4 L1579.0,688.9 L1580.6,691.5 L1582.3,694.1 L1583.2,697.1 L1585.5,699.5 L1586.4,702.5 L1588.4,704.9 L1589.4,707.9 L1590.9,710.6 L1592.4,713.3 L1594.0,716.0"/>
<path d="M1612.0,639.0 L1613.0,642.1 L1616.0,644.2 L1616.3,647.7 L1618.5,650.2 L1620.0,653.0 L1619.3,656.0 L1618.5,658.9 L1617.6,661.9 L1617.8,665.0 L1617.0,668.0 L1614.9,670.4 L1612.0,672.1 L1610.9,675.5 L1607.9,677.2 L1605.7,679.5 L1604.3,682.6 L1601.3,684.2 L1599.0,686.4 L1597.0,689.0 L1595.9,691.9 L1596.6,695.0 L1595.1,697.9 L1595.6,701.0 L1595.4,704.0 L1594.3,706.9 L1595.5,710.1 L1593.9,713.0 L1594.0,716.0"/>
<path d="M1587.0,598.0 L1588.4,600.7 L1590.4,603.0 L1591.1,606.0 L1593.5,608.1 L1594.9,610.8 L1596.3,613.4 L1597.5,616.2 L1599.9,618.2 L1601.2,621.0 L1602.7,623.6 L1604.1,626.2 L1605.2,629.1 L1607.6,631.1 L1608.4,634.2 L1610.6,636.3 L1612.0,639.0"/>
<path d="M1644.0,600.0 L1644.3,603.1 L1645.0,606.2 L1644.9,609.3 L1644.4,612.5 L1645.3,615.6 L1645.4,618.7 L1646.5,621.7 L1646.9,624.8 L1647.2,627.9 L1647.0,631.1 L1647.2,634.2 L1647.3,637.3 L1648.9,640.3 L1648.0,643.5 L1648.0,646.6 L1649.0,649.7 L1650.2,652.7 L1650.0,655.9 L1650.0,659.0"/>
<path d="M1555.0,526.0 L1558.3,527.1 L1560.8,529.3 L1562.8,532.3 L1565.9,533.7 L1568.6,535.6 L1571.2,537.7 L1573.8,539.7 L1577.0,541.0 L1580.2,542.1 L1583.4,543.0 L1586.7,543.8 L1589.9,544.8 L1593.2,545.5 L1596.4,546.6 L1599.9,546.6 L1603.0,548.0 L1603.9,551.3 L1605.5,554.4 L1606.2,557.8 L1608.5,560.5 L1609.0,564.0 L1611.9,562.5 L1614.9,561.2 L1618.5,561.5 L1621.6,560.7 L1624.6,559.3 L1627.5,557.8 L1630.9,557.6 L1634.0,556.5 L1636.9,555.1 L1640.0,554.0 L1643.1,552.1 L1646.4,550.7 L1649.7,549.4 L1653.0,548.0"/>
<path d="M1618.0,440.0 L1618.9,443.1 L1619.3,446.3 L1619.5,449.5 L1619.5,452.7 L1621.6,455.6 L1621.3,458.9 L1622.0,462.0 L1624.5,464.1 L1626.2,466.8 L1626.9,470.1 L1629.1,472.5 L1630.4,475.4 L1632.9,477.5 L1635.3,479.7 L1636.6,482.7 L1638.1,485.5 L1640.0,488.0 L1638.7,491.0 L1638.1,494.0 L1638.4,497.3 L1638.0,500.4 L1638.0,503.6 L1636.5,506.5 L1636.7,509.7 L1636.3,512.8 L1635.9,516.0 L1635.4,519.1 L1634.0,522.0 L1630.8,522.9 L1628.0,525.1 L1624.3,525.0 L1621.8,527.7 L1618.1,527.6 L1615.5,530.1 L1612.4,531.6 L1609.0,532.0 L1607.4,535.1 L1607.0,538.6 L1605.0,541.5 L1604.7,545.0 L1603.0,548.0"/>
<path d="M1587.0,598.0 L1583.8,598.8 L1580.5,597.5 L1577.2,597.6 L1574.0,598.0 L1572.5,601.0 L1571.9,604.2 L1572.2,607.6 L1570.3,610.5 L1569.4,613.6 L1568.9,616.9 L1568.0,620.0 L1564.8,620.5 L1562.3,622.8 L1559.0,622.8 L1556.2,624.4 L1553.8,626.7 L1550.9,627.9 L1547.5,628.0 L1544.5,628.9 L1542.1,631.3 L1539.0,632.1 L1536.0,633.0 L1535.2,636.1 L1535.7,639.4 L1534.1,642.3 L1534.3,645.6 L1534.6,648.8 L1533.7,651.9 L1533.0,655.0 L1535.7,656.5 L1538.5,657.8 L1541.0,659.6 L1544.2,660.1 L1546.3,662.6 L1549.4,663.4 L1552.0,665.0 L1554.3,667.0 L1556.8,668.7 L1559.4,670.2 L1561.9,671.9 L1563.9,674.3 L1566.2,676.3 L1568.8,677.9 L1571.5,679.3 L1574.0,681.0"/>
<path d="M1587.0,598.0 L1589.5,596.2 L1591.9,594.3 L1595.4,594.2 L1597.8,592.3 L1600.6,591.0 L1603.0,589.0 L1606.1,588.3 L1609.3,588.3 L1612.5,588.6 L1615.7,587.9 L1618.7,587.0 L1621.8,586.1 L1625.0,585.9 L1628.2,586.3 L1631.3,584.9 L1634.5,585.0 L1637.6,584.5 L1640.8,584.6 L1643.9,584.0 L1647.0,583.0 L1647.6,580.0 L1648.2,577.0 L1649.6,574.2 L1650.9,571.5 L1652.1,568.7 L1653.5,565.9 L1654.7,563.1 L1655.0,560.0"/>
<path d="M1059.0,583.0 L1061.5,581.1 L1064.9,581.2 L1067.7,580.0 L1070.5,578.9 L1073.1,577.2 L1075.8,575.5 L1079.0,575.3 L1081.8,574.1 L1084.5,572.7 L1087.5,571.9 L1090.0,570.0 L1092.7,568.3 L1095.4,566.5 L1098.6,565.8 L1101.7,564.8 L1104.0,562.4 L1107.3,561.8 L1110.0,560.0 L1110.3,563.2 L1112.5,565.8 L1112.8,569.1 L1113.7,572.1 L1115.1,575.0 L1116.5,577.8 L1117.4,580.9 L1117.6,584.1 L1118.5,587.2 L1120.0,590.0 L1123.1,590.7 L1126.3,590.8 L1129.1,592.8 L1132.2,593.6 L1135.5,593.4 L1138.4,594.8 L1141.4,596.1 L1144.4,596.8 L1147.7,597.0 L1150.8,597.7 L1153.8,598.6 L1157.1,598.7 L1160.0,600.0 L1162.8,598.5 L1165.8,597.5 L1169.1,597.3 L1171.9,595.8 L1175.0,595.1 L1177.9,593.8 L1181.0,593.0 L1183.8,591.4 L1186.7,590.2 L1190.0,590.0 L1189.5,593.2 L1190.9,596.1 L1191.8,599.1 L1191.2,602.3 L1191.3,605.4 L1192.7,608.3 L1192.3,611.4 L1193.1,614.4 L1193.1,617.5 L1194.4,620.5 L1194.7,623.6 L1193.4,626.8 L1193.9,629.8 L1195.0,632.8 L1195.2,635.9 L1196.1,638.9 L1196.0,642.0"/>
<path d="M1113.0,497.0 L1114.8,499.5 L1117.5,501.1 L1119.0,503.9 L1121.4,505.7 L1123.5,507.9 L1125.5,510.1 L1128.6,511.3 L1131.0,513.1 L1133.0,515.4 L1135.2,517.5 L1137.0,520.0 L1139.5,522.4 L1141.4,525.3 L1142.5,528.6 L1143.9,531.8 L1146.3,534.2 L1147.5,537.6 L1150.0,540.0 L1152.8,541.7 L1156.2,541.3 L1158.9,543.2 L1162.1,543.8 L1165.0,545.0 L1168.1,546.1 L1170.1,549.0 L1173.6,549.6 L1176.1,551.8 L1178.8,553.6 L1181.2,555.7 L1184.3,556.9 L1187.3,558.2 L1190.0,560.0 L1193.1,559.7 L1196.2,559.0 L1199.5,560.2 L1202.6,560.1 L1205.6,558.5 L1208.7,558.0 L1211.9,558.2 L1215.0,558.1 L1218.2,558.9 L1221.4,558.7 L1224.5,558.4 L1227.5,556.8 L1230.8,557.9 L1233.9,557.6 L1237.0,557.0"/>
<path d="M1084.0,730.0 L1087.0,729.1 L1090.1,728.6 L1092.4,725.9 L1095.3,725.0 L1098.6,724.9 L1101.6,724.1 L1104.3,722.5 L1107.0,720.8 L1110.0,720.0 L1112.6,718.5 L1115.3,717.1 L1117.1,714.4 L1119.8,713.1 L1122.3,711.3 L1124.6,709.4 L1127.5,708.3 L1129.7,706.2 L1132.2,704.6 L1134.6,702.8 L1137.7,701.9 L1140.0,700.0 L1142.4,697.5 L1145.9,696.9 L1148.3,694.4 L1151.0,692.4 L1154.7,692.1 L1156.9,689.3 L1160.0,688.0 L1162.7,689.9 L1165.8,691.0 L1168.7,692.2 L1172.2,692.2 L1175.0,693.9 L1178.3,694.5 L1180.7,697.1 L1183.8,698.2 L1186.9,699.0 L1190.0,700.0 L1193.1,700.4 L1196.2,700.6 L1199.1,702.0 L1202.3,701.8 L1205.4,702.5 L1208.6,702.1 L1211.6,702.7 L1214.7,702.9 L1217.6,704.5 L1220.8,704.7 L1223.9,704.4 L1226.8,706.2 L1230.0,706.0"/>
<path d="M1047.0,756.0 L1050.2,754.7 L1053.5,754.1 L1056.7,752.8 L1060.0,752.2 L1063.6,752.3 L1066.6,750.6 L1070.0,750.0 L1073.0,749.0 L1076.2,749.2 L1079.2,748.5 L1082.4,749.2 L1085.3,747.4 L1088.6,748.5 L1091.4,746.5 L1094.7,747.6 L1097.7,746.8 L1100.7,745.6 L1103.8,745.7 L1106.9,745.0 L1110.0,745.0 L1113.1,744.8 L1116.2,744.9 L1119.2,745.4 L1122.2,746.8 L1125.3,747.0 L1128.4,747.1 L1131.6,745.9 L1134.6,746.5 L1137.6,747.8 L1140.8,746.5 L1143.8,747.9 L1147.0,747.4 L1150.0,748.0 L1152.8,749.7 L1156.4,749.0 L1159.1,751.3 L1162.4,751.4 L1165.6,752.0 L1168.7,752.7 L1171.4,755.0 L1174.6,755.4 L1177.9,755.8 L1180.8,757.1 L1183.6,758.9 L1187.1,758.6 L1190.0,760.0 L1192.9,761.7 L1196.3,762.6 L1199.3,764.2 L1201.8,766.7 L1204.8,768.2 L1208.3,768.9 L1211.0,771.0"/>
<path d="M1071.0,720.0 L1072.0,723.1 L1072.2,726.2 L1071.5,729.3 L1071.9,732.4 L1072.5,735.5 L1072.9,738.6 L1072.4,741.8 L1072.4,744.9 L1073.0,748.0 L1074.3,751.3 L1076.4,754.1 L1078.7,756.7 L1080.0,760.0"/>
<path d="M1160.0,688.0 L1158.2,685.2 L1158.2,681.6 L1156.5,678.7 L1155.9,675.4 L1153.7,672.7 L1153.9,669.1 L1151.9,666.3 L1151.7,662.9 L1150.0,660.0 L1153.8,659.1 L1157.0,657.0"/>
<path d="M1262.0,643.0 L1263.0,640.1 L1263.2,637.0 L1265.7,634.6 L1266.0,631.5 L1267.6,628.8 L1267.6,625.6 L1268.5,622.7 L1270.0,620.0 L1273.1,619.4 L1275.6,617.5 L1278.3,616.0 L1281.3,615.2 L1284.3,614.4 L1286.8,612.3 L1290.0,612.0 L1293.2,613.5 L1296.5,614.9 L1299.7,616.5 L1303.0,618.0"/>
<path d="M1285.0,641.0 L1287.0,643.4 L1287.5,646.6 L1288.8,649.4 L1290.1,652.2 L1292.4,654.4 L1293.2,657.5 L1295.0,660.0 L1297.0,662.4 L1298.4,665.3 L1301.3,667.0 L1302.0,670.4 L1303.7,673.0 L1306.3,675.0 L1308.1,677.5 L1310.0,680.0 L1312.3,682.2 L1314.7,684.3 L1317.7,685.7 L1318.9,689.1 L1322.2,690.3 L1324.6,692.3 L1327.1,694.3 L1329.0,697.0"/>
<path d="M1357.0,595.0 L1358.3,597.9 L1358.2,601.2 L1360.4,603.8 L1361.2,606.8 L1361.0,610.1 L1362.7,612.8 L1363.9,615.8 L1363.8,619.0 L1364.7,622.0 L1365.6,625.0 L1366.2,628.1 L1368.1,630.8 L1367.6,634.2 L1368.8,637.1 L1370.0,640.0 L1372.4,642.2 L1373.9,644.8 L1375.0,647.8 L1376.7,650.4 L1378.7,652.8 L1380.6,655.2 L1381.8,658.1 L1383.9,660.4 L1384.9,663.5 L1386.1,666.4 L1388.9,668.3 L1389.9,671.3 L1391.3,674.0 L1393.8,676.1 L1395.0,679.0"/>
<path d="M1411.0,607.0 L1411.3,610.2 L1411.9,613.2 L1413.6,615.9 L1414.4,619.0 L1414.5,622.2 L1415.9,625.0 L1416.9,628.0 L1416.8,631.2 L1417.9,634.1 L1419.5,636.9 L1420.0,640.0 L1420.3,643.0 L1420.0,646.0 L1419.7,649.0 L1418.6,652.0 L1418.7,655.0 L1418.4,658.0 L1419.0,661.0"/>
<path d="M1195.0,832.0 L1198.1,833.3 L1201.2,834.1 L1204.7,833.4 L1207.7,834.9 L1210.7,836.4 L1213.9,837.1 L1217.4,836.7 L1220.5,837.7 L1223.6,838.8 L1226.9,839.0 L1230.0,840.0 L1233.0,840.6 L1236.1,840.2 L1239.0,841.4 L1242.0,842.0 L1245.1,841.6 L1248.1,842.4 L1250.9,844.3 L1253.9,844.5 L1256.9,845.3 L1260.0,845.0 L1263.1,844.3 L1266.2,843.7 L1269.2,843.0 L1272.2,842.1 L1274.8,839.7 L1278.1,839.8 L1280.9,838.3 L1284.1,838.1 L1286.9,836.5 L1290.0,836.0"/>
<path d="M818.0,834.0 L821.0,834.9 L823.8,836.3 L826.9,836.6 L830.1,836.7 L833.0,838.0 L836.0,838.6 L838.8,840.3 L842.1,839.9 L845.1,840.7 L847.9,842.1 L851.2,842.0 L854.0,843.6 L856.8,845.0 L860.0,845.0 L862.7,846.7 L865.6,848.0 L868.0,849.9 L870.6,851.7 L873.7,852.8 L876.4,854.4 L879.0,856.1 L881.5,858.0 L884.1,859.9 L886.9,861.3 L889.6,862.9 L892.4,864.4 L894.6,866.7 L897.0,868.9 L900.0,870.0 L903.1,870.8 L906.2,871.4 L909.3,872.1 L912.6,872.0 L915.6,873.5 L918.8,873.7 L921.9,874.5 L925.0,875.2 L928.1,875.6 L931.3,875.9 L934.5,876.4 L937.6,877.0 L940.6,878.1 L943.8,878.5 L946.8,879.5 L950.0,880.0 L953.0,878.8 L956.2,879.1 L959.4,879.7 L962.5,878.3 L965.6,878.5 L968.7,878.1 L971.8,877.4 L975.1,878.4 L978.1,876.8 L981.3,877.4 L984.3,876.0 L987.4,875.5 L990.7,876.6 L993.7,875.5 L996.8,874.5 L1000.0,875.0 L1003.0,874.1 L1006.0,873.6 L1009.1,873.4 L1011.8,871.6 L1014.9,871.2 L1018.2,871.8 L1021.1,870.8 L1023.9,869.1 L1026.9,868.7 L1029.9,868.1 L1033.1,868.0 L1036.0,867.2 L1039.1,866.9 L1042.1,866.2 L1045.0,865.0"/>
<path d="M911.0,832.0 L910.1,835.3 L908.9,838.5 L908.0,841.7 L907.1,845.0 L906.8,848.4 L905.4,851.6 L905.0,855.0 L905.9,858.3 L906.8,861.5 L909.4,864.1 L909.4,867.7 L912.1,870.3 L912.1,873.9 L913.6,876.9 L915.0,880.0 L918.0,881.0 L920.7,882.8 L924.0,883.1 L927.0,883.9 L929.8,885.5 L932.8,886.6 L935.9,887.2 L939.1,887.8 L942.0,888.9 L945.0,889.9 L947.9,891.4 L951.1,891.6 L954.1,892.8 L957.0,894.1 L960.0,895.0"/>
<path d="M930.0,796.0 L932.0,798.3 L933.8,800.7 L934.9,803.6 L936.6,806.1 L938.9,808.1 L940.8,810.5 L943.0,812.7 L944.6,815.2 L946.6,817.5 L947.7,820.4 L949.5,822.8 L952.0,824.7 L952.6,828.0 L955.0,830.0 L958.0,830.7 L960.5,832.6 L963.4,833.6 L966.2,834.8 L969.5,834.5 L972.2,835.9 L975.0,837.0"/>
<path d="M999.0,776.0 L998.8,779.1 L1000.9,781.9 L1001.3,784.9 L1000.9,788.0 L1001.5,791.0 L1001.3,794.1 L1002.0,797.1 L1003.0,800.0 L1005.4,801.9 L1007.4,804.4 L1010.3,805.5 L1012.8,807.3 L1015.1,809.4 L1017.8,810.7 L1020.3,812.5 L1022.5,814.7 L1025.3,816.1 L1027.1,818.8 L1030.0,820.0 L1031.4,822.9 L1033.3,825.6 L1035.6,828.0 L1036.9,831.0 L1038.5,833.8 L1039.9,836.7 L1041.6,839.5 L1042.7,842.6 L1045.0,845.0"/>
<path d="M1057.0,779.0 L1056.5,782.2 L1057.6,785.2 L1058.0,788.3 L1058.0,791.4 L1057.6,794.6 L1059.1,797.6 L1059.0,800.7 L1058.8,803.9 L1060.3,806.8 L1060.0,810.0 L1062.5,812.0 L1063.8,815.1 L1066.3,817.1 L1068.9,818.9 L1071.6,820.6 L1072.8,823.8 L1075.3,825.8 L1077.4,828.2 L1080.0,830.0"/>
<path d="M1195.0,784.0 L1193.8,787.0 L1193.6,790.1 L1194.1,793.2 L1194.3,796.3 L1193.7,799.4 L1193.0,802.4 L1192.7,805.5 L1192.9,808.6 L1192.6,811.7 L1191.4,814.6 L1191.1,817.7 L1191.3,820.8 L1189.8,823.8 L1190.1,826.9 L1190.0,830.0"/>
<path d="M1201.0,895.0 L1202.7,892.3 L1205.5,890.8 L1208.2,889.2 L1209.9,886.5 L1212.7,885.0 L1214.2,882.0 L1216.8,880.3 L1219.8,879.0 L1221.8,876.6 L1224.1,874.6 L1225.9,871.9 L1228.5,870.3 L1230.9,868.3 L1232.8,865.9 L1235.6,864.3 L1237.7,862.1 L1240.0,860.0 L1242.7,861.8 L1245.9,862.0 L1248.9,862.7 L1252.0,863.1 L1254.9,864.1 L1257.5,866.1 L1260.8,866.0 L1263.8,866.9 L1266.7,868.0 L1269.5,869.5 L1272.2,871.0 L1275.3,871.6 L1278.1,872.8 L1281.5,872.5 L1284.5,873.4 L1287.0,875.6 L1290.2,875.8 L1292.9,877.4 L1296.0,878.0"/>
</g>
<g fill="none" stroke="#8c8eae" stroke-width="1" stroke-linejoin="round">
<path d="M394.0,343.0 L396.2,345.2 L398.5,347.3 L400.0,350.0 L402.0,352.4 L403.8,354.8 L404.2,358.2 L406.3,360.5 L408.0,363.0 L404.8,365.2 L401.4,367.1 L398.0,369.0 L394.1,371.2 L390.0,373.0 L392.7,376.6 L394.0,381.0 L392.6,384.2 L392.5,387.6 L392.0,391.0 L394.4,394.6 L398.0,397.0 L395.4,399.7 L392.5,402.2 L390.0,405.0 L393.0,407.3 L395.9,409.8 L398.0,413.0 L395.3,415.9 L393.5,419.3 L392.0,423.0 L392.8,425.9 L392.3,429.1 L392.9,432.1 L394.0,435.0 L398.0,436.0 L401.0,437.3 L403.5,439.4 L406.0,441.5 L409.2,442.4 L412.0,444.0 L411.2,447.2 L412.5,450.4 L412.2,453.6 L411.6,456.8 L412.0,460.0"/>
<path d="M636.0,494.0 L636.9,497.3 L637.1,500.8 L636.5,504.3 L637.6,507.6 L638.0,511.0 L641.0,512.1 L644.4,511.7 L647.5,512.1 L650.6,513.0 L653.8,513.3 L656.7,515.3 L660.0,515.0 L661.4,518.1 L661.9,521.4 L663.7,524.4 L663.9,527.8 L665.0,531.0 L668.6,531.8 L672.0,532.8 L675.7,533.2 L679.0,535.0 L681.1,537.7 L681.5,541.3 L683.7,543.9 L685.0,547.0 L688.4,546.0 L691.9,545.4 L695.4,545.1 L699.0,545.0 L701.4,547.4 L703.7,549.8 L705.0,553.0 L704.7,556.4 L705.3,559.8 L705.6,563.2 L704.6,566.6 L705.0,570.0 L708.0,568.7 L711.2,568.4 L714.5,568.9 L717.5,567.1 L720.7,567.0 L724.0,567.2 L727.0,566.0 L729.4,564.0 L730.5,560.9 L733.0,559.0 L733.3,562.4 L732.6,565.8 L733.2,569.2 L732.2,572.6 L733.0,576.0 L735.8,577.2 L737.5,580.0 L740.5,581.0 L743.3,582.3 L745.5,584.3 L748.0,586.0 L750.5,588.4 L751.7,591.8 L754.4,594.1 L755.4,597.6 L758.0,600.0 L761.0,599.8 L764.0,599.1 L766.9,598.5 L770.0,598.9 L772.9,597.8 L776.0,598.0 L778.6,601.0 L782.0,603.0 L785.1,601.7 L788.4,601.8 L791.6,601.3 L794.7,600.2 L798.0,600.0 L800.4,602.4 L803.5,603.8 L806.0,606.0 L807.8,608.8 L809.9,611.4 L812.3,613.8 L814.2,616.5 L816.6,618.9 L818.0,622.0 L821.8,622.1 L825.2,624.0 L829.0,624.0 L832.5,623.2 L836.0,623.3 L839.4,621.8 L843.0,622.0 L844.9,624.7 L847.2,627.2 L849.0,630.0 L852.7,630.7 L856.4,631.0 L860.0,632.0 L863.4,632.0 L866.5,633.3 L869.7,633.9 L873.0,634.5 L876.0,636.0 L874.4,638.6 L873.9,641.7 L872.4,644.3 L871.0,647.0 L868.4,648.8 L866.6,651.2 L864.5,653.3 L863.0,656.0 L861.1,659.0 L861.1,662.7 L859.6,665.9 L858.0,669.0 L858.0,672.2 L856.0,674.9 L855.1,677.9 L854.8,681.1 L853.9,684.0 L852.6,686.9 L852.0,690.0 L851.4,693.1 L851.9,696.3 L850.5,699.4 L851.1,702.6 L850.3,705.7 L850.9,708.9 L850.0,712.0 L850.7,715.2 L849.3,718.5 L849.6,721.8 L850.0,725.0"/>
<path d="M776.0,598.0 L775.9,594.9 L774.2,592.1 L773.7,589.1 L773.4,586.1 L773.0,583.1 L772.7,580.1 L772.3,577.0 L772.0,574.0 L773.0,570.7 L775.0,568.2 L777.2,565.6 L778.2,562.4 L780.9,560.1 L782.0,557.0 L785.0,557.1 L788.0,557.0 L788.6,560.4 L790.4,563.4 L791.1,566.7 L792.0,570.0 L793.7,572.9 L796.2,575.2 L798.0,578.0 L798.9,581.1 L797.4,584.3 L797.5,587.4 L798.4,590.6 L798.8,593.7 L797.4,596.9 L798.0,600.0"/>
<path d="M788.0,557.0 L790.2,554.3 L791.3,550.9 L793.6,548.3 L795.4,545.4 L798.0,543.0 L797.3,539.6 L795.1,536.8 L795.1,533.1 L793.6,530.0 L792.0,527.0 L789.0,525.0 L787.2,521.8 L784.4,519.6 L782.0,517.0 L778.6,516.1 L775.1,515.4 L771.4,515.9 L768.0,515.0 L767.3,511.0 L768.0,507.0 L770.6,505.0 L771.9,501.9 L774.6,500.0 L776.0,497.0"/>
<path d="M669.0,476.0 L671.0,481.0 L673.9,482.0 L676.9,482.8 L679.9,483.6 L682.9,483.9 L686.0,484.3 L689.0,485.0 L691.6,482.8 L695.2,482.3 L697.9,480.4 L701.0,479.0 L704.3,478.2 L707.0,476.0 L709.3,473.5 L712.6,472.4 L715.0,470.0 L718.4,468.7 L722.1,469.4 L725.6,469.0 L729.0,468.0 L732.4,468.2 L735.7,469.4 L739.0,470.0 L740.1,473.0 L742.3,475.1 L744.2,477.5 L746.0,480.0 L749.3,480.2 L752.5,480.4 L755.6,481.5 L758.8,482.2 L762.0,483.0 L765.3,484.3 L768.2,486.2 L771.3,487.7 L774.0,490.0 L773.0,492.9 L772.4,495.9 L772.0,499.0 L771.1,502.5 L769.8,505.8 L768.0,509.0 L769.0,512.0"/>
<path d="M776.0,497.0 L779.0,495.0 L781.9,492.9 L785.4,491.7 L788.0,489.0 L788.5,485.5 L789.2,482.1 L791.1,479.0 L790.6,475.3 L792.0,472.0 L791.1,468.6 L789.7,465.4 L789.5,461.8 L788.1,458.6 L787.4,455.2 L786.0,452.0 L782.0,448.0 L785.8,445.9 L790.0,445.0 L792.9,444.3 L795.7,443.2 L798.5,441.9 L801.5,441.5 L804.4,440.6 L807.0,439.0 L810.0,436.4 L813.5,434.7 L817.0,433.0 L814.8,429.1 L813.0,425.0 L815.2,422.7 L817.5,420.7 L820.3,419.2 L822.7,417.2 L825.7,416.1 L828.0,414.0 L827.2,410.5 L825.8,407.1 L825.4,403.6 L825.0,400.0 L821.5,399.1 L817.9,398.2 L814.3,397.6 L811.0,396.0 L810.9,392.5 L811.5,389.2 L813.0,386.0 L816.5,386.9 L820.0,386.5 L823.5,385.3 L827.0,386.0 L828.1,382.8 L829.3,379.7 L829.4,376.3 L830.0,373.0 L830.3,369.8 L832.0,367.0 L832.9,364.0 L833.5,360.8 L835.0,358.0 L834.8,354.5 L833.6,351.1 L835.0,347.4 L834.0,344.0"/>
<path d="M850.0,725.0 L853.3,724.8 L856.5,724.2 L859.9,724.3 L863.0,723.0 L866.3,722.8 L869.4,721.6 L872.7,721.0 L876.0,721.0 L878.2,718.7 L880.7,716.7 L884.1,716.0 L886.7,714.3 L889.0,712.0 L892.0,711.6 L895.0,712.0 L898.2,712.9 L900.9,715.0 L903.7,716.8 L906.7,718.3 L910.0,719.0 L913.3,719.3 L916.2,721.2 L919.3,722.1 L922.5,722.8 L925.8,723.0 L929.0,723.6 L932.0,725.0 L934.9,726.2 L938.1,726.0 L941.0,727.0 L944.1,728.6 L947.0,730.7 L950.1,732.2 L952.7,734.7 L956.0,736.0 L957.8,739.5 L959.4,743.1 L960.0,747.0 L961.7,744.2 L963.3,741.4 L965.2,738.7 L966.6,735.7 L968.5,733.1 L970.1,730.2 L971.0,727.0 L974.0,727.5 L977.0,728.0 L980.1,727.9 L983.1,728.6 L986.0,729.6 L989.0,730.0 L992.0,729.0 L994.2,731.7 L995.0,735.0 L998.5,734.7 L1001.7,733.2 L1005.2,733.1 L1008.7,733.4 L1012.0,732.0 L1014.6,729.4 L1017.5,727.3 L1020.9,725.9 L1024.0,724.0 L1026.7,722.4 L1029.9,722.1 L1032.3,719.8 L1035.7,720.1 L1038.6,719.0 L1041.4,717.7 L1044.1,716.0 L1047.0,715.0 L1049.3,717.3 L1051.0,720.0 L1054.3,720.3 L1057.7,720.0 L1061.0,719.9 L1064.3,719.7 L1067.7,719.9 L1071.0,720.0 L1073.4,722.2 L1075.8,724.5 L1078.4,726.6 L1081.8,727.5 L1084.0,730.0 L1083.6,726.3 L1083.9,722.7 L1084.0,719.0 L1082.9,716.2 L1081.3,713.5 L1079.9,710.8 L1078.5,708.1 L1078.0,705.0 L1075.0,701.0 L1073.9,697.8 L1073.4,694.5 L1073.6,691.1 L1072.0,688.0 L1075.0,687.1 L1077.5,685.6 L1080.2,684.2 L1082.8,682.7 L1085.1,680.7 L1087.9,679.5 L1089.8,676.8 L1093.0,676.3 L1095.5,674.7 L1098.0,673.0 L1098.7,669.6 L1100.1,666.4 L1101.0,663.0 L1104.2,663.2 L1107.0,661.8 L1110.1,661.5 L1112.9,660.2 L1116.0,660.0 L1117.2,655.9 L1119.0,652.0"/>
<path d="M850.0,725.0 L847.5,726.9 L846.6,730.2 L844.0,732.0 L840.9,732.2 L838.0,731.0 L835.0,731.1 L831.9,731.4 L829.0,730.0 L826.0,730.0 L824.5,733.1 L822.5,735.9 L821.0,739.0 L826.0,742.0 L823.9,744.4 L821.6,746.6 L819.4,748.9 L817.5,751.5 L815.7,754.1 L813.0,756.0 L810.8,758.6 L807.3,759.9 L805.1,762.5 L803.1,765.3 L800.0,767.0 L799.3,770.3 L800.4,773.7 L800.0,777.0 L797.8,779.6 L794.8,781.0 L792.5,783.4 L789.6,785.0 L787.0,787.0 L786.9,790.0 L787.0,793.0 L789.1,796.1 L790.2,799.7 L792.0,803.0 L795.0,808.0 L792.5,810.0 L789.4,810.8 L786.5,812.1 L784.1,814.3 L781.0,815.0 L781.0,812.0"/>
<path d="M813.0,801.0 L814.8,803.9 L817.0,806.6 L818.0,810.0 L819.1,813.0 L819.4,816.2 L821.0,819.0 L822.6,822.4 L824.0,825.8 L826.0,829.0 L823.1,830.3 L821.0,832.9 L818.0,834.0 L818.3,837.5 L820.0,840.5 L822.2,843.3 L822.1,846.9 L824.0,849.8 L825.0,853.0 L827.2,855.2 L827.8,858.5 L830.2,860.6 L832.0,863.0 L829.4,864.9 L828.0,868.0 L824.9,869.4 L823.0,872.0 L819.8,874.0 L816.2,874.9 L812.6,876.0 L809.0,877.0 L811.1,879.6 L811.5,883.1 L813.0,886.0 L815.7,888.7 L818.0,891.8 L820.0,895.0"/>
<path d="M826.0,829.0 L829.1,828.7 L832.0,827.5 L835.2,827.7 L838.0,826.5 L841.1,826.3 L844.0,825.0 L847.4,825.5 L850.7,826.5 L854.1,826.9 L857.7,826.0 L861.0,827.0 L862.8,824.2 L863.6,820.9 L865.7,818.2 L867.0,815.1 L868.7,812.3 L869.0,808.7 L871.0,806.0 L873.5,804.1 L876.6,803.0 L879.4,801.7 L881.9,799.7 L883.9,797.0 L887.0,796.0 L887.3,799.0 L888.7,801.9 L888.4,805.0 L889.0,808.0 L891.1,811.1 L894.5,813.0 L895.9,816.8 L899.0,819.0 L900.5,821.7 L902.9,823.7 L904.7,826.2 L906.0,829.0 L911.0,832.0 L913.0,827.0 L910.9,824.6 L909.0,822.0 L911.0,819.3 L912.1,816.1 L912.9,812.7 L914.2,809.6 L915.9,806.7 L918.5,804.2 L919.0,800.7 L921.0,798.0 L923.1,795.6 L925.0,793.0 L930.0,796.0 L931.4,799.4 L932.0,803.0 L935.2,803.0 L938.3,802.2 L941.4,801.5 L944.6,802.5 L947.7,801.6 L950.9,801.6 L954.0,801.0 L955.6,803.7 L957.4,806.2 L960.0,808.0 L958.6,805.2 L958.6,802.1 L957.7,799.1 L957.7,796.0 L957.8,792.9 L957.1,789.9 L956.0,787.0 L958.9,785.8 L961.9,785.8 L965.0,786.0 L968.8,788.0 L973.0,789.0"/>
<path d="M941.0,727.0 L937.4,728.2 L934.0,730.0 L934.2,733.2 L934.0,736.4 L934.6,739.6 L933.4,742.8 L934.0,746.0 L933.5,749.4 L932.0,752.5 L932.0,756.0 L935.3,757.2 L939.0,757.3 L942.3,758.7 L945.7,759.5 L949.0,761.0 L951.3,763.8 L954.4,765.6 L957.8,767.1 L960.0,770.0 L962.4,767.8 L965.2,766.5 L968.0,765.0 L969.3,768.5 L970.4,772.0 L971.9,775.4 L973.0,779.0 L973.3,782.3 L973.9,785.7 L973.0,789.0 L975.9,791.6 L979.0,794.0 L981.3,791.5 L983.4,788.9 L986.5,787.2 L989.6,785.7 L991.0,782.1 L993.6,780.0 L996.7,778.5 L999.0,776.0 L999.4,772.9 L1000.1,769.9 L1001.3,767.0 L1002.0,764.0 L1005.1,763.3 L1008.3,763.6 L1011.4,763.2 L1014.6,763.7 L1017.8,763.5 L1020.8,761.5 L1024.0,762.0 L1027.3,761.2 L1030.7,760.8 L1034.0,760.1 L1037.3,759.0 L1040.5,757.9 L1043.8,757.1 L1047.0,756.0 L1046.2,759.4 L1045.4,762.8 L1044.0,766.0 L1045.8,768.5 L1047.9,770.8 L1049.9,773.1 L1052.4,774.9 L1055.1,776.6 L1057.0,779.0 L1059.8,780.7 L1062.8,781.9 L1066.0,782.8 L1069.0,784.0 L1072.1,784.6 L1075.3,784.5 L1078.4,785.2 L1081.5,785.3 L1084.7,785.1 L1087.8,786.0 L1090.9,786.3 L1094.0,787.0 L1097.2,788.7 L1100.8,788.6 L1104.3,789.2 L1107.7,789.8 L1111.0,791.0"/>
<path d="M1111.0,791.0 L1114.5,791.1 L1117.8,791.9 L1121.3,792.2 L1124.8,792.5 L1128.0,794.0 L1131.2,795.5 L1134.7,795.6 L1138.0,796.4 L1141.3,797.5 L1144.8,797.8 L1148.0,799.0 L1149.9,796.4 L1152.1,794.1 L1154.8,792.2 L1157.1,790.1 L1159.9,788.5 L1162.0,786.0 L1166.0,784.1 L1170.0,782.0 L1173.1,783.0 L1176.3,782.2 L1179.3,783.5 L1182.5,783.1 L1185.7,782.5 L1188.8,782.9 L1191.9,783.9 L1195.0,784.0 L1198.2,782.5 L1200.2,779.5 L1203.3,777.9 L1205.6,775.2 L1208.8,773.7 L1211.0,771.0 L1213.4,767.4 L1217.0,765.0 L1220.5,764.0 L1224.2,763.7 L1227.4,761.6 L1231.0,761.0 L1229.3,757.8 L1227.5,754.7 L1227.0,751.0 L1227.4,747.3 L1228.6,743.9 L1230.4,740.6 L1231.0,737.0 L1232.6,734.0 L1234.9,731.4 L1236.6,728.4 L1239.0,726.0 L1235.8,723.8 L1232.7,721.4 L1229.0,720.0 L1232.1,719.3 L1234.8,717.5 L1238.1,717.4 L1241.0,716.0 L1244.5,716.8 L1248.0,716.2 L1251.5,715.2 L1255.0,716.0 L1255.9,713.1 L1256.3,710.1 L1255.7,707.0 L1255.7,703.9 L1256.1,700.9 L1257.0,698.0 L1260.0,697.0 L1258.6,693.5 L1257.0,690.0 L1256.9,686.8 L1255.6,683.9 L1255.3,680.8 L1253.3,678.1 L1253.0,675.0 L1251.7,671.4 L1251.4,667.5 L1250.0,664.0 L1250.6,660.7 L1250.5,657.3 L1251.0,654.0"/>
<path d="M1111.0,791.0 L1108.7,793.8 L1107.2,797.2 L1105.7,800.4 L1103.0,803.0 L1100.6,806.1 L1098.0,809.0 L1100.6,810.7 L1101.8,813.7 L1104.2,815.6 L1106.0,818.0 L1103.0,823.0 L1105.5,825.5 L1108.0,828.0 L1107.8,832.0 L1108.0,836.0 L1110.7,838.1 L1112.8,840.8 L1115.8,842.6 L1117.1,846.1 L1120.0,848.0"/>
<path d="M1211.0,771.0 L1214.0,772.1 L1216.7,773.8 L1220.3,773.2 L1223.0,775.0 L1224.4,778.3 L1225.8,781.6 L1228.1,784.5 L1230.1,787.5 L1231.0,791.0 L1227.7,791.6 L1224.3,791.6 L1221.0,791.0 L1220.5,795.0 L1221.0,799.0 L1218.4,800.8 L1215.1,800.8 L1212.5,802.6 L1209.5,803.5 L1206.7,804.6 L1203.8,805.8 L1201.0,807.0 L1198.2,808.8 L1195.6,810.9 L1193.0,813.0 L1195.3,815.8 L1196.6,819.2 L1199.0,822.0 L1198.1,825.5 L1196.0,828.5 L1195.0,832.0 L1191.8,833.2 L1188.8,834.8 L1186.2,837.1 L1182.8,838.0 L1180.0,840.0 L1180.0,844.0 L1177.0,845.3 L1175.1,848.1 L1172.7,850.3 L1170.0,852.0 L1173.3,854.0 L1176.3,856.7 L1180.0,858.0 L1176.7,858.7 L1173.3,858.9 L1170.0,858.0 L1166.6,856.0 L1163.5,853.8 L1160.0,852.0 L1157.2,850.2 L1153.9,849.4 L1151.4,847.0 L1147.8,846.8 L1145.0,845.0 L1142.0,845.6 L1139.6,847.7 L1136.8,848.8 L1133.9,849.6 L1131.1,850.7 L1128.0,851.0"/>
<path d="M1231.0,791.0 L1234.0,793.0 L1236.9,795.1 L1240.3,796.5 L1243.0,799.0 L1244.8,802.0 L1248.0,803.6 L1250.6,805.8 L1253.0,808.2 L1255.0,811.0 L1256.7,813.9 L1258.4,816.7 L1261.5,818.4 L1263.7,820.9 L1265.0,824.0 L1267.3,826.0 L1270.4,826.8 L1272.3,829.5 L1275.4,830.4 L1278.0,832.0 L1281.4,833.2 L1285.1,833.7 L1288.4,835.5 L1292.0,836.0 L1295.3,836.1 L1298.7,836.0 L1302.0,837.2 L1305.4,836.0 L1308.6,837.3 L1312.0,837.0 L1314.7,834.8 L1318.1,834.2 L1320.9,832.3 L1324.3,831.6 L1326.6,828.8 L1330.0,828.0 L1333.4,827.6 L1336.6,826.8 L1340.1,827.2 L1343.5,826.8 L1346.7,825.7 L1350.0,825.0 L1352.3,823.0 L1354.9,821.5 L1357.5,819.9 L1360.2,818.6 L1362.6,816.7 L1365.1,815.1 L1368.0,814.0 L1371.0,814.5 L1374.0,814.3 L1377.0,813.6 L1380.0,814.9 L1383.0,813.5 L1386.0,814.1 L1389.0,813.4 L1392.0,814.7 L1395.0,814.0 L1398.2,813.9 L1400.9,812.1 L1404.1,812.2 L1407.0,811.0 L1410.2,810.4 L1412.9,808.4 L1415.9,807.3 L1419.0,806.5 L1422.2,806.0 L1424.8,803.7 L1428.1,803.4 L1431.0,802.0 L1432.7,799.5 L1434.1,796.8 L1435.8,794.4 L1437.9,792.1 L1438.4,788.9 L1441.0,786.9 L1442.0,784.0 L1442.8,780.9 L1444.5,778.2 L1445.6,775.2 L1445.5,771.8 L1447.6,769.2 L1448.0,766.0 L1450.5,763.9 L1451.1,760.7 L1452.4,757.8 L1454.3,755.3 L1457.3,753.6 L1457.6,750.1 L1460.0,748.0 L1461.7,745.4 L1461.4,742.1 L1463.4,739.6 L1463.3,736.4 L1464.4,733.6 L1466.0,731.0 L1468.3,728.7 L1469.4,725.5 L1471.8,723.3 L1474.6,721.5 L1476.3,718.7 L1478.0,716.0 L1480.8,714.8 L1483.3,713.1 L1484.7,709.9 L1487.3,708.4 L1490.0,707.0 L1493.3,705.7 L1496.2,703.7 L1498.6,700.9 L1502.0,699.8 L1505.0,698.0"/>
<path d="M1395.0,814.0 L1397.4,816.0 L1399.1,818.6 L1401.5,820.5 L1403.7,822.8 L1404.3,826.2 L1407.0,828.0 L1409.1,830.2 L1410.1,833.2 L1412.9,834.8 L1414.2,837.6 L1416.0,840.0 L1417.1,842.9 L1417.0,846.0 L1417.9,848.9 L1417.4,852.0 L1418.8,854.9 L1418.1,858.1 L1419.0,861.0 L1422.0,862.5 L1425.3,863.4 L1428.1,865.3 L1431.0,867.0 L1433.8,868.2 L1436.3,870.1 L1439.5,870.4 L1442.4,871.3 L1445.0,873.0 L1445.7,876.4 L1448.0,879.0 L1448.8,882.5 L1450.4,885.6 L1452.6,888.4 L1454.1,891.6 L1455.0,895.0"/>
<path d="M1330.0,828.0 L1331.0,830.9 L1332.0,833.8 L1332.6,836.8 L1332.4,840.0 L1333.0,843.0 L1334.4,845.9 L1335.3,849.0 L1336.8,851.9 L1338.6,854.7 L1339.0,858.0 L1340.7,861.2 L1342.8,864.2 L1344.9,867.0 L1347.0,870.0 L1350.0,871.1 L1352.9,872.3 L1356.0,873.0 L1353.1,874.6 L1351.0,877.0 L1349.0,879.5 L1347.0,882.0 L1345.9,885.3 L1344.8,888.6 L1343.4,891.8 L1342.0,895.0"/>
<path d="M1201.0,895.0 L1202.1,891.8 L1201.4,888.4 L1201.7,885.1 L1202.0,881.8 L1201.8,878.5 L1203.6,875.4 L1203.0,872.0 L1206.3,871.7 L1209.3,873.3 L1212.3,874.5 L1215.7,873.9 L1218.7,875.1 L1221.9,875.2 L1225.0,876.0 L1227.9,874.6 L1230.8,873.5 L1233.8,872.3 L1237.2,872.6 L1240.2,871.5 L1243.2,870.7 L1245.7,868.2 L1249.0,868.0 L1252.0,869.5 L1255.4,870.0 L1258.3,871.7 L1261.5,872.7 L1264.8,873.4 L1267.6,875.7 L1271.0,876.0 L1274.2,875.4 L1277.2,876.9 L1280.3,877.4 L1283.5,877.0 L1286.6,877.4 L1289.7,878.4 L1292.9,877.3 L1296.0,878.0 L1299.1,878.5 L1302.2,878.9 L1305.3,878.4 L1308.4,879.3 L1311.6,878.9 L1314.7,879.4 L1317.8,879.8 L1320.9,880.1 L1324.0,880.0 L1325.9,882.8 L1327.0,886.1 L1328.7,889.0 L1330.8,891.8 L1332.0,895.0"/>
<path d="M1119.0,652.0 L1121.4,654.2 L1124.3,655.7 L1126.0,658.6 L1129.0,660.0 L1132.0,660.0 L1135.0,660.4 L1138.0,660.0 L1141.0,660.0 L1144.0,660.0 L1147.1,658.8 L1150.4,657.9 L1153.9,658.5 L1157.0,657.0 L1157.8,654.0 L1158.5,651.0 L1159.3,648.0 L1160.0,645.0 L1162.2,642.6 L1163.1,639.2 L1164.8,636.4 L1167.0,634.0 L1170.8,636.0 L1175.0,637.0 L1178.0,637.6 L1180.9,638.7 L1183.9,639.7 L1186.8,640.5 L1189.8,641.2 L1193.2,640.5 L1196.0,642.0 L1199.1,643.4 L1201.7,645.7 L1204.7,647.3 L1208.3,647.8 L1211.0,650.0 L1214.3,649.4 L1217.6,649.6 L1220.9,649.3 L1224.1,649.7 L1227.4,650.5 L1230.7,650.0 L1234.0,650.0 L1237.4,650.7 L1241.0,650.9 L1244.2,652.2 L1247.4,654.1 L1251.0,654.0 L1253.4,652.0 L1255.3,649.5 L1257.6,647.4 L1260.2,645.6 L1262.0,643.0 L1265.3,643.2 L1268.5,641.8 L1271.9,642.5 L1275.1,641.6 L1278.4,641.6 L1281.7,640.8 L1285.0,641.0 L1286.8,638.3 L1288.8,635.7 L1290.8,633.2 L1292.3,630.2 L1294.6,627.9 L1297.1,625.7 L1298.4,622.6 L1300.5,620.2 L1303.0,618.0 L1305.8,615.5 L1307.7,612.2 L1310.3,609.5 L1313.0,607.0 L1315.8,605.4 L1319.2,605.2 L1321.7,602.8 L1325.1,602.6 L1328.2,601.8 L1331.0,600.0"/>
<path d="M1260.0,697.0 L1262.8,698.4 L1264.9,700.6 L1267.0,703.0 L1269.6,704.6 L1272.3,706.1 L1275.1,707.5 L1277.0,710.0 L1280.3,711.2 L1283.6,712.3 L1286.6,714.1 L1290.0,715.0 L1293.3,714.3 L1296.6,714.3 L1299.9,714.4 L1303.2,714.4 L1306.4,713.3 L1309.7,713.1 L1313.0,713.0 L1316.3,712.4 L1319.7,712.2 L1322.6,710.2 L1326.0,710.0 L1327.6,706.9 L1327.9,703.6 L1328.0,700.2 L1329.0,697.0 L1332.0,696.9 L1335.0,695.9 L1337.9,695.0 L1341.1,695.9 L1344.0,695.0 L1346.4,693.2 L1349.0,691.7 L1351.5,690.0 L1354.4,688.9 L1356.8,687.1 L1359.0,685.0 L1362.2,685.0 L1365.0,686.8 L1368.0,687.4 L1371.0,688.3 L1373.8,689.8 L1377.0,690.0 L1379.5,688.3 L1382.1,686.8 L1385.1,685.9 L1387.2,683.6 L1389.8,682.1 L1392.4,680.6 L1395.0,679.0 L1397.1,676.3 L1398.5,673.1 L1400.2,670.2 L1401.2,666.9 L1403.0,664.0 L1406.0,662.6 L1409.5,663.1 L1412.6,662.3 L1415.9,662.1 L1419.0,661.0 L1422.3,661.6 L1425.6,660.6 L1428.9,660.9 L1432.2,660.8 L1435.4,662.3 L1438.7,661.1 L1442.0,662.0 L1444.8,663.2 L1446.5,666.0 L1449.1,667.5 L1452.1,668.6 L1454.0,671.0 L1457.0,671.3 L1460.0,671.4 L1463.0,671.0 L1466.0,670.2 L1469.0,671.3 L1472.0,671.0 L1474.5,672.7 L1476.7,674.7 L1478.7,677.1 L1481.3,678.7 L1484.0,680.0 L1485.9,682.5 L1489.1,683.5 L1491.2,685.8 L1493.3,688.0 L1496.2,689.3 L1497.4,692.7 L1500.6,693.7 L1502.9,695.7 L1505.0,698.0 L1507.8,696.2 L1510.8,694.6 L1514.3,694.1 L1517.0,692.0 L1520.3,693.1 L1523.7,694.0 L1527.0,694.9 L1530.6,695.2 L1533.8,696.7 L1537.0,698.0 L1539.9,699.0 L1542.9,699.1 L1545.9,699.5 L1549.0,698.8 L1552.1,699.0 L1555.1,699.0 L1558.0,700.2 L1561.0,700.2 L1564.0,700.6 L1567.0,701.0 L1570.0,701.7 L1573.0,702.6 L1576.1,703.0 L1579.0,704.0 L1581.2,706.4 L1584.3,707.6 L1586.0,710.6 L1588.9,712.1 L1592.0,713.4 L1594.0,716.0 L1596.8,714.9 L1599.8,714.4 L1602.7,713.4 L1605.7,712.8 L1608.5,711.6 L1611.3,710.7 L1614.5,710.8 L1617.2,709.1 L1620.3,709.0 L1623.2,708.3 L1626.0,707.0 L1628.7,705.2 L1631.2,703.1 L1634.4,701.9 L1636.5,699.3 L1639.6,698.0 L1641.4,694.9 L1644.4,693.5 L1647.2,691.9 L1649.3,689.2 L1652.7,688.4 L1655.0,686.0"/>
<path d="M1119.0,652.0 L1116.4,650.2 L1115.1,647.2 L1113.0,645.0 L1110.1,643.3 L1108.5,640.1 L1105.6,638.4 L1103.4,635.9 L1100.5,634.2 L1098.0,632.0 L1096.1,629.2 L1094.0,626.7 L1091.3,624.5 L1089.0,622.0 L1087.8,618.8 L1084.7,617.0 L1083.0,614.0 L1080.8,611.2 L1077.3,610.1 L1074.5,608.1 L1071.9,605.9 L1070.0,602.8 L1067.0,601.0 L1066.4,597.7 L1064.2,595.1 L1063.3,591.9 L1061.3,589.2 L1061.0,585.7 L1059.0,583.0 L1059.3,579.8 L1058.4,576.6 L1058.2,573.4 L1059.4,570.2 L1059.0,567.0 L1056.5,564.4 L1056.0,560.7 L1053.4,558.2 L1052.0,555.0 L1049.0,552.7 L1046.8,549.6 L1044.0,547.0 L1041.1,544.6 L1038.7,541.6 L1036.0,539.0 L1039.1,538.9 L1041.9,540.7 L1045.1,540.2 L1047.9,541.6 L1051.1,540.9 L1054.0,542.0 L1057.4,541.3 L1060.8,540.3 L1063.7,538.1 L1067.0,537.0 L1070.0,535.6 L1073.4,535.6 L1076.6,535.4 L1079.7,534.1 L1083.0,534.0 L1085.6,532.1 L1087.5,529.4 L1090.5,528.0 L1093.0,526.0 L1096.1,525.2 L1099.0,523.5 L1102.1,522.8 L1104.7,520.7 L1108.2,520.7 L1111.0,519.0 L1113.7,517.2 L1117.3,517.3 L1120.3,516.2 L1123.3,514.9 L1126.0,513.0 L1129.3,511.3 L1132.3,509.2 L1135.6,507.5 L1139.0,506.0 L1138.4,501.9 L1137.0,498.0 L1140.3,499.0 L1143.4,500.7 L1147.0,501.0 L1149.3,504.0 L1150.4,507.7 L1152.0,511.0 L1156.0,511.7 L1160.0,511.0 L1162.0,509.0"/>
<path d="M1133.0,295.0 L1133.8,298.1 L1134.9,301.0 L1136.7,303.8 L1137.6,306.8 L1138.4,309.9 L1139.0,313.0 L1138.9,316.3 L1139.5,319.6 L1141.2,322.6 L1140.5,326.0 L1142.6,329.0 L1142.2,332.4 L1142.1,335.7 L1143.7,338.7 L1144.0,342.0 L1142.0,345.0 L1141.2,348.4 L1141.0,352.0 L1139.0,355.0 L1137.2,358.2 L1135.1,361.1 L1133.4,364.3 L1131.0,367.0 L1130.6,370.0 L1131.0,373.0 L1133.9,374.8 L1135.7,377.9 L1138.7,379.5 L1141.5,381.4 L1143.4,384.3 L1146.5,386.0 L1148.4,388.8 L1151.0,391.0 L1150.2,393.9 L1150.2,397.0 L1150.1,400.0 L1150.5,403.1 L1149.3,406.0 L1149.0,409.0 L1151.2,411.7 L1152.0,415.1 L1154.4,417.7 L1155.3,421.1 L1157.0,424.0 L1156.8,427.0 L1156.2,430.0 L1155.2,433.0 L1155.6,436.1 L1155.1,439.1 L1154.0,442.0 L1151.8,445.7 L1151.0,450.0 L1153.3,453.2 L1154.5,457.0 L1157.0,460.0 L1158.1,462.9 L1160.4,465.0 L1162.5,467.1 L1164.3,469.6 L1164.8,472.9 L1167.0,475.0 L1168.3,478.5 L1168.3,482.3 L1169.0,486.0 L1168.1,488.9 L1167.9,492.0 L1166.4,494.6 L1166.1,497.7 L1164.6,500.4 L1163.7,503.2 L1163.1,506.2 L1162.0,509.0 L1164.2,506.6 L1166.9,504.9 L1169.2,502.6 L1172.0,501.0 L1177.0,504.0 L1179.5,506.1 L1181.4,508.7 L1182.5,511.9 L1185.0,514.0 L1188.0,514.8 L1190.8,516.3 L1194.2,515.7 L1196.8,518.1 L1200.0,518.1 L1203.0,519.0 L1205.2,521.4 L1207.9,523.1 L1210.3,525.3 L1213.0,527.0 L1216.2,526.0 L1219.6,526.4 L1222.7,524.9 L1226.0,525.0 L1225.1,528.6 L1224.3,532.3 L1222.4,535.6 L1221.0,539.0 L1223.0,541.4 L1225.3,543.4 L1226.5,546.5 L1229.6,547.8 L1230.9,550.8 L1233.4,552.7 L1234.9,555.4 L1236.6,558.0 L1239.0,560.0 L1242.2,558.3 L1244.6,555.3 L1247.7,553.6 L1251.0,552.0 L1250.5,548.3 L1250.5,544.5 L1249.0,541.0 L1252.1,540.7 L1255.0,542.3 L1257.9,543.0 L1260.9,543.7 L1264.1,543.4 L1266.9,544.8 L1270.0,544.8 L1272.9,546.1 L1276.2,545.0 L1278.9,547.2 L1282.0,547.0 L1282.9,550.0 L1283.7,553.0 L1285.0,555.8 L1285.0,559.0 L1288.5,560.3 L1291.3,562.9 L1294.6,564.5 L1298.0,566.0 L1301.1,566.6 L1303.8,568.0 L1306.8,568.8 L1309.6,570.1 L1312.5,571.2 L1315.3,572.6 L1318.0,574.0 L1318.9,577.3 L1320.5,580.2 L1322.4,582.9 L1324.5,585.5 L1326.1,588.4 L1327.3,591.5 L1328.7,594.5 L1331.0,597.0 L1331.0,600.0 L1333.4,602.1 L1336.2,603.5 L1339.0,605.0 L1341.7,602.9 L1345.1,601.9 L1348.3,600.5 L1351.3,598.8 L1353.6,596.0 L1357.0,595.0 L1358.3,597.8 L1360.6,600.0 L1362.5,602.3 L1363.0,605.7 L1365.1,607.9 L1366.6,610.6 L1369.2,612.5 L1369.8,615.8 L1372.0,618.0 L1375.5,617.5 L1378.8,616.2 L1381.9,614.7 L1385.0,613.0 L1388.4,612.8 L1391.6,612.0 L1394.8,610.9 L1398.0,609.9 L1401.4,609.8 L1404.6,609.0 L1407.9,608.4 L1411.0,607.0 L1414.4,608.2 L1417.2,610.8 L1420.7,611.6 L1424.0,613.0 L1427.2,610.9 L1428.8,607.2 L1432.0,605.0 L1435.0,606.2 L1438.2,606.3 L1441.4,605.7 L1444.4,607.1 L1447.7,606.4 L1450.8,606.7 L1453.9,607.5 L1457.0,608.0 L1459.7,609.4 L1461.9,611.5 L1463.9,613.9 L1466.6,615.4 L1469.0,617.2 L1471.8,618.5 L1473.8,620.9 L1476.2,622.6 L1479.0,624.0 L1482.1,625.8 L1485.2,627.7 L1488.5,629.0 L1492.0,630.0 L1495.0,630.6 L1498.2,630.8 L1500.9,632.5 L1504.0,633.0"/>
<path d="M1472.0,671.0 L1474.0,668.3 L1475.0,665.0 L1476.1,662.0 L1477.8,659.3 L1479.5,656.6 L1480.8,653.7 L1480.9,650.2 L1483.0,647.7 L1483.5,644.4 L1485.0,641.6 L1487.0,639.0 L1490.2,638.5 L1493.0,636.9 L1496.1,636.2 L1499.0,634.9 L1501.9,633.7 L1505.0,633.0"/>
<path d="M1504.0,633.0 L1502.0,630.0 L1500.8,626.6 L1500.1,623.0 L1498.0,620.0 L1497.8,616.8 L1496.8,613.8 L1496.0,610.7 L1495.9,607.5 L1496.2,604.2 L1495.3,601.2 L1495.0,598.0 L1497.0,595.7 L1499.0,593.5 L1499.8,590.3 L1502.4,588.5 L1503.3,585.4 L1506.2,583.8 L1507.0,580.7 L1509.0,578.3 L1511.7,576.6 L1512.7,573.6 L1514.2,571.0 L1517.0,569.3 L1518.4,566.5 L1520.0,564.0 L1522.9,562.1 L1524.6,559.1 L1527.1,556.9 L1530.1,555.1 L1531.9,552.1 L1534.9,550.4 L1536.2,547.0 L1539.0,545.0 L1542.0,543.3 L1543.9,540.2 L1547.0,538.5 L1549.1,535.6 L1552.0,533.7 L1555.0,532.0 L1556.2,529.0 L1555.8,525.7 L1556.8,522.6 L1556.3,519.4 L1556.9,516.2 L1556.9,513.0 L1558.0,510.0 L1556.6,507.2 L1555.6,504.2 L1553.5,501.7 L1551.8,499.1 L1551.2,495.9 L1549.6,493.2 L1547.8,490.6 L1546.0,488.0 L1544.1,485.1 L1543.9,481.6 L1542.4,478.5 L1542.1,475.0 L1539.9,472.3 L1539.0,469.0 L1537.8,465.6 L1536.2,462.4 L1534.3,459.3 L1533.0,456.0 L1533.8,452.8 L1534.8,449.6 L1536.0,446.4 L1536.0,443.0 L1536.6,439.6 L1537.0,436.2 L1538.6,432.9 L1537.6,429.3 L1539.0,426.0 L1536.3,423.5 L1533.2,421.7 L1530.1,419.9 L1527.0,418.0 L1523.6,416.1 L1520.6,413.6 L1517.0,412.0 L1519.4,409.7 L1521.1,406.8 L1522.9,404.1 L1523.7,400.7 L1526.0,398.3 L1527.6,395.3 L1530.0,393.0 L1533.3,392.5 L1536.3,391.2 L1538.8,388.7 L1542.0,388.0"/>
<path d="M1536.0,456.0 L1539.2,456.8 L1542.4,457.3 L1545.8,457.0 L1548.8,458.2 L1552.0,459.0 L1554.3,456.9 L1556.2,454.4 L1557.7,451.6 L1560.4,449.8 L1561.7,446.9 L1564.1,444.8 L1565.9,442.3 L1568.0,440.0 L1571.3,440.4 L1574.4,439.4 L1577.6,439.2 L1580.8,438.5 L1583.9,437.5 L1587.2,438.1 L1590.3,437.2 L1593.5,436.7 L1596.6,435.5 L1599.7,434.9 L1603.0,435.0 L1606.1,435.4 L1609.2,436.1 L1612.3,436.3 L1615.5,435.7 L1618.7,435.6 L1621.7,436.5 L1624.8,437.4 L1628.0,437.0 L1631.1,436.7 L1634.0,438.1 L1637.1,437.4 L1640.0,438.0 L1643.1,437.9 L1646.0,438.6 L1649.0,439.1 L1651.9,440.5 L1655.0,440.0"/>
<path d="M1364.0,256.0 L1367.0,257.3 L1370.2,256.3 L1373.3,257.0 L1376.2,258.6 L1379.5,257.7 L1382.5,258.3 L1385.6,259.0 L1388.7,258.8 L1391.8,259.5 L1394.8,260.2 L1397.9,260.6 L1400.8,262.1 L1404.1,261.3 L1407.2,261.6 L1410.1,263.3 L1413.3,263.0 L1416.3,264.1 L1419.4,264.2 L1422.4,264.9 L1425.6,264.5 L1428.8,264.6 L1431.7,266.1 L1434.8,266.1 L1437.9,266.7 L1441.0,267.0 L1444.0,267.1 L1447.0,267.0 L1450.0,265.8 L1453.0,265.8 L1456.1,266.5 L1459.0,265.6 L1462.0,264.9 L1465.0,265.2 L1468.0,264.3 L1471.0,265.0 L1473.9,263.4 L1477.0,264.6 L1480.0,263.9 L1483.0,263.2 L1486.1,264.0 L1489.0,262.6 L1492.0,262.3 L1494.9,261.7 L1498.0,262.3 L1501.0,262.0 L1503.6,263.6 L1506.5,264.7 L1509.5,265.5 L1512.0,267.3 L1515.0,268.0 L1517.5,269.8 L1519.3,272.3 L1520.8,275.0 L1522.4,277.7 L1524.8,279.6 L1526.7,281.9 L1529.0,284.0 L1529.5,287.2 L1531.2,289.9 L1532.0,293.0 L1531.8,296.2 L1532.8,299.1 L1534.2,301.9 L1534.7,305.0 L1534.6,308.1 L1536.0,310.9 L1536.9,313.9 L1537.0,317.0 L1537.1,320.3 L1538.4,323.3 L1539.1,326.4 L1539.6,329.6 L1539.9,332.9 L1541.9,335.7 L1542.0,339.0 L1542.8,342.0 L1543.0,345.0"/>
<path d="M1501.0,262.0 L1499.0,259.0 L1498.4,255.6 L1497.3,252.2 L1496.0,249.0 L1497.4,245.6 L1497.8,242.1 L1498.4,238.5 L1499.0,235.0"/>
<path d="M1627.0,235.0 L1627.2,238.2 L1626.9,241.3 L1627.4,244.5 L1626.4,247.7 L1626.5,250.8 L1627.0,254.0 L1629.3,256.1 L1632.5,256.7 L1634.6,259.1 L1637.2,260.8 L1640.0,262.0 L1643.0,262.0 L1646.0,262.7 L1649.0,262.7 L1652.0,262.4 L1655.0,262.0"/>
</g>

<rect x="954.8" y="498.8" width="4.4" height="4.4" rx="1.3" fill="#ff7f0e"/><rect x="963.8" y="506.8" width="4.4" height="4.4" rx="1.3" fill="#ff7f0e"/><rect x="945.8" y="517.8" width="4.4" height="4.4" rx="1.3" fill="#ff7f0e"/><rect x="944.8" y="526.8" width="4.4" height="4.4" rx="1.3" fill="#ff7f0e"/><rect x="856.8" y="516.8" width="4.4" height="4.4" rx="1.3" fill="#ff7f0e"/><rect x="1049.8" y="542.8" width="4.4" height="4.4" rx="1.3" fill="#ff7f0e"/><rect x="908.8" y="677.8" width="4.4" height="4.4" rx="1.3" fill="#ff7f0e"/><rect x="925.8" y="722.8" width="4.4" height="4.4" rx="1.3" fill="#ff7f0e"/><rect x="980.8" y="731.8" width="4.4" height="4.4" rx="1.3" fill="#ff7f0e"/><rect x="1012.8" y="729.8" width="4.4" height="4.4" rx="1.3" fill="#ff7f0e"/><rect x="878.8" y="757.8" width="4.4" height="4.4" rx="1.3" fill="#ff7f0e"/><rect x="838.8" y="799.8" width="4.4" height="4.4" rx="1.3" fill="#ff7f0e"/><rect x="862.8" y="840.8" width="4.4" height="4.4" rx="1.3" fill="#ff7f0e"/><rect x="1007.8" y="830.8" width="4.4" height="4.4" rx="1.3" fill="#ff7f0e"/><rect x="974.8" y="844.8" width="4.4" height="4.4" rx="1.3" fill="#ff7f0e"/><rect x="1068.8" y="789.8" width="4.4" height="4.4" rx="1.3" fill="#ff7f0e"/><rect x="1106.8" y="803.8" width="4.4" height="4.4" rx="1.3" fill="#ff7f0e"/><rect x="1132.8" y="765.8" width="4.4" height="4.4" rx="1.3" fill="#ff7f0e"/><rect x="1150.8" y="811.8" width="4.4" height="4.4" rx="1.3" fill="#ff7f0e"/><rect x="1076.8" y="836.8" width="4.4" height="4.4" rx="1.3" fill="#ff7f0e"/><rect x="1130.8" y="845.8" width="4.4" height="4.4" rx="1.3" fill="#ff7f0e"/><rect x="1172.8" y="847.8" width="4.4" height="4.4" rx="1.3" fill="#ff7f0e"/><rect x="1206.8" y="827.8" width="4.4" height="4.4" rx="1.3" fill="#ff7f0e"/><rect x="1210.8" y="708.8" width="4.4" height="4.4" rx="1.3" fill="#ff7f0e"/><rect x="1213.8" y="711.8" width="4.4" height="4.4" rx="1.3" fill="#ff7f0e"/><rect x="991.8" y="889.8" width="4.4" height="4.4" rx="1.3" fill="#ff7f0e"/><rect x="1314.8" y="562.8" width="4.4" height="4.4" rx="1.3" fill="#ff7f0e"/><rect x="1224.8" y="694.8" width="4.4" height="4.4" rx="1.3" fill="#ff7f0e"/><rect x="1209.8" y="707.8" width="4.4" height="4.4" rx="1.3" fill="#ff7f0e"/><rect x="1295.8" y="755.8" width="4.4" height="4.4" rx="1.3" fill="#ff7f0e"/><rect x="1420.8" y="839.8" width="4.4" height="4.4" rx="1.3" fill="#ff7f0e"/><rect x="1423.8" y="863.8" width="4.4" height="4.4" rx="1.3" fill="#ff7f0e"/><rect x="1205.8" y="826.8" width="4.4" height="4.4" rx="1.3" fill="#ff7f0e"/><rect x="1310.8" y="872.8" width="4.4" height="4.4" rx="1.3" fill="#ff7f0e"/><rect x="1254.8" y="888.8" width="4.4" height="4.4" rx="1.3" fill="#ff7f0e"/><rect x="1265.8" y="889.8" width="4.4" height="4.4" rx="1.3" fill="#ff7f0e"/><rect x="1594.8" y="863.8" width="4.4" height="4.4" rx="1.3" fill="#ff7f0e"/><rect x="1642.8" y="853.8" width="4.4" height="4.4" rx="1.3" fill="#ff7f0e"/><rect x="1647.8" y="845.8" width="4.4" height="4.4" rx="1.3" fill="#ff7f0e"/><rect x="1213.8" y="452.8" width="4.4" height="4.4" rx="1.3" fill="#ff7f0e"/><rect x="1208.8" y="458.8" width="4.4" height="4.4" rx="1.3" fill="#ff7f0e"/><rect x="770.8" y="487.8" width="4.4" height="4.4" rx="1.3" fill="#ff7f0e"/><rect x="648.8" y="788.8" width="4.4" height="4.4" rx="1.3" fill="#ff7f0e"/><rect x="466.8" y="826.8" width="4.4" height="4.4" rx="1.3" fill="#ff7f0e"/><rect x="1078.8" y="800.8" width="4.4" height="4.4" rx="1.3" fill="#ff7f0e"/><rect x="1081.8" y="803.8" width="4.4" height="4.4" rx="1.3" fill="#ff7f0e"/><rect x="1084.8" y="805.8" width="4.4" height="4.4" rx="1.3" fill="#ff7f0e"/><rect x="1092.8" y="805.8" width="4.4" height="4.4" rx="1.3" fill="#ff7f0e"/><rect x="1079.8" y="796.8" width="4.4" height="4.4" rx="1.3" fill="#ff7f0e"/><rect x="1089.8" y="803.8" width="4.4" height="4.4" rx="1.3" fill="#ff7f0e"/><rect x="1075.8" y="808.8" width="4.4" height="4.4" rx="1.3" fill="#ff7f0e"/><rect x="811.8" y="515.8" width="4.4" height="4.4" rx="1.3" fill="#1f77b4"/><rect x="833.8" y="799.8" width="4.4" height="4.4" rx="1.3" fill="#1f77b4"/><rect x="828.8" y="868.8" width="4.4" height="4.4" rx="1.3" fill="#1f77b4"/><rect x="1106.8" y="807.8" width="4.4" height="4.4" rx="1.3" fill="#1f77b4"/><rect x="996.8" y="891.8" width="4.4" height="4.4" rx="1.3" fill="#1f77b4"/><rect x="1003.8" y="889.8" width="4.4" height="4.4" rx="1.3" fill="#1f77b4"/><rect x="1347.8" y="730.8" width="4.4" height="4.4" rx="1.3" fill="#1f77b4"/><rect x="1426.8" y="822.8" width="4.4" height="4.4" rx="1.3" fill="#1f77b4"/><rect x="1425.8" y="852.8" width="4.4" height="4.4" rx="1.3" fill="#1f77b4"/><rect x="1423.8" y="860.8" width="4.4" height="4.4" rx="1.3" fill="#1f77b4"/><rect x="1218.8" y="855.8" width="4.4" height="4.4" rx="1.3" fill="#1f77b4"/><rect x="1295.8" y="868.8" width="4.4" height="4.4" rx="1.3" fill="#1f77b4"/><rect x="1259.8" y="890.8" width="4.4" height="4.4" rx="1.3" fill="#1f77b4"/><rect x="1480.8" y="888.8" width="4.4" height="4.4" rx="1.3" fill="#1f77b4"/><rect x="1650.8" y="841.8" width="4.4" height="4.4" rx="1.3" fill="#1f77b4"/><rect x="1207.8" y="454.8" width="4.4" height="4.4" rx="1.3" fill="#1f77b4"/><rect x="691.8" y="539.8" width="4.4" height="4.4" rx="1.3" fill="#1f77b4"/><rect x="1083.8" y="801.8" width="4.4" height="4.4" rx="1.3" fill="#1f77b4"/><rect x="1086.8" y="799.8" width="4.4" height="4.4" rx="1.3" fill="#1f77b4"/><rect x="1088.8" y="801.8" width="4.4" height="4.4" rx="1.3" fill="#1f77b4"/><rect x="1077.8" y="803.8" width="4.4" height="4.4" rx="1.3" fill="#1f77b4"/><rect x="1073.8" y="810.8" width="4.4" height="4.4" rx="1.3" fill="#1f77b4"/><rect x="1090.8" y="798.8" width="4.4" height="4.4" rx="1.3" fill="#2ca02c"/>
<circle cx="429" cy="328" r="2.5" fill="#111" stroke="#fff" stroke-width="1.3"/><circle cx="520" cy="466" r="2.5" fill="#111" stroke="#fff" stroke-width="1.3"/><circle cx="953" cy="322" r="2.5" fill="#111" stroke="#fff" stroke-width="1.3"/><circle cx="1098" cy="396" r="2.5" fill="#111" stroke="#fff" stroke-width="1.3"/><circle cx="1324" cy="263" r="2.5" fill="#111" stroke="#fff" stroke-width="1.3"/><circle cx="1403" cy="238" r="2.5" fill="#111" stroke="#fff" stroke-width="1.3"/><circle cx="1607" cy="240" r="2.5" fill="#111" stroke="#fff" stroke-width="1.3"/><circle cx="1424" cy="416" r="2.5" fill="#111" stroke="#fff" stroke-width="1.3"/><circle cx="1539" cy="426" r="2.5" fill="#111" stroke="#fff" stroke-width="1.3"/><circle cx="1113" cy="497" r="2.5" fill="#111" stroke="#fff" stroke-width="1.3"/><circle cx="1142" cy="562" r="2.5" fill="#111" stroke="#fff" stroke-width="1.3"/><circle cx="897" cy="560" r="2.5" fill="#111" stroke="#fff" stroke-width="1.3"/><circle cx="530" cy="601" r="2.5" fill="#111" stroke="#fff" stroke-width="1.3"/><circle cx="626" cy="643" r="2.5" fill="#111" stroke="#fff" stroke-width="1.3"/><circle cx="1553" cy="578" r="2.5" fill="#111" stroke="#fff" stroke-width="1.3"/><circle cx="1020" cy="689" r="2.5" fill="#111" stroke="#fff" stroke-width="1.3"/><circle cx="1226" cy="685" r="2.5" fill="#111" stroke="#fff" stroke-width="1.3"/><circle cx="1340" cy="730" r="2.5" fill="#111" stroke="#fff" stroke-width="1.3"/><circle cx="891" cy="738" r="2.5" fill="#111" stroke="#fff" stroke-width="1.3"/><circle cx="788" cy="810" r="2.5" fill="#111" stroke="#fff" stroke-width="1.3"/><circle cx="732" cy="839" r="2.5" fill="#111" stroke="#fff" stroke-width="1.3"/><circle cx="918" cy="856" r="2.5" fill="#111" stroke="#fff" stroke-width="1.3"/><circle cx="1052" cy="859" r="2.5" fill="#111" stroke="#fff" stroke-width="1.3"/><circle cx="500" cy="895" r="2.5" fill="#111" stroke="#fff" stroke-width="1.3"/><text x="424" y="267.6" font-size="23.7" font-weight="normal" text-anchor="middle" fill="#fff" stroke="#fff" stroke-width="3" stroke-linejoin="round" opacity="0.9" textLength="58" lengthAdjust="spacingAndGlyphs">United</text><text x="424" y="267.6" font-size="23.7" font-weight="normal" text-anchor="middle" fill="#0d0d0d" stroke="#0d0d0d" stroke-width="0.55" textLength="58" lengthAdjust="spacingAndGlyphs">United</text><text x="424" y="292.6" font-size="23.7" font-weight="normal" text-anchor="middle" fill="#fff" stroke="#fff" stroke-width="3" stroke-linejoin="round" opacity="0.9" textLength="79" lengthAdjust="spacingAndGlyphs">Kingdom</text><text x="424" y="292.6" font-size="23.7" font-weight="normal" text-anchor="middle" fill="#0d0d0d" stroke="#0d0d0d" stroke-width="0.55" textLength="79" lengthAdjust="spacingAndGlyphs">Kingdom</text><text x="429" y="341.3" font-size="13.2" font-weight="normal" text-anchor="middle" fill="#fff" stroke="#fff" stroke-width="3" stroke-linejoin="round" opacity="0.9" textLength="59" lengthAdjust="spacingAndGlyphs">Manchester</text><text x="429" y="341.3" font-size="13.2" font-weight="normal" text-anchor="middle" fill="#3a3a3a" textLength="59" lengthAdjust="spacingAndGlyphs">Manchester</text><text x="497" y="409.0" font-size="11" font-weight="bold" text-anchor="middle" fill="#fff" stroke="#fff" stroke-width="3" stroke-linejoin="round" opacity="0.9" textLength="66" lengthAdjust="spacing">ENGLAND</text><text x="497" y="409.0" font-size="11" font-weight="bold" text-anchor="middle" fill="#1a1a1a" textLength="66" lengthAdjust="spacing">ENGLAND</text><text x="385" y="412.0" font-size="11" font-weight="bold" text-anchor="middle" fill="#fff" stroke="#fff" stroke-width="3" stroke-linejoin="round" opacity="0.9" textLength="13" lengthAdjust="spacing">ES</text><text x="385" y="412.0" font-size="11" font-weight="bold" text-anchor="middle" fill="#1a1a1a" textLength="13" lengthAdjust="spacing">ES</text><text x="520" y="481.7" font-size="14.3" font-weight="normal" text-anchor="middle" fill="#fff" stroke="#fff" stroke-width="3" stroke-linejoin="round" opacity="0.9" textLength="43" lengthAdjust="spacingAndGlyphs">London</text><text x="520" y="481.7" font-size="14.3" font-weight="normal" text-anchor="middle" fill="#3a3a3a" textLength="43" lengthAdjust="spacingAndGlyphs">London</text><text x="766" y="430.4" font-size="16.9" font-weight="normal" text-anchor="middle" fill="#fff" stroke="#fff" stroke-width="3" stroke-linejoin="round" opacity="0.9" textLength="24" lengthAdjust="spacingAndGlyphs">The</text><text x="766" y="430.4" font-size="16.9" font-weight="normal" text-anchor="middle" fill="#0d0d0d" stroke="#0d0d0d" stroke-width="0.55" textLength="24" lengthAdjust="spacingAndGlyphs">The</text><text x="766" y="448.4" font-size="16.9" font-weight="normal" text-anchor="middle" fill="#fff" stroke="#fff" stroke-width="3" stroke-linejoin="round" opacity="0.9" textLength="85" lengthAdjust="spacingAndGlyphs">Netherlands</text><text x="766" y="448.4" font-size="16.9" font-weight="normal" text-anchor="middle" fill="#0d0d0d" stroke="#0d0d0d" stroke-width="0.55" textLength="85" lengthAdjust="spacingAndGlyphs">Netherlands</text><text x="953" y="338.7" font-size="14.3" font-weight="normal" text-anchor="middle" fill="#fff" stroke="#fff" stroke-width="3" stroke-linejoin="round" opacity="0.9" textLength="56" lengthAdjust="spacingAndGlyphs">Hamburg</text><text x="953" y="338.7" font-size="14.3" font-weight="normal" text-anchor="middle" fill="#3a3a3a" textLength="56" lengthAdjust="spacingAndGlyphs">Hamburg</text><text x="1098" y="411.7" font-size="14.3" font-weight="normal" text-anchor="middle" fill="#fff" stroke="#fff" stroke-width="3" stroke-linejoin="round" opacity="0.9" textLength="36" lengthAdjust="spacingAndGlyphs">Berlin</text><text x="1098" y="411.7" font-size="14.3" font-weight="normal" text-anchor="middle" fill="#3a3a3a" textLength="36" lengthAdjust="spacingAndGlyphs">Berlin</text><text x="1324" y="278.3" font-size="13.2" font-weight="normal" text-anchor="middle" fill="#fff" stroke="#fff" stroke-width="3" stroke-linejoin="round" opacity="0.9" textLength="37.5" lengthAdjust="spacingAndGlyphs">Gdansk</text><text x="1324" y="278.3" font-size="13.2" font-weight="normal" text-anchor="middle" fill="#3a3a3a" textLength="37.5" lengthAdjust="spacingAndGlyphs">Gdansk</text><text x="1403" y="251.3" font-size="13.2" font-weight="normal" text-anchor="middle" fill="#fff" stroke="#fff" stroke-width="3" stroke-linejoin="round" opacity="0.9" textLength="59" lengthAdjust="spacingAndGlyphs">Kaliningrad</text><text x="1403" y="251.3" font-size="13.2" font-weight="normal" text-anchor="middle" fill="#3a3a3a" textLength="59" lengthAdjust="spacingAndGlyphs">Kaliningrad</text><text x="1607" y="253.3" font-size="13.2" font-weight="normal" text-anchor="middle" fill="#fff" stroke="#fff" stroke-width="3" stroke-linejoin="round" opacity="0.9" textLength="35" lengthAdjust="spacingAndGlyphs">Vilnius</text><text x="1607" y="253.3" font-size="13.2" font-weight="normal" text-anchor="middle" fill="#3a3a3a" textLength="35" lengthAdjust="spacingAndGlyphs">Vilnius</text><text x="1351" y="429.8" font-size="21.5" font-weight="normal" text-anchor="middle" fill="#fff" stroke="#fff" stroke-width="3" stroke-linejoin="round" opacity="0.9" textLength="62" lengthAdjust="spacingAndGlyphs">Poland</text><text x="1351" y="429.8" font-size="21.5" font-weight="normal" text-anchor="middle" fill="#0d0d0d" stroke="#0d0d0d" stroke-width="0.55" textLength="62" lengthAdjust="spacingAndGlyphs">Poland</text><text x="1424" y="431.7" font-size="14.3" font-weight="normal" text-anchor="middle" fill="#fff" stroke="#fff" stroke-width="3" stroke-linejoin="round" opacity="0.9" textLength="48" lengthAdjust="spacingAndGlyphs">Warsaw</text><text x="1424" y="431.7" font-size="14.3" font-weight="normal" text-anchor="middle" fill="#3a3a3a" textLength="48" lengthAdjust="spacingAndGlyphs">Warsaw</text><text x="1539" y="439.3" font-size="13.2" font-weight="normal" text-anchor="middle" fill="#fff" stroke="#fff" stroke-width="3" stroke-linejoin="round" opacity="0.9" textLength="28" lengthAdjust="spacingAndGlyphs">Brest</text><text x="1539" y="439.3" font-size="13.2" font-weight="normal" text-anchor="middle" fill="#3a3a3a" textLength="28" lengthAdjust="spacingAndGlyphs">Brest</text><text x="954" y="498.8" font-size="21.5" font-weight="normal" text-anchor="middle" fill="#fff" stroke="#fff" stroke-width="3" stroke-linejoin="round" opacity="0.9" textLength="81" lengthAdjust="spacingAndGlyphs">Germany</text><text x="954" y="498.8" font-size="21.5" font-weight="normal" text-anchor="middle" fill="#0d0d0d" stroke="#0d0d0d" stroke-width="0.55" textLength="81" lengthAdjust="spacingAndGlyphs">Germany</text><text x="724" y="530.0" font-size="15.8" font-weight="normal" text-anchor="middle" fill="#fff" stroke="#fff" stroke-width="3" stroke-linejoin="round" opacity="0.9" textLength="54" lengthAdjust="spacingAndGlyphs">Belgium</text><text x="724" y="530.0" font-size="15.8" font-weight="normal" text-anchor="middle" fill="#0d0d0d" stroke="#0d0d0d" stroke-width="0.55" textLength="54" lengthAdjust="spacingAndGlyphs">Belgium</text><text x="1113" y="510.3" font-size="13.2" font-weight="normal" text-anchor="middle" fill="#fff" stroke="#fff" stroke-width="3" stroke-linejoin="round" opacity="0.9" textLength="42" lengthAdjust="spacingAndGlyphs">Dresden</text><text x="1113" y="510.3" font-size="13.2" font-weight="normal" text-anchor="middle" fill="#3a3a3a" textLength="42" lengthAdjust="spacingAndGlyphs">Dresden</text><text x="1142" y="555.7" font-size="14.3" font-weight="normal" text-anchor="middle" fill="#fff" stroke="#fff" stroke-width="3" stroke-linejoin="round" opacity="0.9" textLength="43" lengthAdjust="spacingAndGlyphs">Prague</text><text x="1142" y="555.7" font-size="14.3" font-weight="normal" text-anchor="middle" fill="#3a3a3a" textLength="43" lengthAdjust="spacingAndGlyphs">Prague</text><text x="1182" y="590.4" font-size="16.9" font-weight="normal" text-anchor="middle" fill="#fff" stroke="#fff" stroke-width="3" stroke-linejoin="round" opacity="0.9" textLength="51" lengthAdjust="spacingAndGlyphs">Czechia</text><text x="1182" y="590.4" font-size="16.9" font-weight="normal" text-anchor="middle" fill="#0d0d0d" stroke="#0d0d0d" stroke-width="0.55" textLength="51" lengthAdjust="spacingAndGlyphs">Czechia</text><text x="897" y="576.7" font-size="14.3" font-weight="normal" text-anchor="middle" fill="#fff" stroke="#fff" stroke-width="3" stroke-linejoin="round" opacity="0.9" textLength="56" lengthAdjust="spacingAndGlyphs">Frankfurt</text><text x="897" y="576.7" font-size="14.3" font-weight="normal" text-anchor="middle" fill="#3a3a3a" textLength="56" lengthAdjust="spacingAndGlyphs">Frankfurt</text><text x="786" y="587.7" font-size="14.7" font-weight="normal" text-anchor="middle" fill="#fff" stroke="#fff" stroke-width="3" stroke-linejoin="round" opacity="0.9" textLength="76" lengthAdjust="spacingAndGlyphs">Luxembourg</text><text x="786" y="587.7" font-size="14.7" font-weight="normal" text-anchor="middle" fill="#0d0d0d" stroke="#0d0d0d" stroke-width="0.55" textLength="76" lengthAdjust="spacingAndGlyphs">Luxembourg</text><text x="530" y="615.3" font-size="13.2" font-weight="normal" text-anchor="middle" fill="#fff" stroke="#fff" stroke-width="3" stroke-linejoin="round" opacity="0.9" textLength="45" lengthAdjust="spacingAndGlyphs">Le Havre</text><text x="530" y="615.3" font-size="13.2" font-weight="normal" text-anchor="middle" fill="#3a3a3a" textLength="45" lengthAdjust="spacingAndGlyphs">Le Havre</text><text x="626" y="658.7" font-size="14.3" font-weight="normal" text-anchor="middle" fill="#fff" stroke="#fff" stroke-width="3" stroke-linejoin="round" opacity="0.9" textLength="31" lengthAdjust="spacingAndGlyphs">Paris</text><text x="626" y="658.7" font-size="14.3" font-weight="normal" text-anchor="middle" fill="#3a3a3a" textLength="31" lengthAdjust="spacingAndGlyphs">Paris</text><text x="1553" y="592.3" font-size="13.2" font-weight="normal" text-anchor="middle" fill="#fff" stroke="#fff" stroke-width="3" stroke-linejoin="round" opacity="0.9" textLength="20" lengthAdjust="spacingAndGlyphs">Lviv</text><text x="1553" y="592.3" font-size="13.2" font-weight="normal" text-anchor="middle" fill="#3a3a3a" textLength="20" lengthAdjust="spacingAndGlyphs">Lviv</text><text x="1359" y="657.0" font-size="15.8" font-weight="normal" text-anchor="middle" fill="#fff" stroke="#fff" stroke-width="3" stroke-linejoin="round" opacity="0.9" textLength="56" lengthAdjust="spacingAndGlyphs">Slovakia</text><text x="1359" y="657.0" font-size="15.8" font-weight="normal" text-anchor="middle" fill="#0d0d0d" stroke="#0d0d0d" stroke-width="0.55" textLength="56" lengthAdjust="spacingAndGlyphs">Slovakia</text><text x="1020" y="683.7" font-size="14.3" font-weight="normal" text-anchor="middle" fill="#fff" stroke="#fff" stroke-width="3" stroke-linejoin="round" opacity="0.9" textLength="43" lengthAdjust="spacingAndGlyphs">Munich</text><text x="1020" y="683.7" font-size="14.3" font-weight="normal" text-anchor="middle" fill="#3a3a3a" textLength="43" lengthAdjust="spacingAndGlyphs">Munich</text><text x="1226" y="678.7" font-size="14.3" font-weight="normal" text-anchor="middle" fill="#fff" stroke="#fff" stroke-width="3" stroke-linejoin="round" opacity="0.9" textLength="40" lengthAdjust="spacingAndGlyphs">Vienna</text><text x="1226" y="678.7" font-size="14.3" font-weight="normal" text-anchor="middle" fill="#3a3a3a" textLength="40" lengthAdjust="spacingAndGlyphs">Vienna</text><text x="638" y="715.8" font-size="21.5" font-weight="normal" text-anchor="middle" fill="#fff" stroke="#fff" stroke-width="3" stroke-linejoin="round" opacity="0.9" textLength="62" lengthAdjust="spacingAndGlyphs">France</text><text x="638" y="715.8" font-size="21.5" font-weight="normal" text-anchor="middle" fill="#0d0d0d" stroke="#0d0d0d" stroke-width="0.55" textLength="62" lengthAdjust="spacingAndGlyphs">France</text><text x="1136" y="728.4" font-size="16.9" font-weight="normal" text-anchor="middle" fill="#fff" stroke="#fff" stroke-width="3" stroke-linejoin="round" opacity="0.9" textLength="47" lengthAdjust="spacingAndGlyphs">Austria</text><text x="1136" y="728.4" font-size="16.9" font-weight="normal" text-anchor="middle" fill="#0d0d0d" stroke="#0d0d0d" stroke-width="0.55" textLength="47" lengthAdjust="spacingAndGlyphs">Austria</text><text x="1340" y="723.3" font-size="13.2" font-weight="normal" text-anchor="middle" fill="#fff" stroke="#fff" stroke-width="3" stroke-linejoin="round" opacity="0.9" textLength="56" lengthAdjust="spacingAndGlyphs">Budapest</text><text x="1340" y="723.3" font-size="13.2" font-weight="normal" text-anchor="middle" fill="#3a3a3a" textLength="56" lengthAdjust="spacingAndGlyphs">Budapest</text><text x="891" y="731.7" font-size="14.3" font-weight="normal" text-anchor="middle" fill="#fff" stroke="#fff" stroke-width="3" stroke-linejoin="round" opacity="0.9" textLength="38" lengthAdjust="spacingAndGlyphs">Zurich</text><text x="891" y="731.7" font-size="14.3" font-weight="normal" text-anchor="middle" fill="#3a3a3a" textLength="38" lengthAdjust="spacingAndGlyphs">Zurich</text><text x="1359" y="764.8" font-size="21.5" font-weight="normal" text-anchor="middle" fill="#fff" stroke="#fff" stroke-width="3" stroke-linejoin="round" opacity="0.9" textLength="76" lengthAdjust="spacingAndGlyphs">Hungary</text><text x="1359" y="764.8" font-size="21.5" font-weight="normal" text-anchor="middle" fill="#0d0d0d" stroke="#0d0d0d" stroke-width="0.55" textLength="76" lengthAdjust="spacingAndGlyphs">Hungary</text><text x="877" y="779.4" font-size="16.9" font-weight="normal" text-anchor="middle" fill="#fff" stroke="#fff" stroke-width="3" stroke-linejoin="round" opacity="0.9" textLength="78" lengthAdjust="spacingAndGlyphs">Switzerland</text><text x="877" y="779.4" font-size="16.9" font-weight="normal" text-anchor="middle" fill="#0d0d0d" stroke="#0d0d0d" stroke-width="0.55" textLength="78" lengthAdjust="spacingAndGlyphs">Switzerland</text><text x="788" y="805.3" font-size="13.2" font-weight="normal" text-anchor="middle" fill="#fff" stroke="#fff" stroke-width="3" stroke-linejoin="round" opacity="0.9" textLength="42" lengthAdjust="spacingAndGlyphs">Geneva</text><text x="788" y="805.3" font-size="13.2" font-weight="normal" text-anchor="middle" fill="#3a3a3a" textLength="42" lengthAdjust="spacingAndGlyphs">Geneva</text><text x="1154" y="818.4" font-size="16.9" font-weight="normal" text-anchor="middle" fill="#fff" stroke="#fff" stroke-width="3" stroke-linejoin="round" opacity="0.9" textLength="55" lengthAdjust="spacingAndGlyphs">Slovenia</text><text x="1154" y="818.4" font-size="16.9" font-weight="normal" text-anchor="middle" fill="#0d0d0d" stroke="#0d0d0d" stroke-width="0.55" textLength="55" lengthAdjust="spacingAndGlyphs">Slovenia</text><text x="732" y="834.3" font-size="13.2" font-weight="normal" text-anchor="middle" fill="#fff" stroke="#fff" stroke-width="3" stroke-linejoin="round" opacity="0.9" textLength="23" lengthAdjust="spacingAndGlyphs">Lyon</text><text x="732" y="834.3" font-size="13.2" font-weight="normal" text-anchor="middle" fill="#3a3a3a" textLength="23" lengthAdjust="spacingAndGlyphs">Lyon</text><text x="918" y="850.7" font-size="14.3" font-weight="normal" text-anchor="middle" fill="#fff" stroke="#fff" stroke-width="3" stroke-linejoin="round" opacity="0.9" textLength="33" lengthAdjust="spacingAndGlyphs">Milan</text><text x="918" y="850.7" font-size="14.3" font-weight="normal" text-anchor="middle" fill="#3a3a3a" textLength="33" lengthAdjust="spacingAndGlyphs">Milan</text><text x="1239" y="850.4" font-size="16.9" font-weight="normal" text-anchor="middle" fill="#fff" stroke="#fff" stroke-width="3" stroke-linejoin="round" opacity="0.9" textLength="48" lengthAdjust="spacingAndGlyphs">Croatia</text><text x="1239" y="850.4" font-size="16.9" font-weight="normal" text-anchor="middle" fill="#0d0d0d" stroke="#0d0d0d" stroke-width="0.55" textLength="48" lengthAdjust="spacingAndGlyphs">Croatia</text><text x="1052" y="853.3" font-size="13.2" font-weight="normal" text-anchor="middle" fill="#fff" stroke="#fff" stroke-width="3" stroke-linejoin="round" opacity="0.9" textLength="34" lengthAdjust="spacingAndGlyphs">Venice</text><text x="1052" y="853.3" font-size="13.2" font-weight="normal" text-anchor="middle" fill="#3a3a3a" textLength="34" lengthAdjust="spacingAndGlyphs">Venice</text><text x="1594" y="839.8" font-size="21.5" font-weight="normal" text-anchor="middle" fill="#fff" stroke="#fff" stroke-width="3" stroke-linejoin="round" opacity="0.9" textLength="79" lengthAdjust="spacingAndGlyphs">Romania</text><text x="1594" y="839.8" font-size="21.5" font-weight="normal" text-anchor="middle" fill="#0d0d0d" stroke="#0d0d0d" stroke-width="0.55" textLength="79" lengthAdjust="spacingAndGlyphs">Romania</text><text x="500" y="889.3" font-size="13.2" font-weight="normal" text-anchor="middle" fill="#fff" stroke="#fff" stroke-width="3" stroke-linejoin="round" opacity="0.9" textLength="49" lengthAdjust="spacingAndGlyphs">Bordeaux</text><text x="500" y="889.3" font-size="13.2" font-weight="normal" text-anchor="middle" fill="#3a3a3a" textLength="49" lengthAdjust="spacingAndGlyphs">Bordeaux</text>
<rect x="1543" y="259" width="78" height="129" fill="#fff"/><rect x="1565" y="276.0" width="8" height="8" fill="#ff7f0e"/><text x="1587" y="284.5" font-size="12.5" fill="#333">5</text><rect x="1565" y="293.5" width="8" height="8" fill="#1f77b4"/><text x="1587" y="302.0" font-size="12.5" fill="#333">6</text><rect x="1565" y="311.0" width="8" height="8" fill="#2ca02c"/><text x="1587" y="319.5" font-size="12.5" fill="#333">7</text><rect x="1565" y="328.5" width="8" height="8" fill="#d62728"/><text x="1587" y="337.0" font-size="12.5" fill="#333">8</text><rect x="1565" y="346.0" width="8" height="8" fill="#8c564b"/><text x="1587" y="354.5" font-size="12.5" fill="#333">9</text><rect x="1565" y="363.5" width="8" height="8" fill="#9467bd"/><text x="1587" y="372.0" font-size="12.5" fill="#333">10</text>
<rect x="1385" y="876" width="270" height="20" fill="#fff" fill-opacity="0.55"/>
<text x="1377" y="889.5" font-size="12" fill="#333">Be</text>
<text x="1390" y="889.5" font-size="12" fill="#333">© Mapbox © OpenStreetMap</text>
<text x="1650" y="889.5" font-size="12" font-weight="bold" fill="#333" text-anchor="end">Improve this map</text>
<g transform="translate(385,868)"><circle cx="10.5" cy="10" r="9.3" fill="#f4fbfd" stroke="#4d7482" stroke-opacity="0.8" stroke-width="1.1"/><path d="M7,15 L7,10 A4.5,4.5 0 1 1 11.5,14.5 Z" fill="#4f8191"/><path d="M11.5,7.5 L12.2,9.3 L14,10 L12.2,10.7 L11.5,12.5 L10.8,10.7 L9,10 L10.8,9.3Z" fill="#fff"/>
<text x="23" y="15" font-size="16" font-weight="normal" fill="#fff" stroke="#4d7482" stroke-width="1.6" stroke-opacity="0.75" paint-order="stroke" textLength="60" lengthAdjust="spacingAndGlyphs">mapbox</text>
<text x="23" y="15" font-size="16" font-weight="normal" fill="#fff" stroke="#fff" stroke-width="0.6" textLength="60" lengthAdjust="spacingAndGlyphs">mapbox</text></g>
</svg></div>
</body></html>
